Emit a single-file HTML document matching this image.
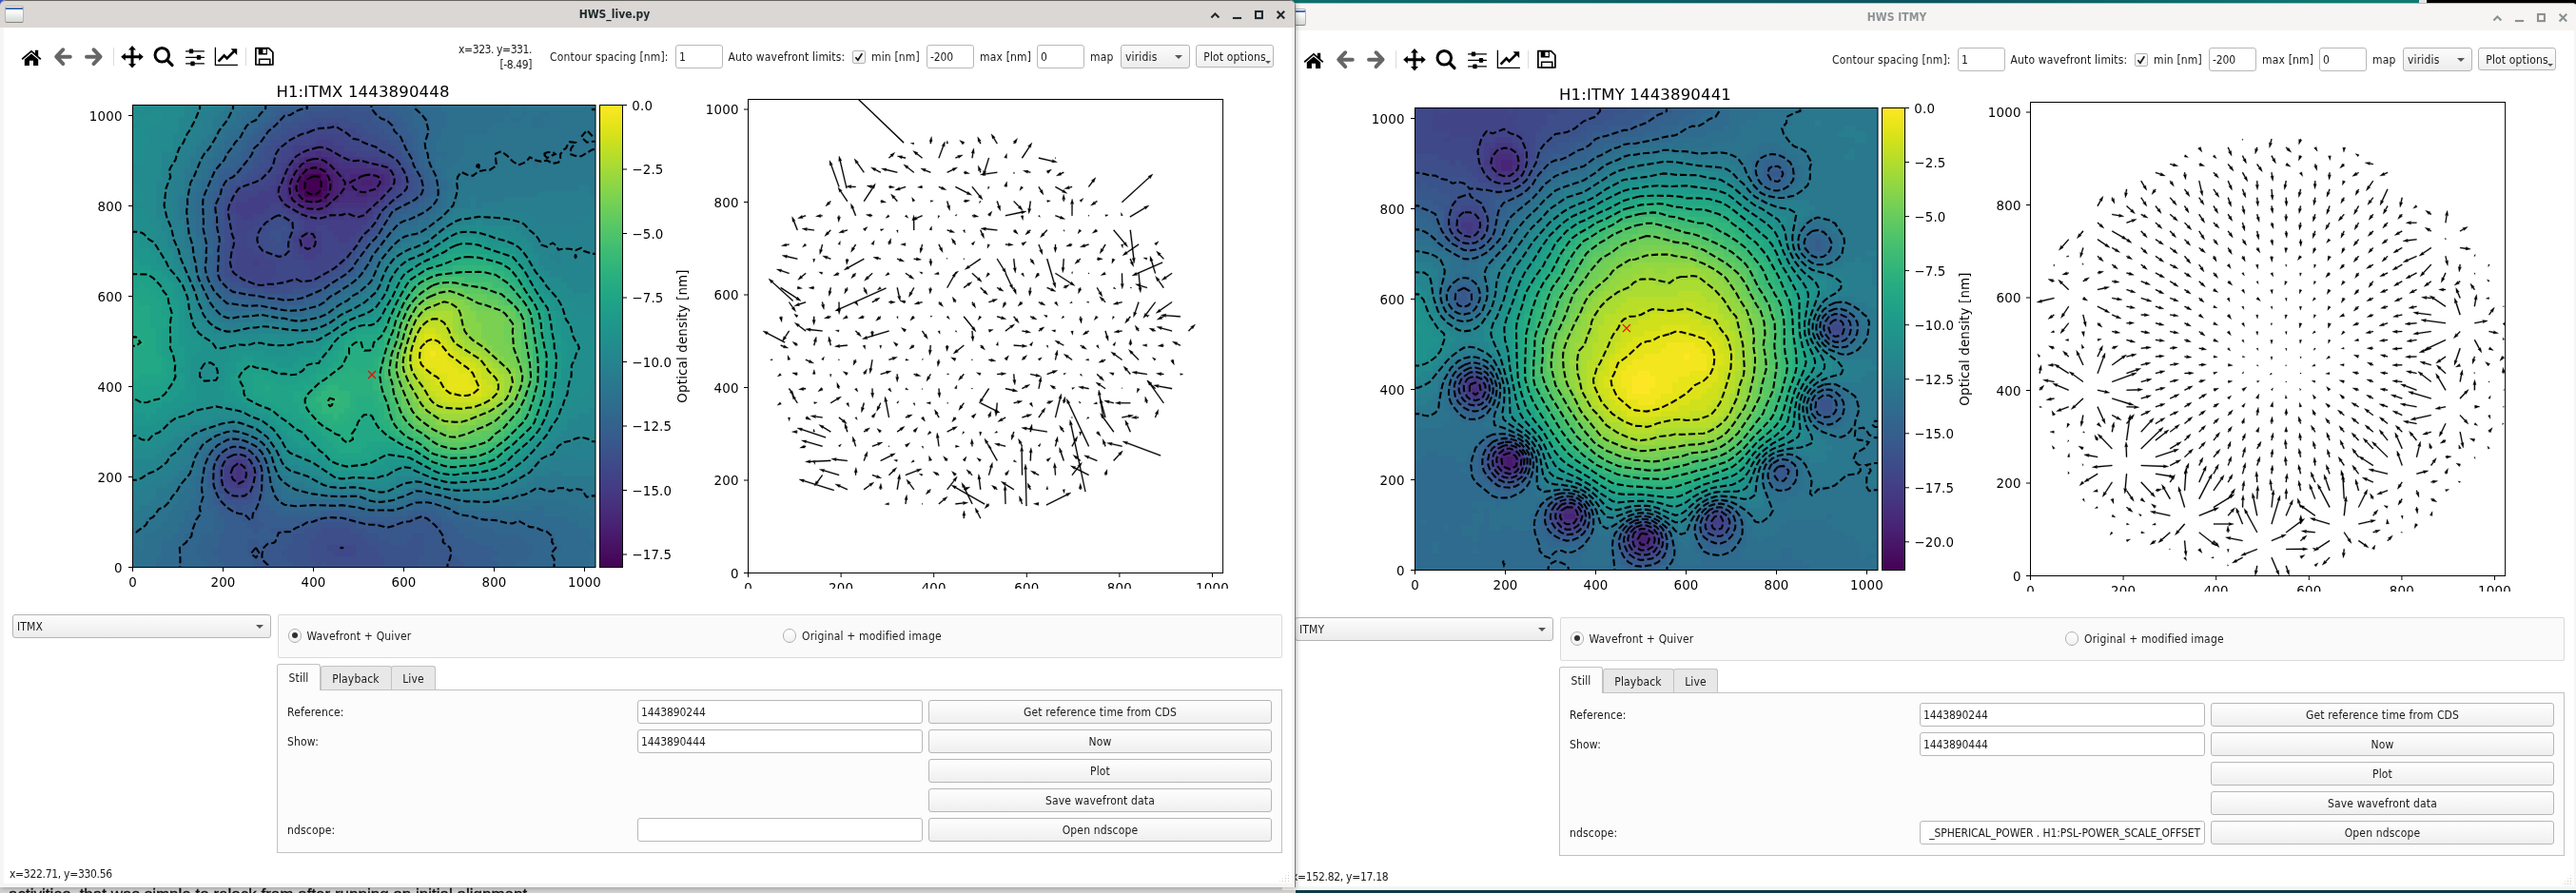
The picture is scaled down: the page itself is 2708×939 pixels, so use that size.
<!DOCTYPE html><html><head><meta charset="utf-8"><title>HWS</title><style>
html,body{margin:0;padding:0}
body{width:2708px;height:939px;overflow:hidden;position:relative;background:#0b3b47;font-family:'DejaVu Sans Condensed','DejaVu Sans','Liberation Sans',sans-serif;font-size:12px;color:#1a1a1a;letter-spacing:.17px}
div{box-sizing:border-box}
.topstrip{position:absolute;left:1356px;top:0;width:1187px;height:4px;background:linear-gradient(90deg,#0c6f6d,#0a5560 55%,#0e7a72 95%)}
.topw{position:absolute;left:2543px;top:0;width:8px;height:3px;background:#e4e4e4}
.topk{position:absolute;left:2551px;top:0;width:157px;height:4px;background:#000}
.botl{will-change:transform;position:absolute;left:0;top:930px;width:1362px;height:9px;background:#d2d2d2;overflow:hidden;font-family:'Liberation Sans',sans-serif;font-size:17px;letter-spacing:0;color:#111;white-space:nowrap}
.botl span{position:absolute;left:9px;top:0.5px;-webkit-text-stroke:.35px #111}
.botr{position:absolute;left:1362px;top:934px;width:1346px;height:5px;background:#0a3c49}
.win{position:absolute;width:1362px;height:933px;overflow:hidden}
#wx{left:0;top:0;z-index:3}
#wy{left:1348px;top:3px;z-index:2}
.win{background:#f6f5f4;border-radius:6px 6px 0 0}
.win.act{box-shadow:1px 1px 5px rgba(0,0,0,.28)}
.tbar{position:absolute;left:0;top:0;width:1362px;height:29px;background:#dbd7d4;border-top:1px solid #65625f;border-radius:6px 6px 0 0}
.inact .tbar{background:#f6f5f4;border-top-color:#bdbbb9}
.act{border-right:1px solid #7c7a78}
.ttl{position:absolute;left:346px;width:600px;top:6px;text-align:center;font-weight:bold;font-size:12px;letter-spacing:0;color:#1e282c;line-height:16px}
.inact .ttl{color:#8e9295}
.wicon{position:absolute;left:5px;top:4.5px;width:20px;height:18px;border:1px solid #b4b5b3;border-bottom-color:#858684;border-radius:2.5px;background:linear-gradient(#ffffff 25%,#d3d9d4);overflow:hidden}
.wicon i{position:absolute;left:0;top:1px;width:18px;height:2.2px;background:#4870ad}
.wb{position:absolute;left:1268px;top:6px}
.body{position:absolute;left:4px;top:29px;width:1354px;height:900px;background:#fff}
.body>*{position:absolute}
.body{will-change:transform}.tbar{will-change:transform}
.tb{left:-4px;top:13px}
.coords{left:355px;top:15px;width:200px;text-align:right;line-height:16px;white-space:nowrap;letter-spacing:-.42px}
.lbl{top:23px;line-height:16px;white-space:nowrap;margin-left:-4px}
.lbl2{line-height:16px;white-space:nowrap;margin-left:-4px;margin-top:-29px}
.inp{height:25px;margin:-29px 0 0 -4px;border:1px solid #b8b8b8;border-radius:3px;background:#fff;padding:1px 0 0 3px;line-height:23px;white-space:nowrap;overflow:hidden;letter-spacing:-.1px}
.inp.r{display:flex;justify-content:flex-end;padding:1px 4px 0 0}
.combo{height:25px;margin:-29px 0 0 -4px;border:1px solid #b4b4b4;border-radius:3px;background:linear-gradient(#fcfcfc,#ececec);padding-left:4px;line-height:25px}
.combo b,.popt b{position:absolute;width:0;height:0;border:4px solid transparent;border-top:4.5px solid #555;border-bottom:0}
.combo b{right:7px;top:10px}
.popt{line-height:24px}.popt b{right:2px;top:16px;border-width:3px;border-top-width:3.5px}
.btn{margin:-29px 0 0 -4px;border:1px solid #b6b6b6;border-radius:3px;background:linear-gradient(#fefefe,#efefef);text-align:center;line-height:25px;white-space:nowrap}
.chk{left:892px;top:23.5px;width:14px;height:14px;border:1px solid #b4b4b4;border-radius:2px;background:linear-gradient(#fdfdfd,#f0f0f0)}
.chk svg{position:absolute;left:0;top:0}
.fig{left:9px;top:56px;overflow:hidden}
.gbox{left:288px;top:617px;width:1056px;height:46px;border:1px solid #dadada;border-radius:2px;background:#fafafa}
.radio{top:632px;width:14.5px;height:14.5px;margin-left:-4px;border:1px solid #b0b0b0;border-radius:50%;background:linear-gradient(#fff,#f1f1f1)}
.radio.on:after{content:"";position:absolute;left:3.2px;top:3.2px;width:6px;height:6px;border-radius:50%;background:#303030}
.pane{left:287px;top:695.5px;width:1057px;height:172px;border:1px solid #c2c2c2;background:#fcfcfc}
.tab{top:670.5px;height:25.5px;border:1px solid #c2c2c2;border-bottom:0;border-radius:3px 3px 0 0;background:#e8e8e8;text-align:center;line-height:26px;margin-left:-4px}
.tab.sel{top:668.5px;height:28px;background:#fcfcfc;line-height:29px;z-index:2}
.status{left:6px;top:882px;line-height:16px;white-space:nowrap;letter-spacing:-.3px}
.grip{left:1340px;top:887px;width:12px;height:12px;background:radial-gradient(circle,#c8c8c8 0.7px,transparent 0.9px) 0 0/3px 3px;clip-path:polygon(100% 0,100% 100%,0 100%)}
</style></head><body><svg width="0" height="0" style="position:absolute"><defs><linearGradient id="vir" x1="0" y1="0" x2="0" y2="1"><stop offset="0.0000" stop-color="#fde725"/><stop offset="0.0312" stop-color="#ece51b"/><stop offset="0.0625" stop-color="#d8e219"/><stop offset="0.0938" stop-color="#c2df23"/><stop offset="0.1250" stop-color="#addc30"/><stop offset="0.1562" stop-color="#98d83e"/><stop offset="0.1875" stop-color="#84d44b"/><stop offset="0.2188" stop-color="#70cf57"/><stop offset="0.2500" stop-color="#5ec962"/><stop offset="0.2812" stop-color="#4ec36b"/><stop offset="0.3125" stop-color="#3fbc73"/><stop offset="0.3438" stop-color="#32b67a"/><stop offset="0.3750" stop-color="#28ae80"/><stop offset="0.4062" stop-color="#22a785"/><stop offset="0.4375" stop-color="#1fa088"/><stop offset="0.4688" stop-color="#1f988b"/><stop offset="0.5000" stop-color="#21918c"/><stop offset="0.5312" stop-color="#23898e"/><stop offset="0.5625" stop-color="#26828e"/><stop offset="0.5938" stop-color="#297a8e"/><stop offset="0.6250" stop-color="#2c728e"/><stop offset="0.6562" stop-color="#2f6b8e"/><stop offset="0.6875" stop-color="#33638d"/><stop offset="0.7188" stop-color="#375b8d"/><stop offset="0.7500" stop-color="#3b528b"/><stop offset="0.7812" stop-color="#3e4989"/><stop offset="0.8125" stop-color="#424086"/><stop offset="0.8438" stop-color="#453781"/><stop offset="0.8750" stop-color="#472d7b"/><stop offset="0.9062" stop-color="#482374"/><stop offset="0.9375" stop-color="#48186a"/><stop offset="0.9688" stop-color="#470d60"/><stop offset="1.0000" stop-color="#440154"/></linearGradient></defs></svg><div style="position:absolute;left:0;top:0;width:8px;height:8px;background:#3b55c4"></div><div class="topstrip"></div><div class="topw"></div><div class="topk"></div><div class="botl"><span>activities, that was simple to relock from after running an initial alignment.</span></div><div class="botr"></div><div class="win inact" id="wy"><div class="tbar"><div class="wicon"><i></i></div><div class="ttl">HWS ITMY</div><svg class="wb" width="90" height="16" viewBox="1268 7 90 16" fill="none" stroke="#8b9092" stroke-width="2.1">
<path d="M1273.4 18.4l4-4 4 4"/><path d="M1295.9 19h9.2"/><rect x="1320" y="12" width="6.9" height="7.1"/><path d="M1342.6 11.8l7.6 7.6M1350.2 11.8l-7.6 7.6"/></svg></div><div class="body">
<svg class="tb" width="300" height="34" viewBox="0 42 300 34">
 <g fill="#000">
  <path d="M22.6 61.6L33 52.8l3.9 3.3V52.8h3.3v6.1l3.2 2.7-1.1 1.3L33 55.1 23.7 62.9z"/>
  <path d="M25.8 62.6L33 56.5l7.2 6.1V69h-5.2v-5.2h-4.1V69h-5.1z"/>
 </g>
 <g fill="none" stroke="#666" stroke-width="3.9" stroke-linecap="round" stroke-linejoin="round">
  <path d="M66.3 52.2L59.2 59.7l7.1 7.5M60 59.7H73.8"/>
  <path d="M98.5 52.2l7.1 7.5-7.1 7.5M104.8 59.7H91"/>
 </g>
 <path d="M119.5 50v19M258.5 50v19" stroke="#dcdcdc" stroke-width="1"/>
 <g fill="#000">
  <path d="M139 47.9l4 4.6h-2.5v5.7h5.7v-2.5l4.6 4-4.6 4v-2.5h-5.7v5.7h2.5l-4 4.6-4-4.6h2.5v-5.7h-5.7v2.5l-4.6-4 4.6-4v2.5h5.7v-5.7h-2.5z"/>
 </g>
 <circle cx="170.3" cy="57.8" r="7.3" fill="none" stroke="#000" stroke-width="3"/>
 <path d="M175.6 63.1l5.4 5.4" stroke="#000" stroke-width="3.2" stroke-linecap="round"/>
 <g stroke="#000" stroke-width="1.3" stroke-linecap="round"><path d="M195.6 53.9h18.8M195.6 60.4h18.8M195.6 66.9h18.8"/></g>
 <g fill="#000"><rect x="198.8" y="51.6" width="4.4" height="4.6" rx="0.8"/><rect x="206.8" y="58.1" width="4.4" height="4.6" rx="0.8"/><rect x="200.3" y="64.6" width="4.4" height="4.6" rx="0.8"/></g>
 <path d="M226.4 49.8V68.4H249.9" fill="none" stroke="#000" stroke-width="1.3"/>
 <path d="M229.6 64.6l6-6.2 3 3 7.4-7.4" fill="none" stroke="#000" stroke-width="2.6"/>
 <path d="M242.6 51.3h6.6v6.6z" fill="#000"/>
 <path d="M268.9 50.6h13.6l4.4 4.4v13H268.9z" fill="none" stroke="#000" stroke-width="1.7" stroke-linejoin="round"/>
 <path d="M271.7 50.6h9.2v7h-9.2z M276.4 52h3.3v4.1h-3.3z" fill="#000" fill-rule="evenodd"/>
 <path d="M272.6 62.2h11.2v5.8h-11.2z" fill="none" stroke="#000" stroke-width="1.5"/>
</svg><div class="coords"></div><div class="lbl" style="left:578px">Contour spacing [nm]:</div><div class="inp" style="left:710px;top:47px;width:50px">1</div><div class="lbl" style="left:765.5px">Auto wavefront limits:</div><div class="chk"><svg width="12" height="12" viewBox="0 0 12 12"><path d="M2.4 6.2l2.5 3 4.4-7" fill="none" stroke="#1a1a1a" stroke-width="1.7"/></svg></div><div class="lbl" style="left:916px">min [nm]</div><div class="inp" style="left:974px;top:47px;width:50px">-200</div><div class="lbl" style="left:1030px">max [nm]</div><div class="inp" style="left:1090px;top:47px;width:50px">0</div><div class="lbl" style="left:1146px">map</div><div class="combo" style="left:1178px;top:47px;width:73px">viridis<b></b></div><div class="btn popt" style="left:1257px;top:47px;width:82px;height:24px">Plot options<b></b></div><svg class="fig" width="1336" height="534" viewBox="13 85 1336 534" font-family="'DejaVu Sans','Liberation Sans',sans-serif" fill="#000"><g shape-rendering="crispEdges"><path fill="#481b6d" d="M236 477h6v6h-6zM236 483h6v6h-6z"/><path fill="#482173" d="M230 477h6v6h-6zM242 477h6v6h-6zM230 483h6v6h-6zM242 483h6v6h-6zM374 561h12v6h-12z"/><path fill="#482677" d="M230 165h12v6h-12zM230 171h12v6h-12zM230 471h12v6h-12zM296 537h12v6h-12zM374 555h12v6h-12zM374 567h12v6h-12z"/><path fill="#472d7b" d="M224 159h18v6h-18zM224 165h6v6h-6zM242 165h6v6h-6zM224 171h6v6h-6zM200 405h6v6h-6zM242 471h6v6h-6zM224 477h6v6h-6zM236 489h6v6h-6zM296 531h12v6h-12zM368 561h6v6h-6zM386 561h6v6h-6z"/><path fill="#46337f" d="M224 153h18v6h-18zM218 159h6v6h-6zM242 159h6v6h-6zM218 165h6v6h-6zM242 171h6v6h-6zM224 177h18v6h-18zM194 399h12v6h-12zM194 405h6v6h-6zM248 477h6v6h-6zM224 483h6v6h-6zM230 489h6v6h-6zM242 489h6v6h-6zM290 537h6v6h-6zM308 537h6v6h-6zM296 543h12v6h-12zM368 555h6v6h-6zM386 555h6v6h-6zM368 567h6v6h-6zM386 567h6v6h-6z"/><path fill="#453882" d="M224 147h18v6h-18zM218 153h6v6h-6zM242 153h6v6h-6zM248 159h6v6h-6zM212 165h6v6h-6zM248 165h6v6h-6zM218 171h6v6h-6zM248 171h6v6h-6zM242 177h6v6h-6zM188 231h12v6h-12zM194 237h6v6h-6zM200 393h6v6h-6zM206 399h6v6h-6zM206 405h6v6h-6zM200 411h6v6h-6zM230 465h12v6h-12zM224 471h6v6h-6zM248 483h6v6h-6zM290 531h6v6h-6zM308 531h6v6h-6zM290 543h6v6h-6zM374 549h12v6h-12zM374 573h12v6h-12z"/><path fill="#433e85" d="M224 141h18v6h-18zM212 147h12v6h-12zM242 147h6v6h-6zM212 153h6v6h-6zM248 153h6v6h-6zM212 159h6v6h-6zM212 171h6v6h-6zM218 177h6v6h-6zM248 177h6v6h-6zM224 183h18v6h-18zM188 225h18v6h-18zM200 231h6v6h-6zM188 237h6v6h-6zM200 237h6v6h-6zM194 393h6v6h-6zM194 411h6v6h-6zM206 411h6v6h-6zM242 465h6v6h-6zM248 471h6v6h-6zM224 489h6v6h-6zM248 489h6v6h-6zM236 495h6v6h-6zM296 525h12v6h-12zM308 543h6v6h-6zM452 543h12v6h-12zM296 549h12v6h-12zM362 561h6v6h-6zM392 561h6v6h-6zM368 573h6v6h-6zM386 573h6v6h-6z"/><path fill="#414487" d="M158 111h6v6h-6zM176 111h60v6h-60zM242 111h6v6h-6zM158 117h90v6h-90zM158 123h84v6h-84zM158 129h90v6h-90zM176 135h78v6h-78zM170 141h6v6h-6zM200 141h24v6h-24zM242 141h12v6h-12zM200 147h12v6h-12zM248 147h12v6h-12zM200 153h12v6h-12zM254 153h6v6h-6zM206 159h6v6h-6zM254 159h6v6h-6zM206 165h6v6h-6zM254 165h6v6h-6zM206 171h6v6h-6zM212 177h6v6h-6zM218 183h6v6h-6zM242 183h6v6h-6zM188 219h18v6h-18zM182 225h6v6h-6zM206 225h6v6h-6zM182 231h6v6h-6zM206 231h6v6h-6zM182 237h6v6h-6zM188 243h12v6h-12zM206 393h6v6h-6zM188 399h6v6h-6zM188 405h6v6h-6zM224 465h6v6h-6zM218 477h6v6h-6zM218 483h6v6h-6zM230 495h6v6h-6zM242 495h6v6h-6zM290 525h6v6h-6zM284 537h6v6h-6zM452 537h12v6h-12zM368 549h6v6h-6zM386 549h6v6h-6zM452 549h12v6h-12zM362 555h6v6h-6zM362 567h6v6h-6zM392 567h6v6h-6z"/><path fill="#3f4889" d="M140 111h18v6h-18zM164 111h12v6h-12zM236 111h6v6h-6zM248 111h42v6h-42zM140 117h18v6h-18zM248 117h30v6h-30zM140 123h18v6h-18zM242 123h36v6h-36zM140 129h18v6h-18zM248 129h24v6h-24zM140 135h36v6h-36zM254 135h12v6h-12zM140 141h30v6h-30zM176 141h24v6h-24zM254 141h12v6h-12zM140 147h60v6h-60zM260 147h6v6h-6zM140 153h60v6h-60zM260 153h6v6h-6zM164 159h42v6h-42zM260 159h6v6h-6zM176 165h6v6h-6zM188 165h18v6h-18zM194 171h12v6h-12zM254 171h6v6h-6zM200 177h12v6h-12zM206 183h12v6h-12zM248 183h6v6h-6zM218 189h24v6h-24zM188 213h18v6h-18zM182 219h6v6h-6zM206 219h6v6h-6zM176 231h6v6h-6zM206 237h6v6h-6zM200 243h6v6h-6zM578 339h12v6h-12zM200 387h6v6h-6zM188 393h6v6h-6zM212 399h6v6h-6zM212 405h6v6h-6zM188 411h6v6h-6zM200 417h6v6h-6zM218 471h6v6h-6zM224 495h6v6h-6zM308 525h6v6h-6zM284 531h6v6h-6zM314 537h6v6h-6zM284 543h6v6h-6zM446 543h6v6h-6zM464 543h6v6h-6zM290 549h6v6h-6zM308 549h6v6h-6zM446 549h6v6h-6zM392 555h6v6h-6zM362 573h6v6h-6zM392 573h6v6h-6zM374 579h12v6h-12z"/><path fill="#3d4e8a" d="M290 111h42v6h-42zM278 117h48v6h-48zM278 123h36v6h-36zM272 129h30v6h-30zM266 135h18v6h-18zM266 141h12v6h-12zM266 147h6v6h-6zM140 159h24v6h-24zM140 165h36v6h-36zM182 165h6v6h-6zM260 165h6v6h-6zM140 171h54v6h-54zM164 177h36v6h-36zM254 177h6v6h-6zM194 183h12v6h-12zM200 189h18v6h-18zM242 189h6v6h-6zM224 195h6v6h-6zM182 207h24v6h-24zM176 213h12v6h-12zM206 213h6v6h-6zM176 219h6v6h-6zM176 225h6v6h-6zM212 225h6v6h-6zM212 231h6v6h-6zM176 237h6v6h-6zM182 243h6v6h-6zM206 243h6v6h-6zM188 249h12v6h-12zM578 333h12v6h-12zM572 339h6v6h-6zM578 345h12v6h-12zM194 387h6v6h-6zM212 411h6v6h-6zM194 417h6v6h-6zM206 417h6v6h-6zM236 459h6v6h-6zM248 465h6v6h-6zM254 477h6v6h-6zM254 483h6v6h-6zM218 489h6v6h-6zM248 495h6v6h-6zM314 531h6v6h-6zM446 537h6v6h-6zM464 537h6v6h-6zM314 543h6v6h-6zM464 549h6v6h-6zM296 555h12v6h-12zM446 555h18v6h-18zM368 579h6v6h-6zM386 579h6v6h-6z"/><path fill="#3a538b" d="M332 111h30v6h-30zM326 117h24v6h-24zM314 123h24v6h-24zM302 129h18v6h-18zM284 135h30v6h-30zM278 141h24v6h-24zM272 147h18v6h-18zM266 153h12v6h-12zM266 159h6v6h-6zM266 165h6v6h-6zM260 171h6v6h-6zM140 177h24v6h-24zM260 177h6v6h-6zM140 183h54v6h-54zM254 183h6v6h-6zM140 189h6v6h-6zM152 189h48v6h-48zM248 189h6v6h-6zM164 195h60v6h-60zM230 195h12v6h-12zM176 201h42v6h-42zM176 207h6v6h-6zM206 207h12v6h-12zM170 213h6v6h-6zM212 213h6v6h-6zM170 219h6v6h-6zM212 219h6v6h-6zM170 225h6v6h-6zM170 231h6v6h-6zM212 237h6v6h-6zM176 243h6v6h-6zM182 249h6v6h-6zM200 249h6v6h-6zM572 333h6v6h-6zM590 339h6v6h-6zM572 345h6v6h-6zM206 387h6v6h-6zM212 393h6v6h-6zM182 399h6v6h-6zM182 405h6v6h-6zM188 417h6v6h-6zM566 417h12v6h-12zM566 423h12v6h-12zM230 459h6v6h-6zM218 465h6v6h-6zM212 477h6v6h-6zM212 483h6v6h-6zM230 501h18v6h-18zM296 519h12v6h-12zM284 525h6v6h-6zM452 531h12v6h-12zM278 537h6v6h-6zM278 543h6v6h-6zM374 543h12v6h-12zM284 549h6v6h-6zM314 549h6v6h-6zM362 549h6v6h-6zM392 549h6v6h-6zM440 549h6v6h-6zM290 555h6v6h-6zM464 555h6v6h-6zM356 561h6v6h-6zM398 561h6v6h-6zM356 567h6v6h-6zM398 567h6v6h-6zM362 579h6v6h-6zM392 579h6v6h-6z"/><path fill="#38588c" d="M362 111h24v6h-24zM350 117h30v6h-30zM338 123h30v6h-30zM320 129h24v6h-24zM314 135h12v6h-12zM302 141h18v6h-18zM290 147h18v6h-18zM278 153h24v6h-24zM272 159h12v6h-12zM272 165h6v6h-6zM266 171h6v6h-6zM512 177h12v6h-12zM260 183h6v6h-6zM146 189h6v6h-6zM254 189h6v6h-6zM140 195h24v6h-24zM242 195h12v6h-12zM140 201h36v6h-36zM218 201h24v6h-24zM158 207h18v6h-18zM218 207h6v6h-6zM164 213h6v6h-6zM218 213h6v6h-6zM218 219h6v6h-6zM218 225h6v6h-6zM218 231h6v6h-6zM170 237h6v6h-6zM212 243h6v6h-6zM206 249h6v6h-6zM194 255h6v6h-6zM188 303h6v6h-6zM182 309h12v6h-12zM578 327h12v6h-12zM590 333h6v6h-6zM590 345h6v6h-6zM578 351h12v6h-12zM188 387h6v6h-6zM182 393h6v6h-6zM182 411h6v6h-6zM212 417h6v6h-6zM560 417h6v6h-6zM194 423h12v6h-12zM560 423h6v6h-6zM566 429h12v6h-12zM224 459h6v6h-6zM242 459h6v6h-6zM212 471h6v6h-6zM254 471h6v6h-6zM212 489h6v6h-6zM254 489h6v6h-6zM518 489h12v6h-12zM218 495h6v6h-6zM518 495h12v6h-12zM224 501h6v6h-6zM290 519h6v6h-6zM314 525h6v6h-6zM278 531h6v6h-6zM368 543h6v6h-6zM386 543h6v6h-6zM440 543h6v6h-6zM470 543h6v6h-6zM470 549h6v6h-6zM308 555h6v6h-6zM356 555h6v6h-6zM398 555h6v6h-6zM440 555h6v6h-6zM452 561h12v6h-12zM356 573h6v6h-6zM398 573h6v6h-6zM368 585h24v6h-24z"/><path fill="#365d8d" d="M386 111h24v6h-24zM380 117h18v6h-18zM368 123h18v6h-18zM344 129h30v6h-30zM326 135h30v6h-30zM320 141h12v6h-12zM308 147h18v6h-18zM302 153h12v6h-12zM284 159h18v6h-18zM278 165h6v6h-6zM272 171h6v6h-6zM512 171h12v6h-12zM266 177h6v6h-6zM506 177h6v6h-6zM524 177h6v6h-6zM512 183h12v6h-12zM260 189h6v6h-6zM254 195h6v6h-6zM242 201h6v6h-6zM140 207h18v6h-18zM224 207h12v6h-12zM140 213h24v6h-24zM224 213h6v6h-6zM158 219h12v6h-12zM224 219h6v6h-6zM164 225h6v6h-6zM164 231h6v6h-6zM164 237h6v6h-6zM218 237h6v6h-6zM170 243h6v6h-6zM218 243h6v6h-6zM176 249h6v6h-6zM212 249h6v6h-6zM560 249h6v6h-6zM188 255h6v6h-6zM200 255h12v6h-12zM560 255h6v6h-6zM188 297h6v6h-6zM182 303h6v6h-6zM194 303h6v6h-6zM194 309h6v6h-6zM182 315h18v6h-18zM572 327h6v6h-6zM590 327h6v6h-6zM566 339h6v6h-6zM572 351h6v6h-6zM590 351h6v6h-6zM194 381h12v6h-12zM212 387h6v6h-6zM218 399h6v6h-6zM218 405h6v6h-6zM566 411h12v6h-12zM182 417h6v6h-6zM578 417h6v6h-6zM188 423h6v6h-6zM206 423h6v6h-6zM578 423h6v6h-6zM560 429h6v6h-6zM218 459h6v6h-6zM212 465h6v6h-6zM524 483h6v6h-6zM530 489h6v6h-6zM212 495h6v6h-6zM254 495h6v6h-6zM218 501h6v6h-6zM248 501h6v6h-6zM236 507h6v6h-6zM284 519h6v6h-6zM308 519h6v6h-6zM278 525h6v6h-6zM446 531h6v6h-6zM464 531h6v6h-6zM320 537h6v6h-6zM440 537h6v6h-6zM470 537h6v6h-6zM278 549h6v6h-6zM284 555h6v6h-6zM314 555h6v6h-6zM470 555h6v6h-6zM290 561h18v6h-18zM446 561h6v6h-6zM464 561h6v6h-6zM356 579h6v6h-6zM398 579h6v6h-6zM362 585h6v6h-6zM392 585h6v6h-6z"/><path fill="#33628d" d="M410 111h24v6h-24zM398 117h24v6h-24zM386 123h30v6h-30zM374 129h24v6h-24zM356 135h24v6h-24zM332 141h24v6h-24zM326 147h12v6h-12zM314 153h12v6h-12zM302 159h18v6h-18zM284 165h18v6h-18zM506 165h18v6h-18zM278 171h12v6h-12zM506 171h6v6h-6zM524 171h6v6h-6zM272 177h6v6h-6zM266 183h6v6h-6zM506 183h6v6h-6zM524 183h6v6h-6zM512 189h12v6h-12zM248 201h6v6h-6zM236 207h12v6h-12zM230 213h6v6h-6zM140 219h18v6h-18zM230 219h6v6h-6zM152 225h12v6h-12zM224 225h6v6h-6zM158 231h6v6h-6zM224 231h6v6h-6zM224 237h6v6h-6zM164 243h6v6h-6zM554 243h12v6h-12zM170 249h6v6h-6zM554 249h6v6h-6zM566 249h6v6h-6zM182 255h6v6h-6zM554 255h6v6h-6zM566 255h6v6h-6zM194 261h6v6h-6zM182 297h6v6h-6zM194 297h6v6h-6zM176 303h6v6h-6zM200 303h6v6h-6zM176 309h6v6h-6zM200 309h6v6h-6zM188 321h6v6h-6zM566 333h6v6h-6zM596 333h6v6h-6zM596 339h6v6h-6zM566 345h6v6h-6zM596 345h6v6h-6zM206 381h6v6h-6zM182 387h6v6h-6zM218 393h6v6h-6zM176 399h6v6h-6zM176 405h6v6h-6zM176 411h6v6h-6zM218 411h6v6h-6zM560 411h6v6h-6zM578 411h6v6h-6zM212 423h6v6h-6zM194 429h12v6h-12zM578 429h6v6h-6zM566 435h12v6h-12zM248 459h6v6h-6zM254 465h6v6h-6zM206 471h6v6h-6zM206 477h6v6h-6zM206 483h6v6h-6zM518 483h6v6h-6zM530 483h6v6h-6zM206 489h6v6h-6zM512 489h6v6h-6zM512 495h6v6h-6zM530 495h6v6h-6zM518 501h18v6h-18zM224 507h12v6h-12zM242 507h6v6h-6zM272 531h6v6h-6zM320 531h6v6h-6zM272 537h6v6h-6zM272 543h6v6h-6zM320 543h6v6h-6zM362 543h6v6h-6zM476 543h6v6h-6zM272 549h6v6h-6zM320 549h6v6h-6zM356 549h6v6h-6zM398 549h6v6h-6zM434 549h6v6h-6zM476 549h6v6h-6zM278 555h6v6h-6zM284 561h6v6h-6zM308 561h6v6h-6zM350 561h6v6h-6zM440 561h6v6h-6zM470 561h6v6h-6zM350 567h6v6h-6zM404 567h6v6h-6zM446 567h24v6h-24zM350 573h6v6h-6zM404 573h6v6h-6zM356 585h6v6h-6zM398 585h6v6h-6zM362 591h30v6h-30z"/><path fill="#31668e" d="M434 111h18v6h-18zM422 117h18v6h-18zM416 123h18v6h-18zM398 129h18v6h-18zM380 135h30v6h-30zM356 141h24v6h-24zM338 147h18v6h-18zM326 153h12v6h-12zM320 159h6v6h-6zM512 159h12v6h-12zM302 165h18v6h-18zM500 165h6v6h-6zM524 165h6v6h-6zM290 171h12v6h-12zM500 171h6v6h-6zM530 171h6v6h-6zM278 177h6v6h-6zM500 177h6v6h-6zM530 177h6v6h-6zM272 183h6v6h-6zM500 183h6v6h-6zM530 183h6v6h-6zM266 189h6v6h-6zM506 189h6v6h-6zM524 189h6v6h-6zM260 195h6v6h-6zM254 201h6v6h-6zM248 207h6v6h-6zM236 213h12v6h-12zM236 219h6v6h-6zM140 225h12v6h-12zM230 225h6v6h-6zM140 231h18v6h-18zM230 231h6v6h-6zM152 237h12v6h-12zM158 243h6v6h-6zM224 243h6v6h-6zM566 243h6v6h-6zM164 249h6v6h-6zM218 249h6v6h-6zM548 249h6v6h-6zM572 249h6v6h-6zM176 255h6v6h-6zM212 255h6v6h-6zM548 255h6v6h-6zM572 255h6v6h-6zM182 261h12v6h-12zM200 261h12v6h-12zM554 261h18v6h-18zM182 291h18v6h-18zM176 297h6v6h-6zM200 297h6v6h-6zM176 315h6v6h-6zM200 315h6v6h-6zM182 321h6v6h-6zM194 321h6v6h-6zM578 321h12v6h-12zM596 327h6v6h-6zM596 351h6v6h-6zM578 357h18v6h-18zM188 381h6v6h-6zM176 393h6v6h-6zM566 405h12v6h-12zM176 417h6v6h-6zM218 417h6v6h-6zM554 417h6v6h-6zM584 417h6v6h-6zM182 423h6v6h-6zM554 423h6v6h-6zM584 423h6v6h-6zM188 429h6v6h-6zM206 429h6v6h-6zM584 429h6v6h-6zM560 435h6v6h-6zM578 435h6v6h-6zM218 453h24v6h-24zM212 459h6v6h-6zM206 465h6v6h-6zM200 477h6v6h-6zM260 477h6v6h-6zM200 483h6v6h-6zM260 483h6v6h-6zM512 483h6v6h-6zM200 489h6v6h-6zM536 489h6v6h-6zM206 495h6v6h-6zM536 495h6v6h-6zM206 501h12v6h-12zM254 501h6v6h-6zM512 501h6v6h-6zM218 507h6v6h-6zM248 507h6v6h-6zM518 507h12v6h-12zM224 513h18v6h-18zM296 513h6v6h-6zM278 519h6v6h-6zM272 525h6v6h-6zM452 525h12v6h-12zM470 531h6v6h-6zM266 537h6v6h-6zM476 537h6v6h-6zM266 543h6v6h-6zM392 543h6v6h-6zM434 543h6v6h-6zM266 549h6v6h-6zM266 555h12v6h-12zM320 555h6v6h-6zM350 555h6v6h-6zM404 555h6v6h-6zM434 555h6v6h-6zM476 555h6v6h-6zM272 561h12v6h-12zM314 561h6v6h-6zM404 561h6v6h-6zM476 561h6v6h-6zM278 567h36v6h-36zM440 567h6v6h-6zM470 567h6v6h-6zM446 573h24v6h-24zM350 579h6v6h-6zM404 579h6v6h-6zM350 585h6v6h-6zM356 591h6v6h-6zM392 591h6v6h-6z"/><path fill="#2f6b8e" d="M452 111h18v6h-18zM440 117h30v6h-30zM434 123h36v6h-36zM416 129h48v6h-48zM410 135h36v6h-36zM380 141h30v6h-30zM356 147h18v6h-18zM338 153h12v6h-12zM512 153h6v6h-6zM326 159h12v6h-12zM500 159h12v6h-12zM524 159h6v6h-6zM320 165h6v6h-6zM494 165h6v6h-6zM530 165h6v6h-6zM302 171h18v6h-18zM494 171h6v6h-6zM536 171h6v6h-6zM284 177h18v6h-18zM494 177h6v6h-6zM536 177h6v6h-6zM278 183h12v6h-12zM536 183h6v6h-6zM272 189h6v6h-6zM500 189h6v6h-6zM530 189h6v6h-6zM266 195h6v6h-6zM512 195h18v6h-18zM260 201h6v6h-6zM254 207h6v6h-6zM248 213h6v6h-6zM242 219h6v6h-6zM236 225h6v6h-6zM140 237h12v6h-12zM230 237h6v6h-6zM554 237h18v6h-18zM140 243h18v6h-18zM230 243h6v6h-6zM548 243h6v6h-6zM572 243h6v6h-6zM158 249h6v6h-6zM224 249h6v6h-6zM164 255h12v6h-12zM218 255h6v6h-6zM176 261h6v6h-6zM212 261h6v6h-6zM572 261h6v6h-6zM188 267h18v6h-18zM560 267h6v6h-6zM188 273h6v6h-6zM182 285h18v6h-18zM176 291h6v6h-6zM200 291h6v6h-6zM170 297h6v6h-6zM170 303h6v6h-6zM206 303h6v6h-6zM170 309h6v6h-6zM206 309h6v6h-6zM176 321h6v6h-6zM200 321h6v6h-6zM572 321h6v6h-6zM590 321h6v6h-6zM566 327h6v6h-6zM602 333h6v6h-6zM602 339h6v6h-6zM602 345h6v6h-6zM566 351h6v6h-6zM572 357h6v6h-6zM194 375h12v6h-12zM182 381h6v6h-6zM212 381h6v6h-6zM176 387h6v6h-6zM218 387h6v6h-6zM578 405h6v6h-6zM584 411h6v6h-6zM176 423h6v6h-6zM218 423h6v6h-6zM182 429h6v6h-6zM212 429h6v6h-6zM554 429h6v6h-6zM188 435h24v6h-24zM584 435h6v6h-6zM566 441h18v6h-18zM212 453h6v6h-6zM242 453h6v6h-6zM206 459h6v6h-6zM200 465h6v6h-6zM152 471h12v6h-12zM194 471h12v6h-12zM146 477h36v6h-36zM194 477h6v6h-6zM518 477h18v6h-18zM140 483h60v6h-60zM536 483h6v6h-6zM140 489h48v6h-48zM194 489h6v6h-6zM260 489h6v6h-6zM140 495h66v6h-66zM260 495h6v6h-6zM140 501h66v6h-66zM536 501h6v6h-6zM140 507h78v6h-78zM254 507h6v6h-6zM512 507h6v6h-6zM530 507h6v6h-6zM140 513h84v6h-84zM242 513h12v6h-12zM290 513h6v6h-6zM302 513h6v6h-6zM140 519h108v6h-108zM314 519h6v6h-6zM140 525h60v6h-60zM224 525h6v6h-6zM266 525h6v6h-6zM320 525h6v6h-6zM446 525h6v6h-6zM464 525h6v6h-6zM140 531h66v6h-66zM212 531h6v6h-6zM266 531h6v6h-6zM440 531h6v6h-6zM140 537h60v6h-60zM212 537h6v6h-6zM260 537h6v6h-6zM368 537h18v6h-18zM434 537h6v6h-6zM140 543h6v6h-6zM152 543h48v6h-48zM212 543h6v6h-6zM260 543h6v6h-6zM482 543h6v6h-6zM140 549h30v6h-30zM176 549h12v6h-12zM206 549h12v6h-12zM230 549h12v6h-12zM260 549h6v6h-6zM482 549h6v6h-6zM140 555h48v6h-48zM206 555h60v6h-60zM482 555h6v6h-6zM140 561h60v6h-60zM206 561h66v6h-66zM320 561h6v6h-6zM344 561h6v6h-6zM434 561h6v6h-6zM482 561h6v6h-6zM140 567h18v6h-18zM164 567h114v6h-114zM314 567h6v6h-6zM344 567h6v6h-6zM410 567h6v6h-6zM434 567h6v6h-6zM476 567h12v6h-12zM140 573h18v6h-18zM164 573h36v6h-36zM206 573h114v6h-114zM344 573h6v6h-6zM410 573h6v6h-6zM434 573h12v6h-12zM470 573h12v6h-12zM524 573h12v6h-12zM140 579h174v6h-174zM344 579h6v6h-6zM410 579h6v6h-6zM440 579h42v6h-42zM524 579h12v6h-12zM140 585h174v6h-174zM344 585h6v6h-6zM404 585h12v6h-12zM440 585h108v6h-108zM140 591h216v6h-216zM398 591h156v6h-156z"/><path fill="#2d708e" d="M470 111h30v6h-30zM470 117h30v6h-30zM470 123h18v6h-18zM464 129h18v6h-18zM446 135h36v6h-36zM410 141h66v6h-66zM374 147h30v6h-30zM410 147h12v6h-12zM428 147h24v6h-24zM500 147h24v6h-24zM350 153h12v6h-12zM494 153h18v6h-18zM518 153h12v6h-12zM338 159h12v6h-12zM488 159h12v6h-12zM530 159h12v6h-12zM326 165h12v6h-12zM488 165h6v6h-6zM536 165h6v6h-6zM320 171h6v6h-6zM542 171h6v6h-6zM302 177h18v6h-18zM542 177h6v6h-6zM290 183h12v6h-12zM494 183h6v6h-6zM542 183h6v6h-6zM278 189h12v6h-12zM536 189h6v6h-6zM272 195h6v6h-6zM506 195h6v6h-6zM530 195h6v6h-6zM266 201h6v6h-6zM260 207h6v6h-6zM254 213h6v6h-6zM248 219h6v6h-6zM242 225h6v6h-6zM236 231h6v6h-6zM554 231h18v6h-18zM236 237h6v6h-6zM548 237h6v6h-6zM572 237h6v6h-6zM578 243h6v6h-6zM140 249h18v6h-18zM230 249h6v6h-6zM542 249h6v6h-6zM578 249h6v6h-6zM158 255h6v6h-6zM224 255h6v6h-6zM578 255h6v6h-6zM170 261h6v6h-6zM218 261h6v6h-6zM548 261h6v6h-6zM578 261h6v6h-6zM176 267h12v6h-12zM206 267h6v6h-6zM554 267h6v6h-6zM566 267h12v6h-12zM176 273h12v6h-12zM194 273h12v6h-12zM176 279h30v6h-30zM176 285h6v6h-6zM200 285h6v6h-6zM170 291h6v6h-6zM206 291h6v6h-6zM206 297h6v6h-6zM170 315h6v6h-6zM206 315h6v6h-6zM578 315h12v6h-12zM596 321h6v6h-6zM182 327h18v6h-18zM602 327h6v6h-6zM560 339h6v6h-6zM608 339h6v6h-6zM602 351h6v6h-6zM596 357h6v6h-6zM584 363h12v6h-12zM188 375h6v6h-6zM206 375h6v6h-6zM170 399h6v6h-6zM224 399h6v6h-6zM170 405h6v6h-6zM224 405h6v6h-6zM560 405h6v6h-6zM584 405h6v6h-6zM170 411h6v6h-6zM224 411h6v6h-6zM554 411h6v6h-6zM590 411h6v6h-6zM170 417h6v6h-6zM590 417h6v6h-6zM170 423h6v6h-6zM590 423h6v6h-6zM176 429h6v6h-6zM590 429h6v6h-6zM176 435h12v6h-12zM212 435h6v6h-6zM554 435h6v6h-6zM590 435h6v6h-6zM170 441h42v6h-42zM560 441h6v6h-6zM584 441h6v6h-6zM140 447h96v6h-96zM140 453h72v6h-72zM140 459h66v6h-66zM140 465h60v6h-60zM140 471h12v6h-12zM164 471h30v6h-30zM260 471h6v6h-6zM140 477h6v6h-6zM182 477h12v6h-12zM536 477h6v6h-6zM542 483h6v6h-6zM188 489h6v6h-6zM506 489h6v6h-6zM542 489h6v6h-6zM506 495h6v6h-6zM542 495h6v6h-6zM260 501h6v6h-6zM506 501h6v6h-6zM542 501h6v6h-6zM260 507h6v6h-6zM536 507h12v6h-12zM254 513h12v6h-12zM284 513h6v6h-6zM308 513h6v6h-6zM512 513h30v6h-30zM248 519h30v6h-30zM518 519h12v6h-12zM200 525h24v6h-24zM230 525h36v6h-36zM470 525h6v6h-6zM206 531h6v6h-6zM218 531h48v6h-48zM476 531h6v6h-6zM200 537h12v6h-12zM218 537h42v6h-42zM326 537h6v6h-6zM386 537h6v6h-6zM482 537h6v6h-6zM572 537h6v6h-6zM146 543h6v6h-6zM200 543h12v6h-12zM218 543h42v6h-42zM326 543h6v6h-6zM356 543h6v6h-6zM398 543h6v6h-6zM530 543h42v6h-42zM170 549h6v6h-6zM188 549h18v6h-18zM218 549h12v6h-12zM242 549h18v6h-18zM326 549h6v6h-6zM350 549h6v6h-6zM404 549h6v6h-6zM428 549h6v6h-6zM488 549h6v6h-6zM524 549h54v6h-54zM188 555h18v6h-18zM326 555h6v6h-6zM344 555h6v6h-6zM428 555h6v6h-6zM488 555h6v6h-6zM518 555h72v6h-72zM200 561h6v6h-6zM326 561h18v6h-18zM410 561h6v6h-6zM428 561h6v6h-6zM488 561h12v6h-12zM506 561h96v6h-96zM158 567h6v6h-6zM320 567h24v6h-24zM416 567h6v6h-6zM428 567h6v6h-6zM488 567h120v6h-120zM620 567h6v6h-6zM158 573h6v6h-6zM200 573h6v6h-6zM320 573h24v6h-24zM416 573h18v6h-18zM482 573h42v6h-42zM536 573h72v6h-72zM314 579h30v6h-30zM416 579h24v6h-24zM482 579h42v6h-42zM536 579h72v6h-72zM614 579h12v6h-12zM314 585h30v6h-30zM416 585h24v6h-24zM548 585h72v6h-72zM554 591h72v6h-72z"/><path fill="#2c738e" d="M500 111h48v6h-48zM500 117h36v6h-36zM488 123h48v6h-48zM482 129h48v6h-48zM482 135h48v6h-48zM476 141h54v6h-54zM404 147h6v6h-6zM422 147h6v6h-6zM452 147h48v6h-48zM524 147h12v6h-12zM362 153h36v6h-36zM410 153h84v6h-84zM530 153h24v6h-24zM350 159h12v6h-12zM476 159h12v6h-12zM542 159h12v6h-12zM338 165h6v6h-6zM482 165h6v6h-6zM542 165h18v6h-18zM326 171h12v6h-12zM488 171h6v6h-6zM548 171h6v6h-6zM320 177h6v6h-6zM488 177h6v6h-6zM548 177h6v6h-6zM302 183h18v6h-18zM548 183h6v6h-6zM290 189h12v6h-12zM494 189h6v6h-6zM542 189h12v6h-12zM278 195h6v6h-6zM500 195h6v6h-6zM536 195h12v6h-12zM272 201h6v6h-6zM512 201h24v6h-24zM266 207h6v6h-6zM260 213h6v6h-6zM254 219h6v6h-6zM248 225h6v6h-6zM554 225h24v6h-24zM242 231h6v6h-6zM548 231h6v6h-6zM572 231h12v6h-12zM242 237h6v6h-6zM542 237h6v6h-6zM578 237h12v6h-12zM236 243h6v6h-6zM542 243h6v6h-6zM584 243h6v6h-6zM584 249h6v6h-6zM140 255h18v6h-18zM230 255h6v6h-6zM542 255h6v6h-6zM584 255h6v6h-6zM152 261h18v6h-18zM224 261h6v6h-6zM584 261h6v6h-6zM164 267h12v6h-12zM212 267h12v6h-12zM578 267h6v6h-6zM170 273h6v6h-6zM206 273h12v6h-12zM170 279h6v6h-6zM206 279h6v6h-6zM170 285h6v6h-6zM206 285h6v6h-6zM164 297h6v6h-6zM212 297h6v6h-6zM164 303h6v6h-6zM212 303h6v6h-6zM164 309h6v6h-6zM572 315h6v6h-6zM590 315h12v6h-12zM170 321h6v6h-6zM206 321h6v6h-6zM566 321h6v6h-6zM602 321h6v6h-6zM176 327h6v6h-6zM200 327h6v6h-6zM608 327h6v6h-6zM560 333h6v6h-6zM608 333h12v6h-12zM560 345h6v6h-6zM608 345h6v6h-6zM608 351h6v6h-6zM602 357h6v6h-6zM578 363h6v6h-6zM596 363h6v6h-6zM182 375h6v6h-6zM212 375h6v6h-6zM176 381h6v6h-6zM218 381h6v6h-6zM170 393h6v6h-6zM224 393h6v6h-6zM566 399h18v6h-18zM164 405h6v6h-6zM590 405h6v6h-6zM164 411h6v6h-6zM596 411h6v6h-6zM164 417h6v6h-6zM224 417h6v6h-6zM596 417h12v6h-12zM164 423h6v6h-6zM596 423h12v6h-12zM140 429h6v6h-6zM158 429h18v6h-18zM218 429h6v6h-6zM596 429h12v6h-12zM140 435h36v6h-36zM218 435h6v6h-6zM596 435h6v6h-6zM620 435h6v6h-6zM140 441h30v6h-30zM212 441h12v6h-12zM590 441h12v6h-12zM620 441h6v6h-6zM236 447h6v6h-6zM566 447h30v6h-30zM602 447h12v6h-12zM248 453h6v6h-6zM578 453h18v6h-18zM602 453h24v6h-24zM254 459h6v6h-6zM614 459h12v6h-12zM608 465h18v6h-18zM602 471h24v6h-24zM512 477h6v6h-6zM542 477h6v6h-6zM596 477h30v6h-30zM506 483h6v6h-6zM602 483h18v6h-18zM548 489h6v6h-6zM608 489h12v6h-12zM548 495h6v6h-6zM590 495h24v6h-24zM548 501h12v6h-12zM584 501h30v6h-30zM266 507h6v6h-6zM506 507h6v6h-6zM548 507h6v6h-6zM560 507h54v6h-54zM620 507h6v6h-6zM266 513h18v6h-18zM506 513h6v6h-6zM542 513h12v6h-12zM560 513h66v6h-66zM512 519h6v6h-6zM530 519h96v6h-96zM512 525h114v6h-114zM326 531h6v6h-6zM482 531h6v6h-6zM512 531h114v6h-114zM362 537h6v6h-6zM488 537h6v6h-6zM512 537h60v6h-60zM578 537h48v6h-48zM428 543h6v6h-6zM488 543h42v6h-42zM572 543h54v6h-54zM332 549h6v6h-6zM344 549h6v6h-6zM494 549h30v6h-30zM578 549h48v6h-48zM332 555h12v6h-12zM410 555h6v6h-6zM422 555h6v6h-6zM494 555h24v6h-24zM590 555h36v6h-36zM416 561h12v6h-12zM500 561h6v6h-6zM602 561h24v6h-24zM422 567h6v6h-6zM608 567h12v6h-12zM608 573h18v6h-18zM608 579h6v6h-6zM620 585h6v6h-6z"/><path fill="#2a788e" d="M548 111h78v6h-78zM536 117h90v6h-90zM536 123h24v6h-24zM566 123h60v6h-60zM530 129h60v6h-60zM602 129h24v6h-24zM530 135h54v6h-54zM614 135h12v6h-12zM530 141h72v6h-72zM614 141h12v6h-12zM536 147h90v6h-90zM398 153h12v6h-12zM554 153h42v6h-42zM602 153h24v6h-24zM362 159h30v6h-30zM422 159h54v6h-54zM554 159h36v6h-36zM602 159h24v6h-24zM344 165h18v6h-18zM470 165h12v6h-12zM560 165h66v6h-66zM338 171h6v6h-6zM476 171h12v6h-12zM554 171h72v6h-72zM326 177h12v6h-12zM482 177h6v6h-6zM554 177h72v6h-72zM320 183h6v6h-6zM488 183h6v6h-6zM554 183h72v6h-72zM302 189h12v6h-12zM554 189h72v6h-72zM284 195h12v6h-12zM494 195h6v6h-6zM548 195h78v6h-78zM278 201h12v6h-12zM506 201h6v6h-6zM536 201h90v6h-90zM272 207h6v6h-6zM554 207h72v6h-72zM266 213h6v6h-6zM560 213h66v6h-66zM260 219h6v6h-6zM554 219h72v6h-72zM254 225h6v6h-6zM548 225h6v6h-6zM578 225h48v6h-48zM248 231h12v6h-12zM542 231h6v6h-6zM584 231h42v6h-42zM248 237h6v6h-6zM590 237h36v6h-36zM242 243h6v6h-6zM590 243h36v6h-36zM236 249h6v6h-6zM590 249h36v6h-36zM590 255h36v6h-36zM140 261h12v6h-12zM230 261h6v6h-6zM542 261h6v6h-6zM590 261h24v6h-24zM140 267h24v6h-24zM224 267h6v6h-6zM548 267h6v6h-6zM584 267h18v6h-18zM608 267h18v6h-18zM158 273h12v6h-12zM218 273h6v6h-6zM554 273h36v6h-36zM620 273h6v6h-6zM164 279h6v6h-6zM212 279h6v6h-6zM620 279h6v6h-6zM164 285h6v6h-6zM212 285h6v6h-6zM620 285h6v6h-6zM164 291h6v6h-6zM212 291h6v6h-6zM620 291h6v6h-6zM212 309h6v6h-6zM584 309h18v6h-18zM164 315h6v6h-6zM212 315h6v6h-6zM602 315h12v6h-12zM608 321h18v6h-18zM170 327h6v6h-6zM206 327h6v6h-6zM560 327h6v6h-6zM614 327h12v6h-12zM182 333h18v6h-18zM620 333h6v6h-6zM614 339h12v6h-12zM614 345h12v6h-12zM560 351h6v6h-6zM614 351h12v6h-12zM566 357h6v6h-6zM608 357h18v6h-18zM572 363h6v6h-6zM602 363h24v6h-24zM188 369h24v6h-24zM584 369h42v6h-42zM176 375h6v6h-6zM620 375h6v6h-6zM170 387h6v6h-6zM614 387h12v6h-12zM164 393h6v6h-6zM608 393h18v6h-18zM164 399h6v6h-6zM584 399h42v6h-42zM554 405h6v6h-6zM596 405h30v6h-30zM158 411h6v6h-6zM602 411h24v6h-24zM152 417h12v6h-12zM548 417h6v6h-6zM608 417h18v6h-18zM140 423h24v6h-24zM224 423h6v6h-6zM548 423h6v6h-6zM608 423h18v6h-18zM146 429h12v6h-12zM548 429h6v6h-6zM608 429h18v6h-18zM224 435h6v6h-6zM602 435h18v6h-18zM224 441h6v6h-6zM554 441h6v6h-6zM602 441h18v6h-18zM560 447h6v6h-6zM596 447h6v6h-6zM614 447h12v6h-12zM566 453h12v6h-12zM596 453h6v6h-6zM572 459h42v6h-42zM260 465h6v6h-6zM578 465h30v6h-30zM524 471h18v6h-18zM572 471h30v6h-30zM548 477h6v6h-6zM572 477h24v6h-24zM266 483h6v6h-6zM548 483h54v6h-54zM620 483h6v6h-6zM266 489h6v6h-6zM554 489h54v6h-54zM620 489h6v6h-6zM266 495h6v6h-6zM554 495h36v6h-36zM614 495h12v6h-12zM266 501h6v6h-6zM500 501h6v6h-6zM560 501h24v6h-24zM614 501h12v6h-12zM272 507h6v6h-6zM290 507h6v6h-6zM554 507h6v6h-6zM614 507h6v6h-6zM314 513h6v6h-6zM554 513h6v6h-6zM320 519h6v6h-6zM452 519h18v6h-18zM506 519h6v6h-6zM440 525h6v6h-6zM476 525h12v6h-12zM506 525h6v6h-6zM434 531h6v6h-6zM488 531h24v6h-24zM392 537h6v6h-6zM428 537h6v6h-6zM494 537h18v6h-18zM332 543h6v6h-6zM350 543h6v6h-6zM338 549h6v6h-6zM410 549h6v6h-6zM422 549h6v6h-6zM416 555h6v6h-6z"/><path fill="#287d8e" d="M560 123h6v6h-6zM590 129h12v6h-12zM584 135h30v6h-30zM602 141h12v6h-12zM596 153h6v6h-6zM392 159h30v6h-30zM590 159h12v6h-12zM362 165h12v6h-12zM434 165h36v6h-36zM344 171h12v6h-12zM470 171h6v6h-6zM338 177h6v6h-6zM476 177h6v6h-6zM326 183h6v6h-6zM482 183h6v6h-6zM314 189h12v6h-12zM488 189h6v6h-6zM296 195h18v6h-18zM290 201h6v6h-6zM500 201h6v6h-6zM278 207h6v6h-6zM512 207h42v6h-42zM272 213h6v6h-6zM542 213h18v6h-18zM266 219h6v6h-6zM548 219h6v6h-6zM260 225h6v6h-6zM542 225h6v6h-6zM536 237h6v6h-6zM248 243h6v6h-6zM536 243h6v6h-6zM242 249h6v6h-6zM536 249h6v6h-6zM236 255h6v6h-6zM536 255h6v6h-6zM236 261h6v6h-6zM614 261h12v6h-12zM230 267h6v6h-6zM602 267h6v6h-6zM140 273h18v6h-18zM224 273h6v6h-6zM590 273h30v6h-30zM158 279h6v6h-6zM218 279h6v6h-6zM572 279h48v6h-48zM158 285h6v6h-6zM218 285h6v6h-6zM590 285h30v6h-30zM158 291h6v6h-6zM218 291h6v6h-6zM596 291h24v6h-24zM158 297h6v6h-6zM218 297h6v6h-6zM596 297h30v6h-30zM158 303h6v6h-6zM218 303h6v6h-6zM584 303h42v6h-42zM572 309h12v6h-12zM602 309h24v6h-24zM566 315h6v6h-6zM614 315h12v6h-12zM164 321h6v6h-6zM212 321h6v6h-6zM176 333h6v6h-6zM200 333h6v6h-6zM188 339h6v6h-6zM188 363h18v6h-18zM182 369h6v6h-6zM212 369h6v6h-6zM578 369h6v6h-6zM218 375h6v6h-6zM590 375h30v6h-30zM170 381h6v6h-6zM596 381h30v6h-30zM164 387h6v6h-6zM224 387h6v6h-6zM596 387h18v6h-18zM158 393h6v6h-6zM572 393h36v6h-36zM158 399h6v6h-6zM560 399h6v6h-6zM152 405h12v6h-12zM140 411h18v6h-18zM548 411h6v6h-6zM140 417h12v6h-12zM224 429h6v6h-6zM548 435h6v6h-6zM230 441h6v6h-6zM242 447h6v6h-6zM554 447h6v6h-6zM560 453h6v6h-6zM560 459h12v6h-12zM560 465h18v6h-18zM518 471h6v6h-6zM542 471h30v6h-30zM266 477h6v6h-6zM506 477h6v6h-6zM554 477h18v6h-18zM500 489h6v6h-6zM500 495h6v6h-6zM272 501h6v6h-6zM278 507h12v6h-12zM296 507h12v6h-12zM500 507h6v6h-6zM500 513h6v6h-6zM446 519h6v6h-6zM470 519h6v6h-6zM500 519h6v6h-6zM326 525h6v6h-6zM488 525h18v6h-18zM374 531h12v6h-12zM332 537h6v6h-6zM356 537h6v6h-6zM338 543h12v6h-12zM404 543h6v6h-6zM422 543h6v6h-6zM416 549h6v6h-6z"/><path fill="#26818e" d="M374 165h60v6h-60zM356 171h24v6h-24zM446 171h24v6h-24zM344 177h6v6h-6zM470 177h6v6h-6zM332 183h12v6h-12zM476 183h6v6h-6zM326 189h6v6h-6zM482 189h6v6h-6zM314 195h6v6h-6zM488 195h6v6h-6zM296 201h12v6h-12zM494 201h6v6h-6zM284 207h12v6h-12zM506 207h6v6h-6zM278 213h6v6h-6zM518 213h24v6h-24zM272 219h6v6h-6zM536 219h12v6h-12zM266 225h6v6h-6zM536 225h6v6h-6zM260 231h6v6h-6zM536 231h6v6h-6zM254 237h6v6h-6zM254 243h6v6h-6zM248 249h6v6h-6zM242 255h6v6h-6zM536 261h6v6h-6zM236 267h6v6h-6zM542 267h6v6h-6zM230 273h6v6h-6zM548 273h6v6h-6zM140 279h18v6h-18zM224 279h6v6h-6zM554 279h18v6h-18zM152 285h6v6h-6zM224 285h6v6h-6zM572 285h18v6h-18zM152 291h6v6h-6zM224 291h6v6h-6zM578 291h18v6h-18zM578 297h18v6h-18zM578 303h6v6h-6zM158 309h6v6h-6zM218 309h6v6h-6zM566 309h6v6h-6zM158 315h6v6h-6zM218 315h6v6h-6zM560 321h6v6h-6zM164 327h6v6h-6zM212 327h6v6h-6zM170 333h6v6h-6zM206 333h6v6h-6zM176 339h12v6h-12zM194 339h12v6h-12zM554 339h6v6h-6zM188 345h12v6h-12zM188 357h18v6h-18zM182 363h6v6h-6zM206 363h6v6h-6zM566 363h6v6h-6zM176 369h6v6h-6zM218 369h6v6h-6zM170 375h6v6h-6zM584 375h6v6h-6zM164 381h6v6h-6zM224 381h6v6h-6zM584 381h12v6h-12zM158 387h6v6h-6zM578 387h18v6h-18zM152 393h6v6h-6zM566 393h6v6h-6zM140 399h18v6h-18zM230 399h6v6h-6zM140 405h12v6h-12zM230 405h6v6h-6zM230 411h6v6h-6zM230 417h6v6h-6zM230 423h6v6h-6zM230 435h6v6h-6zM236 441h6v6h-6zM548 441h6v6h-6zM254 453h6v6h-6zM554 453h6v6h-6zM260 459h6v6h-6zM548 459h12v6h-12zM530 465h30v6h-30zM266 471h6v6h-6zM512 471h6v6h-6zM500 483h6v6h-6zM272 495h6v6h-6zM278 501h6v6h-6zM308 507h6v6h-6zM494 507h6v6h-6zM494 513h6v6h-6zM476 519h24v6h-24zM434 525h6v6h-6zM332 531h6v6h-6zM362 531h12v6h-12zM386 531h6v6h-6zM428 531h6v6h-6zM338 537h18v6h-18zM398 537h6v6h-6zM410 543h12v6h-12z"/><path fill="#25858e" d="M380 171h66v6h-66zM350 177h18v6h-18zM458 177h12v6h-12zM344 183h6v6h-6zM470 183h6v6h-6zM332 189h6v6h-6zM476 189h6v6h-6zM320 195h12v6h-12zM482 195h6v6h-6zM308 201h12v6h-12zM488 201h6v6h-6zM296 207h6v6h-6zM500 207h6v6h-6zM284 213h12v6h-12zM512 213h6v6h-6zM278 219h6v6h-6zM518 219h18v6h-18zM272 225h6v6h-6zM530 225h6v6h-6zM266 231h6v6h-6zM530 231h6v6h-6zM260 237h6v6h-6zM530 237h6v6h-6zM530 243h6v6h-6zM254 249h6v6h-6zM248 255h6v6h-6zM242 261h6v6h-6zM236 273h6v6h-6zM542 273h6v6h-6zM230 279h6v6h-6zM140 285h12v6h-12zM230 285h6v6h-6zM560 285h12v6h-12zM140 291h12v6h-12zM572 291h6v6h-6zM146 297h12v6h-12zM224 297h6v6h-6zM572 297h6v6h-6zM152 303h6v6h-6zM224 303h6v6h-6zM566 303h12v6h-12zM152 309h6v6h-6zM224 309h6v6h-6zM560 315h6v6h-6zM158 321h6v6h-6zM218 321h6v6h-6zM164 333h6v6h-6zM212 333h6v6h-6zM554 333h6v6h-6zM170 339h6v6h-6zM206 339h6v6h-6zM176 345h12v6h-12zM200 345h12v6h-12zM554 345h6v6h-6zM182 351h30v6h-30zM176 357h12v6h-12zM206 357h12v6h-12zM560 357h6v6h-6zM176 363h6v6h-6zM212 363h6v6h-6zM170 369h6v6h-6zM572 369h6v6h-6zM164 375h6v6h-6zM224 375h6v6h-6zM578 375h6v6h-6zM158 381h6v6h-6zM578 381h6v6h-6zM146 387h12v6h-12zM572 387h6v6h-6zM140 393h12v6h-12zM230 393h6v6h-6zM560 393h6v6h-6zM554 399h6v6h-6zM548 405h6v6h-6zM230 429h6v6h-6zM242 441h6v6h-6zM248 447h6v6h-6zM548 447h6v6h-6zM548 453h6v6h-6zM542 459h6v6h-6zM266 465h6v6h-6zM524 465h6v6h-6zM272 489h6v6h-6zM494 495h6v6h-6zM284 501h12v6h-12zM494 501h6v6h-6zM320 513h6v6h-6zM488 513h6v6h-6zM326 519h6v6h-6zM440 519h6v6h-6zM332 525h6v6h-6zM356 531h6v6h-6zM392 531h6v6h-6zM404 537h6v6h-6zM422 537h6v6h-6z"/><path fill="#238a8d" d="M368 177h30v6h-30zM410 177h48v6h-48zM350 183h6v6h-6zM464 183h6v6h-6zM338 189h6v6h-6zM470 189h6v6h-6zM332 195h6v6h-6zM476 195h6v6h-6zM320 201h6v6h-6zM302 207h12v6h-12zM494 207h6v6h-6zM296 213h6v6h-6zM506 213h6v6h-6zM284 219h6v6h-6zM512 219h6v6h-6zM278 225h6v6h-6zM524 225h6v6h-6zM272 231h6v6h-6zM524 231h6v6h-6zM266 237h6v6h-6zM260 243h6v6h-6zM530 249h6v6h-6zM254 255h6v6h-6zM530 255h6v6h-6zM248 261h6v6h-6zM242 267h6v6h-6zM536 267h6v6h-6zM242 273h6v6h-6zM236 279h6v6h-6zM548 279h6v6h-6zM236 285h6v6h-6zM554 285h6v6h-6zM230 291h6v6h-6zM560 291h12v6h-12zM140 297h6v6h-6zM230 297h6v6h-6zM566 297h6v6h-6zM146 303h6v6h-6zM230 303h6v6h-6zM560 309h6v6h-6zM152 315h6v6h-6zM224 315h6v6h-6zM152 321h6v6h-6zM224 321h6v6h-6zM158 327h6v6h-6zM218 327h6v6h-6zM554 327h6v6h-6zM158 333h6v6h-6zM218 333h6v6h-6zM164 339h6v6h-6zM212 339h6v6h-6zM170 345h6v6h-6zM212 345h6v6h-6zM170 351h12v6h-12zM212 351h6v6h-6zM554 351h6v6h-6zM170 357h6v6h-6zM218 357h6v6h-6zM170 363h6v6h-6zM218 363h6v6h-6zM560 363h6v6h-6zM164 369h6v6h-6zM224 369h6v6h-6zM566 369h6v6h-6zM158 375h6v6h-6zM572 375h6v6h-6zM140 381h18v6h-18zM572 381h6v6h-6zM140 387h6v6h-6zM230 387h6v6h-6zM566 387h6v6h-6zM542 417h6v6h-6zM236 423h6v6h-6zM542 423h6v6h-6zM236 429h6v6h-6zM542 429h6v6h-6zM236 435h6v6h-6zM542 435h6v6h-6zM542 441h6v6h-6zM542 447h6v6h-6zM260 453h6v6h-6zM542 453h6v6h-6zM536 459h6v6h-6zM518 465h6v6h-6zM506 471h6v6h-6zM272 477h6v6h-6zM500 477h6v6h-6zM272 483h6v6h-6zM494 489h6v6h-6zM278 495h6v6h-6zM296 501h6v6h-6zM314 507h6v6h-6zM488 507h6v6h-6zM452 513h36v6h-36zM428 525h6v6h-6zM338 531h18v6h-18zM422 531h6v6h-6zM410 537h12v6h-12z"/><path fill="#218e8d" d="M398 177h12v6h-12zM356 183h36v6h-36zM440 183h24v6h-24zM344 189h12v6h-12zM464 189h6v6h-6zM338 195h6v6h-6zM326 201h6v6h-6zM482 201h6v6h-6zM314 207h12v6h-12zM488 207h6v6h-6zM302 213h6v6h-6zM494 213h12v6h-12zM290 219h6v6h-6zM506 219h6v6h-6zM284 225h6v6h-6zM518 225h6v6h-6zM278 231h6v6h-6zM518 231h6v6h-6zM272 237h6v6h-6zM524 237h6v6h-6zM266 243h6v6h-6zM524 243h6v6h-6zM260 249h6v6h-6zM260 255h6v6h-6zM254 261h6v6h-6zM530 261h6v6h-6zM248 267h6v6h-6zM248 273h6v6h-6zM536 273h6v6h-6zM242 279h6v6h-6zM542 279h6v6h-6zM548 285h6v6h-6zM236 291h6v6h-6zM554 291h6v6h-6zM236 297h6v6h-6zM560 297h6v6h-6zM140 303h6v6h-6zM560 303h6v6h-6zM140 309h12v6h-12zM230 309h6v6h-6zM146 315h6v6h-6zM230 315h6v6h-6zM554 315h6v6h-6zM146 321h6v6h-6zM554 321h6v6h-6zM152 327h6v6h-6zM224 327h6v6h-6zM152 333h6v6h-6zM224 333h6v6h-6zM158 339h6v6h-6zM218 339h6v6h-6zM158 345h12v6h-12zM218 345h6v6h-6zM164 351h6v6h-6zM218 351h6v6h-6zM158 357h12v6h-12zM224 357h6v6h-6zM554 357h6v6h-6zM152 363h18v6h-18zM224 363h6v6h-6zM152 369h12v6h-12zM140 375h18v6h-18zM230 375h6v6h-6zM566 375h6v6h-6zM230 381h6v6h-6zM566 381h6v6h-6zM560 387h6v6h-6zM554 393h6v6h-6zM236 399h6v6h-6zM548 399h6v6h-6zM236 405h6v6h-6zM236 411h6v6h-6zM542 411h6v6h-6zM236 417h6v6h-6zM242 435h6v6h-6zM248 441h6v6h-6zM254 447h6v6h-6zM536 453h6v6h-6zM266 459h6v6h-6zM530 459h6v6h-6zM512 465h6v6h-6zM272 471h6v6h-6zM278 489h6v6h-6zM284 495h6v6h-6zM302 501h12v6h-12zM488 501h6v6h-6zM482 507h6v6h-6zM326 513h6v6h-6zM446 513h6v6h-6zM332 519h6v6h-6zM434 519h6v6h-6zM338 525h6v6h-6zM368 525h18v6h-18zM398 531h6v6h-6z"/><path fill="#20928c" d="M392 183h48v6h-48zM356 189h18v6h-18zM446 189h18v6h-18zM344 195h6v6h-6zM470 195h6v6h-6zM332 201h6v6h-6zM476 201h6v6h-6zM326 207h6v6h-6zM482 207h6v6h-6zM308 213h12v6h-12zM488 213h6v6h-6zM296 219h6v6h-6zM500 219h6v6h-6zM290 225h6v6h-6zM506 225h12v6h-12zM284 231h6v6h-6zM278 237h6v6h-6zM518 237h6v6h-6zM272 243h6v6h-6zM266 249h6v6h-6zM524 249h6v6h-6zM260 261h6v6h-6zM254 267h6v6h-6zM530 267h6v6h-6zM248 279h6v6h-6zM242 285h6v6h-6zM542 285h6v6h-6zM242 291h6v6h-6zM548 291h6v6h-6zM554 297h6v6h-6zM236 303h6v6h-6zM554 303h6v6h-6zM236 309h6v6h-6zM554 309h6v6h-6zM140 315h6v6h-6zM140 321h6v6h-6zM230 321h6v6h-6zM140 327h12v6h-12zM230 327h6v6h-6zM140 333h12v6h-12zM548 333h6v6h-6zM146 339h12v6h-12zM224 339h6v6h-6zM548 339h6v6h-6zM140 345h18v6h-18zM224 345h6v6h-6zM548 345h6v6h-6zM140 351h24v6h-24zM224 351h6v6h-6zM140 357h18v6h-18zM140 363h12v6h-12zM230 363h6v6h-6zM140 369h12v6h-12zM230 369h6v6h-6zM560 369h6v6h-6zM560 375h6v6h-6zM560 381h6v6h-6zM236 393h6v6h-6zM242 423h6v6h-6zM242 429h6v6h-6zM248 435h6v6h-6zM536 447h6v6h-6zM530 453h6v6h-6zM524 459h6v6h-6zM272 465h6v6h-6zM278 483h6v6h-6zM494 483h6v6h-6zM284 489h6v6h-6zM290 495h12v6h-12zM488 495h6v6h-6zM482 501h6v6h-6zM320 507h6v6h-6zM464 507h18v6h-18zM440 513h6v6h-6zM344 525h24v6h-24zM386 525h12v6h-12zM422 525h6v6h-6zM404 531h18v6h-18z"/><path fill="#1f968b" d="M374 189h72v6h-72zM350 195h12v6h-12zM458 195h12v6h-12zM338 201h12v6h-12zM470 201h6v6h-6zM332 207h6v6h-6zM476 207h6v6h-6zM320 213h6v6h-6zM482 213h6v6h-6zM302 219h12v6h-12zM494 219h6v6h-6zM296 225h6v6h-6zM500 225h6v6h-6zM290 231h6v6h-6zM512 231h6v6h-6zM284 237h6v6h-6zM278 243h6v6h-6zM518 243h6v6h-6zM272 249h6v6h-6zM266 255h6v6h-6zM524 255h6v6h-6zM266 261h6v6h-6zM524 261h6v6h-6zM260 267h6v6h-6zM254 273h6v6h-6zM530 273h6v6h-6zM254 279h6v6h-6zM536 279h6v6h-6zM248 285h6v6h-6zM248 291h6v6h-6zM242 297h6v6h-6zM548 297h6v6h-6zM242 303h6v6h-6zM236 315h6v6h-6zM548 315h6v6h-6zM236 321h6v6h-6zM548 321h6v6h-6zM548 327h6v6h-6zM230 333h6v6h-6zM140 339h6v6h-6zM230 339h6v6h-6zM230 345h6v6h-6zM230 351h6v6h-6zM548 351h6v6h-6zM230 357h6v6h-6zM554 363h6v6h-6zM236 369h6v6h-6zM236 375h6v6h-6zM236 381h6v6h-6zM236 387h6v6h-6zM554 387h6v6h-6zM548 393h6v6h-6zM542 405h6v6h-6zM242 411h6v6h-6zM242 417h6v6h-6zM536 423h6v6h-6zM248 429h6v6h-6zM536 429h6v6h-6zM536 435h6v6h-6zM254 441h6v6h-6zM536 441h6v6h-6zM260 447h6v6h-6zM266 453h6v6h-6zM518 459h6v6h-6zM506 465h6v6h-6zM500 471h6v6h-6zM278 477h6v6h-6zM494 477h6v6h-6zM284 483h6v6h-6zM290 489h6v6h-6zM488 489h6v6h-6zM302 495h6v6h-6zM314 501h6v6h-6zM476 501h6v6h-6zM452 507h12v6h-12zM332 513h6v6h-6zM434 513h6v6h-6zM338 519h6v6h-6zM428 519h6v6h-6zM398 525h6v6h-6zM416 525h6v6h-6z"/><path fill="#1e9b8a" d="M362 195h24v6h-24zM392 195h66v6h-66zM350 201h6v6h-6zM464 201h6v6h-6zM338 207h6v6h-6zM470 207h6v6h-6zM326 213h6v6h-6zM314 219h6v6h-6zM488 219h6v6h-6zM302 225h6v6h-6zM494 225h6v6h-6zM296 231h6v6h-6zM500 231h12v6h-12zM512 237h6v6h-6zM278 249h6v6h-6zM518 249h6v6h-6zM272 255h6v6h-6zM266 267h6v6h-6zM524 267h6v6h-6zM260 273h6v6h-6zM260 279h6v6h-6zM254 285h6v6h-6zM536 285h6v6h-6zM542 291h6v6h-6zM248 297h6v6h-6zM542 297h6v6h-6zM548 303h6v6h-6zM242 309h6v6h-6zM548 309h6v6h-6zM242 315h6v6h-6zM236 327h6v6h-6zM236 333h6v6h-6zM236 339h6v6h-6zM236 345h6v6h-6zM236 351h6v6h-6zM236 357h6v6h-6zM548 357h6v6h-6zM236 363h6v6h-6zM554 369h6v6h-6zM554 375h6v6h-6zM554 381h6v6h-6zM548 387h6v6h-6zM242 399h6v6h-6zM542 399h6v6h-6zM242 405h6v6h-6zM536 417h6v6h-6zM248 423h6v6h-6zM254 435h6v6h-6zM260 441h6v6h-6zM266 447h6v6h-6zM530 447h6v6h-6zM524 453h6v6h-6zM272 459h6v6h-6zM512 459h6v6h-6zM278 471h6v6h-6zM284 477h6v6h-6zM290 483h6v6h-6zM488 483h6v6h-6zM296 489h6v6h-6zM308 495h6v6h-6zM482 495h6v6h-6zM320 501h6v6h-6zM464 501h12v6h-12zM326 507h6v6h-6zM446 507h6v6h-6zM338 513h6v6h-6zM344 519h48v6h-48zM422 519h6v6h-6zM404 525h12v6h-12z"/><path fill="#1fa088" d="M386 195h6v6h-6zM356 201h12v6h-12zM422 201h6v6h-6zM434 201h30v6h-30zM344 207h6v6h-6zM464 207h6v6h-6zM332 213h12v6h-12zM476 213h6v6h-6zM320 219h6v6h-6zM482 219h6v6h-6zM308 225h12v6h-12zM488 225h6v6h-6zM302 231h6v6h-6zM494 231h6v6h-6zM290 237h6v6h-6zM500 237h12v6h-12zM284 243h6v6h-6zM512 243h6v6h-6zM512 249h6v6h-6zM278 255h6v6h-6zM518 255h6v6h-6zM272 261h6v6h-6zM272 267h6v6h-6zM266 273h6v6h-6zM524 273h6v6h-6zM530 279h6v6h-6zM260 285h6v6h-6zM254 291h6v6h-6zM536 291h6v6h-6zM254 297h6v6h-6zM248 303h6v6h-6zM542 303h6v6h-6zM248 309h6v6h-6zM542 309h6v6h-6zM248 315h6v6h-6zM542 315h6v6h-6zM242 321h6v6h-6zM542 321h6v6h-6zM242 327h6v6h-6zM542 327h6v6h-6zM242 333h6v6h-6zM542 333h6v6h-6zM542 339h6v6h-6zM242 345h6v6h-6zM542 345h6v6h-6zM242 357h6v6h-6zM242 363h6v6h-6zM548 363h6v6h-6zM242 369h6v6h-6zM548 369h6v6h-6zM242 375h6v6h-6zM242 381h6v6h-6zM548 381h6v6h-6zM242 387h6v6h-6zM242 393h6v6h-6zM542 393h6v6h-6zM248 411h6v6h-6zM536 411h6v6h-6zM248 417h6v6h-6zM254 429h6v6h-6zM530 435h6v6h-6zM530 441h6v6h-6zM524 447h6v6h-6zM272 453h6v6h-6zM518 453h6v6h-6zM278 465h6v6h-6zM500 465h6v6h-6zM284 471h6v6h-6zM494 471h6v6h-6zM302 489h6v6h-6zM482 489h6v6h-6zM314 495h6v6h-6zM476 495h6v6h-6zM326 501h6v6h-6zM458 501h6v6h-6zM332 507h6v6h-6zM434 507h12v6h-12zM344 513h6v6h-6zM428 513h6v6h-6zM392 519h30v6h-30z"/><path fill="#20a386" d="M368 201h54v6h-54zM428 201h6v6h-6zM350 207h12v6h-12zM452 207h12v6h-12zM344 213h6v6h-6zM470 213h6v6h-6zM326 219h12v6h-12zM476 219h6v6h-6zM320 225h6v6h-6zM482 225h6v6h-6zM308 231h6v6h-6zM488 231h6v6h-6zM296 237h6v6h-6zM494 237h6v6h-6zM290 243h6v6h-6zM500 243h12v6h-12zM284 249h6v6h-6zM284 255h6v6h-6zM512 255h6v6h-6zM278 261h6v6h-6zM518 261h6v6h-6zM518 267h6v6h-6zM272 273h6v6h-6zM266 279h6v6h-6zM524 279h6v6h-6zM266 285h6v6h-6zM530 285h6v6h-6zM260 291h6v6h-6zM530 291h6v6h-6zM536 297h6v6h-6zM254 303h6v6h-6zM536 303h6v6h-6zM254 309h6v6h-6zM248 321h6v6h-6zM248 327h6v6h-6zM242 339h6v6h-6zM242 351h6v6h-6zM542 351h6v6h-6zM542 357h6v6h-6zM548 375h6v6h-6zM542 387h6v6h-6zM248 399h6v6h-6zM248 405h6v6h-6zM536 405h6v6h-6zM254 423h6v6h-6zM530 423h6v6h-6zM260 429h6v6h-6zM530 429h6v6h-6zM260 435h6v6h-6zM266 441h6v6h-6zM272 447h6v6h-6zM512 453h6v6h-6zM278 459h6v6h-6zM506 459h6v6h-6zM290 477h6v6h-6zM488 477h6v6h-6zM296 483h12v6h-12zM482 483h6v6h-6zM308 489h6v6h-6zM476 489h6v6h-6zM320 495h6v6h-6zM464 495h12v6h-12zM446 501h12v6h-12zM338 507h6v6h-6zM428 507h6v6h-6zM350 513h42v6h-42zM416 513h12v6h-12z"/><path fill="#22a884" d="M362 207h12v6h-12zM410 207h42v6h-42zM350 213h6v6h-6zM452 213h18v6h-18zM338 219h6v6h-6zM470 219h6v6h-6zM326 225h6v6h-6zM476 225h6v6h-6zM314 231h6v6h-6zM482 231h6v6h-6zM302 237h6v6h-6zM488 237h6v6h-6zM296 243h6v6h-6zM494 243h6v6h-6zM290 249h6v6h-6zM506 249h6v6h-6zM506 255h6v6h-6zM284 261h6v6h-6zM512 261h6v6h-6zM278 267h6v6h-6zM278 273h6v6h-6zM518 273h6v6h-6zM272 279h6v6h-6zM524 285h6v6h-6zM266 291h6v6h-6zM260 297h6v6h-6zM530 297h6v6h-6zM260 303h6v6h-6zM536 309h6v6h-6zM254 315h6v6h-6zM536 315h6v6h-6zM254 321h6v6h-6zM536 321h6v6h-6zM248 333h6v6h-6zM248 339h6v6h-6zM248 345h6v6h-6zM248 351h6v6h-6zM248 357h6v6h-6zM248 363h6v6h-6zM542 363h6v6h-6zM248 369h6v6h-6zM542 369h6v6h-6zM248 375h6v6h-6zM542 375h6v6h-6zM248 381h6v6h-6zM542 381h6v6h-6zM248 387h6v6h-6zM248 393h6v6h-6zM536 393h6v6h-6zM536 399h6v6h-6zM254 411h6v6h-6zM254 417h6v6h-6zM530 417h6v6h-6zM260 423h6v6h-6zM266 435h6v6h-6zM524 435h6v6h-6zM272 441h6v6h-6zM524 441h6v6h-6zM518 447h6v6h-6zM278 453h6v6h-6zM500 459h6v6h-6zM284 465h6v6h-6zM494 465h6v6h-6zM290 471h6v6h-6zM488 471h6v6h-6zM296 477h6v6h-6zM308 483h6v6h-6zM314 489h6v6h-6zM470 489h6v6h-6zM326 495h6v6h-6zM452 495h12v6h-12zM332 501h6v6h-6zM434 501h12v6h-12zM344 507h12v6h-12zM422 507h6v6h-6zM392 513h24v6h-24z"/><path fill="#26ad81" d="M374 207h36v6h-36zM356 213h12v6h-12zM422 213h30v6h-30zM344 219h6v6h-6zM458 219h12v6h-12zM332 225h6v6h-6zM470 225h6v6h-6zM320 231h6v6h-6zM476 231h6v6h-6zM308 237h6v6h-6zM482 237h6v6h-6zM302 243h6v6h-6zM488 243h6v6h-6zM296 249h6v6h-6zM494 249h12v6h-12zM290 255h6v6h-6zM500 255h6v6h-6zM290 261h6v6h-6zM506 261h6v6h-6zM284 267h6v6h-6zM512 267h6v6h-6zM284 273h6v6h-6zM512 273h6v6h-6zM278 279h6v6h-6zM518 279h6v6h-6zM272 285h6v6h-6zM272 291h6v6h-6zM524 291h6v6h-6zM266 297h6v6h-6zM524 297h6v6h-6zM266 303h6v6h-6zM530 303h6v6h-6zM260 309h6v6h-6zM530 309h6v6h-6zM260 315h6v6h-6zM254 327h6v6h-6zM536 327h6v6h-6zM254 333h6v6h-6zM536 333h6v6h-6zM254 339h6v6h-6zM536 339h6v6h-6zM536 345h6v6h-6zM536 351h6v6h-6zM536 357h6v6h-6zM536 387h6v6h-6zM254 399h6v6h-6zM254 405h6v6h-6zM530 405h6v6h-6zM530 411h6v6h-6zM260 417h6v6h-6zM266 429h6v6h-6zM524 429h6v6h-6zM272 435h6v6h-6zM518 441h6v6h-6zM278 447h6v6h-6zM512 447h6v6h-6zM284 453h6v6h-6zM506 453h6v6h-6zM284 459h6v6h-6zM290 465h6v6h-6zM296 471h6v6h-6zM302 477h6v6h-6zM482 477h6v6h-6zM314 483h6v6h-6zM476 483h6v6h-6zM320 489h6v6h-6zM464 489h6v6h-6zM332 495h6v6h-6zM446 495h6v6h-6zM338 501h6v6h-6zM428 501h6v6h-6zM356 507h66v6h-66z"/><path fill="#2ab07f" d="M368 213h12v6h-12zM398 213h24v6h-24zM350 219h6v6h-6zM428 219h30v6h-30zM338 225h6v6h-6zM458 225h12v6h-12zM326 231h6v6h-6zM470 231h6v6h-6zM314 237h12v6h-12zM476 237h6v6h-6zM308 243h6v6h-6zM482 243h6v6h-6zM302 249h6v6h-6zM488 249h6v6h-6zM296 255h6v6h-6zM494 255h6v6h-6zM500 261h6v6h-6zM290 267h6v6h-6zM506 267h6v6h-6zM284 279h6v6h-6zM512 279h6v6h-6zM278 285h6v6h-6zM518 285h6v6h-6zM518 291h6v6h-6zM272 297h6v6h-6zM524 303h6v6h-6zM266 309h6v6h-6zM266 315h6v6h-6zM530 315h6v6h-6zM260 321h6v6h-6zM530 321h6v6h-6zM260 327h6v6h-6zM530 327h6v6h-6zM260 333h6v6h-6zM530 333h6v6h-6zM260 339h6v6h-6zM530 339h6v6h-6zM254 345h6v6h-6zM254 351h6v6h-6zM254 357h6v6h-6zM254 363h6v6h-6zM536 363h6v6h-6zM254 369h6v6h-6zM536 369h6v6h-6zM254 375h6v6h-6zM536 375h6v6h-6zM254 381h6v6h-6zM536 381h6v6h-6zM254 387h6v6h-6zM254 393h6v6h-6zM530 399h6v6h-6zM260 405h6v6h-6zM260 411h6v6h-6zM266 417h6v6h-6zM524 417h6v6h-6zM266 423h6v6h-6zM524 423h6v6h-6zM272 429h6v6h-6zM518 435h6v6h-6zM278 441h6v6h-6zM512 441h6v6h-6zM506 447h6v6h-6zM500 453h6v6h-6zM290 459h6v6h-6zM494 459h6v6h-6zM296 465h6v6h-6zM488 465h6v6h-6zM302 471h6v6h-6zM482 471h6v6h-6zM308 477h6v6h-6zM476 477h6v6h-6zM470 483h6v6h-6zM326 489h6v6h-6zM452 489h12v6h-12zM338 495h6v6h-6zM434 495h12v6h-12zM344 501h24v6h-24zM410 501h18v6h-18z"/><path fill="#31b57b" d="M380 213h18v6h-18zM356 219h12v6h-12zM404 219h24v6h-24zM344 225h6v6h-6zM434 225h24v6h-24zM332 231h12v6h-12zM452 231h18v6h-18zM326 237h6v6h-6zM464 237h12v6h-12zM314 243h6v6h-6zM476 243h6v6h-6zM308 249h6v6h-6zM482 249h6v6h-6zM302 255h6v6h-6zM488 255h6v6h-6zM296 261h6v6h-6zM494 261h6v6h-6zM296 267h6v6h-6zM500 267h6v6h-6zM290 273h6v6h-6zM506 273h6v6h-6zM290 279h6v6h-6zM506 279h6v6h-6zM284 285h6v6h-6zM512 285h6v6h-6zM278 291h6v6h-6zM512 291h6v6h-6zM278 297h6v6h-6zM518 297h6v6h-6zM272 303h6v6h-6zM518 303h6v6h-6zM272 309h6v6h-6zM524 309h6v6h-6zM524 315h6v6h-6zM266 321h6v6h-6zM266 327h6v6h-6zM260 345h6v6h-6zM530 345h6v6h-6zM260 351h6v6h-6zM530 351h6v6h-6zM260 357h6v6h-6zM530 357h6v6h-6zM260 363h6v6h-6zM530 363h6v6h-6zM260 369h6v6h-6zM530 369h6v6h-6zM530 375h6v6h-6zM530 381h6v6h-6zM530 387h6v6h-6zM530 393h6v6h-6zM260 399h6v6h-6zM524 405h6v6h-6zM266 411h6v6h-6zM524 411h6v6h-6zM272 423h6v6h-6zM518 423h6v6h-6zM518 429h6v6h-6zM278 435h6v6h-6zM512 435h6v6h-6zM284 441h6v6h-6zM284 447h6v6h-6zM290 453h6v6h-6zM296 459h6v6h-6zM302 465h6v6h-6zM308 471h6v6h-6zM314 477h6v6h-6zM320 483h6v6h-6zM464 483h6v6h-6zM332 489h6v6h-6zM440 489h12v6h-12zM344 495h12v6h-12zM422 495h12v6h-12zM368 501h42v6h-42z"/><path fill="#38b977" d="M368 219h36v6h-36zM350 225h12v6h-12zM416 225h18v6h-18zM344 231h6v6h-6zM434 231h18v6h-18zM332 237h6v6h-6zM452 237h12v6h-12zM320 243h6v6h-6zM464 243h12v6h-12zM314 249h6v6h-6zM476 249h6v6h-6zM308 255h6v6h-6zM482 255h6v6h-6zM302 261h6v6h-6zM488 261h6v6h-6zM302 267h6v6h-6zM494 267h6v6h-6zM296 273h6v6h-6zM500 273h6v6h-6zM500 279h6v6h-6zM290 285h6v6h-6zM506 285h6v6h-6zM284 291h6v6h-6zM506 291h6v6h-6zM512 297h6v6h-6zM278 303h6v6h-6zM512 303h6v6h-6zM278 309h6v6h-6zM518 309h6v6h-6zM272 315h6v6h-6zM272 321h6v6h-6zM524 321h6v6h-6zM272 327h6v6h-6zM524 327h6v6h-6zM266 333h6v6h-6zM524 333h6v6h-6zM266 339h6v6h-6zM524 339h6v6h-6zM524 345h6v6h-6zM524 351h6v6h-6zM524 357h6v6h-6zM524 363h6v6h-6zM524 369h6v6h-6zM260 375h6v6h-6zM260 381h6v6h-6zM260 387h6v6h-6zM260 393h6v6h-6zM524 393h6v6h-6zM524 399h6v6h-6zM266 405h6v6h-6zM518 411h6v6h-6zM272 417h6v6h-6zM518 417h6v6h-6zM278 423h6v6h-6zM278 429h6v6h-6zM512 429h6v6h-6zM284 435h6v6h-6zM506 441h6v6h-6zM290 447h6v6h-6zM500 447h6v6h-6zM296 453h6v6h-6zM494 453h6v6h-6zM302 459h6v6h-6zM488 459h6v6h-6zM482 465h6v6h-6zM314 471h6v6h-6zM476 471h6v6h-6zM320 477h6v6h-6zM470 477h6v6h-6zM326 483h6v6h-6zM452 483h12v6h-12zM338 489h12v6h-12zM428 489h12v6h-12zM356 495h24v6h-24zM404 495h18v6h-18z"/><path fill="#3fbc73" d="M362 225h18v6h-18zM392 225h24v6h-24zM350 231h6v6h-6zM416 231h18v6h-18zM338 237h6v6h-6zM440 237h12v6h-12zM326 243h12v6h-12zM452 243h12v6h-12zM320 249h6v6h-6zM464 249h12v6h-12zM314 255h6v6h-6zM476 255h6v6h-6zM308 261h6v6h-6zM482 261h6v6h-6zM488 267h6v6h-6zM302 273h6v6h-6zM494 273h6v6h-6zM296 279h6v6h-6zM296 285h6v6h-6zM500 285h6v6h-6zM290 291h6v6h-6zM500 291h6v6h-6zM284 297h12v6h-12zM506 297h6v6h-6zM284 303h6v6h-6zM512 309h6v6h-6zM278 315h6v6h-6zM518 315h6v6h-6zM278 321h6v6h-6zM518 321h6v6h-6zM518 327h6v6h-6zM272 333h6v6h-6zM272 339h6v6h-6zM266 345h6v6h-6zM266 351h6v6h-6zM266 357h6v6h-6zM266 363h6v6h-6zM266 369h6v6h-6zM266 375h6v6h-6zM524 375h6v6h-6zM524 381h6v6h-6zM524 387h6v6h-6zM266 393h6v6h-6zM266 399h6v6h-6zM518 405h6v6h-6zM272 411h6v6h-6zM278 417h6v6h-6zM512 417h6v6h-6zM512 423h6v6h-6zM284 429h6v6h-6zM290 435h6v6h-6zM506 435h6v6h-6zM290 441h6v6h-6zM500 441h6v6h-6zM296 447h6v6h-6zM494 447h6v6h-6zM488 453h6v6h-6zM308 465h6v6h-6zM320 471h6v6h-6zM470 471h6v6h-6zM326 477h6v6h-6zM458 477h12v6h-12zM332 483h12v6h-12zM434 483h18v6h-18zM350 489h6v6h-6zM410 489h18v6h-18zM380 495h24v6h-24z"/><path fill="#48c16e" d="M380 225h12v6h-12zM356 231h18v6h-18zM398 231h18v6h-18zM344 237h12v6h-12zM422 237h18v6h-18zM338 243h6v6h-6zM440 243h12v6h-12zM326 249h6v6h-6zM452 249h12v6h-12zM320 255h6v6h-6zM464 255h12v6h-12zM314 261h6v6h-6zM476 261h6v6h-6zM308 267h6v6h-6zM482 267h6v6h-6zM308 273h6v6h-6zM488 273h6v6h-6zM302 279h6v6h-6zM494 279h6v6h-6zM302 285h6v6h-6zM494 285h6v6h-6zM296 291h6v6h-6zM500 297h6v6h-6zM290 303h6v6h-6zM506 303h6v6h-6zM284 309h6v6h-6zM506 309h6v6h-6zM284 315h6v6h-6zM512 315h6v6h-6zM512 321h6v6h-6zM278 327h6v6h-6zM278 333h6v6h-6zM518 333h6v6h-6zM518 339h6v6h-6zM272 345h6v6h-6zM518 345h6v6h-6zM518 351h6v6h-6zM518 357h6v6h-6zM518 363h6v6h-6zM518 369h6v6h-6zM518 375h6v6h-6zM266 381h6v6h-6zM518 381h6v6h-6zM266 387h6v6h-6zM518 387h6v6h-6zM518 393h6v6h-6zM272 399h6v6h-6zM518 399h6v6h-6zM272 405h6v6h-6zM278 411h6v6h-6zM512 411h6v6h-6zM284 423h6v6h-6zM506 423h6v6h-6zM290 429h6v6h-6zM506 429h6v6h-6zM500 435h6v6h-6zM296 441h6v6h-6zM494 441h6v6h-6zM302 447h6v6h-6zM302 453h6v6h-6zM308 459h6v6h-6zM482 459h6v6h-6zM314 465h6v6h-6zM476 465h6v6h-6zM464 471h6v6h-6zM332 477h6v6h-6zM446 477h12v6h-12zM344 483h6v6h-6zM422 483h12v6h-12zM356 489h54v6h-54z"/><path fill="#52c569" d="M374 231h24v6h-24zM356 237h18v6h-18zM404 237h18v6h-18zM344 243h12v6h-12zM422 243h18v6h-18zM332 249h12v6h-12zM440 249h12v6h-12zM326 255h12v6h-12zM452 255h12v6h-12zM320 261h6v6h-6zM464 261h12v6h-12zM314 267h6v6h-6zM476 267h6v6h-6zM314 273h6v6h-6zM482 273h6v6h-6zM308 279h6v6h-6zM488 279h6v6h-6zM488 285h6v6h-6zM302 291h6v6h-6zM494 291h6v6h-6zM296 297h6v6h-6zM494 297h6v6h-6zM500 303h6v6h-6zM290 309h6v6h-6zM500 309h6v6h-6zM290 315h6v6h-6zM506 315h6v6h-6zM284 321h6v6h-6zM284 327h6v6h-6zM512 327h6v6h-6zM512 333h6v6h-6zM278 339h6v6h-6zM512 339h6v6h-6zM512 345h6v6h-6zM272 351h6v6h-6zM512 351h6v6h-6zM272 357h6v6h-6zM512 357h6v6h-6zM272 363h6v6h-6zM512 363h6v6h-6zM272 369h6v6h-6zM512 369h6v6h-6zM272 375h6v6h-6zM512 375h6v6h-6zM272 381h6v6h-6zM272 387h6v6h-6zM512 387h6v6h-6zM272 393h6v6h-6zM512 393h6v6h-6zM512 399h6v6h-6zM278 405h6v6h-6zM512 405h6v6h-6zM284 417h6v6h-6zM506 417h6v6h-6zM290 423h6v6h-6zM500 423h6v6h-6zM500 429h6v6h-6zM296 435h6v6h-6zM494 435h6v6h-6zM302 441h6v6h-6zM488 447h6v6h-6zM308 453h6v6h-6zM482 453h6v6h-6zM314 459h6v6h-6zM476 459h6v6h-6zM320 465h6v6h-6zM470 465h6v6h-6zM326 471h12v6h-12zM458 471h6v6h-6zM338 477h6v6h-6zM428 477h18v6h-18zM350 483h18v6h-18zM404 483h18v6h-18z"/><path fill="#5ac864" d="M374 237h30v6h-30zM356 243h12v6h-12zM404 243h18v6h-18zM344 249h12v6h-12zM428 249h12v6h-12zM338 255h6v6h-6zM446 255h6v6h-6zM326 261h12v6h-12zM458 261h6v6h-6zM320 267h6v6h-6zM464 267h12v6h-12zM320 273h6v6h-6zM476 273h6v6h-6zM314 279h6v6h-6zM482 279h6v6h-6zM308 285h6v6h-6zM308 291h6v6h-6zM488 291h6v6h-6zM302 297h6v6h-6zM296 303h6v6h-6zM494 303h6v6h-6zM296 309h6v6h-6zM500 315h6v6h-6zM290 321h6v6h-6zM506 321h6v6h-6zM290 327h6v6h-6zM506 327h6v6h-6zM284 333h6v6h-6zM506 333h6v6h-6zM284 339h6v6h-6zM278 345h6v6h-6zM278 351h6v6h-6zM278 357h6v6h-6zM506 357h6v6h-6zM278 363h6v6h-6zM512 381h6v6h-6zM278 387h6v6h-6zM278 393h6v6h-6zM506 393h6v6h-6zM278 399h6v6h-6zM506 399h6v6h-6zM284 405h6v6h-6zM506 405h6v6h-6zM284 411h6v6h-6zM506 411h6v6h-6zM290 417h6v6h-6zM500 417h6v6h-6zM296 429h6v6h-6zM494 429h6v6h-6zM302 435h6v6h-6zM488 441h6v6h-6zM308 447h6v6h-6zM482 447h6v6h-6zM314 453h6v6h-6zM476 453h6v6h-6zM320 459h6v6h-6zM470 459h6v6h-6zM326 465h6v6h-6zM464 465h6v6h-6zM338 471h6v6h-6zM446 471h12v6h-12zM344 477h12v6h-12zM416 477h12v6h-12zM368 483h36v6h-36z"/><path fill="#65cb5e" d="M368 243h36v6h-36zM356 249h12v6h-12zM410 249h18v6h-18zM344 255h12v6h-12zM434 255h12v6h-12zM338 261h12v6h-12zM446 261h12v6h-12zM326 267h12v6h-12zM458 267h6v6h-6zM326 273h6v6h-6zM464 273h12v6h-12zM320 279h6v6h-6zM476 279h6v6h-6zM314 285h6v6h-6zM482 285h6v6h-6zM314 291h6v6h-6zM482 291h6v6h-6zM308 297h6v6h-6zM488 297h6v6h-6zM302 303h6v6h-6zM488 303h6v6h-6zM302 309h6v6h-6zM494 309h6v6h-6zM296 315h6v6h-6zM494 315h6v6h-6zM296 321h6v6h-6zM500 321h6v6h-6zM296 327h6v6h-6zM290 333h6v6h-6zM290 339h6v6h-6zM506 339h6v6h-6zM284 345h6v6h-6zM506 345h6v6h-6zM284 351h6v6h-6zM506 351h6v6h-6zM506 363h6v6h-6zM278 369h6v6h-6zM506 369h6v6h-6zM278 375h6v6h-6zM506 375h6v6h-6zM278 381h6v6h-6zM506 381h6v6h-6zM506 387h6v6h-6zM284 393h6v6h-6zM284 399h6v6h-6zM500 399h6v6h-6zM500 405h6v6h-6zM290 411h6v6h-6zM500 411h6v6h-6zM296 417h6v6h-6zM296 423h6v6h-6zM494 423h6v6h-6zM302 429h6v6h-6zM488 435h6v6h-6zM308 441h6v6h-6zM482 441h6v6h-6zM314 447h6v6h-6zM320 453h6v6h-6zM326 459h6v6h-6zM464 459h6v6h-6zM332 465h6v6h-6zM452 465h12v6h-12zM344 471h6v6h-6zM422 471h24v6h-24zM356 477h18v6h-18zM398 477h18v6h-18z"/><path fill="#70cf57" d="M368 249h42v6h-42zM356 255h18v6h-18zM410 255h24v6h-24zM350 261h12v6h-12zM434 261h12v6h-12zM338 267h12v6h-12zM446 267h12v6h-12zM332 273h12v6h-12zM458 273h6v6h-6zM326 279h12v6h-12zM464 279h12v6h-12zM320 285h12v6h-12zM476 285h6v6h-6zM320 291h6v6h-6zM476 291h6v6h-6zM314 297h6v6h-6zM482 297h6v6h-6zM308 303h6v6h-6zM482 303h6v6h-6zM308 309h6v6h-6zM488 309h6v6h-6zM302 315h6v6h-6zM302 321h6v6h-6zM494 321h6v6h-6zM500 327h6v6h-6zM296 333h6v6h-6zM500 333h6v6h-6zM500 339h6v6h-6zM290 345h6v6h-6zM500 345h6v6h-6zM500 351h6v6h-6zM284 357h6v6h-6zM500 357h6v6h-6zM284 363h6v6h-6zM500 363h6v6h-6zM284 369h6v6h-6zM500 369h6v6h-6zM284 375h6v6h-6zM500 375h6v6h-6zM284 381h6v6h-6zM500 381h6v6h-6zM284 387h6v6h-6zM500 387h6v6h-6zM500 393h6v6h-6zM290 399h6v6h-6zM290 405h6v6h-6zM494 405h6v6h-6zM296 411h6v6h-6zM494 411h6v6h-6zM494 417h6v6h-6zM302 423h6v6h-6zM488 423h6v6h-6zM488 429h6v6h-6zM308 435h6v6h-6zM482 435h6v6h-6zM314 441h6v6h-6zM320 447h6v6h-6zM476 447h6v6h-6zM326 453h6v6h-6zM470 453h6v6h-6zM332 459h6v6h-6zM458 459h6v6h-6zM338 465h12v6h-12zM440 465h12v6h-12zM350 471h18v6h-18zM398 471h24v6h-24zM374 477h24v6h-24z"/><path fill="#7ad151" d="M374 255h36v6h-36zM362 261h18v6h-18zM410 261h24v6h-24zM350 267h12v6h-12zM434 267h12v6h-12zM344 273h12v6h-12zM446 273h12v6h-12zM338 279h6v6h-6zM458 279h6v6h-6zM332 285h12v6h-12zM464 285h12v6h-12zM326 291h6v6h-6zM470 291h6v6h-6zM320 297h6v6h-6zM476 297h6v6h-6zM314 303h6v6h-6zM476 303h6v6h-6zM314 309h6v6h-6zM482 309h6v6h-6zM308 315h6v6h-6zM488 315h6v6h-6zM308 321h6v6h-6zM488 321h6v6h-6zM302 327h6v6h-6zM494 327h6v6h-6zM302 333h6v6h-6zM494 333h6v6h-6zM296 339h6v6h-6zM494 339h6v6h-6zM296 345h6v6h-6zM494 345h6v6h-6zM290 351h6v6h-6zM494 351h6v6h-6zM290 357h6v6h-6zM494 357h6v6h-6zM290 363h6v6h-6zM290 369h6v6h-6zM290 375h6v6h-6zM290 381h6v6h-6zM494 381h6v6h-6zM290 387h6v6h-6zM494 387h6v6h-6zM290 393h6v6h-6zM494 393h6v6h-6zM296 399h6v6h-6zM494 399h6v6h-6zM296 405h6v6h-6zM302 411h6v6h-6zM302 417h6v6h-6zM488 417h6v6h-6zM308 423h6v6h-6zM308 429h6v6h-6zM482 429h6v6h-6zM314 435h6v6h-6zM476 435h6v6h-6zM320 441h6v6h-6zM476 441h6v6h-6zM326 447h6v6h-6zM470 447h6v6h-6zM464 453h6v6h-6zM338 459h6v6h-6zM452 459h6v6h-6zM350 465h6v6h-6zM416 465h24v6h-24zM368 471h30v6h-30z"/><path fill="#86d549" d="M380 261h30v6h-30zM362 267h72v6h-72zM356 273h12v6h-12zM434 273h12v6h-12zM344 279h12v6h-12zM452 279h6v6h-6zM344 285h6v6h-6zM458 285h6v6h-6zM332 291h12v6h-12zM464 291h6v6h-6zM326 297h12v6h-12zM470 297h6v6h-6zM320 303h12v6h-12zM470 303h6v6h-6zM320 309h6v6h-6zM476 309h6v6h-6zM314 315h6v6h-6zM482 315h6v6h-6zM314 321h6v6h-6zM482 321h6v6h-6zM308 327h6v6h-6zM488 327h6v6h-6zM308 333h6v6h-6zM488 333h6v6h-6zM302 339h6v6h-6zM488 339h6v6h-6zM302 345h6v6h-6zM296 351h6v6h-6zM296 357h6v6h-6zM296 363h6v6h-6zM494 363h6v6h-6zM296 369h6v6h-6zM494 369h6v6h-6zM296 375h6v6h-6zM494 375h6v6h-6zM296 381h6v6h-6zM296 387h6v6h-6zM296 393h6v6h-6zM488 399h6v6h-6zM302 405h6v6h-6zM488 405h6v6h-6zM488 411h6v6h-6zM308 417h6v6h-6zM482 417h6v6h-6zM482 423h6v6h-6zM314 429h6v6h-6zM476 429h6v6h-6zM320 435h6v6h-6zM326 441h6v6h-6zM470 441h6v6h-6zM464 447h6v6h-6zM332 453h12v6h-12zM458 453h6v6h-6zM344 459h12v6h-12zM422 459h30v6h-30zM356 465h60v6h-60z"/><path fill="#93d741" d="M368 273h66v6h-66zM356 279h24v6h-24zM392 279h12v6h-12zM440 279h12v6h-12zM350 285h18v6h-18zM446 285h12v6h-12zM344 291h12v6h-12zM452 291h12v6h-12zM338 297h12v6h-12zM458 297h12v6h-12zM332 303h6v6h-6zM464 303h6v6h-6zM326 309h6v6h-6zM470 309h6v6h-6zM320 315h12v6h-12zM470 315h12v6h-12zM320 321h6v6h-6zM476 321h6v6h-6zM314 327h6v6h-6zM482 327h6v6h-6zM314 333h6v6h-6zM482 333h6v6h-6zM308 339h12v6h-12zM482 339h6v6h-6zM308 345h6v6h-6zM488 345h6v6h-6zM302 351h12v6h-12zM488 351h6v6h-6zM302 357h6v6h-6zM488 357h6v6h-6zM302 363h6v6h-6zM488 363h6v6h-6zM302 369h6v6h-6zM488 369h6v6h-6zM488 375h6v6h-6zM302 381h6v6h-6zM488 381h6v6h-6zM302 387h6v6h-6zM488 387h6v6h-6zM302 393h6v6h-6zM488 393h6v6h-6zM302 399h6v6h-6zM482 399h6v6h-6zM482 405h6v6h-6zM308 411h6v6h-6zM482 411h6v6h-6zM314 417h6v6h-6zM314 423h6v6h-6zM476 423h6v6h-6zM320 429h6v6h-6zM326 435h6v6h-6zM470 435h6v6h-6zM332 441h6v6h-6zM464 441h6v6h-6zM332 447h12v6h-12zM458 447h6v6h-6zM344 453h6v6h-6zM446 453h12v6h-12zM356 459h12v6h-12zM392 459h30v6h-30z"/><path fill="#9dd93b" d="M380 279h12v6h-12zM404 279h36v6h-36zM368 285h78v6h-78zM356 291h18v6h-18zM392 291h18v6h-18zM440 291h12v6h-12zM350 297h18v6h-18zM452 297h6v6h-6zM338 303h18v6h-18zM458 303h6v6h-6zM332 309h12v6h-12zM464 309h6v6h-6zM332 315h6v6h-6zM464 315h6v6h-6zM326 321h6v6h-6zM470 321h6v6h-6zM320 327h12v6h-12zM476 327h6v6h-6zM320 333h6v6h-6zM476 333h6v6h-6zM320 339h6v6h-6zM476 339h6v6h-6zM314 345h12v6h-12zM482 345h6v6h-6zM314 351h6v6h-6zM482 351h6v6h-6zM308 357h12v6h-12zM482 357h6v6h-6zM308 363h6v6h-6zM482 363h6v6h-6zM308 369h6v6h-6zM482 369h6v6h-6zM302 375h12v6h-12zM482 375h6v6h-6zM308 381h6v6h-6zM482 381h6v6h-6zM308 387h6v6h-6zM482 387h6v6h-6zM308 393h6v6h-6zM482 393h6v6h-6zM308 399h6v6h-6zM308 405h6v6h-6zM476 405h6v6h-6zM314 411h6v6h-6zM476 411h6v6h-6zM476 417h6v6h-6zM320 423h6v6h-6zM470 423h6v6h-6zM326 429h6v6h-6zM470 429h6v6h-6zM332 435h6v6h-6zM464 435h6v6h-6zM338 441h6v6h-6zM458 441h6v6h-6zM344 447h6v6h-6zM446 447h12v6h-12zM350 453h12v6h-12zM392 453h54v6h-54zM368 459h24v6h-24z"/><path fill="#aadc32" d="M374 291h18v6h-18zM410 291h30v6h-30zM368 297h84v6h-84zM356 303h60v6h-60zM440 303h18v6h-18zM344 309h18v6h-18zM446 309h18v6h-18zM338 315h18v6h-18zM458 315h6v6h-6zM332 321h18v6h-18zM458 321h12v6h-12zM332 327h6v6h-6zM464 327h12v6h-12zM326 333h12v6h-12zM470 333h6v6h-6zM326 339h6v6h-6zM470 339h6v6h-6zM326 345h6v6h-6zM476 345h6v6h-6zM320 351h12v6h-12zM476 351h6v6h-6zM320 357h6v6h-6zM476 357h6v6h-6zM314 363h12v6h-12zM476 363h6v6h-6zM314 369h12v6h-12zM476 369h6v6h-6zM314 375h6v6h-6zM314 381h6v6h-6zM314 387h6v6h-6zM476 387h6v6h-6zM314 393h6v6h-6zM476 393h6v6h-6zM314 399h6v6h-6zM476 399h6v6h-6zM314 405h6v6h-6zM320 411h6v6h-6zM470 411h6v6h-6zM320 417h6v6h-6zM470 417h6v6h-6zM326 423h6v6h-6zM332 429h6v6h-6zM464 429h6v6h-6zM338 435h6v6h-6zM458 435h6v6h-6zM344 441h12v6h-12zM452 441h6v6h-6zM350 447h12v6h-12zM392 447h54v6h-54zM362 453h30v6h-30z"/><path fill="#b8de29" d="M416 303h24v6h-24zM362 309h84v6h-84zM356 315h66v6h-66zM434 315h24v6h-24zM350 321h24v6h-24zM446 321h12v6h-12zM338 327h18v6h-18zM458 327h6v6h-6zM338 333h12v6h-12zM458 333h12v6h-12zM332 339h12v6h-12zM464 339h6v6h-6zM332 345h12v6h-12zM470 345h6v6h-6zM332 351h12v6h-12zM470 351h6v6h-6zM326 357h12v6h-12zM470 357h6v6h-6zM326 363h12v6h-12zM326 369h6v6h-6zM320 375h12v6h-12zM476 375h6v6h-6zM320 381h6v6h-6zM476 381h6v6h-6zM320 387h6v6h-6zM470 387h6v6h-6zM320 393h6v6h-6zM470 393h6v6h-6zM320 399h6v6h-6zM470 399h6v6h-6zM320 405h6v6h-6zM470 405h6v6h-6zM326 411h6v6h-6zM464 411h6v6h-6zM326 417h6v6h-6zM464 417h6v6h-6zM332 423h6v6h-6zM458 423h12v6h-12zM338 429h6v6h-6zM458 429h6v6h-6zM344 435h12v6h-12zM446 435h12v6h-12zM356 441h6v6h-6zM398 441h54v6h-54zM362 447h30v6h-30z"/><path fill="#c2df23" d="M422 315h12v6h-12zM374 321h72v6h-72zM356 327h30v6h-30zM428 327h30v6h-30zM350 333h24v6h-24zM440 333h18v6h-18zM344 339h24v6h-24zM452 339h12v6h-12zM344 345h12v6h-12zM458 345h12v6h-12zM344 351h12v6h-12zM464 351h6v6h-6zM338 357h12v6h-12zM464 357h6v6h-6zM338 363h12v6h-12zM470 363h6v6h-6zM332 369h12v6h-12zM470 369h6v6h-6zM332 375h6v6h-6zM470 375h6v6h-6zM326 381h12v6h-12zM470 381h6v6h-6zM326 387h6v6h-6zM464 387h6v6h-6zM326 393h6v6h-6zM464 393h6v6h-6zM326 399h6v6h-6zM464 399h6v6h-6zM326 405h6v6h-6zM458 405h12v6h-12zM332 411h6v6h-6zM458 411h6v6h-6zM332 417h12v6h-12zM452 417h12v6h-12zM338 423h6v6h-6zM446 423h12v6h-12zM344 429h12v6h-12zM428 429h30v6h-30zM356 435h6v6h-6zM392 435h54v6h-54zM362 441h36v6h-36z"/><path fill="#d0e11c" d="M386 327h42v6h-42zM374 333h66v6h-66zM368 339h30v6h-30zM428 339h24v6h-24zM356 345h24v6h-24zM446 345h12v6h-12zM356 351h12v6h-12zM452 351h12v6h-12zM350 357h12v6h-12zM458 357h6v6h-6zM350 363h6v6h-6zM458 363h12v6h-12zM344 369h6v6h-6zM464 369h6v6h-6zM338 375h6v6h-6zM464 375h6v6h-6zM338 381h6v6h-6zM458 381h12v6h-12zM332 387h12v6h-12zM458 387h6v6h-6zM332 393h6v6h-6zM458 393h6v6h-6zM332 399h6v6h-6zM452 399h12v6h-12zM332 405h12v6h-12zM446 405h12v6h-12zM338 411h6v6h-6zM440 411h18v6h-18zM344 417h6v6h-6zM428 417h24v6h-24zM344 423h12v6h-12zM416 423h30v6h-30zM356 429h6v6h-6zM398 429h30v6h-30zM362 435h30v6h-30z"/><path fill="#dde318" d="M398 339h30v6h-30zM380 345h30v6h-30zM422 345h24v6h-24zM368 351h24v6h-24zM446 351h6v6h-6zM362 357h12v6h-12zM452 357h6v6h-6zM356 363h12v6h-12zM452 363h6v6h-6zM350 369h12v6h-12zM452 369h12v6h-12zM344 375h12v6h-12zM452 375h12v6h-12zM344 381h6v6h-6zM452 381h6v6h-6zM344 387h6v6h-6zM452 387h6v6h-6zM338 393h6v6h-6zM446 393h12v6h-12zM338 399h12v6h-12zM434 399h18v6h-18zM344 405h6v6h-6zM428 405h18v6h-18zM344 411h6v6h-6zM416 411h24v6h-24zM350 417h12v6h-12zM410 417h18v6h-18zM356 423h12v6h-12zM398 423h18v6h-18zM362 429h36v6h-36z"/><path fill="#e7e419" d="M410 345h12v6h-12zM392 351h54v6h-54zM374 357h30v6h-30zM434 357h18v6h-18zM368 363h30v6h-30zM440 363h12v6h-12zM362 369h18v6h-18zM446 369h6v6h-6zM356 375h12v6h-12zM446 375h6v6h-6zM350 381h12v6h-12zM446 381h6v6h-6zM350 387h6v6h-6zM428 387h24v6h-24zM344 393h12v6h-12zM416 393h30v6h-30zM350 399h6v6h-6zM410 399h24v6h-24zM350 405h12v6h-12zM410 405h18v6h-18zM350 411h12v6h-12zM398 411h18v6h-18zM362 417h12v6h-12zM392 417h18v6h-18zM368 423h30v6h-30z"/><path fill="#f4e61e" d="M404 357h30v6h-30zM398 363h42v6h-42zM380 369h42v6h-42zM428 369h18v6h-18zM368 375h78v6h-78zM362 381h84v6h-84zM356 387h18v6h-18zM386 387h42v6h-42zM356 393h12v6h-12zM392 393h24v6h-24zM356 399h12v6h-12zM392 399h18v6h-18zM362 405h6v6h-6zM386 405h24v6h-24zM362 411h36v6h-36zM374 417h18v6h-18z"/><path fill="#fde725" d="M422 369h6v6h-6zM374 387h12v6h-12zM368 393h24v6h-24zM368 399h24v6h-24zM368 405h18v6h-18z"/></g><clipPath id="cy"><rect x="140" y="111" width="486" height="486"/></clipPath><path clip-path="url(#cy)" fill="none" stroke="#000" stroke-width="2.1" stroke-dasharray="7.2 3.1" d="M239 473.3l-6 2l-2.7 4.7l0.9 6l1.8 2l6 2.3l6-2.6l1.2-1.7l0.7-6l-1.9-3.7l-6-3M377 557.9l-3.3 6.1l3.3 5.4l6 0.7l2.9-6.1l-2.9-5.4l-6-0.7M227 154.7l-1.8 1.3l-4.6 6l-1.2 6l1.8 6l5.8 6.1l6 2.1l6-0.2l6-4.2l2.8-3.8l0.9-6l-1-6l-2.7-5l-6-4.2l-6-0.3l-6 2.2M197 401.7l-0.1 6.3l6.1 4.1l5.6-4.1l-1.1-6l-4.5-2.8l-6 2.5M233 469.6l-6 5l-1.8 5.4l0.7 6l1.1 2.2l3.3 3.8l2.7 1.8l6 1.5l6-1.8l1.8-1.5l4-6l0.5-6l-2.8-6l-3.5-3.2l-6-2.3l-6 1.1M299 530.1l-5.6 3.9l-1.4 6l1 2.7l2.3 3.3l3.7 2.3l6-0.3l2.5-2l3.6-6l-1.9-6l-4.2-3.4l-6-0.5M371 556.4l-1.5 1.6l-1.7 6l1.7 6l1.5 2.1l6 3.4l6 0.1l6-3.4l1.6-2.2l1.1-6l-1.8-6l-0.9-1l-6-3.7l-6-0.2l-6 3.3M215 134.7l-2.6 3.3l-3.4 5.8l-3.6 12.2l1.6 12l5.9 12l5.7 6l2.4 1.5l6 2l6 0.8l6-0.5l6-2.6l6-4.8l1.8-2.4l2.8-6l1.5-6l-0.3-12l-5.8-13.5l-6-4.2l-3.1-0.3l-2.9-1.1l-6-4.1l-12 4.6l-6-2.7M191 220.2l-2.7 1.8l-3.3 3.6l-1 2.4l-0.5 6l1.4 6l6.1 4.8l6 1.2l6-1.8l3.6-4.2l1.6-6l-0.8-6l-4.4-5.4l-6-2.4l-6 0M197 394l-2.8 2l-3.5 6l0.4 6l3.1 6l2.8 2.5l6 1.7l6-2l2.2-2.2l2.7-6l-0.6-6l-4.3-6.8l-6-2.5l-6 1.3M233 465.5l-6 3l-4.6 5.5l-1.5 6l0.6 6l2.6 6l2.9 3.2l6 3.6l6 1l6-1.7l6-4.6l3.1-7.5l0.4-6l-1.9-6l-1.6-2.2l-6-5l-6-1.8l-6 0.5M293 527.8l-4.9 6.2l-1.1 6l1.7 6l4.3 5l1.8 1l4.2 1.9l6-0.4l6-4l2.5-3.5l1.9-6l-1.4-6l-3-4.2l-2.2-1.8l-3.8-1.9l-6-0.4l-6 2.1M455 539.9l-4.5 6.1l2.1 6l2.4 1.6l6-0.6l1-1l1.8-6l-2.8-5.9l-6-0.2M371 551.6l-6.2 6.4l-1.5 6l1.7 7.1l3.3 4.9l2.7 2.4l6 2.1l6-0.1l6-1.9l2.7-2.5l3.8-6l0.5-6l-1.8-6l-5-6l-6.2-2.5l-6-0.1l-6 2.2M137 178.8l6 0l6 0.9l6 1.8l6 0.1l6 3.4l6 1.1l6 3.8l6-1.7l6 1.6l3 2.2l3 3.6l6-0.5l6 1.3l6 0.3l12 2.4l12-1.7l6-2.3l6-3.4l5.9-5.7l9.9-18l3.3-12l4.9-6.9l12-11.1l12-1.9l8.5-4.1l9.5-7.7l11.4-4.3l5.6-6l0-6M191 202.7l-6 2.3l-6 7.5l-3 9.5l-1 6l0.2 6l1.7 6l4.3 6l3.8 3.5l6 3.1l6 0.6l6-0.9l6-3.7l2.7-2.6l3.3-6l1-6l0.1-6l-1.1-5l-6-12.4l-10.6-6.6l-1.4-2.9l-6 1.6M581 333.2l-4 2.8l-2 3.6l-0.6 2.4l2.1 6l4.5 3l6-1.2l2.1-1.8l1.9-6l-2.1-6l-1.9-1.6l-6-1.2M197 388.8l-6 3.9l-3 3.3l-2.4 6l0.2 6l2.1 6l3.1 4.1l6 4.5l6 0.9l6-1.5l6-5.3l1.5-2.7l1.5-6l-0.4-6l-2.6-6.3l-6-6l-6-1.8l-6 0.9M233 461.9l-6 2l-6 4.6l-3.5 5.5l-1.2 6l0.2 6l2 6l4.9 6l3.6 3.2l6 2.6l6 0.5l6-1.4l6-3.7l1.1-1.2l3.7-6l1.7-6l0.1-6l-1.7-6l-4.9-6.6l-6-4.1l-6-1.6l-6 0.2M287 527.6l-4.1 6.4l-1.1 6l0.9 6l4.3 6.2l6 4.7l6 2.3l6-0.6l6-2.8l4.1-3.8l3.1-6l1.1-6l-1.3-6l-3.9-6l-3.1-2.7l-6-2.8l-6-0.4l-6 1.5l-6 4M449 538.4l-1.6 1.6l-2.6 6l0 6l3.4 6l6.8 2.9l6-0.1l5.1-2.8l3.6-6l0.7-6l-1.9-6l-7.5-5.4l-6 0.1l-6 3.7M365 551.8l-4.4 6.2l-1.6 6l0.5 6l2.6 6l2.9 4l6 4.4l6 1.5l6-0.5l6-1.2l6-4.4l2.7-3.8l2.1-6l0.2-6l-1.6-6l-4.1-6l-5.3-3.8l-6-2.1l-6-0.1l-6 1.8l-6 4M515 172.2l-3.2 1.8l-1.7 6l3.5 6l1.4 1l6 1l2.8-2l2.6-6l-2.1-6l-3.3-2.2l-6 0.4M137 213.4l6 0l4.2 2.6l7.8 2.9l6 3.3l4.2 11.8l2.7 6l4 6l5.3 6l1.8 1.4l12 6.5l6 0.6l6-0.9l6-2l6-4.7l5.8-6.9l2.4-6l3.8-20.3l1.6-3.7l4.4-6l6-2.4l12-6.1l6-4.4l6-6.1l6-9.9l12-12.8l6-2.7l6-0.9l6-2.5l12-7.1l6-1.7l6-3.9l6-6.1l6-2.4l6-1.2l18-5.9l6-0.3l6-3.2l12-4.4l12-8.3l6-2l3-1.7l0-6M191 299.8l-6 2.9l-2.8 3.3l-0.5 6l3.3 6l6 1.8l4.6-1.8l1.4-1.3l2.1-4.7l-0.3-6l-1.8-3l-6-3.2M575 329.7l-4.7 6.3l-1.2 6l1.5 6l4.4 5.7l6 3l6-0.1l5.5-2.6l4.2-6l1.3-6l-1.2-6l-3.8-5.4l-6-2.9l-6-0.7l-6 2.7M197 383.9l-6 3l-6 5.6l-2.3 3.5l-1.8 6l-0.1 6l1 6l3.3 6l5.9 5.6l6 3.4l6 0.5l6-1.4l6-4.3l2.8-3.8l3.2-7.8l0.7-4.2l-0.3-6l-2.1-6l-4.3-6.7l-6-4.2l-6-1.6l-6 0.4M569 412.5l-6 4.2l-2 3.3l-0.6 6l2.6 6.3l6 3.3l6-0.4l4.8-3.2l1.2-1.6l2.1-4.4l-0.8-6l-1.3-2.3l-3.8-3.7l-2.2-1.1l-6-0.4M221 461.8l-6.4 6.2l-3 6l-1.2 6l0 6l1.4 6l3.9 6l5.3 5.3l6 4.6l6 1.3l6 0.4l6-1.2l6-3.2l6.1-7.2l2.4-6l1.2-6l-0.1-6l-1.6-6l-2-3.5l-6-7l-6-3.6l-6-1.7l-6-0.3l-6 1.1l-6 2.8M521 487.7l-3.7 4.3l0.5 6l3.2 4.1l6 0.6l4.1-4.7l1.3-6l-5.4-5.1l-6 0.8M293 519.6l-6 2.5l-6.6 5.9l-3.3 6l-1.1 6l0.2 6l2 6l2.8 4.1l6 4.8l6 3l6 1.7l6-0.7l6-2.5l5.5-4.4l4.4-6l1.6-6l0.6-6l-1.4-6l-4.7-7.6l-6-5l-6-2.1l-6-0.5l-6 0.8M449 533.2l-6.7 6.8l-2.4 6l-0.6 6l1.1 6l2.6 3.5l6 4.4l6 2.2l6 0.3l6-2.3l6-6.1l3.2-8l0.2-6l-1.8-6l-5.5-6l-8.1-3.7l-6 0.4l-6 2.5M371 544.2l-6 3.3l-5 4.5l-4 6l-1.8 6l0 6l1.4 6l3.4 6.5l4.7 5.5l7.3 4l6 0.6l12-1.5l6.3-3.1l5.7-6l2.8-6l0.8-6l-0.2-6l-1.5-6l-3.9-6l-4-3.6l-6-3.8l-6-1.6l-6-0.1l-6 1.3M509 160.1l-6 3.2l-3.8 4.7l-1.8 6l0.8 6l2.3 6l2.5 3.7l6 4.9l6 2.5l6 0.4l6-1.7l6-3.6l4.2-6.2l0.4-6l-0.7-6l-2.8-6l-7.1-5.5l-6-2.8l-6-0.7l-6 1.1M137 238.4l6 0l6 1.9l6 3.4l6 5.4l2.4 2.9l9.6 7.4l12 7l6 2.7l6 0.5l6-1.3l6-2.4l6-3.5l4.9-4.4l5.9-6l4.8-6l4.6-12l3.8-7.7l4.4-4.3l19.6-16.3l7.2-7.7l4.8-6.4l12-9.5l18-6.9l12-3.4l12-9.1l6-2.5l12-6.6l6-1.7l6-2.9l6-1l6 0l24-5l6-1.8l12-2l2.9-1.2l9.3-6l5.8-2.4l6 0.3l6-3.3l6-4.4l6.3-2.2l4-6l0-6M557 240l-6 4.9l-0.7 1.1l-1.8 6l1.1 6l4.8 6l2.6 2.1l6 2l6-1.3l3.9-2.8l2.1-2.9l1.7-3.1l0.6-6l-2.9-6l-5.4-5l-6-2l-6 1M185 290.5l-6 4.6l-3.7 4.9l-2.6 6l0.3 6l2.6 6l3.4 4.7l1.5 1.3l4.5 2.5l6 1.1l6-1.3l3.6-2.3l2.4-2.6l2.2-3.4l2.4-6l0.3-6l-1.6-6l-3.3-5.4l-6-4.6l-6-1l-6 1.5M581 321.7l-6 2.5l-6.3 5.8l-2.9 6l-0.7 6l1 6l3.8 6l5.1 5l6 2.7l6 0.8l6-0.9l2.5-1.6l5.9-6l2.7-6l1-6l-0.6-6l-3.5-6l-2-2l-6-4.2l-6-1.9l-6-0.2M191 380.8l-6 4.1l-4.6 5.1l-3.1 6l-1.6 6l-0.7 6l0 6l2 6l3.9 6l5 6l5.1 4.1l6 1.6l6 0.2l6-2l6-4l6-8l1.9-3.9l1.7-6l0.8-6l-0.3-6l-1.8-6l-2.3-5l-6-7.4l-6-3.6l-6-1.5l-6 0.2l-6 2.1M569 406.8l-6 3.1l-4 4.1l-3 6l-0.5 6l1.5 6.3l6 7.8l6 2.8l6 0.7l6-1.9l6-5.3l2.5-4.4l1.3-6l-0.9-6l-3.1-6l-5.8-5.5l-6-1.9l-6 0.2M221 453.9l-6 2.8l-6.3 5.3l-5.5 6l-3.9 12l-1 6l1.3 12l3.5 6l17.9 14.5l6 2.1l12-0.3l12-5.8l6-6l2.8-4.5l3.2-10.3l1.1-7.7l-0.4-6l-1.6-6l-3.2-6l-5.1-6l-2.8-2.4l-6-3.1l-6-2.1l-6-1.2l-6 0l-6 0.7M515 484.7l-1.3 1.3l-2.9 6l-0.3 6l1.4 6l3.1 5.4l6 3.3l6 0.2l6-2l6-6.9l2.1-6l0.1-6l-2.3-6l-5.9-4.9l-6-1.1l-6 1.1l-6 3.6M293 515.8l-6 1.5l-8.8 4.7l-6.4 6l-5.7 12l-1.1 6l-0.2 6l1 6l4.5 12l0.1 6l4.6 5.4l6 2.4l1-1.8l5-4.7l3.1-1.3l3.8 0l5.1 2.4l6-0.8l6-2.9l6-4.6l6-8.3l2.2-3.8l2-6l0-12l-1.5-6l-3.4-6l-4.9-6l-6.4-4l-6-1.9l-6-0.7l-6 0.4M455 526.9l-6 2.1l-6 4.5l-5.4 6.5l-2.8 6l-1.2 6l0.1 6l3.3 9l6 9.8l6 3l12 1.3l6-2l6-3.2l5.2-5.9l3.5-6l1.9-6l0.2-6l-0.5-6l-2-6l-4.7-6l-3.6-2.8l-6-3.3l-6-1.4l-6 0.4M233 586.7l-1 1.3l1 3.2l1.4-3.2l-1.4-1.3M300.7 600l0-6l-1.7-2.6l-6-2.8l-6-1.6l-6 3.3l-1.4 3.7l0 6M404.4 600l0-6l5.1-6l2.5-6l0.4-6l-2.3-12l-1.8-6l-4.2-6l-9.1-7.7l-6-3l-6-1.3l-6-0.3l-6 1.1l-6 2.5l-4 2.7l-6.4 6l-4.8 6l-2.2 6l-0.5 6l0.2 6l2 18l0 6M557 227.8l-6 4.4l-6 8.2l-2.1 5.6l-0.8 6l1 6l3 6l4.9 5.3l6 4.3l6 1.7l6-0.1l6-1l7.8-4.2l5.7-6l0.9-6l1.6-6l-0.7-6l-9.3-14.1l-6-3.4l-12-3l-6 2.3M137 261.2l6 0l12 2.4l6 2.8l5.2 3.6l3 6l1.6 6l-0.8 6l-3.2 12l-0.7 6l0.7 6l1.7 6l2.9 6l1.6 2.1l6 5l6 3l6 0.9l6-0.9l6-3l6-5.3l1.3-1.8l4.5-12l1-6l-0.4-6l-2.5-12l0.3-6l2.6-6l22.3-24l6.9-11.5l10.2-12.5l12.7-12l7.1-8l12-10.5l6-2.8l24-8.1l12-7.8l6-4.9l6-3.9l6-2.9l6-2.1l6-3.3l6-1.7l6-0.2l6-1.4l12-0.9l6-1l6-1.7l6-0.1l6 1.2l12 0.4l12 2.2l24-1.1l6 0.8l6 2l6 3.1l3.2 4.7l2.8 2.7l3.4 9.3l7.3 12l7.3 7.8l6 3l12 2.2l6 0l12-2.5l6.4-4.5l6.8-6l2.4-6l0.4-6l-0.5-6l1.8-6l-6.6-12l-4.7-2.9l-6-1.8l-2.1-1.3l-3.9-4.1l-5.9-7.9l-1.9-6l4.8-6l0.2-6l8.8-4.6l5.4-1.4l0-6M581 315.3l-6 2.8l-6 4.6l-4.9 7.3l-2.3 6l-0.5 6l0.7 6l2.9 6l4.1 5.2l6 5.3l12 4.7l6 1l6-2.1l6-3.3l4.5-4.8l4.5-6l1.5-6l1.5-12l-2.4-6l-3.6-2.6l-3.1-3.4l-8.9-5.9l-6-2.8l-6-0.7l-6 0.7M569 401.5l-6 2.8l-6 5.6l-2.8 4.1l-2.3 6l-0.6 6l0.8 6l2.3 6l2.6 4.6l1.3 1.4l4.7 4.2l6 3.4l12 4.2l6 1l6-2.3l4.3-4.5l1.7-3l2.8-3l1-6l2.2-5.9l1.5-6.1l-1.5-3.2l-0.4-2.8l-2.3-6l-8.1-6l-10.7-6l-2.5-0.9l-6-0.4l-6 0.8M629 439.8l-6 0l-2.2 4.2l2.2 2l6 0M629 457.1l-6 0l-6-2.9l-2.6-4.2l-3.4-3.3l-6 0.8l-2.7 2.5l-0.5 6l3.2 3.4l6 0.8l5.5 1.8l-4 6l-9.9 6l-2.2 6l4.6 5.3l2.5 0.7l0.3 6l-2.8 2.9l-12 1.8l-12 10.6l-6 2.4l-12 2l-3.7 4.3l-2.3 1.8l-2.1-1.8l1.6-12l-1-6l-5.4-12l-5.2-6l-5.9-3.9l-6-1.5l-6 0.4l-6 1.3l-6 2.8l-6.9 6.9l-2.3 6l-0.6 6l-0.1 6l1.3 6l9.3 24l-3.5 6l-9.2 6.9l-6-1.5l-3.2-5.4l-6.3-6l-9-6l-5.5-2.8l-6-1.6l-6-0.8l-6 0.5l-6 1.8l-5 2.9l-6.7 6l-4.7 6l-3.6 6l-4 10.9l-6 2l-6-3.9l-2.3-3l-7-6l-8.7-5.6l-6-2.7l-6-1.2l-6-0.2l-6 0.9l-6 2l-6 3.2l-6 4.5l-6 3.6l-6 2.3l-6-3.8l-4.9-15l-3.3-6l-4.6-6l-5.2-4.3l-6-3.4l-6-1.8l-12-0.9l-18 2.5l-6-3.5l-1.4-6.6l0.2-18l-0.5-6l-1.6-6l-3.1-6l-5.6-7.4l-6-4.9l-6-3.3l-12-5.3l-9.9-3.1l-0.9-6l1.2-6l4.5-12l1.4-12l-0.3-6l-4-12l-4-6.8l-6-6.1l-6-3l-6-1.6l-6-0.1l-6 1.3l-6 3l-7.7 7.3l-6.9 12l-2.1 6l-1.3 6l-2.2 12l-0.5 6l-3.3 5l-6 3.5l-6-0.7l-6-1.7l-6 0M629 512.3l-6 0l-6 0.8l-2.3-3.1l-0.5-6l0.2-6l4.2-6l-1.6-3.4l-3.2-2.6l9.2-2l6 0M137 283.2l12 0.4l6 4.2l1.5 6.2l1.7 12l1.4 6l4 12l3.8 6l5.5 6l12.1 8l6 1.4l6-0.8l6-2l6-4.4l9.4-14.2l2.6-6l1.7-6l1.4-6l1.2-12l3.5-12l30.4-42l3.8-4.2l8.2-7.8l9.8-11.1l18-12.3l18-5.6l30-19.3l6-2.9l12-3.6l12-2.3l24-3.9l12 0.3l24 3.8l24 2.1l6 1.6l6 3.8l6.6 7.4l5.4 4.5l6 7.5l6 6l12 6.5l12 4.5l12 2l6 3.5l1.4 1.5l-3.4 18l-0.7 6l0.1 6l1.3 6l2.3 6l5 7.2l6 5.7l6 3.8l18 5l5 2.3l7.6 6l-0.3 6l-6.5 6l-5.8 3l-6 5l-6 8.8l-3.3 7.2l-1.8 6l-0.4 6l0.6 6l2.2 6l4 6l4.7 5.8l15.8 12.2l2.2 3l3.1 3l-2.4 6l-0.7 0.4l-12 3.1l-12 5.3l-6 4.9l-3.4 4.3l-3.7 6l-1.9 6l-0.7 6l0.4 6l3.3 13.2l5.6 10.8l0.9 6l-0.5 0.7l-6 2.9l-6 1.9l-12 1.4l-12 2.8l-6 2.6l-6 4.3l-5.8 7.4l-2.2 6l-2.5 12l-1 12l-0.5 1.3l-6 4.4l-6 0l-12-2.1l-12-1l-6 0.6l-6 1.9l-6 3l-5.6 3.9l-5.9 6l-6.5 7.9l-6 4.4l-6-0.1l-18-10.1l-6-2.2l-6-1l-6-0.2l-12 2.1l-18 6.7l-6-0.8l-6-7.4l-2.9-5.3l-4.8-6l-4.3-4.1l-6-4.5l-6-3l-6-1.8l-12-1.9l-6-0.3l-6-1.2l-2-1.2l-4.6-6l-3-18l-1.8-6l-2.6-6l-4.1-6l-5.9-6.4l-6-4.5l-11.1-7.1l-7.3-6l-1.4-6l1.9-12l0.5-12l-0.6-6l-3.4-12l-2.6-6l-6-10.3l-6-5.2l-12-6l-6-0.8l-6 0.9l-6 3.7l-6 4.5l-6 5.8l-18 22l-6 3.6l-6 2.5l-6 0M397.6 180l3.4-0.6l6 0.3l6 1.1l24 0.5l12 3l6 0.6l6 1.2l12 7.3l18 15.3l6 4.3l6.2 3l18 12l4.4 6l2.9 6l1.7 12l1.7 6l5.6 12l7.5 10.1l6 5.8l3.2 2.1l6.5 6l3.3 6l-0.1 6l-8.8 24l-1.4 6l-0.4 6l0.5 6l2 6l3.1 6l8.1 12l3.1 6l-0.1 6l-3.8 6l-9.2 7.3l-4.3 4.7l-3.9 6l-3 6l-1.7 6l-0.8 6l0.2 12l1.1 12l-2.1 6l-3.5 2.8l-6 3.2l-18 7.4l-7 4.6l-5.7 6l-3.6 6l-7.7 19.3l-3.3 4.7l-2.7 1.9l-6 1.7l-18 0.4l-6 0.6l-6 1.9l-6 2.7l-6 3.5l-6.5 5.3l-5.5 5.4l-6 4.3l-6 1.1l-18-7.5l-6-1.7l-6-0.8l-12 0.2l-6 0.9l-12 3.2l-6 0.1l-6-3l-7.4-8.2l-6.5-6l-4.1-3.4l-6-3.9l-6-3.1l-24-6.7l-1.7-0.9l-4.3-4.1l-3.3-7.9l-3.5-12l-2.5-6l-3.6-6l-5.1-6.4l-19.9-17.6l-3.6-6l-0.9-24l-1-6l-8.5-30l-8.2-18l-1.6-6l0.8-6l1.9-6l3.7-6l7.2-18l4.8-18l7.3-16.3l6-7.7l12-18.1l18-20.8l12-9.7l6-4.2l6-3l18-7.3l6-3.1l12-8.3l18-9.5l24-3.1l14.6-2.9M137 306.4l6 0l5.4 5.6l4.4 12l2.8 6l7.8 12l6.7 6l0.2 6l-4 12l-5.3 6.6l-6 4.6l-6 2.9l-6 1.4l-6 0M357.8 198l7.2-2.1l12-1.4l6-1.4l12-0.9l12 0.8l18-0.7l30 4.2l12 4.2l4.7 3.3l14.3 12l23 16l8.3 8l3.7 6.6l6 15.5l6.8 13.9l13.4 18l3.6 6l2 6l0.2 6l-4 24l0.2 12l3.9 12l5.7 12l1.4 6l-1.4 6l-3 6l-4.8 5.7l-4 6.3l-5.6 12l-2.3 12l-1.6 18l-2.7 6l-5.8 6l-14 7.7l-12 9.2l-5.8 7.1l-3.6 6l-2.6 5.5l-6 8.6l-5.8 3.9l-6.2 2.7l-18 2.8l-6 1.6l-12 5.6l-6 3.5l-6 4.7l-6 3l-6 2l-6-0.9l-12-3.5l-12-1.8l-18 0.4l-12 1.3l-6-1.5l-12-7.8l-12-9.5l-12-6.8l-17.5-7.8l-6.5-5.1l-6-10.2l-7.1-14.7l-4-6l-16.2-18l-3.5-6l-3.9-12l-7-36l-2.1-18l-3.2-12l-0.7-12l1.3-6l1.8-6l6.9-18l1.5-6l2.7-6l2-6l6.4-12l7.1-9.8l8.7-14.2l9.3-13.3l12-11.5l6.5-5.2l5.5-3.5l19-8.5l5-2.6l6-4.1l22.8-11.3M373.2 204l3.8-0.7l12-0.6l18 0.2l12 1l6 1.6l12-0.2l12 1l12 3.4l6 3.1l4.9 3.2l22.3 18l8.8 8.3l6 4.7l6 7.6l5.1 9.4l2 6l2.9 6l7.4 12l9.4 18l1.8 6l-0.2 24l0.6 12l2.5 12l3.3 12l0.8 6l-1.5 6l-2.4 6l-8.1 18l-3.4 12l-3.4 18l-2.2 6l-5.3 6l-6.9 6l-8.4 5.7l-7.7 6.3l-5.8 6l-10.5 14.8l-6 5.4l-6 3.4l-30 8.9l-19 9.5l-5 2.2l-6 1.8l-6 0.2l-30-3.3l-18 0l-6-0.8l-6-1.5l-12-7.2l-12-8.1l-24-14.4l-5.7-4.9l-6.3-7.7l-13.3-22.3l-9.7-12l-7-10.7l-6-17.7l-3.2-13.6l-1.3-24l-0.6-30l0.7-6l1.6-6l4.1-12l3.2-12l1.5-3l8.8-15l8.8-12l2.8-6l4.1-6l5.5-10.8l11.8-13.2l12.2-8.6l6-2.4l18-9.3l6-2.3l18-9.4l14.2-4M363.2 216l13.8-3.6l18-1.3l6 0.4l12 3.1l6 0.4l12 2.3l12-0.1l15.6 4.8l8.4 4.3l6 5.7l11.1 8l5.7 6l8.1 6l11.1 13.1l12.8 22.9l7.8 18l3.1 6l1.8 6l1.8 12l0.7 18l2.8 18l0.9 12l-0.3 6l-1.3 6l-6.4 18l-6.6 24l-2.5 6l-4.2 6l-4.4 4.6l-15.9 13.4l-14.1 15.6l-6 6l-6 4.4l-12 4.8l-48 16.3l-12 1.4l-12-0.4l-6-0.9l-18-0.9l-12-1.9l-6-1.5l-12-6.6l-27.7-18.3l-8.3-7.6l-8.4-10.4l-8.1-12l-14.9-24l-4.6-8.2l-4.1-9.8l-3.5-12l-0.3-12l1.2-36l5.9-24l6.1-18l6.4-12l8.8-12l9.1-18l8.4-12l4-4.8l6-4.5l12-6.7l6-4.2l12-5.1l18-9.4l4.2-1.3M375.7 222l13.3-1.6l6 0.3l12 3.8l6 0.8l18 4.8l6 1.4l6 0.2l6 2.1l6 3.1l6 3.7l6 2.9l12 7.8l8.6 6.7l14.6 18l3.8 6l4.9 12l3.7 6l2.9 6l4 6l2.7 6l1 6l1.8 6.3l0.8 11.7l-0.1 18l1.4 12l1.6 6l0.1 6l-0.9 6l-4.6 18l-8.3 24l-3.8 6l-11.1 12l-5.1 4.7l-12 13.9l-12 10.2l-6 3.7l-24 8l-6 1l-6 2l-30 7.4l-24-0.8l-24-4l-22.4-10.1l-13.6-9.8l-14.6-14.2l-9.2-12l-18.1-30l-6.1-10.9l-3.6-7.1l-1.3-6l0.1-18l1-12l0.2-12l1-6l6.8-18l5.4-18l4.8-12l9.6-13.4l2.7-4.6l2.4-6l7.6-12l4.4-6l6.9-7.7l6-3.2l12-8l12-5.4l8.6-5.7l3.4-1.6l16.7-4.4M371.9 234l11.1-2.1l6-0.1l9.7 2.2l26.3 7.9l6 0.9l6 2l18 7.5l12 6.3l6 3.8l12 10.2l3 3.4l3.9 6l9 18l4.1 6l6.7 12l3.4 12l2.6 6l0 6l0.7 6l-1.1 12l1.1 12l1.3 6l-0.2 6l-3.7 24l-8.3 18l-2.2 6l-20.3 26.1l-6 6.1l-6 4.8l-6 4.3l-6 2.7l-18 5.2l-6 0.4l-6 1.4l-6 2.6l-6 1.5l-18 3.6l-6 0.7l-6 0.5l-6-0.5l-24-3.1l-6-1.4l-12-5.1l-12-7.5l-19.4-18.3l-8.5-12l-18.7-30l-5.8-12l-3.9-12l-0.1-6l1.2-12l-0.1-12l1.1-6l4.4-12l5.4-12l6.1-18l7.1-12l7.8-12l2.9-6l10.9-18l3.6-3.6l11.4-8.4l6.6-3.6l6-4.2l12-5.6l12.9-4.6M380.2 246l2.8-0.9l9.1 0.9l20.9 5.6l12 1.5l6 2.9l12 3.8l24 14.3l12 10.2l6 8l4.5 7.7l2.6 6l6.6 12l4.1 6l2 6l1.7 6l1 12l-1.8 12l2.2 12l1.1 12l-4.8 18l-2.1 12l-9.1 18l-14 20.5l-10.2 9.5l-7.8 5l-6 2.2l-12 3.1l-12 1l-12 3.7l-12 1.9l-12 3l-6 0.5l-18-1.6l-12-2.5l-18-7.3l-13.5-9l-10.1-12l-6.4-8.9l-9.9-15.1l-13.9-24l-4.3-18l-0.3-6l2-18l3.2-12l3.8-6l5.4-12l9-24l13.7-18l3.3-5.1l12-13.9l12-7.1l6-4.9l6-3.7l21.2-7.3M368.1 270l2.9-0.2l12-4.3l12-0.9l12 0l6 1.6l12 1.8l6 1.5l12 4.7l12 6.5l10 7.3l2 2.3l10.7 15.7l3.1 6l7.8 12l6.1 18l1.3 12l-1 6l2 12l0 6l-1.1 12l-5.3 24l-4.9 12l-12.1 18l-6.6 7.9l-6 4.8l-6 3.1l-6 2.1l-12 2.3l-12 0.7l-12 2.2l-30 3.9l-6 0.3l-18-3.9l-18-7.6l-6-4.2l-19.4-23.6l-3.6-6l-2.6-6l-9.5-18l-2-6l-2.3-12l-0.6-12l0.5-6l4-12l8.4-18l6.3-12l2.8-7.2l2.6-4.8l4.2-6l5.6-6l13.8-12l4.2-6l5.6-4.3l12-7.4l3.1-0.3M418.9 288l6.1-0.1l6-0.9l6.3 1l17.7 14.1l8.9 9.9l7.7 12l5.6 6l7.1 30l1.5 24l-0.8 7.3l-4.1 10.7l-2.3 12l-8.3 18l-4.2 6l-6.4 6l-4.7 3.4l-6 3.1l-6 2.3l-24 1.1l-6-0.4l-6 1.4l-12 1.3l-6 2.1l-6 1l-6 0.8l-6-0.8l-9.6-3.3l-8.4-3.7l-12-7.8l-10.3-12.5l-5.9-6l-10-18l-2.4-12l-1.9-6l-0.7-12l1.2-9.3l0.8-2.7l5.7-6l4.1-12l2.6-6l0.8-6l2.5-6l7.5-11.1l6-6.2l12-8.7l12-5.2l4.5-4.8l7.5-3.4l12-0.1l18 4.1l6-4.7l5.9-1.9M384.3 324l4.7-1.9l12 0.9l6 1l18-2.4l6 2l6 2.3l7.5 4.1l10.5 3.6l6 9.8l6 7.3l1.7 3.3l3.1 12l0.3 6l-0.6 12l-2.8 12l-3.7 12l-4.5 12l-5.5 8.2l-3.3 3.8l-2.7 1.9l-12 4.2l-12 0.9l-6-1l-6 0.2l-6 1l-12 2.7l-6 2.6l-6 1.4l-6-0.9l-6-0.1l-12-4.9l-12-7.8l-11.1-12.2l-8.4-18l-0.5-6l3.7-12l3.7-6l8.5-18l2.3-6l3.2-6l4.8-6l2.6-6l3.2-3.3l6-2.8l6-0.4l6-1.5l7.3-4M407.6 348l5.4-2.3l6 0.4l12 2.9l12 4.1l1.5 0.9l5.5 6l3.3 6l1 6l-0.3 6l-1.1 6l-2.8 6l-1.1 1.7l-6 5.7l-9.4 4.6l-8.6 8.8l-15 9.2l-12.1 6l-2.9 1.1l-12 2.5l-12-1.2l-5.2-2.4l-14-12l-5.5-12l-0.8-6l3.4-6l4.1-11.3l9.2-6.7l14.8-13.6l6-2.4l6-0.7l6-3.7l12.6-3.6"/><path d="M357.9 338.1l8 8M357.9 346.1l8-8" stroke="#f00" stroke-width="1.3" fill="none"/><rect x="139.5" y="110.5" width="486.5" height="486.0" fill="none" stroke="#000" stroke-width="1"/><text x="139.5" y="616.8" font-size="13.4" text-anchor="middle">0</text><text x="128.6" y="601.5" font-size="13.4" text-anchor="end">0</text><text x="234.5" y="616.8" font-size="13.4" text-anchor="middle">200</text><text x="128.6" y="506.5" font-size="13.4" text-anchor="end">200</text><text x="329.5" y="616.8" font-size="13.4" text-anchor="middle">400</text><text x="128.6" y="411.5" font-size="13.4" text-anchor="end">400</text><text x="424.5" y="616.8" font-size="13.4" text-anchor="middle">600</text><text x="128.6" y="316.5" font-size="13.4" text-anchor="end">600</text><text x="519.5" y="616.8" font-size="13.4" text-anchor="middle">800</text><text x="128.6" y="221.5" font-size="13.4" text-anchor="end">800</text><text x="614.5" y="616.8" font-size="13.4" text-anchor="middle">1000</text><text x="128.6" y="126.5" font-size="13.4" text-anchor="end">1000</text><rect x="630.5" y="110.5" width="24.0" height="486.0" fill="url(#vir)" stroke="#000" stroke-width="1"/><text x="664.3" y="115.5" font-size="13.4" text-anchor="start">0.0</text><text x="664.3" y="172.5" font-size="13.4" text-anchor="start">−2.5</text><text x="664.3" y="229.6" font-size="13.4" text-anchor="start">−5.0</text><text x="664.3" y="286.6" font-size="13.4" text-anchor="start">−7.5</text><text x="664.3" y="343.7" font-size="13.4" text-anchor="start">−10.0</text><text x="664.3" y="400.7" font-size="13.4" text-anchor="start">−12.5</text><text x="664.3" y="457.8" font-size="13.4" text-anchor="start">−15.0</text><text x="664.3" y="514.8" font-size="13.4" text-anchor="start">−17.5</text><text x="664.3" y="571.8" font-size="13.4" text-anchor="start">−20.0</text><path d="M139.5 596.5v4.5M139.5 596.5h-4.5M234.5 596.5v4.5M139.5 501.5h-4.5M329.5 596.5v4.5M139.5 406.5h-4.5M424.5 596.5v4.5M139.5 311.5h-4.5M519.5 596.5v4.5M139.5 216.5h-4.5M614.5 596.5v4.5M139.5 121.5h-4.5M654.5 110.5h4.5M654.5 167.5h4.5M654.5 224.6h4.5M654.5 281.6h4.5M654.5 338.7h4.5M654.5 395.7h4.5M654.5 452.8h4.5M654.5 509.8h4.5M654.5 566.8h4.5" stroke="#000" stroke-width="1" fill="none"/><text transform="translate(721.5 353.5) rotate(-90)" font-size="13.4" text-anchor="middle">Optical density [nm]</text><text x="381.5" y="102" font-size="16.5" text-anchor="middle">H1:ITMY 1443890441</text><clipPath id="Qcy"><rect x="786.5" y="104.5" width="499.1" height="498"/></clipPath><g clip-path="url(#Qcy)"><path fill="#000" stroke="#000" stroke-width="0.3" d="M796.4 371.8l-0.2-0.3l0.8-0.2l-3.2-2.4l1.4 3.8l0.4-0.8l0.2 0.3zM796.7 389.7l0.7-4l1 0.7l-0.6-5.7l-2.6 5.1l1.1-0.3l-0.7 4zM796.5 407.6l1.3-1.4l0.5 1.1l2.5-5.2l-5 3l1.2 0.3l-1.3 1.4zM796.1 425.1l0.2 0l-0.3 0.5l2.7-0.4l-2.5-1.2l0.2 0.6l-0.2-0.1zM811.2 275.2l-0.1 0.2l-0.3-0.3l0.3 2.1l0.9-1.9l-0.5 0.1l0.1-0.2zM811.6 292.3l-1.7-0.6l0.9-0.9l-5.8-0.2l4.7 3.4l-0.2-1.3l1.7 0.6zM811.2 309.9l-13.4 3.2l0.3-1.2l-5 3l5.7 0.3l-0.8-1l13.5-3.3zM811 327.6l-2.3 1.6l-0.2-1.2l-3.5 4.6l5.4-1.9l-1.1-0.6l2.4-1.7zM811.3 345.2l-0.4 0.1l0.2-0.8l-3.2 1.9l3.7 0.3l-0.5-0.7l0.4 0zM811.6 362.7l-1.3-0.6l0.9-0.8l-5.7-0.6l4.4 3.7l-0.1-1.2l1.4 0.5zM811.4 380.3l-1.7 0l0.5-1.1l-5.5 1.7l5.6 1.6l-0.6-1.1l1.7-0.1zM811.5 397.9l-6.9-1.2l0.7-1l-5.7 0.7l5.1 2.5l-0.3-1.1l6.9 1.1zM811.3 415.5l-3.5 0.6l0.3-1.2l-5.1 2.7l5.7 0.6l-0.7-1l3.5-0.7zM811.9 433.4l-0.3-0.5l1.2 0l-3.8-4.2l0.9 5.6l0.8-1l0.2 0.5zM811.4 450.8l-0.5 0l0.5-0.9l-4.4 1.2l4.4 1.4l-0.5-0.9l0.5 0zM811.7 468.6l-0.2-0.3l0.8-0.1l-3.1-2.7l1.2 3.9l0.4-0.7l0.2 0.3zM826.2 248.4l-6.9 7.8l-0.5-1.2l-2.4 5.3l4.9-3.1l-1.2-0.3l6.9-7.7zM826.5 266.2l-0.2 0l0.1-0.5l-2.3 1.4l2.7 0l-0.4-0.4l0.3-0.1zM826.5 283.5l-2 0.5l0.2-1.2l-4.9 3l5.8 0.2l-0.9-0.9l2.1-0.6zM827 301.2l-7.3-7l1.1-0.5l-5.1-2.6l2.8 5l0.4-1.1l7.3 7zM826.2 318.9l-5.4 8.3l-0.6-1.1l-1.7 5.5l4.4-3.7l-1.2-0.1l5.4-8.3zM826.2 336.5l-5.6 7.1l-0.6-1.2l-2.1 5.4l4.7-3.3l-1.2-0.3l5.6-7.1zM826.6 354l-0.4 0.1l0.3-0.8l-3.4 1.4l3.6 0.8l-0.4-0.7l0.3 0zM827 371.6l-2.6-2.6l1.1-0.4l-5-2.7l2.7 5.1l0.4-1.2l2.6 2.6zM826.9 389.1l-11-7.1l1.1-0.6l-5.5-1.6l3.7 4.4l0.1-1.2l11 7.1zM826.8 406.7l-12.3-5.2l0.9-0.8l-5.7-0.6l4.4 3.6l-0.1-1.2l12.4 5.2zM826.4 424.3l-8.4 3.1l0.1-1.2l-4.5 3.4l5.7-0.3l-0.9-0.9l8.4-3.1zM826.2 442.2l-0.2 0.4l-0.7-0.8l-0.5 4.9l3.1-3.7l-1 0l0.1-0.4zM826.4 459.9l-0.1 0.2l-0.2-0.4l-0.5 2l1.5-1.4l-0.4 0l0.1-0.2zM827 477.7l0.1-0.4l0.7 0.5l-0.6-4.2l-1.8 3.8l0.9-0.3l-0.1 0.4zM826.9 495.1l-0.1-0.2l0.6 0.1l-1.3-2.3l-0.2 2.7l0.4-0.4l0.1 0.3zM841.4 239.6l-3.3 4l-0.5-1.1l-2.2 5.3l4.8-3.2l-1.2-0.3l3.3-3.9zM841.3 257.4l-1.6 5.8l-0.9-0.9l0 5.8l3.1-4.8l-1.2 0.2l1.7-5.7zM842 275.1l-0.1-0.2l0.5 0l-1.5-1.4l0.4 2l0.3-0.4l0.1 0.2zM842.1 293.3l2.5-1.5l0.1 1.2l3.8-4.3l-5.5 1.5l1 0.6l-2.4 1.5zM841.6 310.9l0.5 0.3l-1 0.7l5.6 1.3l-3.9-4.2l-0.1 1.3l-0.6-0.4zM841.3 328.1l1.9 7.9l-1.2-0.2l2.9 4.9l0.3-5.7l-0.9 0.8l-1.9-7.9zM841.3 345.7l0.1 0.5l-1.2-0.4l2.4 5.2l0.9-5.6l-1 0.7l-0.1-0.6zM842.3 363l-0.2-0.4l1 0.1l-2.8-3.6l0.3 4.6l0.7-0.8l0.1 0.5zM842.4 380.6l-5.1-11l1.2 0l-3.8-4.3l0.8 5.7l0.8-1l5.1 11zM842.2 398l-10.8-7.8l1.1-0.6l-5.4-1.9l3.5 4.6l0.2-1.2l10.7 7.7zM841.5 415.6l-9 8.3l-0.3-1.2l-3 4.9l5.2-2.5l-1.1-0.4l8.9-8.3zM841.3 433.5l-1.3 6.9l-1-0.7l0.7 5.7l2.6-5.1l-1.2 0.3l1.3-6.9zM841.8 451.4l0.1 0.1l-0.3 0.3l2.1 0.3l-1.6-1.5l0 0.5l-0.2-0.1zM842.1 468.3l-0.7-0.4l1.1-0.7l-5.6-1.2l3.9 4.1l0.1-1.2l0.7 0.4zM842 486.3l0-0.2l0.4 0.1l-1.2-1.7l0.1 2.1l0.3-0.3l0.1 0.2zM841.5 503.6l-0.4 0.4l-0.4-1.1l-2.6 4.9l4.9-2.7l-1.1-0.3l0.3-0.4zM841.6 521.8l0.1 0.2l-0.7 0.1l2.4 2.4l-0.7-3.4l-0.4 0.6l-0.2-0.3zM857.6 213.9l3.4-6.2l0.7 1.1l1.2-5.6l-4.1 4l1.2 0l-3.4 6.1zM856.7 231.6l3.1 2.7l-1.1 0.4l5.2 2.4l-3.1-4.9l-0.3 1.2l-3-2.6zM856.8 249.3l8.9 5.9l-1.1 0.6l5.5 1.7l-3.7-4.4l-0.1 1.2l-8.9-6zM856.7 266.8l2.5 2.3l-1.1 0.4l5.2 2.5l-3-4.9l-0.3 1.2l-2.5-2.3zM857.2 284.5l1.7-0.4l-0.3 1.2l4.9-2.9l-5.7-0.3l0.8 1l-1.6 0.4zM857.2 302.1l7.7-1.7l-0.3 1.2l5-2.9l-5.8-0.3l0.8 0.9l-7.6 1.8zM856.8 319.7l8.6 4.4l-1 0.7l5.6 1.1l-4.1-4l0 1.2l-8.6-4.4zM856.7 337.2l1.2 1.1l-1.1 0.4l5.1 2.5l-2.9-4.9l-0.4 1.2l-1.1-1.1zM857.2 354.8l0.4-0.1l-0.3 0.9l3.9-2l-4.3-0.4l0.5 0.7l-0.4 0.1zM857.6 372.2l3.3-7.2l0.8 0.9l0.8-5.7l-3.8 4.4l1.2-0.1l-3.3 7.3zM857.6 389.8l6.3-17l0.8 0.9l0.4-5.7l-3.5 4.6l1.3-0.2l-6.3 17zM857 407.7l8 1.8l-0.8 1l5.7-0.4l-5-2.8l0.3 1.1l-8-1.7zM856.6 425l6 13.5l-1.2-0.1l3.8 4.3l-0.8-5.7l-0.8 1l-6-13.4zM856.7 442.8l0.4 0.4l-1.1 0.4l5.1 2.5l-2.9-4.9l-0.3 1.2l-0.4-0.4zM857.6 459.7l-0.8-1.3l1.2-0.1l-4.1-4l1.3 5.6l0.6-1l0.8 1.4zM857.2 477.1l-9.5-1.8l0.7-1l-5.7 0.7l5.1 2.6l-0.3-1.2l9.5 1.7zM856.8 494.7l-10.3 6.3l-0.1-1.2l-3.8 4.3l5.6-1.5l-1.1-0.6l10.3-6.3zM857 512.3l-0.5 0.2l0.2-1.1l-4.3 2.7l5.1 0.1l-0.7-0.8l0.4-0.1zM857 530.1l-0.3 0.1l0.1-0.7l-2.6 2l3.2-0.2l-0.5-0.5l0.3-0.1zM871.8 205l0.8 1.9l-1.2-0.1l3.6 4.4l-0.6-5.7l-0.8 0.9l-0.8-1.8zM872.2 222.9l7.7 1.4l-0.8 1l5.7-0.7l-5.1-2.6l0.4 1.2l-7.7-1.3zM872.1 240.5l11.3 6.5l-1 0.7l5.5 1.3l-3.9-4.2l-0.1 1.3l-11.3-6.6zM872.1 258.1l4 2.3l-1 0.7l5.6 1.3l-4-4.2l0 1.2l-4.1-2.3zM872 275.6l2.3 1.8l-1.1 0.6l5.3 2.1l-3.3-4.7l-0.2 1.2l-2.3-1.8zM872.3 293.3l2.8 0.4l-0.7 1l5.7-1l-5.3-2.3l0.4 1.2l-2.8-0.3zM872.2 310.9l5.8 1l-0.7 1l5.7-0.7l-5.2-2.5l0.4 1.2l-5.8-1zM872.1 328.5l5.2 2.2l-1 0.8l5.7 0.6l-4.4-3.6l0.1 1.2l-5.1-2.2zM872.3 346.1l3.5 0.6l-0.7 1l5.7-0.7l-5.2-2.5l0.4 1.1l-3.6-0.5zM872.5 363.7l1.7-0.6l-0.1 1.2l4.5-3.6l-5.7 0.5l0.9 0.8l-1.7 0.7zM872.7 381.2l11.2-8l0.2 1.2l3.5-4.5l-5.4 1.8l1 0.6l-11.2 8.1zM872.5 398.9l21.3-7.6l-0.2 1.2l4.7-3.4l-5.8 0.3l0.9 0.9l-21.2 7.6zM872.2 416.5l18.2 5.7l-0.8 0.9l5.7 0l-4.8-3.2l0.2 1.2l-18.2-5.6zM872.1 434.1l5.4 2.8l-1 0.7l5.7 1.1l-4.2-4l0 1.2l-5.4-2.8zM872.9 451.3l1-5.6l1 0.7l-0.6-5.7l-2.6 5.1l1.1-0.3l-1 5.6zM872.7 468.4l-11.6-11.9l1.1-0.4l-5-2.8l2.7 5.1l0.4-1.1l11.6 11.9zM872.3 485.9l-16.2 1.4l0.5-1.1l-5.4 2.1l5.6 1.1l-0.6-1l16.2-1.5zM871.9 503.7l-7.5 11.5l-0.6-1.1l-1.6 5.5l4.4-3.7l-1.3-0.1l7.5-11.5zM871.8 521.8l0.2 0.5l-1.2-0.2l3.2 4.6l-0.1-5.6l-0.9 0.8l-0.1-0.5zM872.2 539.6l0.3 0.1l-0.7 0.6l4.2 0.6l-3.2-2.8l0.1 0.9l-0.4-0.2zM872.1 556.6l-0.3 0.3l-0.3-0.8l-1.4 3.6l3.1-2.2l-0.8-0.2l0.2-0.3zM887 195.9l-0.6 4.2l-1-0.7l0.8 5.7l2.4-5.2l-1.1 0.4l0.6-4.2zM887.2 214l5.3 4.8l-1.2 0.5l5.2 2.4l-2.9-4.9l-0.4 1.2l-5.2-4.8zM887.8 231.7l5.9-2.1l-0.1 1.2l4.6-3.3l-5.7 0.2l0.9 0.9l-6 2.1zM887.3 249.3l1.3 0.9l-1 0.6l5.4 1.7l-3.6-4.5l-0.2 1.3l-1.3-1zM887.3 266.9l1.8 0.9l-1 0.7l5.6 1.2l-4.1-4.1l0 1.3l-1.8-1zM887.4 284.5l3.1 0.9l-0.8 0.9l5.7-0.1l-4.8-3.1l0.2 1.2l-3.1-0.8zM887.4 302.1l4.9 1.7l-0.8 0.8l5.7 0.2l-4.7-3.3l0.2 1.2l-4.9-1.6zM887.5 319.7l4.2 0.9l-0.8 1l5.7-0.5l-5-2.8l0.3 1.2l-4.2-0.8zM887.6 337.3l3.1 0l-0.6 1.1l5.5-1.8l-5.5-1.5l0.5 1.1l-3 0.1zM887.4 354.9l4.5 1.3l-0.8 0.9l5.7-0.1l-4.8-3.1l0.2 1.2l-4.5-1.2zM887.7 372.5l5.7-1.4l-0.3 1.2l5-2.9l-5.7-0.3l0.8 1l-5.8 1.4zM887.8 390.1l10.3-3.6l-0.2 1.3l4.7-3.4l-5.7 0.2l0.8 0.9l-10.3 3.6zM887.6 407.7l12.2-0.3l-0.5 1.1l5.4-1.9l-5.5-1.4l0.6 1.1l-12.2 0.4zM887.6 425.3l8.3 0.3l-0.6 1.1l5.6-1.5l-5.5-1.8l0.6 1.1l-8.4-0.2zM888 442.8l4.9-6l0.5 1.1l2.3-5.3l-4.8 3.2l1.2 0.3l-4.9 5.9zM888.1 460.1l3.1-22.3l1 0.7l-0.8-5.7l-2.4 5.2l1.1-0.4l-3.1 22.3zM888.1 477.6l-0.4-11.1l1.2 0.5l-1.9-5.4l-1.4 5.5l1-0.5l0.4 11zM887 495.2l-1.4 15.9l-1-0.7l1.1 5.6l2.1-5.3l-1.1 0.5l1.4-16zM887.1 513.1l5 7.4l-1.2 0.1l4.4 3.7l-1.7-5.5l-0.6 1l-5-7.3zM887.2 530.8l2.7 2.1l-1.1 0.5l5.4 2l-3.4-4.6l-0.2 1.2l-2.7-2zM887.5 548.3l0.3 0l-0.3 0.6l2.9-0.5l-2.7-1.3l0.2 0.7l-0.3-0.1zM887.7 566l0.4-0.2l-0.1 1l3.6-2.8l-4.5 0.4l0.7 0.6l-0.4 0.2zM902.3 187.5l3.6 5.9l-1.3 0l4.3 3.9l-1.4-5.5l-0.7 1l-3.5-5.9zM902.4 205.1l3.4 5.2l-1.3 0.1l4.4 3.7l-1.6-5.5l-0.6 1.1l-3.4-5.2zM902.6 222.9l2.9 1.5l-1 0.7l5.7 1.1l-4.2-4l0 1.2l-2.9-1.5zM902.4 240.4l3.1 3.3l-1.1 0.4l4.9 2.9l-2.5-5.2l-0.5 1.2l-3.1-3.4zM902.4 258l3.3 3.1l-1.2 0.4l5.1 2.6l-2.8-5l-0.4 1.2l-3.2-3.1zM902.5 275.6l2.7 2.2l-1.1 0.5l5.3 2.2l-3.2-4.7l-0.3 1.2l-2.7-2.2zM902.6 293.3l5.1 2l-0.9 0.8l5.8 0.4l-4.6-3.5l0.1 1.2l-5.1-1.9zM902.7 310.9l6.6 2.2l-0.8 0.9l5.7 0.1l-4.7-3.2l0.2 1.2l-6.7-2.2zM902.8 328.5l3.8 0.2l-0.6 1.1l5.6-1.4l-5.4-1.9l0.5 1.1l-3.9-0.1zM902.7 346.1l4.4 0.8l-0.7 1l5.7-0.7l-5.2-2.6l0.4 1.2l-4.4-0.7zM902.9 363.7l5.8-0.5l-0.5 1.1l5.3-2.1l-5.6-1.1l0.6 1l-5.7 0.6zM902.9 381.3l5.3-1.2l-0.3 1.2l5-2.9l-5.8-0.3l0.8 0.9l-5.2 1.3zM903 398.9l6.5-1.6l-0.3 1.2l4.9-3l-5.7-0.2l0.8 0.9l-6.5 1.7zM903 416.5l5.9-1.7l-0.2 1.2l4.8-3.2l-5.7 0l0.8 0.9l-5.9 1.8zM903.1 434.1l5.5-2.6l0 1.2l4.2-3.9l-5.7 0.9l1 0.8l-5.5 2.6zM903.2 451.6l10.1-11l0.5 1.1l2.5-5.2l-5 3l1.2 0.3l-10.1 11zM903.2 469.2l19.9-19.1l0.3 1.2l2.8-5l-5.1 2.6l1.2 0.4l-19.9 19.1zM902.8 486.9l24 1l-0.6 1.1l5.6-1.5l-5.5-1.8l0.6 1.1l-24.1-0.9zM902.4 504.4l11.4 12.1l-1.1 0.4l4.9 2.8l-2.5-5.1l-0.5 1.2l-11.4-12.2zM902.5 522l0.4 0.3l-1.1 0.6l5.2 2l-3.2-4.6l-0.2 1.2l-0.4-0.3zM903 538.9l-0.2-0.2l0.6-0.3l-3.1-1.2l1.9 2.8l0.2-0.7l0.2 0.2zM902.8 557.2l0.4 0l-0.5 0.7l3.9-0.7l-3.6-1.5l0.2 0.8l-0.3-0.1zM917.9 178.9l5.5 1.9l-0.9 0.9l5.8 0.2l-4.7-3.4l0.2 1.3l-5.6-1.9zM917.6 195.7l-1.2 1.6l-0.5-1.1l-1.9 5.4l4.5-3.4l-1.2-0.2l1.2-1.7zM917.6 213.9l3.1 4l-1.2 0.2l4.6 3.4l-2-5.4l-0.6 1.1l-3-3.9zM917.7 231.6l3.3 3l-1.2 0.4l5.2 2.5l-3-4.9l-0.3 1.2l-3.3-3zM917.8 249.3l4.3 2.8l-1 0.6l5.5 1.6l-3.7-4.3l-0.2 1.2l-4.3-2.9zM917.8 266.9l4.7 3.2l-1.1 0.6l5.4 1.8l-3.5-4.5l-0.2 1.2l-4.7-3.3zM917.8 284.5l5.1 2.8l-1 0.7l5.7 1.1l-4.1-4l0 1.2l-5.2-2.8zM917.8 302.1l4.5 2.2l-1 0.7l5.7 0.9l-4.3-3.9l0.1 1.3l-4.5-2.2zM917.9 319.7l4 1.2l-0.8 0.9l5.7 0l-4.8-3.1l0.2 1.2l-4-1.2zM917.9 337.3l4.3 1.1l-0.8 0.9l5.7-0.3l-5-2.9l0.3 1.2l-4.2-1zM918 354.9l4.6 0.6l-0.6 1.1l5.6-1l-5.2-2.3l0.4 1.2l-4.7-0.6zM918.1 372.5l4.3-0.3l-0.4 1.1l5.3-2.1l-5.6-1.2l0.6 1.1l-4.3 0.4zM918.2 390.1l5.1-1.3l-0.2 1.2l4.9-3l-5.8-0.2l0.8 0.9l-5.1 1.4zM918.2 407.7l5.5-1.4l-0.3 1.2l4.9-3l-5.7-0.2l0.8 0.9l-5.5 1.5zM918.2 425.3l5.5-1.7l-0.2 1.2l4.7-3.3l-5.7 0.1l0.8 0.9l-5.4 1.8zM918.3 442.9l5.9-3.6l0.1 1.3l3.8-4.3l-5.5 1.4l1 0.7l-5.8 3.5zM918.4 460.4l10.3-8.1l0.2 1.2l3.3-4.7l-5.3 2.1l1.1 0.5l-10.3 8.2zM918.2 478.1l19.7-6.7l-0.1 1.3l4.7-3.4l-5.8 0.2l0.9 0.9l-19.7 6.7zM918 495.7l15 2.5l-0.7 1l5.7-0.7l-5.2-2.5l0.4 1.1l-15-2.4zM918.2 513.3l1.7-0.3l-0.3 1.2l5-2.8l-5.7-0.5l0.8 1l-1.7 0.4zM918.4 530l-0.7-0.6l1.1-0.5l-5.3-2.1l3.3 4.7l0.2-1.2l0.7 0.5zM918 547.6l-0.4 0.1l0.1-0.8l-3.2 2.1l3.9 0.1l-0.6-0.6l0.4-0.1zM917.8 565.1l-1.9 1.3l-0.2-1.2l-3.5 4.5l5.4-1.8l-1.1-0.6l1.9-1.2zM933.2 170.1l3.7 0.9l-0.8 0.9l5.7-0.3l-5-2.9l0.3 1.2l-3.7-0.8zM932.9 187.5l1.2 1.8l-1.2 0.2l4.5 3.6l-1.8-5.5l-0.6 1.1l-1.2-1.8zM932.9 205.2l3.8 4.3l-1.2 0.3l4.8 3.1l-2.3-5.2l-0.5 1.1l-3.8-4.4zM932.9 222.8l4.5 3.8l-1.2 0.5l5.3 2.3l-3.1-4.8l-0.3 1.2l-4.4-3.8zM932.9 240.4l3 3.2l-1.2 0.3l5 3l-2.6-5.2l-0.4 1.1l-3-3.2zM933 258l4.1 3.2l-1.1 0.5l5.3 2l-3.3-4.6l-0.3 1.2l-4.1-3.1zM933.1 275.7l4 2l-1 0.8l5.7 1l-4.2-4l0 1.3l-4-2.1zM933 293.3l4.6 2.9l-1 0.6l5.5 1.6l-3.8-4.4l-0.1 1.3l-4.6-3zM933.1 310.9l4.4 1.7l-0.9 0.8l5.7 0.5l-4.5-3.5l0.1 1.2l-4.4-1.7zM933.2 328.5l4 0.6l-0.7 1l5.7-0.8l-5.2-2.4l0.4 1.2l-4-0.6zM933.2 346.1l4.3 0.9l-0.7 0.9l5.7-0.6l-5.1-2.6l0.3 1.2l-4.3-0.8zM933.4 363.7l3-0.3l-0.4 1.2l5.3-2.3l-5.7-1l0.7 1l-3.1 0.4zM933.4 381.3l4.6-0.7l-0.4 1.1l5.1-2.5l-5.7-0.7l0.8 1l-4.6 0.8zM933.4 398.9l4.3-1l-0.3 1.2l5-2.9l-5.8-0.3l0.8 0.9l-4.2 1.1zM933.5 416.5l5.3-2.5l0 1.3l4.3-3.9l-5.7 0.9l0.9 0.7l-5.2 2.5zM933.5 434.1l4.5-2.1l0 1.3l4.2-3.9l-5.6 0.9l0.9 0.7l-4.4 2.1zM933.6 451.6l6.3-4.8l0.2 1.2l3.3-4.7l-5.3 2.1l1.1 0.5l-6.2 4.9zM933.6 469.3l7.7-4.7l0.1 1.2l3.9-4.3l-5.6 1.5l1.1 0.6l-7.8 4.7zM933.6 486.9l7-3.7l0.1 1.3l4.1-4l-5.7 1l1 0.8l-7 3.6zM933.8 504.3l2.5-3.9l0.6 1.1l1.6-5.5l-4.4 3.7l1.3 0.1l-2.6 3.9zM933.8 521.3l-6.4-11l1.2 0l-4.1-4l1.3 5.6l0.7-1l6.3 11zM933.4 538.7l-16-3.5l0.7-0.9l-5.7 0.4l5.1 2.8l-0.4-1.2l16.1 3.4zM932.9 556.4l-8.8 7.7l-0.3-1.2l-3 4.9l5.2-2.4l-1.2-0.5l8.9-7.7zM933.3 574.3l-0.1 0l0.1-0.2l-1.2 0.3l1.2 0.3l-0.1-0.2l0.1 0zM948.4 161.2l0.4 0.2l-0.7 0.6l4.4 0.4l-3.5-2.8l0.1 1l-0.4-0.2zM948 178.5l0.4 2.6l-1.2-0.4l2.5 5.2l0.8-5.7l-1 0.7l-0.4-2.6zM948.1 196.3l2.6 3.7l-1.2 0.2l4.5 3.5l-1.8-5.5l-0.6 1.1l-2.6-3.6zM948.1 213.9l2 3.2l-1.2 0.1l4.3 3.8l-1.6-5.6l-0.6 1.1l-2-3.2zM948.2 231.6l3.8 3.9l-1.2 0.4l5.1 2.8l-2.7-5.1l-0.4 1.2l-3.9-4zM948.2 249.2l2.8 2.9l-1.2 0.4l5 2.8l-2.6-5.1l-0.4 1.1l-2.9-2.9zM948.1 266.8l3.4 4l-1.2 0.3l4.8 3.2l-2.3-5.3l-0.5 1.1l-3.3-4.1zM948.3 284.5l2.8 1.8l-1 0.6l5.5 1.6l-3.8-4.4l-0.1 1.3l-2.9-1.9zM948.2 302.1l2.7 1.7l-1.1 0.6l5.5 1.7l-3.7-4.4l-0.1 1.2l-2.6-1.8zM948.3 319.7l3.1 1.5l-0.9 0.8l5.6 0.9l-4.2-3.9l0 1.2l-3.1-1.5zM948.3 337.3l2.5 1.1l-1 0.8l5.7 0.8l-4.3-3.8l0.1 1.2l-2.5-1.1zM948.4 354.9l2.1 0.6l-0.8 0.9l5.7 0l-4.8-3.1l0.2 1.2l-2.1-0.6zM948.5 372.5l2.5 0.3l-0.7 1l5.7-1.1l-5.4-2.2l0.5 1.2l-2.5-0.2zM948.6 390.1l4.7-0.2l-0.5 1.2l5.4-1.9l-5.6-1.4l0.6 1l-4.7 0.3zM948.8 407.7l4.3-2.2l0 1.3l4.1-4l-5.6 1l1 0.8l-4.3 2.1zM948.8 425.3l3.4-2.1l0.1 1.3l3.8-4.3l-5.5 1.4l1 0.7l-3.3 2zM948.9 442.8l4.6-3.9l0.3 1.2l3.1-4.8l-5.2 2.3l1.1 0.5l-4.6 3.9zM948.9 460.4l3.2-3.2l0.4 1.1l2.7-5l-5.1 2.7l1.2 0.4l-3.1 3.2zM948.9 478l5.5-5.2l0.4 1.2l2.8-5l-5.1 2.6l1.2 0.4l-5.5 5.2zM949.1 495.4l2.7-6.9l0.8 0.9l0.5-5.7l-3.5 4.5l1.2-0.1l-2.8 6.9zM949.1 512.8l1.3-18.9l1.1 0.6l-1.3-5.6l-2 5.4l1.1-0.5l-1.3 19zM949.1 530.2l-5.2-17.1l1.2 0.2l-3.1-4.8l0 5.8l0.9-0.9l5.1 17.2zM948.1 547.6l-6.9 8l-0.4-1.2l-2.4 5.3l4.9-3.1l-1.2-0.3l6.9-7.9zM948 565.7l1.1 11.3l-1.1-0.4l2.1 5.3l1.1-5.7l-1 0.7l-1.1-11.4zM948.2 583.4l0.2 0.4l-0.9 0.1l3.2 2.7l-1.1-4.1l-0.5 0.8l-0.2-0.3zM963.3 152.3l0.5 0.7l-1.3 0.1l4.3 3.9l-1.4-5.6l-0.7 1.1l-0.4-0.8zM963.6 170.1l1.1 0.4l-0.8 0.9l5.7 0.1l-4.7-3.3l0.2 1.2l-1.1-0.3zM963.3 187.3l2.5 11.1l-1.2-0.3l2.8 5l0.4-5.7l-0.9 0.8l-2.6-11.1zM963.3 205.1l2.6 3.7l-1.3 0.2l4.5 3.6l-1.7-5.4l-0.6 1l-2.6-3.7zM963.3 222.7l3.3 4.9l-1.2 0.2l4.4 3.6l-1.7-5.5l-0.6 1.1l-3.3-4.9zM963.3 240.3l3.3 5.1l-1.2 0.1l4.3 3.7l-1.6-5.5l-0.6 1.1l-3.2-5.1zM963.5 258l2.7 2.2l-1.1 0.5l5.4 2.1l-3.3-4.7l-0.3 1.2l-2.8-2.1zM963.3 275.5l2.5 3.6l-1.3 0.2l4.5 3.6l-1.7-5.5l-0.6 1.1l-2.5-3.6zM963.4 293.2l2.9 2.7l-1.1 0.4l5.2 2.5l-3-4.9l-0.3 1.2l-2.9-2.7zM963.4 310.8l1.6 1.4l-1.1 0.5l5.2 2.3l-3-4.8l-0.4 1.2l-1.5-1.4zM963.5 328.4l0.8 0.7l-1.1 0.5l5.4 1.9l-3.4-4.5l-0.2 1.2l-0.9-0.6zM963.5 346l2.3 1.8l-1 0.5l5.4 1.9l-3.5-4.6l-0.2 1.3l-2.4-1.7zM963.7 363.7l3.1 0.6l-0.8 1l5.7-0.7l-5.1-2.6l0.4 1.2l-3.1-0.5zM963.8 381.3l2.8-0.2l-0.5 1.2l5.4-2.1l-5.6-1.2l0.6 1l-2.8 0.3zM963.9 398.9l2-0.5l-0.3 1.2l4.9-3l-5.8-0.2l0.9 0.9l-2 0.6zM964.1 416.5l3.8-2.4l0.1 1.2l3.8-4.4l-5.6 1.6l1.1 0.6l-3.8 2.4zM964.1 434l3-2.1l0.2 1.2l3.4-4.6l-5.4 1.9l1.1 0.6l-2.9 2.2zM964.2 451.6l3.5-3.5l0.4 1.2l2.7-5l-5.1 2.7l1.2 0.4l-3.5 3.4zM964.2 469.2l3.4-3.8l0.5 1.2l2.5-5.2l-4.9 2.9l1.1 0.4l-3.4 3.7zM964.3 486.6l2-4.1l0.7 0.9l0.9-5.6l-3.8 4.2l1.2 0l-2 4.2zM964.3 504.2l5.6-12.7l0.8 1l0.7-5.7l-3.8 4.3l1.3 0l-5.6 12.7zM964.3 521.9l11.5-22.2l0.7 1l1.1-5.6l-4 4.1l1.2 0l-11.5 22.1zM964 539.7l16.2-6.5l-0.1 1.2l4.5-3.6l-5.7 0.5l0.9 0.8l-16.2 6.6zM963.5 557.2l14.1 11.1l-1.1 0.5l5.3 2.1l-3.3-4.7l-0.2 1.3l-14.2-11.1zM963.4 574.7l0.3 0.4l-1.2 0.3l4.5 3.2l-2-5.2l-0.5 1.1l-0.3-0.4zM978.7 161.1l0.4 0.3l-0.9 0.4l4 1.9l-2.3-3.9l-0.3 1l-0.3-0.3zM978.6 178.8l2.2 2.3l-1.2 0.3l4.9 2.9l-2.5-5.1l-0.4 1.1l-2.2-2.3zM978.6 196.3l3 4.5l-1.2 0.2l4.5 3.6l-1.7-5.4l-0.7 1l-3-4.5zM978.6 213.9l2.2 3.7l-1.2 0.1l4.2 3.8l-1.4-5.6l-0.7 1.1l-2.2-3.7zM978.6 231.6l2.5 2.4l-1.1 0.4l5.1 2.7l-2.8-5l-0.4 1.1l-2.5-2.4zM978.6 249.1l1.7 2.1l-1.2 0.3l4.7 3.2l-2.2-5.3l-0.5 1.1l-1.6-2zM978.5 266.7l0.8 1.4l-1.2 0.1l4.1 4l-1.2-5.6l-0.7 1l-0.8-1.5zM978.6 284.4l1.5 1.6l-1.2 0.3l4.8 3.1l-2.3-5.2l-0.5 1.1l-1.5-1.7zM978.8 302.1l0.4 0.3l-1 0.6l5.6 1.4l-3.9-4.2l-0.1 1.2l-0.5-0.3zM978.9 319.6l0.4 0.2l-0.8 0.6l4.4 0.5l-3.4-2.9l0.1 1l-0.4-0.2zM978.8 337.3l0.5 0.2l-0.9 0.7l5.3 0.9l-4-3.7l0 1.2l-0.4-0.3zM978.8 354.9l0.6 0.2l-0.9 0.9l5.7 0.4l-4.5-3.5l0.1 1.2l-0.6-0.2zM979 372.4l0.4 0.1l-0.5 0.8l4.4-0.9l-4.1-1.7l0.3 0.9l-0.4 0zM979.2 390l0.4-0.1l-0.1 0.9l3.7-2.7l-4.6 0.3l0.7 0.6l-0.4 0.2zM979.2 407.7l0.9-0.3l-0.1 1.2l4.6-3.3l-5.7 0.2l0.9 0.9l-0.9 0.3zM979.3 425.3l1.7-1.1l0.1 1.2l3.7-4.4l-5.5 1.6l1.1 0.7l-1.7 1zM979.4 442.8l2.2-2.2l0.4 1.2l2.7-5.1l-5.1 2.7l1.2 0.4l-2.2 2.2zM979.5 460.3l3.6-4.5l0.5 1.1l2.1-5.4l-4.7 3.3l1.2 0.3l-3.6 4.6zM979.5 478l3.8-4.6l0.5 1.1l2.3-5.3l-4.8 3.2l1.2 0.3l-3.9 4.5zM979.5 495.5l3.1-5.8l0.7 1l1.1-5.7l-4 4.1l1.2 0l-3.1 5.8zM979.5 513.1l8.3-12.2l0.6 1l1.7-5.5l-4.5 3.7l1.3 0.1l-8.3 12.3zM979.3 530.9l17.8-11l0.1 1.2l3.8-4.3l-5.6 1.5l1.1 0.7l-17.8 10.9zM979 548.5l16.4 0.1l-0.6 1.1l5.5-1.7l-5.5-1.6l0.6 1.1l-16.4 0zM978.6 566l2.9 3.3l-1.2 0.3l4.8 3.1l-2.3-5.2l-0.5 1.1l-2.8-3.4zM979 582.9l-0.3 0.1l0.2-0.6l-2.4 1.1l2.6 0.5l-0.3-0.5l0.3 0zM993.8 152.2l1.9 4.5l-1.3 0l3.7 4.4l-0.6-5.7l-0.8 0.9l-1.9-4.5zM993.8 169.9l2.8 3.5l-1.2 0.3l4.8 3.2l-2.2-5.3l-0.5 1.1l-2.8-3.4zM993.8 187.4l2.2 5.5l-1.2-0.1l3.7 4.4l-0.6-5.7l-0.8 0.9l-2.3-5.4zM993.8 205l1.6 4.9l-1.2-0.2l3.4 4.7l-0.3-5.7l-0.8 0.8l-1.7-4.9zM993.8 222.7l1.9 3l-1.2 0.2l4.3 3.7l-1.5-5.5l-0.6 1l-2-3zM993.8 240.3l2.2 3l-1.2 0.2l4.6 3.5l-1.9-5.5l-0.6 1.1l-2.2-2.9zM993.8 257.9l1.6 2.7l-1.2 0.1l4.2 3.9l-1.4-5.6l-0.7 1.1l-1.6-2.8zM993.8 275.5l0.3 0.4l-1.1 0.2l4.2 3.4l-1.6-5.2l-0.6 1l-0.3-0.4zM993.9 293.2l0.9 0.9l-1.1 0.4l5.1 2.6l-2.9-5l-0.3 1.2l-0.9-0.9zM993.9 310.6l0.1 0.4l-1 0l3.1 3.5l-0.6-4.7l-0.6 0.8l-0.2-0.4zM993.8 328.3l0.5 0.7l-1.2 0.2l4.6 3.5l-1.9-5.4l-0.6 1.1l-0.5-0.7zM993.9 345.9l0.3 0.4l-1.2 0.2l4.4 3.2l-1.9-5l-0.5 1l-0.3-0.4zM994 363.4l0.2 0.3l-0.8 0.2l3.3 2.1l-1.6-3.5l-0.3 0.7l-0.2-0.2zM994.2 381.3l0.5 0l-0.5 1l5-1.1l-4.8-1.9l0.4 1l-0.5 0zM994.3 398.9l0.5-0.1l-0.3 1l4.3-2l-4.7-0.8l0.6 0.9l-0.5 0zM994.6 416.3l0.3-0.3l0.3 1l2.5-4.1l-4.3 2.1l0.9 0.4l-0.3 0.3zM994.7 434l1.8-2l0.4 1.1l2.5-5.2l-4.9 3l1.2 0.3l-1.8 2zM994.7 451.5l1.4-1.9l0.5 1.1l1.9-5.4l-4.5 3.5l1.2 0.2l-1.4 1.9zM994.8 469l1.1-3.2l0.9 0.9l0.3-5.7l-3.4 4.6l1.2-0.2l-1.1 3.2zM994.8 486.6l1.9-5l0.8 0.9l0.4-5.8l-3.5 4.6l1.3-0.1l-1.9 5zM994.8 504.3l2.4-4.3l0.7 1l1.2-5.6l-4.1 4l1.2 0l-2.4 4.3zM994.7 521.9l4.7-6.7l0.6 1l1.7-5.4l-4.5 3.6l1.3 0.1l-4.7 6.8zM994.7 539.6l4-4.8l0.5 1.1l2.3-5.2l-4.8 3.1l1.2 0.3l-4 4.7zM994.8 556.8l-0.1-1.9l1.2 0.5l-1.9-5.5l-1.4 5.6l1-0.6l0.1 1.9zM993.9 574.4l0 0.3l-0.6-0.3l1 3.4l1-3.4l-0.7 0.3l0-0.3zM994.4 591.9l0-0.1l0.3 0l-1-1.2l0.1 1.6l0.3-0.3l0 0.2zM1009.4 143.2l0 0.1l-0.3-0.1l0.3 1.5l0.6-1.5l-0.3 0.2l0-0.2zM1009 161l1.9 3.9l-1.2 0l3.9 4.2l-0.9-5.6l-0.8 1l-1.9-3.9zM1009 178.7l3 5.3l-1.2 0l4.1 4l-1.2-5.6l-0.7 1l-3-5.3zM1009 196.2l1.7 4.5l-1.3-0.2l3.5 4.6l-0.4-5.7l-0.8 0.9l-1.7-4.5zM1009 213.7l0.9 4.2l-1.2-0.3l2.9 5l0.4-5.7l-1 0.8l-0.9-4.2zM1009 231.3l1 4l-1.2-0.2l3 4.9l0.2-5.8l-0.9 0.9l-1.1-4zM1009.1 249.1l1.4 2.2l-1.2 0.2l4.4 3.7l-1.7-5.5l-0.6 1l-1.4-2.2zM1009 266.6l0.6 1.3l-1.2 0l3.9 4.2l-0.9-5.7l-0.8 1l-0.6-1.2zM1009.2 284.2l0.2 0.3l-0.8 0.1l2.9 2.5l-1.1-3.7l-0.4 0.7l-0.2-0.3zM1009.1 301.8l0.2 0.4l-1 0.1l3.5 3.3l-1.1-4.7l-0.6 0.9l-0.2-0.4zM1009.2 319.3l0.1 0.4l-0.7-0.1l2.3 2.8l-0.4-3.6l-0.5 0.6l-0.2-0.3zM1009.1 337l0.3 0.4l-1 0.1l3.3 3.1l-1-4.5l-0.6 0.9l-0.2-0.4zM1009.2 354.6l0.2 0.2l-0.8 0.1l2.4 2.4l-0.6-3.4l-0.4 0.6l-0.2-0.3zM1009.5 372.3l0.2 0l-0.3 0.5l2.8-0.4l-2.6-1.2l0.2 0.6l-0.2-0.1zM1009.7 389.7l0.1-0.1l0.2 0.4l0.9-2.2l-1.9 1.4l0.5 0.1l-0.2 0.2zM1009.8 407.6l0.5-0.3l0.2 1.2l3.3-4.5l-5.2 1.9l1 0.6l-0.4 0.3zM1009.9 425.1l0.3-0.4l0.5 0.9l1.6-4.6l-3.9 3l1 0.1l-0.3 0.4zM1010 442.6l0.4-1.3l0.9 0.9l0.1-5.8l-3.2 4.8l1.2-0.2l-0.4 1.2zM1010 460.2l1.2-2.9l0.8 0.9l0.6-5.7l-3.6 4.5l1.2-0.1l-1.2 2.9zM1010 477.7l1.6-5.8l0.9 0.8l-0.1-5.8l-3 4.9l1.2-0.2l-1.6 5.9zM1010 495.3l1.9-6.9l0.9 0.8l-0.1-5.8l-3.1 4.9l1.3-0.2l-1.9 7zM1010.1 512.9l0.8-5.5l1 0.7l-0.7-5.7l-2.5 5.2l1.2-0.4l-0.9 5.5zM1010.1 530.4l0.3-8.1l1.1 0.6l-1.4-5.5l-1.9 5.4l1.1-0.5l-0.3 8.1zM1010 547.8l-5.1-12.5l1.3 0l-3.6-4.4l0.5 5.7l0.8-0.9l5.1 12.5zM1009.6 565.1l-13.2-2.7l0.8-1l-5.7 0.5l5 2.7l-0.3-1.2l13.2 2.7zM1009.3 582.7l-6.8 3.6l0-1.2l-4.1 4l5.6-1.1l-1-0.7l6.8-3.6zM1024.2 151.8l-0.6 2.2l-0.9-0.9l0 5.8l3.1-4.8l-1.2 0.2l0.7-2.1zM1024.3 169.9l2.8 4.1l-1.2 0.1l4.5 3.6l-1.8-5.4l-0.6 1l-2.8-4zM1024.2 187.2l0.2 4.6l-1.2-0.6l1.9 5.5l1.4-5.6l-1 0.6l-0.2-4.5zM1024.2 204.9l0.5 4.3l-1.2-0.5l2.2 5.3l1.1-5.6l-1.1 0.7l-0.4-4.4zM1024.2 222.6l1 3.4l-1.2-0.2l3.1 4.8l0.1-5.7l-0.9 0.8l-1-3.5zM1024.2 240.1l0.8 4.2l-1.2-0.4l2.7 5.1l0.6-5.7l-1 0.8l-0.8-4.2zM1024.3 257.9l0.6 1.1l-1.2 0l4.1 4l-1.3-5.6l-0.6 1l-0.7-1.1zM1024.3 275.3l0.1 0.4l-1-0.3l2.1 4.4l0.6-4.8l-0.8 0.6l-0.1-0.5zM1024.5 292.9l0.1 0.3l-0.7 0l2.2 2.5l-0.5-3.3l-0.4 0.6l-0.1-0.3zM1024.4 310.8l0.4 0.3l-1 0.4l4.6 2.1l-2.7-4.3l-0.2 1.1l-0.4-0.4zM1024.4 328l0 0.4l-0.8-0.3l1.5 3.9l0.8-4.1l-0.7 0.5l0-0.4zM1024.4 345.6l0 0.4l-0.8-0.3l1.5 3.7l0.8-3.9l-0.7 0.4l-0.1-0.3zM1024.5 363.3l0.1 0.3l-0.6 0l2 2l-0.5-2.8l-0.4 0.5l-0.1-0.2zM1024.6 380.9l0.2 0.2l-0.5 0.1l1.9 1l-1-1.8l-0.1 0.4l-0.2-0.1zM1024.8 398.7l0.3-0.1l-0.1 0.6l2.3-1.7l-2.8 0.1l0.4 0.5l-0.2 0zM1025.3 416.2l0.2-0.5l0.7 0.9l0.6-5.5l-3.5 4.3l1.2-0.1l-0.2 0.5zM1025.3 433.7l0.5-3.5l1 0.7l-0.7-5.7l-2.5 5.2l1.2-0.3l-0.6 3.4zM1025.3 451.4l0.2-0.5l0.8 0.9l0.7-5.7l-3.7 4.4l1.2-0.1l-0.2 0.6zM1025.2 469.1l2-3.4l0.7 1l1.2-5.6l-4.1 3.9l1.2 0.1l-1.9 3.4zM1025.3 486.6l1.5-4.7l0.9 0.9l0.1-5.7l-3.3 4.7l1.3-0.2l-1.6 4.6zM1025.3 504l-0.4-6.5l1.1 0.5l-2-5.4l-1.3 5.6l1.1-0.6l0.4 6.4zM1025.3 521.6l0.5-9.1l1.1 0.6l-1.4-5.6l-1.9 5.4l1.1-0.5l-0.5 9.2zM1025.3 539.1l-3.9-19l1.2 0.3l-2.8-5.1l-0.5 5.8l1-0.8l3.9 19zM1025.2 556.5l-11.2-20.8l1.2 0l-4.1-4.1l1.2 5.6l0.7-1l11.3 20.9zM1024.6 573.9l-12.6 5.1l0.1-1.3l-4.5 3.6l5.7-0.5l-0.9-0.8l12.6-5.1zM1024.2 591.9l-1 5.4l-1-0.8l0.6 5.7l2.7-5.1l-1.2 0.4l1-5.4zM1039.5 143.1l-1.2 4.5l-0.9-0.8l0.3 5.7l2.9-4.9l-1.2 0.2l1.1-4.5zM1039.5 161.1l2.1 3.8l-1.2 0l4.1 4l-1.2-5.6l-0.7 1l-2.1-3.8zM1039.5 178.5l0.6 4.1l-1.2-0.4l2.4 5.2l0.9-5.7l-1.1 0.7l-0.6-4.1zM1039.5 196l0.5 6.6l-1.1-0.5l2.1 5.4l1.2-5.6l-1.1 0.6l-0.6-6.5zM1039.5 213.7l0.4 2.9l-1.2-0.4l2.5 5.2l0.8-5.7l-1 0.7l-0.5-2.9zM1039.5 231.4l0.5 1.6l-1.2-0.2l3.2 4.7l-0.1-5.7l-0.9 0.8l-0.5-1.6zM1039.5 248.9l0.3 1.5l-1.2-0.3l2.6 5.1l0.6-5.7l-1 0.7l-0.3-1.5zM1039.5 266.4l0 1.2l-1.1-0.5l1.9 5.5l1.4-5.6l-1.1 0.6l-0.1-1.2zM1039.6 284.2l0.2 0.4l-1-0.1l2.9 3.4l-0.5-4.4l-0.6 0.7l-0.2-0.4zM1039.5 301.7l0.1 0.4l-1-0.3l2 4.3l0.8-4.7l-0.9 0.6l0-0.5zM1039.7 319.2l0 0.3l-0.6-0.2l1.3 2.9l0.5-3.1l-0.6 0.4l0-0.3zM1039.8 336.8l-0.1 0.2l-0.4-0.3l0.4 2.5l1-2.3l-0.5 0.2l0-0.3zM1039.6 354.4l0 0.4l-0.9-0.4l1.3 4.3l1.3-4.3l-0.9 0.4l0-0.4zM1039.7 372l0 0.3l-0.7-0.3l1 3.5l1-3.5l-0.7 0.3l0-0.3zM1039.8 389.4l-0.2 0.2l-0.1-0.6l-1.4 2.2l2.4-1l-0.5-0.2l0.2-0.2zM1040.2 407.4l0.2-0.3l0.3 0.6l0.9-2.9l-2.3 1.9l0.6 0.1l-0.1 0.2zM1040.5 424.9l0.2-0.5l0.9 0.8l-0.3-5.7l-2.9 4.9l1.2-0.3l-0.1 0.6zM1040.5 442.4l0.2-2.4l1.1 0.6l-1.2-5.6l-2.1 5.4l1.1-0.5l-0.1 2.5zM1040.5 460.1l0.7-3.3l1 0.8l-0.5-5.7l-2.7 5l1.2-0.3l-0.7 3.3zM1040.5 477.7l0.5-3.6l1 0.7l-0.9-5.7l-2.3 5.3l1.1-0.4l-0.4 3.5zM1040.5 495.3l0.5-4.3l1.1 0.7l-1.1-5.7l-2.2 5.3l1.1-0.4l-0.4 4.2zM1040.5 512.7l-0.8-7.1l1.1 0.4l-2.3-5.3l-0.9 5.7l1-0.7l0.9 7.2zM1040.5 530.5l1.6-13.7l1 0.7l-1-5.6l-2.3 5.2l1.2-0.4l-1.5 13.6zM1040.5 548.2l7.6-25.5l0.9 0.9l0-5.8l-3.1 4.8l1.2-0.2l-7.6 25.4zM1040.2 566.1l11-4.7l-0.1 1.2l4.4-3.7l-5.7 0.7l1 0.8l-11 4.7zM1039.5 583.4l6.1 14.3l-1.2 0l3.6 4.4l-0.6-5.7l-0.8 0.9l-6.1-14.3zM1054.9 152.4l1.9 1.9l-1.1 0.4l5.1 2.6l-2.9-5l-0.3 1.2l-2-1.9zM1055 170.1l0.5 0.3l-1 0.7l5.6 1.2l-4-4.1l-0.1 1.2l-0.5-0.3zM1054.7 187.1l-0.8 4.4l-1-0.8l0.6 5.8l2.6-5.1l-1.2 0.3l0.9-4.4zM1054.7 204.8l0.2 4.3l-1.1-0.5l1.9 5.4l1.4-5.6l-1.1 0.6l-0.2-4.2zM1054.7 222.4l0 2.5l-1.1-0.5l1.5 5.5l1.8-5.5l-1.1 0.6l0-2.6zM1054.7 240.1l0.2 2.2l-1.1-0.5l2.1 5.4l1.1-5.7l-1 0.7l-0.2-2.3zM1054.7 257.6l0 0.5l-1.1-0.6l1.3 5.4l1.9-5.2l-1.1 0.5l0.1-0.6zM1055 275.2l0 0.2l-0.5-0.2l0.8 2.4l0.7-2.4l-0.5 0.2l0-0.2zM1054.8 292.7l-0.1 0.4l-0.7-0.7l-0.2 4.5l2.7-3.7l-1 0.2l0.2-0.5zM1054.9 310.4l0 0.4l-0.6-0.3l1.2 3.2l0.7-3.4l-0.6 0.4l0-0.3zM1054.8 328l0 0.4l-0.9-0.5l0.8 4.4l1.8-4.2l-0.9 0.4l0.1-0.5zM1054.9 345.6l0 0.3l-0.6-0.2l1.2 3.1l0.7-3.3l-0.6 0.4l0-0.3zM1055 363.2l0 0.3l-0.5-0.2l1 2.5l0.5-2.7l-0.5 0.3l0-0.2zM1055.1 380.8l0 0.1l-0.3-0.2l0.1 1.5l0.8-1.3l-0.3 0.1l0-0.2zM1055.8 398.4l-0.3 0.5l-0.5 0l-0.3-0.5l0.3-0.5l0.5 0zM1055.6 416l0-0.4l0.7 0.3l-1.4-3.5l-0.7 3.7l0.6-0.4l0.1 0.3zM1055.8 433.6l0.1-2l1.1 0.6l-1.5-5.6l-1.8 5.4l1.1-0.5l-0.1 2.1zM1055.8 451.2l0-0.6l1.1 0.6l-1.6-5.5l-1.7 5.5l1.1-0.6l0 0.6zM1055.8 468.7l-0.5-5l1.2 0.5l-2.2-5.3l-1.1 5.6l1-0.7l0.5 5.1zM1055.8 486.3l-0.5-4.7l1.2 0.4l-2.2-5.3l-1.1 5.7l1-0.7l0.5 4.8zM1055.8 504.1l0.5-4.4l1.1 0.7l-1-5.7l-2.3 5.3l1.1-0.4l-0.5 4.3zM1055.8 521.6l0.1-6.1l1.1 0.5l-1.5-5.5l-1.8 5.5l1.1-0.6l-0.1 6.2zM1055.7 539.4l5.3-12.3l0.8 1l0.6-5.7l-3.7 4.4l1.3-0.1l-5.3 12.3zM1055.6 557.2l15.5-11.5l0.2 1.2l3.5-4.6l-5.4 1.9l1.1 0.6l-15.6 11.6zM1055.2 574.9l18.1 0l-0.5 1.1l5.4-1.7l-5.5-1.6l0.6 1.1l-18.1 0.1zM1054.7 592.2l1.8 5.3l-1.2-0.2l3.2 4.7l-0.1-5.8l-0.9 0.9l-1.7-5.3zM1070 143l-0.4 1.1l-0.9-0.8l-0.1 5.7l3.3-4.7l-1.2 0.2l0.3-1.1zM1070 160.6l-0.2 0.5l-0.9-0.9l-0.5 5.7l3.6-4.4l-1.2 0.1l0.2-0.6zM1070.1 178.6l0.2 0.4l-1.1 0.1l3.5 3.4l-1-4.8l-0.6 0.9l-0.2-0.4zM1069.9 195.9l-0.8 3.7l-1-0.7l0.4 5.7l2.9-5l-1.2 0.3l0.8-3.8zM1069.9 213.5l-0.6 3.2l-1-0.8l0.6 5.7l2.7-5l-1.2 0.3l0.6-3.2zM1069.9 231.1l-0.4 2.9l-1-0.8l0.7 5.7l2.5-5.1l-1.1 0.3l0.4-2.8zM1069.9 248.8l0.1 2.5l-1.1-0.5l1.9 5.5l1.4-5.6l-1.1 0.6l-0.1-2.5zM1070.1 266.1l-0.4 0.4l-0.5-1l-1.8 5.2l4.4-3.4l-1.2-0.2l0.3-0.4zM1070.1 284l0 0.3l-0.6-0.4l0.5 3.5l1.5-3.3l-0.7 0.3l0-0.4zM1070.1 301.5l-0.2 0.4l-0.7-0.7l0.1 4.7l2.5-3.9l-1 0.1l0.1-0.4zM1070.1 319.2l0 0.4l-0.8-0.5l0.9 4.1l1.5-3.9l-0.8 0.3l0-0.4zM1070 336.7l-0.1 0.5l-1-0.7l0.5 5.5l2.6-4.9l-1.1 0.3l0.1-0.5zM1070.1 354.4l-0.1 0.3l-0.7-0.4l0.7 4l1.7-3.8l-0.9 0.3l0.1-0.4zM1070.3 372l0 0.3l-0.5-0.2l1.1 2l0.2-2.2l-0.4 0.3l0-0.2zM1071 389.6l-0.2 0.5l-0.6 0l-0.3-0.5l0.3-0.5l0.6 0zM1070.7 407.1l-0.1-0.2l0.5 0l-1.6-1.6l0.4 2.2l0.3-0.4l0.1 0.2zM1070.9 424.7l-0.1-0.5l1 0.2l-2.5-4.1l-0.2 4.9l0.8-0.7l0.1 0.4zM1071 442.2l-0.9-2.8l1.3 0.2l-3.2-4.8l0 5.7l0.9-0.8l0.9 2.9zM1071 459.9l-0.4-3l1.2 0.4l-2.5-5.2l-0.8 5.7l1-0.8l0.4 3.1zM1071 477.5l-0.8-4.3l1.1 0.3l-2.7-5.1l-0.5 5.8l1-0.8l0.8 4.3zM1071 495.1l-1.2-5.1l1.2 0.3l-2.9-4.9l-0.3 5.7l0.9-0.8l1.2 5zM1071 512.7l-1.1-5.8l1.2 0.3l-2.7-5l-0.6 5.7l1-0.8l1.1 5.8zM1071 530.2l-1.7-5l1.2 0.2l-3.3-4.7l0.2 5.7l0.9-0.9l1.7 5.1zM1071 548l0.2-4.6l1.1 0.6l-1.5-5.5l-1.8 5.4l1.1-0.5l-0.2 4.6zM1070.8 566l2.9-2.5l0.3 1.2l3.1-4.8l-5.2 2.3l1.1 0.5l-2.9 2.5zM1070.8 583.7l0.4-0.3l0.1 1.2l3.8-4.2l-5.5 1.4l1.1 0.7l-0.5 0.2zM1085.3 152.2l0.3 0.5l-1.1 0l3.7 3.5l-1.2-4.9l-0.6 0.9l-0.3-0.4zM1085.2 169.8l0.6 2l-1.2-0.2l3.1 4.8l0-5.8l-0.8 0.9l-0.6-2.1zM1085.2 187.2l-0.1 3.6l-1.1-0.6l1.5 5.6l1.8-5.5l-1.1 0.6l0.1-3.7zM1085.2 204.7l-0.6 3.4l-1-0.8l0.8 5.7l2.5-5.1l-1.2 0.3l0.6-3.3zM1085.2 222.2l-0.9 3.1l-0.9-0.8l0.1 5.7l3.1-4.8l-1.2 0.2l0.9-3zM1085.2 239.8l-1 3.1l-0.9-0.9l-0.1 5.8l3.3-4.8l-1.2 0.2l0.9-3zM1085.2 257.4l-0.5 1.3l-0.8-0.9l-0.4 5.7l3.5-4.5l-1.2 0.1l0.4-1.3zM1085.4 275.1l-0.1 0.4l-0.7-0.6l0.2 4l2-3.4l-0.8 0.2l0.1-0.4zM1085.4 292.7l-0.2 0.3l-0.5-0.6l-0.4 3.9l2.5-3.1l-0.9 0.1l0.2-0.4zM1085.4 310.1l-0.2 0.3l-0.4-0.8l-1.8 3.8l3.6-2.2l-0.8-0.2l0.2-0.3zM1085.4 327.9l-0.2 0.3l-0.6-0.6l-0.3 4l2.5-3.2l-0.9 0.1l0.2-0.4zM1085.5 345.3l-0.3 0.2l-0.1-0.7l-2.2 2.9l3.5-1.3l-0.7-0.3l0.2-0.2zM1085.5 363l-0.2 0.3l-0.2-0.6l-1 2.7l2.3-1.7l-0.6-0.1l0.1-0.2zM1085.6 380.5l-0.3 0.1l0-0.8l-2.8 2.5l3.7-0.5l-0.6-0.5l0.3-0.2zM1085.8 398l-0.3-0.1l0.6-0.6l-3.9 0l3.2 2.2l-0.1-0.9l0.3 0.2zM1086.1 415.7l-0.2-0.4l1.1-0.1l-3.8-3.4l1.3 5l0.5-1l0.3 0.5zM1086.2 433.4l-0.7-1.6l1.2 0l-3.9-4.3l0.9 5.7l0.8-1l0.7 1.6zM1086.2 450.9l-1.8-2.9l1.2-0.1l-4.3-3.8l1.5 5.5l0.7-1l1.8 2.9zM1086.3 468.7l-0.9-3.3l1.2 0.2l-3.1-4.9l-0.1 5.8l0.9-0.9l0.9 3.3zM1086.3 486.3l-0.4-3.6l1.2 0.4l-2.2-5.3l-1.1 5.6l1-0.6l0.4 3.7zM1086.2 503.8l-2.7-6.3l1.3 0.1l-3.7-4.5l0.6 5.8l0.8-1l2.7 6.3zM1086.2 521.4l-4.2-11l1.2 0.1l-3.5-4.6l0.4 5.8l0.9-0.9l4.2 11zM1086 538.7l-12.3-8.6l1-0.6l-5.4-1.8l3.6 4.5l0.1-1.2l12.4 8.7zM1085.8 556.3l-9.6-1l0.7-1l-5.7 1l5.3 2.2l-0.4-1.1l9.6 0.9zM1085.8 574.1l-0.2-0.1l0.5-0.4l-3.1-0.3l2.4 1.9l-0.1-0.6l0.3 0.1zM1086.1 592.3l0.3-0.3l0.3 0.9l2.2-4.2l-4.2 2.4l1 0.2l-0.3 0.4zM1100.5 160.8l0 0.5l-1-0.4l1.9 4.7l1-4.9l-0.9 0.5l-0.1-0.4zM1100.4 178.4l-0.2 2.8l-1-0.6l1.3 5.6l2-5.4l-1.2 0.5l0.2-2.9zM1100.5 195.8l-1.4 3.7l-0.8-0.9l-0.4 5.7l3.5-4.6l-1.3 0.1l1.4-3.6zM1100.4 213.4l-1.5 4.4l-0.8-0.9l-0.3 5.7l3.4-4.6l-1.2 0.1l1.5-4.3zM1100.5 230.9l-1.9 3.3l-0.7-1.1l-1.4 5.6l4.2-3.9l-1.2-0.1l1.9-3.2zM1100.6 248.5l-0.3 0.3l-0.4-1l-2.3 4.6l4.4-2.6l-1-0.3l0.3-0.4zM1100.5 266.2l-0.2 0.5l-0.9-0.9l-0.5 5.7l3.6-4.5l-1.2 0.1l0.2-0.5zM1100.6 283.6l-0.9 1l-0.5-1.1l-2.4 5.2l4.9-3l-1.2-0.3l0.9-1zM1100.5 301.3l-0.4 0.7l-0.7-1l-1.2 5.6l4.1-4l-1.2 0l0.3-0.7zM1100.6 319l-0.3 0.4l-0.6-0.9l-0.9 4.9l3.4-3.5l-1-0.1l0.2-0.4zM1100.4 336.7l-0.1 0.6l-1-0.8l0.2 5.7l3-4.8l-1.2 0.2l0.2-0.7zM1100.6 354.3l-0.2 0.3l-0.6-0.6l-0.3 4.2l2.6-3.4l-0.9 0.1l0.2-0.4zM1100.7 371.7l-0.3 0.2l-0.2-0.9l-2.7 3.6l4.2-1.6l-0.8-0.4l0.3-0.3zM1100.9 389.2l-0.4 0l0.3-0.8l-4 1.7l4.3 0.7l-0.5-0.7l0.4-0.1zM1101.3 406.9l-0.3-0.4l1.1-0.3l-4.5-2.7l2.2 4.7l0.5-1l0.3 0.3zM1101.3 424.4l-0.6-0.6l1.1-0.5l-5.2-2.4l3 4.9l0.3-1.2l0.7 0.6zM1101.4 442.1l-1.5-2l1.3-0.2l-4.7-3.5l2 5.4l0.6-1.1l1.4 2zM1101.5 459.8l-1.4-3.7l1.2 0.1l-3.5-4.6l0.4 5.7l0.8-0.9l1.5 3.8zM1101.5 477.4l-1.1-3.5l1.2 0.2l-3.1-4.8l0 5.7l0.9-0.8l1 3.6zM1101.5 495l-2-5.1l1.3 0.1l-3.5-4.6l0.4 5.7l0.8-0.9l2 5.2zM1101.5 512.6l-4.3-12.4l1.2 0.2l-3.3-4.7l0.2 5.8l0.9-0.9l4.2 12.4zM1101.5 530.1l-10.5-20.2l1.2 0l-4-4.1l1.1 5.6l0.7-1l10.5 20.3zM1101.1 547.5l-15.8-4.8l0.8-0.9l-5.7 0l4.8 3.2l-0.2-1.2l15.8 4.7zM1100.7 565.1l-12.6 8.2l-0.1-1.3l-3.7 4.4l5.5-1.6l-1.1-0.6l12.6-8.1zM1100.6 582.8l-4.4 4.6l-0.4-1.2l-2.6 5.1l5-2.8l-1.2-0.4l4.4-4.5zM1115.7 152l0 0.5l-1-0.6l1.2 5.3l1.9-5.1l-1.1 0.4l0-0.5zM1115.8 169.2l-0.9 0.9l-0.4-1.2l-2.8 5l5.1-2.6l-1.1-0.4l0.9-0.9zM1115.7 187l-0.1 0.5l-0.8-0.9l-0.4 5.2l3.2-4l-1.1 0l0.2-0.4zM1115.7 204.5l-1 1.9l-0.7-1l-1.3 5.6l4.1-4l-1.2-0.1l1.1-1.8zM1115.8 222l-2.9 3.4l-0.5-1.1l-2.3 5.3l4.8-3.2l-1.2-0.3l2.9-3.3zM1115.7 239.8l-1.3 2.9l-0.8-1l-0.8 5.7l3.8-4.3l-1.2 0l1.3-2.9zM1115.7 257.4l-0.6 1.4l-0.8-0.9l-0.7 5.7l3.7-4.4l-1.2 0.1l0.6-1.5zM1115.8 274.8l-1.2 1.3l-0.4-1.1l-2.5 5.1l4.9-2.9l-1.1-0.4l1.1-1.2zM1115.8 292.5l-0.3 0.4l-0.6-1l-1.7 5.2l4.3-3.4l-1.2-0.2l0.3-0.4zM1115.7 310.1l-0.4 0.8l-0.7-1l-1.3 5.6l4.2-4l-1.3 0l0.5-0.8zM1116 327.5l-0.5 0.2l0-1.2l-4.2 3.8l5.6-0.8l-1-0.8l0.5-0.2zM1115.9 345.3l-0.3 0.4l-0.4-1l-1.9 4.4l4-2.6l-1-0.3l0.3-0.3zM1116.2 362.9l-0.3 0l0.2-0.6l-2.9 1.2l3.1 0.6l-0.4-0.6l0.3 0zM1116.2 380.4l-0.4-0.1l0.5-0.8l-4.5 1.1l4.3 1.5l-0.4-0.9l0.5 0zM1116.4 397.9l-0.5-0.2l0.8-0.8l-5.6-0.1l4.6 3.1l-0.2-1.1l0.6 0.1zM1116.6 415.6l-1.1-1.1l1.2-0.3l-5.1-2.7l2.8 5l0.4-1.2l1 1.1zM1116.6 433.2l-3-2.4l1.1-0.5l-5.3-2.2l3.2 4.7l0.3-1.2l3 2.4zM1116.6 450.9l-2.2-2.8l1.2-0.2l-4.7-3.3l2.2 5.4l0.5-1.2l2.2 2.7zM1116.7 468.6l-2.2-4.9l1.2 0l-3.8-4.3l0.8 5.7l0.8-0.9l2.2 4.8zM1116.7 486.1l-3.4-5l1.2-0.2l-4.4-3.6l1.7 5.5l0.6-1.1l3.4 5zM1116.7 503.9l-1.9-8l1.2 0.3l-3-5l-0.2 5.8l0.9-0.8l2 7.9zM1116.8 521.6l-1.2-20.8l1.2 0.5l-2-5.4l-1.3 5.5l1-0.6l1.2 20.8zM1116.8 539.3l1.7-15.5l1 0.6l-1-5.6l-2.3 5.3l1.2-0.5l-1.7 15.5zM1115.8 557.1l5 7.5l-1.2 0.2l4.4 3.6l-1.7-5.5l-0.6 1.1l-5-7.5zM1115.7 574.3l-0.5 4.4l-1-0.6l1.1 5.6l2.2-5.3l-1.2 0.4l0.5-4.3zM1131.7 160.5l-0.4-0.3l0.8-0.4l-4.1-1.3l2.8 3.3l0.1-0.9l0.3 0.2zM1131.2 177.9l-2.4 1.5l-0.1-1.3l-3.9 4.3l5.6-1.4l-1-0.7l2.3-1.4zM1131 195.8l-1.1 2.1l-0.8-1l-1 5.7l4-4.2l-1.2 0l1-2.2zM1131 213.3l-2.6 4.8l-0.7-1l-1.3 5.6l4.2-4.1l-1.3 0l2.6-4.7zM1131 230.9l-1.9 3.3l-0.7-1l-1.4 5.5l4.2-3.9l-1.2 0l1.9-3.3zM1131 248.5l-2.4 3l-0.5-1.2l-2.2 5.4l4.8-3.3l-1.2-0.2l2.4-3.1zM1131 266l-2.1 2.6l-0.5-1.1l-2.3 5.2l4.8-3.1l-1.2-0.3l2.2-2.5zM1131 283.7l-1 1.5l-0.6-1.1l-1.8 5.5l4.5-3.6l-1.2-0.2l1-1.5zM1131 301.2l-1.4 1.6l-0.4-1.1l-2.4 5.2l4.9-3l-1.2-0.3l1.4-1.6zM1131.1 318.8l-1.7 1.6l-0.3-1.2l-2.9 5l5.1-2.6l-1.1-0.4l1.6-1.6zM1131.2 336.3l-1.5 0.6l0.1-1.2l-4.5 3.6l5.7-0.5l-0.9-0.9l1.6-0.6zM1131.4 354l-0.5 0l0.3-0.9l-4.1 2.1l4.6 0.5l-0.6-0.8l0.4-0.1zM1131.6 371.5l-0.5-0.2l0.9-0.9l-5.7-0.2l4.6 3.4l-0.1-1.3l0.5 0.2zM1131.6 389.1l-1.7-0.4l0.7-1l-5.7 0.5l5 2.8l-0.3-1.2l1.7 0.3zM1131.6 406.7l-1.7-0.6l0.9-0.9l-5.7-0.3l4.6 3.4l-0.1-1.2l1.7 0.6zM1131.7 424.3l-3.3-2l1-0.6l-5.6-1.4l3.9 4.2l0.1-1.2l3.4 2zM1131.8 442l-3.8-3.2l1.1-0.5l-5.2-2.2l3.1 4.8l0.3-1.2l3.8 3.1zM1131.9 459.6l-4.1-4.4l1.2-0.4l-5-2.9l2.5 5.2l0.5-1.2l4 4.5zM1131.9 477.3l-3.9-5.3l1.2-0.2l-4.6-3.4l1.9 5.4l0.6-1.1l3.9 5.2zM1131.9 494.9l-3.8-5.1l1.2-0.3l-4.6-3.4l2 5.4l0.5-1.1l3.8 5.1zM1132 512.7l-2-7.2l1.2 0.2l-3.1-4.9l-0.1 5.8l0.9-0.8l2 7.1zM1131.9 530.6l7.2-14.4l0.8 1l0.9-5.7l-3.9 4.2l1.2 0l-7.1 14.5zM1131.6 548.5l13.2-2.9l-0.3 1.1l5-2.8l-5.7-0.4l0.8 1l-13.3 3zM1131.1 566.1l6.6 4.4l-1.1 0.6l5.5 1.8l-3.6-4.5l-0.2 1.2l-6.5-4.5zM1146.8 169.1l-3.7-0.7l0.7-1l-5.7 0.6l5.1 2.6l-0.3-1.1l3.7 0.6zM1146.2 186.9l-4.4 6.4l-0.6-1.1l-1.8 5.5l4.5-3.6l-1.2-0.2l4.4-6.4zM1146.3 204.5l-2.8 3.7l-0.6-1.1l-2 5.4l4.7-3.4l-1.2-0.3l2.7-3.7zM1146.3 222.1l-1.6 2l-0.6-1.1l-2 5.4l4.7-3.4l-1.3-0.2l1.6-2.1zM1146.3 239.6l-2 2l-0.4-1.2l-2.7 5l5-2.6l-1.1-0.4l2-2zM1146.3 257.2l-1.9 2.1l-0.4-1.2l-2.5 5.2l4.9-3l-1.2-0.3l1.9-2zM1146.4 274.7l-2.9 1.7l-0.1-1.2l-3.9 4.2l5.6-1.3l-1-0.7l2.9-1.7zM1146.3 292.5l-2 2.6l-0.5-1.1l-1.9 5.4l4.5-3.4l-1.2-0.3l1.9-2.6zM1146.5 309.9l-2.5 1.2l0-1.3l-4.2 3.9l5.7-0.9l-1-0.7l2.4-1.2zM1146.5 327.5l-1.9 0.7l0.2-1.3l-4.6 3.5l5.7-0.4l-0.9-0.8l1.9-0.7zM1146.6 345.1l-3.1 0.6l0.3-1.2l-5 2.7l5.7 0.5l-0.8-1l3.1-0.6zM1146.7 362.7l-1.6-0.1l0.6-1.1l-5.5 1.7l5.4 1.6l-0.5-1.1l1.6 0zM1146.9 380.3l-1.8-0.8l1-0.8l-5.7-0.7l4.3 3.8l0-1.3l1.8 0.8zM1146.9 397.9l-2.2-0.8l0.9-0.9l-5.7-0.3l4.6 3.4l-0.2-1.2l2.2 0.8zM1146.9 415.5l-2.7-1.4l1-0.8l-5.7-1l4.2 4l0-1.3l2.7 1.5zM1147 433.2l-5.3-4l1.1-0.6l-5.3-2l3.4 4.7l0.2-1.2l5.3 3.9zM1147.1 450.8l-4.9-4.2l1.1-0.4l-5.2-2.4l3.1 4.9l0.3-1.2l4.8 4.1zM1147.1 468.4l-7.1-7.5l1.2-0.4l-5-2.8l2.6 5.1l0.4-1.2l7.1 7.6zM1147 485.9l-11-7l1-0.7l-5.5-1.5l3.8 4.3l0.1-1.2l11 7.1zM1146.9 503.5l-6.9-3l0.9-0.8l-5.7-0.7l4.4 3.7l-0.1-1.2l7 3zM1147.2 521.3l-0.9-1.5l1.2-0.1l-4.1-3.9l1.3 5.6l0.6-1.1l0.9 1.6zM1147.1 539.6l2.1-2.5l0.4 1.2l2.3-5.3l-4.8 3.1l1.2 0.3l-2 2.4zM1146.9 557.3l3-1l-0.2 1.3l4.7-3.3l-5.7 0.1l0.8 0.9l-3 1zM1147.1 574.6l0.2-0.4l0.7 0.9l0.9-5l-3.5 3.6l1.1 0.1l-0.2 0.4zM1161.7 177.9l-3.7 1.6l0.1-1.2l-4.4 3.7l5.7-0.7l-0.9-0.8l3.7-1.6zM1161.4 195.8l-5.8 12.5l-0.7-1l-0.9 5.7l3.9-4.3l-1.3 0l5.8-12.5zM1161.5 213.3l-2.3 4.3l-0.8-1l-1.1 5.6l4.1-4l-1.3-0.1l2.3-4.2zM1161.5 230.8l-1.9 2.1l-0.4-1.1l-2.5 5.2l4.9-3l-1.2-0.3l1.9-2.1zM1161.6 248.4l-2.1 1.5l-0.2-1.2l-3.4 4.7l5.4-2l-1.1-0.6l2.1-1.6zM1161.6 266l-2.5 2.5l-0.4-1.2l-2.8 5l5.1-2.7l-1.2-0.4l2.5-2.4zM1161.7 283.5l-3.8 1.7l0.1-1.3l-4.4 3.8l5.7-0.7l-0.9-0.8l3.8-1.7zM1161.7 301.1l-3.1 1.3l0.1-1.3l-4.5 3.6l5.7-0.5l-0.9-0.8l3.1-1.3zM1161.8 318.7l-2.6 0.7l0.2-1.2l-4.8 3.1l5.7 0.1l-0.8-0.9l2.6-0.8zM1161.8 336.3l-4.4 1.4l0.2-1.2l-4.7 3.3l5.7-0.2l-0.8-0.8l4.3-1.5zM1161.9 353.9l-3.8 0.4l0.4-1.1l-5.2 2.3l5.6 0.9l-0.7-1l3.8-0.5zM1162.1 371.5l-2.9-0.8l0.8-0.9l-5.7 0.1l4.8 3l-0.2-1.2l2.9 0.8zM1162 389.1l-2.9-0.4l0.6-1l-5.6 1l5.2 2.2l-0.4-1.1l3 0.3zM1162 406.7l-3.1-0.6l0.7-1l-5.7 0.8l5.2 2.5l-0.4-1.2l3.1 0.5zM1162.1 424.3l-4.2-1.5l0.9-0.8l-5.7-0.2l4.6 3.3l-0.1-1.2l4.2 1.4zM1162.3 442l-4.9-3.9l1.1-0.5l-5.3-2.1l3.3 4.7l0.2-1.2l4.9 3.8zM1162.4 459.7l-5.8-7.4l1.2-0.3l-4.7-3.3l2.1 5.4l0.5-1.1l5.8 7.3zM1162.3 477.2l-13-12.8l1.2-0.4l-5.1-2.7l2.8 5l0.4-1.1l13 12.8zM1162.1 494.7l-15.4-3.7l0.8-1l-5.7 0.4l5 2.9l-0.3-1.2l15.3 3.6zM1161.7 512.3l-6.7 2.4l0.2-1.2l-4.6 3.4l5.7-0.3l-0.9-0.9l6.7-2.4zM1162.1 530l-0.4-0.2l0.8-0.6l-4.6-0.8l3.4 3.2l0-1l0.4 0.2zM1162.5 548l-0.1-0.6l1.1 0.5l-2-5.1l-1.1 5.3l1-0.6l0 0.5zM1162.3 566l2-2.1l0.4 1.2l2.6-5.2l-5 2.9l1.2 0.4l-2 2zM1176.6 204.7l-1.1 5.4l-1-0.7l0.5 5.7l2.8-5.1l-1.2 0.3l1.1-5.4zM1176.8 222l-1.3 1.4l-0.4-1.1l-2.5 5.2l4.9-3l-1.2-0.3l1.3-1.4zM1176.9 239.5l-3.7 2.1l0-1.2l-4 4.1l5.6-1.3l-1-0.7l3.6-2zM1176.9 257.1l-5.1 2.9l-0.1-1.2l-4 4.1l5.7-1.3l-1.1-0.7l5.1-2.8zM1176.9 274.7l-6 3.5l-0.1-1.2l-3.9 4.1l5.6-1.3l-1-0.7l6-3.4zM1176.9 292.3l-4.4 2.5l-0.1-1.2l-4 4.2l5.6-1.3l-1-0.7l4.4-2.5zM1176.9 309.9l-3.5 1.6l0-1.2l-4.3 3.8l5.7-0.8l-1-0.8l3.6-1.6zM1177.1 327.5l-4.8 1.1l0.3-1.2l-5 2.8l5.7 0.4l-0.7-1l4.7-1.1zM1177.2 345.1l-5.5 0.1l0.6-1.1l-5.5 1.7l5.5 1.6l-0.5-1.1l5.4-0.2zM1177.1 362.7l-5.5 0.4l0.4-1.1l-5.3 2.1l5.6 1.2l-0.6-1.1l5.5-0.5zM1177.2 380.3l-5.5 0l0.5-1.1l-5.5 1.8l5.6 1.5l-0.6-1.1l5.5-0.1zM1177.2 397.9l-5.4-0.5l0.6-1.1l-5.6 1.1l5.3 2.2l-0.4-1.2l5.4 0.5zM1177.4 415.5l-7.2-2.4l0.9-0.9l-5.8-0.2l4.7 3.3l-0.2-1.2l7.2 2.4zM1177.4 433.1l-5.5-2.6l0.9-0.8l-5.7-0.8l4.3 3.8l0-1.2l5.5 2.6zM1177.6 450.8l-3.5-3.5l1.2-0.4l-5.1-2.7l2.7 5.1l0.4-1.2l3.5 3.5zM1177.7 468.6l-5.5-12.6l1.2 0.1l-3.7-4.4l0.7 5.7l0.8-0.9l5.5 12.5zM1177.7 486.2l-3.8-10.7l1.2 0.1l-3.3-4.6l0.2 5.7l0.9-0.8l3.8 10.7zM1176.7 503.7l-2.2 3.3l-0.6-1.1l-1.6 5.5l4.4-3.6l-1.2-0.2l2.1-3.3zM1176.7 521.3l-1.6 2.5l-0.6-1l-1.6 5.5l4.4-3.8l-1.3-0.1l1.6-2.5zM1176.8 539.2l0.1 0.4l-0.8-0.3l1.5 3.4l0.6-3.6l-0.6 0.4l-0.1-0.3zM1177.2 556.6l-0.2 0.1l0.2-0.4l-1.5 0.5l1.5 0.5l-0.2-0.3l0.2 0zM1192.2 213.2l-0.4 0.3l-0.2-1l-2.8 3.8l4.4-1.6l-0.9-0.5l0.4-0.2zM1192.4 230.7l-6.3 0l0.6-1.1l-5.5 1.7l5.5 1.6l-0.6-1.1l6.3-0.1zM1192.4 248.3l-9.7 1l0.5-1.1l-5.3 2.2l5.6 1.1l-0.6-1.1l9.6-1.1zM1192.2 265.9l-9.8 4.4l0.1-1.2l-4.3 3.7l5.7-0.7l-1-0.8l9.7-4.4zM1192.2 283.5l-7.2 3.7l0-1.2l-4.1 4l5.6-1.1l-1-0.7l7.2-3.7zM1192.2 301.1l-3.3 1.6l0-1.2l-4.2 3.9l5.7-1l-1-0.7l3.3-1.6zM1192.3 318.7l-3.6 0.7l0.3-1.2l-5 2.8l5.7 0.5l-0.8-1l3.6-0.8zM1192.4 336.3l-7.5 0.5l0.5-1.1l-5.4 2.1l5.6 1.2l-0.6-1.1l7.5-0.6zM1192.3 353.9l-5.6 0.8l0.4-1.2l-5.2 2.5l5.7 0.8l-0.7-1l5.6-0.9zM1192.4 371.5l-7 0.1l0.6-1.1l-5.5 1.8l5.5 1.5l-0.5-1.1l6.9-0.2zM1192.5 389.1l-6.1-1.4l0.8-0.9l-5.8 0.4l5.1 2.8l-0.3-1.2l6.1 1.3zM1192.6 406.7l-12.3-4.6l0.9-0.9l-5.7-0.3l4.5 3.4l-0.1-1.2l12.3 4.6zM1192.5 424.3l-12.4-2.3l0.8-1l-5.8 0.6l5.2 2.6l-0.4-1.2l12.4 2.3zM1192.5 441.9l-9.2-1.7l0.7-1l-5.7 0.6l5.1 2.6l-0.3-1.2l9.2 1.7zM1192.8 459.6l-4.8-5.8l1.2-0.2l-4.7-3.2l2.2 5.3l0.5-1.2l4.8 5.9zM1193 477.7l2.8-11.7l1 0.8l-0.3-5.8l-2.9 5l1.2-0.3l-2.9 11.8zM1192.6 495.7l7.7-2l-0.3 1.2l4.9-3l-5.7-0.2l0.8 0.9l-7.7 2.1zM1191.9 513l0.9 2.5l-1.2-0.2l3.4 4.7l-0.3-5.8l-0.9 0.9l-0.9-2.5zM1191.9 530.5l0.2 2l-1.1-0.4l2.3 5.2l0.9-5.6l-1 0.6l-0.2-2zM1192 547.8l-0.3 0.4l-0.7-0.9l-0.9 5.4l3.7-4l-1.1 0l0.2-0.5zM1208 221.9l-2-1.3l1.1-0.6l-5.4-1.8l3.5 4.5l0.2-1.2l1.9 1.4zM1207.9 239.5l-2.1-1.3l1-0.6l-5.6-1.4l3.9 4.2l0.1-1.2l2.2 1.3zM1207.4 257.1l-8.6 5.8l-0.1-1.2l-3.7 4.5l5.5-1.8l-1.1-0.6l8.6-5.7zM1207.3 274.8l-8.3 9l-0.4-1.2l-2.5 5.2l4.9-2.9l-1.2-0.4l8.3-8.9zM1207.3 292.4l-3.5 2.6l-0.2-1.2l-3.4 4.6l5.4-2l-1.1-0.5l3.5-2.7zM1207.7 309.9l-5.2-0.5l0.7-1l-5.7 1.2l5.4 2.1l-0.5-1.2l5.2 0.4zM1207.7 327.5l-13.9-1.8l0.7-1l-5.7 0.9l5.3 2.4l-0.4-1.2l13.9 1.7zM1207.6 345.1l-14 1.9l0.4-1.2l-5.2 2.4l5.6 0.9l-0.6-1l13.9-2zM1207.5 362.7l-8 2.9l0.2-1.3l-4.6 3.5l5.7-0.4l-0.9-0.8l8-2.9zM1207.8 380.3l-7-2.1l0.8-0.9l-5.7 0l4.8 3.1l-0.2-1.2l7 2.1zM1208 398l-10-7.8l1.1-0.5l-5.3-2.1l3.3 4.7l0.2-1.2l10 7.7zM1207.8 415.5l-19.4-5.8l0.8-0.9l-5.7 0l4.8 3.2l-0.2-1.2l19.4 5.7zM1207.5 433.1l-16.8 3.6l0.3-1.1l-5 2.7l5.7 0.5l-0.7-1l16.8-3.7zM1207.5 450.7l-4.3 1.3l0.2-1.2l-4.8 3.2l5.8-0.1l-0.9-0.9l4.3-1.3zM1208.2 468.6l-0.4-1.2l1.2 0.1l-3.2-4.7l0 5.7l0.9-0.8l0.4 1.3zM1208.1 486.7l2.8-3.9l0.5 1.1l1.9-5.5l-4.6 3.6l1.3 0.2l-2.8 3.9zM1207.8 504.5l2.2-0.4l-0.4 1.2l5.1-2.6l-5.7-0.6l0.8 1l-2.2 0.4zM1207.4 522.1l1.7 0.9l-1 0.7l5.7 1.1l-4.1-4l-0.1 1.2l-1.7-0.9zM1208.1 539.3l0.1-0.4l0.8 0.7l0-4.9l-2.7 4.1l1.1-0.2l-0.2 0.5zM1223.4 231.3l1.2-8l1.1 0.7l-0.9-5.7l-2.4 5.2l1.2-0.4l-1.2 8zM1223.1 248.8l0-0.2l0.4 0.1l-0.8-1.7l-0.3 1.9l0.3-0.3l0 0.2zM1222.4 266.5l1.2 5.3l-1.2-0.3l2.8 5l0.4-5.7l-1 0.7l-1.2-5.2zM1222.4 283.8l-2.6 5.8l-0.8-1l-0.7 5.7l3.7-4.3l-1.2 0l2.6-5.8zM1222.9 301.1l-2.4-0.1l0.6-1.1l-5.5 1.6l5.4 1.7l-0.5-1.1l2.4 0zM1223.2 318.7l-12.6-8.5l1.1-0.6l-5.5-1.7l3.7 4.5l0.1-1.2l12.6 8.5zM1223 336.3l-21.1-2.9l0.7-1l-5.7 0.9l5.2 2.4l-0.3-1.2l21 2.8zM1222.7 353.9l-18.4 8.7l0.1-1.2l-4.3 3.8l5.7-0.8l-1-0.8l18.3-8.7zM1222.6 371.5l-6.1 4.3l-0.2-1.3l-3.6 4.5l5.4-1.7l-1-0.6l6.1-4.2zM1223.3 389.2l-6-5.5l1.1-0.5l-5.1-2.5l2.9 5l0.3-1.2l6 5.5zM1223.4 406.9l-7.8-13.3l1.2-0.1l-4.2-3.9l1.4 5.6l0.7-1l7.7 13.3zM1222.8 424.3l-6.1 1.1l0.3-1.2l-5.1 2.7l5.7 0.6l-0.7-1l6.1-1.2zM1222.4 442.2l-4.5 9.3l-0.8-0.9l-0.9 5.6l3.9-4.2l-1.2 0l4.5-9.4zM1222.6 459.5l-1.4 0.8l0-1.2l-4 4.1l5.6-1.2l-1-0.7l1.4-0.8zM1223 478.1l1.2-0.1l-0.4 1.2l5.3-2.2l-5.7-1.1l0.7 1l-1.3 0.2zM1223.4 495.4l0.6-1.2l0.7 1l0.8-5.7l-3.8 4.3l1.3 0l-0.6 1.2zM1223 513.2l0.4-0.1l-0.1 0.8l3.3-2.3l-4.1 0.1l0.7 0.6l-0.4 0.1zM1238.4 240.5l3.8-2.2l0.1 1.2l4-4.1l-5.6 1.3l1 0.7l-3.8 2.1zM1238.1 258.1l6.3 0.8l-0.6 1l5.6-1l-5.3-2.3l0.5 1.2l-6.4-0.7zM1237.6 275.1l-0.4 3l-1-0.7l1 5.7l2.3-5.3l-1.2 0.5l0.4-3zM1237.8 292.3l-2 1.4l-0.1-1.2l-3.6 4.5l5.5-1.8l-1.1-0.6l2-1.3zM1238.7 310.2l-2.6-6.2l1.2 0.1l-3.6-4.5l0.5 5.7l0.9-0.9l2.5 6.2zM1238.7 327.8l-4.3-13l1.2 0.2l-3.3-4.7l0.1 5.7l0.9-0.8l4.3 13zM1237.8 345.2l-3.5 3.6l-0.4-1.2l-2.6 5.1l5-2.8l-1.2-0.4l3.4-3.5zM1237.6 363l-4.6 13.4l-0.8-0.8l-0.2 5.7l3.3-4.7l-1.2 0.2l4.6-13.4zM1237.9 380.3l-0.4 0.2l0-1.1l-4.1 3.5l5.4-0.7l-0.9-0.7l0.5-0.2zM1238.7 398.5l1.5-7.7l1 0.7l-0.6-5.7l-2.7 5.1l1.2-0.3l-1.5 7.7zM1238.5 416.4l5.7-6l0.4 1.1l2.6-5.1l-5 2.9l1.2 0.3l-5.7 6zM1237.7 434l5.5 5.7l-1.2 0.4l4.9 2.9l-2.5-5.2l-0.4 1.2l-5.5-5.8zM1237.6 451.3l2.4 11.9l-1.2-0.3l2.7 5.1l0.5-5.7l-1 0.7l-2.3-11.9zM1238.6 468.7l-0.2-0.4l1 0.1l-2.6-3.6l0.1 4.4l0.7-0.7l0.1 0.4zM1238.4 486l-0.4-0.3l0.9-0.6l-4.9-1.1l3.4 3.7l0.1-1.1l0.4 0.2zM1238.3 503.8l-0.3-0.1l0.5-0.4l-2.6-0.4l1.9 1.8l0-0.6l0.2 0.1zM1253.6 266.5l0.1-0.2l0.3 0.3l0.2-2.3l-1.5 1.9l0.6-0.1l-0.1 0.2zM1253.2 284l0.1 0.2l-0.4-0.1l0.9 1.6l0.1-1.8l-0.3 0.2l0-0.1zM1253.8 301.3l-1.7-2.5l1.2-0.2l-4.5-3.5l1.8 5.5l0.6-1.1l1.7 2.4zM1253.9 319.3l1.3-7.7l1 0.7l-0.7-5.7l-2.6 5.2l1.2-0.4l-1.3 7.7zM1253.5 337.3l9.1-1.7l-0.4 1.2l5.1-2.6l-5.7-0.6l0.8 1l-9.1 1.7zM1252.9 354.7l5.1 9.2l-1.2 0.1l4.1 4l-1.2-5.6l-0.7 1l-5.1-9.3zM1252.9 371.8l-0.9 3.1l-0.9-0.8l0 5.7l3.2-4.8l-1.3 0.2l0.9-3zM1253.5 389.5l0-0.1l0.3 0l-0.9-1.2l0.1 1.6l0.2-0.3l0 0.2zM1253.9 407.2l0.1-6l1.1 0.6l-1.6-5.5l-1.7 5.5l1.1-0.6l-0.1 6zM1253.4 425.3l0.6 0l-0.5 1.1l5.5-1.8l-5.6-1.5l0.6 1.1l-0.6 0.1zM1253.2 442.7l0.3 0.2l-0.7 0.5l3.9 1.1l-2.7-3.1l-0.1 0.9l-0.3-0.2zM1253.6 459.5l-0.5-0.2l0.9-0.8l-5.7-0.5l4.5 3.5l-0.1-1.2l0.5 0.2zM1253.2 477.7l0.1 0.2l-0.5-0.1l1.2 1.7l-0.1-2.1l-0.3 0.3l0-0.2zM1268.4 275.1l-0.1 0.2l-0.4-0.4l-0.2 2.7l1.6-2.1l-0.5 0l0.1-0.2zM1268.8 292.6l-0.2-0.2l0.6-0.3l-2.8-1.2l1.7 2.6l0.1-0.7l0.2 0.2zM1268.6 310.1l-0.4 0l0.2-0.7l-3.1 1.7l3.5 0.3l-0.4-0.6l0.3-0.1zM1269.1 328.3l2.8-3.9l0.6 1.1l1.8-5.4l-4.5 3.5l1.2 0.2l-2.8 3.9zM1268.5 346.1l5.1 1l-0.8 1l5.7-0.7l-5.1-2.6l0.4 1.2l-5.1-0.9zM1268.4 363.7l0.5 0.2l-0.9 0.7l5.3 0.8l-4-3.6l0 1.2l-0.4-0.3zM1269 380.4l-0.4-0.3l1.1-0.5l-5.1-2.2l3 4.6l0.3-1.1l0.4 0.3zM1269.2 398.4l-0.3 0.5l-0.5 0l-0.3-0.5l0.3-0.5l0.5 0zM1268.9 416.2l0.2-0.3l0.4 0.6l0.9-3.5l-2.7 2.5l0.8 0l-0.2 0.3zM1268.3 433.7l0.1 0.4l-0.9-0.1l2.4 3.4l-0.1-4.2l-0.7 0.7l-0.1-0.4zM1269.1 451.5l0.5-0.7l0.5 1.1l2.1-5.3l-4.7 3.3l1.2 0.3l-0.5 0.7zM1268.9 468.6l-0.2-0.2l0.7-0.1l-2.5-2.2l0.9 3.2l0.4-0.6l0.2 0.3zM1284.4 319.2l-0.3 0.5l-0.5 0l-0.3-0.5l0.3-0.5l0.5 0zM1283.6 337l0.2 0.3l-0.9 0.2l3.2 2.4l-1.3-3.8l-0.4 0.8l-0.2-0.3zM1284.1 354.3l0-0.2l0.6 0.1l-1.4-2.5l-0.2 2.9l0.4-0.4l0.1 0.3zM1283.5 371.6l-0.8 0.9l-0.4-1.2l-2.4 5.2l4.9-3l-1.2-0.3l0.7-0.8zM1284.4 389.6l-0.1-1.4l1.1 0.4l-2.1-5.3l-1.1 5.6l1-0.6l0.1 1.3zM1283.9 407.3l0.2-0.1l0 0.3l0.9-1l-1.3 0.4l0.2 0.1l-0.1 0.1zM1284.4 424.8l-0.3 0.5l-0.5 0l-0.3-0.5l0.3-0.5l0.5 0zM1283.8 442.2l-0.2 0.1l0-0.4l-1.5 1.3l2-0.3l-0.3-0.3l0.1 0zM1299.5 363.2l0-0.3l0.7 0.4l-0.8-3.8l-1.4 3.6l0.8-0.3l-0.1 0.4zM1299.6 380.6l-0.8-2.6l1.2 0.2l-3.2-4.8l0.1 5.8l0.9-0.9l0.8 2.7zM1299.7 398.4l-0.1-0.6l1.2 0.5l-2-5.4l-1.3 5.6l1-0.6l0.1 0.5zM1298.8 415.5l-2.9 1.8l-0.1-1.2l-3.8 4.3l5.5-1.5l-1-0.6l2.9-1.8z"/></g><rect x="786.5" y="104.5" width="499.0999999999999" height="498.0" fill="none" stroke="#000" stroke-width="1"/><text x="786.5" y="622.8" font-size="13.4" text-anchor="middle">0</text><text x="776.6" y="607.5" font-size="13.4" text-anchor="end">0</text><text x="884.1" y="622.8" font-size="13.4" text-anchor="middle">200</text><text x="776.6" y="510" font-size="13.4" text-anchor="end">200</text><text x="981.7" y="622.8" font-size="13.4" text-anchor="middle">400</text><text x="776.6" y="412.5" font-size="13.4" text-anchor="end">400</text><text x="1079.3" y="622.8" font-size="13.4" text-anchor="middle">600</text><text x="776.6" y="315" font-size="13.4" text-anchor="end">600</text><text x="1176.9" y="622.8" font-size="13.4" text-anchor="middle">800</text><text x="776.6" y="217.5" font-size="13.4" text-anchor="end">800</text><text x="1274.5" y="622.8" font-size="13.4" text-anchor="middle">1000</text><text x="776.6" y="120" font-size="13.4" text-anchor="end">1000</text><path d="M786.5 602.5v4.5M786.5 602.5h-4.5M884.1 602.5v4.5M786.5 505h-4.5M981.7 602.5v4.5M786.5 407.5h-4.5M1079.3 602.5v4.5M786.5 310h-4.5M1176.9 602.5v4.5M786.5 212.5h-4.5M1274.5 602.5v4.5M786.5 115h-4.5" stroke="#000" stroke-width="1" fill="none"/></svg><div class="combo" style="left:13px;top:646px;width:272px">ITMY<b></b></div><div class="gbox"></div><div class="radio on" style="left:302.5px"></div><div class="lbl2" style="left:322.5px;top:661px">Wavefront + Quiver</div><div class="radio" style="left:822.5px"></div><div class="lbl2" style="left:843px;top:661px">Original + modified image</div><div class="pane"></div><div class="tab sel" style="left:291px;width:46px">Still</div><div class="tab" style="left:336.5px;width:75px">Playback</div><div class="tab" style="left:411px;width:47px">Live</div><div class="lbl2" style="left:302px;top:741px">Reference:</div><div class="inp" style="left:670px;top:736px;width:300px">1443890244</div><div class="btn" style="left:976px;top:736px;width:361px;height:25px">Get reference time from CDS</div><div class="lbl2" style="left:302px;top:772px">Show:</div><div class="inp" style="left:670px;top:767px;width:300px">1443890444</div><div class="btn" style="left:976px;top:767px;width:361px;height:25px">Now</div><div class="btn" style="left:976px;top:798px;width:361px;height:25px">Plot</div><div class="btn" style="left:976px;top:829px;width:361px;height:25px">Save wavefront data</div><div class="lbl2" style="left:302px;top:865px">ndscope:</div><div class="inp r" style="left:670px;top:860px;width:300px">_SPHERICAL_POWER . H1:PSL-POWER_SCALE_OFFSET</div><div class="btn" style="left:976px;top:860px;width:361px;height:25px">Open ndscope</div><div class="status">x=152.82, y=17.18</div><div class="grip"></div></div></div><div class="win act" id="wx"><div class="tbar"><div class="wicon"><i></i></div><div class="ttl">HWS_live.py</div><svg class="wb" width="90" height="16" viewBox="1268 7 90 16" fill="none" stroke="#1e282c" stroke-width="2.1">
<path d="M1273.4 18.4l4-4 4 4"/><path d="M1295.9 19h9.2"/><rect x="1320" y="12" width="6.9" height="7.1"/><path d="M1342.6 11.8l7.6 7.6M1350.2 11.8l-7.6 7.6"/></svg></div><div class="body">
<svg class="tb" width="300" height="34" viewBox="0 42 300 34">
 <g fill="#000">
  <path d="M22.6 61.6L33 52.8l3.9 3.3V52.8h3.3v6.1l3.2 2.7-1.1 1.3L33 55.1 23.7 62.9z"/>
  <path d="M25.8 62.6L33 56.5l7.2 6.1V69h-5.2v-5.2h-4.1V69h-5.1z"/>
 </g>
 <g fill="none" stroke="#666" stroke-width="3.9" stroke-linecap="round" stroke-linejoin="round">
  <path d="M66.3 52.2L59.2 59.7l7.1 7.5M60 59.7H73.8"/>
  <path d="M98.5 52.2l7.1 7.5-7.1 7.5M104.8 59.7H91"/>
 </g>
 <path d="M119.5 50v19M258.5 50v19" stroke="#dcdcdc" stroke-width="1"/>
 <g fill="#000">
  <path d="M139 47.9l4 4.6h-2.5v5.7h5.7v-2.5l4.6 4-4.6 4v-2.5h-5.7v5.7h2.5l-4 4.6-4-4.6h2.5v-5.7h-5.7v2.5l-4.6-4 4.6-4v2.5h5.7v-5.7h-2.5z"/>
 </g>
 <circle cx="170.3" cy="57.8" r="7.3" fill="none" stroke="#000" stroke-width="3"/>
 <path d="M175.6 63.1l5.4 5.4" stroke="#000" stroke-width="3.2" stroke-linecap="round"/>
 <g stroke="#000" stroke-width="1.3" stroke-linecap="round"><path d="M195.6 53.9h18.8M195.6 60.4h18.8M195.6 66.9h18.8"/></g>
 <g fill="#000"><rect x="198.8" y="51.6" width="4.4" height="4.6" rx="0.8"/><rect x="206.8" y="58.1" width="4.4" height="4.6" rx="0.8"/><rect x="200.3" y="64.6" width="4.4" height="4.6" rx="0.8"/></g>
 <path d="M226.4 49.8V68.4H249.9" fill="none" stroke="#000" stroke-width="1.3"/>
 <path d="M229.6 64.6l6-6.2 3 3 7.4-7.4" fill="none" stroke="#000" stroke-width="2.6"/>
 <path d="M242.6 51.3h6.6v6.6z" fill="#000"/>
 <path d="M268.9 50.6h13.6l4.4 4.4v13H268.9z" fill="none" stroke="#000" stroke-width="1.7" stroke-linejoin="round"/>
 <path d="M271.7 50.6h9.2v7h-9.2z M276.4 52h3.3v4.1h-3.3z" fill="#000" fill-rule="evenodd"/>
 <path d="M272.6 62.2h11.2v5.8h-11.2z" fill="none" stroke="#000" stroke-width="1.5"/>
</svg><div class="coords">x=323. y=331.<br>[-8.49]</div><div class="lbl" style="left:578px">Contour spacing [nm]:</div><div class="inp" style="left:710px;top:47px;width:50px">1</div><div class="lbl" style="left:765.5px">Auto wavefront limits:</div><div class="chk"><svg width="12" height="12" viewBox="0 0 12 12"><path d="M2.4 6.2l2.5 3 4.4-7" fill="none" stroke="#1a1a1a" stroke-width="1.7"/></svg></div><div class="lbl" style="left:916px">min [nm]</div><div class="inp" style="left:974px;top:47px;width:50px">-200</div><div class="lbl" style="left:1030px">max [nm]</div><div class="inp" style="left:1090px;top:47px;width:50px">0</div><div class="lbl" style="left:1146px">map</div><div class="combo" style="left:1178px;top:47px;width:73px">viridis<b></b></div><div class="btn popt" style="left:1257px;top:47px;width:82px;height:24px">Plot options<b></b></div><svg class="fig" width="1336" height="534" viewBox="13 85 1336 534" font-family="'DejaVu Sans','Liberation Sans',sans-serif" fill="#000"><g shape-rendering="crispEdges"><path fill="#440154" d="M326 183h12v6h-12zM320 189h18v6h-18zM320 195h18v6h-18zM320 201h18v6h-18z"/><path fill="#46075a" d="M320 183h6v6h-6zM314 189h6v6h-6zM338 189h6v6h-6zM314 195h6v6h-6zM338 195h6v6h-6z"/><path fill="#470e61" d="M320 177h18v6h-18zM314 183h6v6h-6zM338 183h6v6h-6zM314 201h6v6h-6zM338 201h6v6h-6zM320 207h18v6h-18z"/><path fill="#481467" d="M338 177h6v6h-6zM344 189h6v6h-6zM308 195h6v6h-6zM344 195h6v6h-6zM338 207h6v6h-6z"/><path fill="#481b6d" d="M320 171h18v6h-18zM314 177h6v6h-6zM344 183h6v6h-6zM308 189h6v6h-6zM308 201h6v6h-6zM344 201h6v6h-6zM314 207h6v6h-6z"/><path fill="#482173" d="M338 171h6v6h-6zM344 177h6v6h-6zM308 183h6v6h-6zM350 183h6v6h-6zM350 189h6v6h-6zM380 189h12v6h-12zM350 195h6v6h-6zM350 201h6v6h-6zM308 207h6v6h-6zM344 207h6v6h-6zM320 213h24v6h-24z"/><path fill="#482677" d="M320 165h24v6h-24zM314 171h6v6h-6zM344 171h6v6h-6zM308 177h6v6h-6zM350 177h6v6h-6zM356 183h6v6h-6zM368 183h36v6h-36zM302 189h6v6h-6zM356 189h24v6h-24zM392 189h12v6h-12zM302 195h6v6h-6zM356 195h42v6h-42zM302 201h6v6h-6zM356 201h6v6h-6zM374 201h12v6h-12zM350 207h6v6h-6zM314 213h6v6h-6z"/><path fill="#472d7b" d="M332 159h6v6h-6zM314 165h6v6h-6zM344 165h6v6h-6zM308 171h6v6h-6zM350 171h6v6h-6zM356 177h42v6h-42zM302 183h6v6h-6zM362 183h6v6h-6zM404 183h6v6h-6zM404 189h6v6h-6zM398 195h6v6h-6zM362 201h12v6h-12zM386 201h12v6h-12zM302 207h6v6h-6zM356 207h30v6h-30zM308 213h6v6h-6zM344 213h6v6h-6zM320 219h24v6h-24z"/><path fill="#46337f" d="M320 159h12v6h-12zM338 159h12v6h-12zM350 165h6v6h-6zM356 171h30v6h-30zM302 177h6v6h-6zM398 177h12v6h-12zM296 189h6v6h-6zM296 195h6v6h-6zM404 195h6v6h-6zM296 201h6v6h-6zM398 201h6v6h-6zM296 207h6v6h-6zM386 207h12v6h-12zM302 213h6v6h-6zM350 213h36v6h-36zM314 219h6v6h-6zM344 219h6v6h-6zM320 249h12v6h-12zM320 255h6v6h-6zM248 489h6v6h-6zM248 495h6v6h-6zM248 501h6v6h-6z"/><path fill="#453882" d="M326 153h18v6h-18zM314 159h6v6h-6zM350 159h6v6h-6zM308 165h6v6h-6zM356 165h24v6h-24zM302 171h6v6h-6zM386 171h18v6h-18zM296 183h6v6h-6zM410 183h6v6h-6zM410 189h6v6h-6zM290 195h6v6h-6zM290 201h6v6h-6zM398 207h6v6h-6zM296 213h6v6h-6zM386 213h12v6h-12zM308 219h6v6h-6zM350 219h42v6h-42zM320 225h42v6h-42zM368 225h18v6h-18zM320 243h12v6h-12zM314 249h6v6h-6zM314 255h6v6h-6zM326 255h6v6h-6zM248 483h6v6h-6zM242 489h6v6h-6zM254 489h6v6h-6zM242 495h6v6h-6zM254 495h6v6h-6zM242 501h6v6h-6zM254 501h6v6h-6zM248 507h6v6h-6z"/><path fill="#433e85" d="M332 147h18v6h-18zM308 153h18v6h-18zM344 153h18v6h-18zM308 159h6v6h-6zM356 159h18v6h-18zM302 165h6v6h-6zM380 165h18v6h-18zM296 171h6v6h-6zM404 171h6v6h-6zM296 177h6v6h-6zM410 177h6v6h-6zM290 183h6v6h-6zM416 183h6v6h-6zM290 189h6v6h-6zM416 189h6v6h-6zM284 195h6v6h-6zM410 195h6v6h-6zM272 201h18v6h-18zM404 201h6v6h-6zM260 207h36v6h-36zM248 213h36v6h-36zM248 219h30v6h-30zM302 219h6v6h-6zM254 225h12v6h-12zM314 225h6v6h-6zM362 225h6v6h-6zM386 225h6v6h-6zM320 231h66v6h-66zM320 237h12v6h-12zM344 237h36v6h-36zM314 243h6v6h-6zM332 243h6v6h-6zM350 243h24v6h-24zM308 249h6v6h-6zM332 249h6v6h-6zM356 249h12v6h-12zM332 255h6v6h-6zM314 261h24v6h-24zM320 267h12v6h-12zM266 273h6v6h-6zM242 483h6v6h-6zM254 483h6v6h-6zM236 489h6v6h-6zM236 495h6v6h-6zM260 495h6v6h-6zM236 501h6v6h-6zM242 507h6v6h-6zM254 507h6v6h-6z"/><path fill="#414487" d="M326 141h36v6h-36zM308 147h24v6h-24zM350 147h18v6h-18zM302 153h6v6h-6zM362 153h18v6h-18zM296 159h12v6h-12zM374 159h24v6h-24zM296 165h6v6h-6zM398 165h12v6h-12zM290 171h6v6h-6zM410 171h6v6h-6zM290 177h6v6h-6zM416 177h6v6h-6zM284 183h6v6h-6zM278 189h12v6h-12zM422 189h6v6h-6zM266 195h18v6h-18zM416 195h6v6h-6zM248 201h24v6h-24zM410 201h6v6h-6zM248 207h12v6h-12zM404 207h6v6h-6zM242 213h6v6h-6zM284 213h12v6h-12zM398 213h6v6h-6zM242 219h6v6h-6zM278 219h24v6h-24zM392 219h6v6h-6zM248 225h6v6h-6zM266 225h18v6h-18zM302 225h12v6h-12zM248 231h24v6h-24zM314 231h6v6h-6zM386 231h6v6h-6zM248 237h18v6h-18zM314 237h6v6h-6zM332 237h12v6h-12zM380 237h6v6h-6zM248 243h12v6h-12zM308 243h6v6h-6zM338 243h12v6h-12zM374 243h6v6h-6zM254 249h6v6h-6zM338 249h18v6h-18zM368 249h6v6h-6zM248 255h12v6h-12zM308 255h6v6h-6zM338 255h36v6h-36zM248 261h18v6h-18zM308 261h6v6h-6zM338 261h30v6h-30zM248 267h30v6h-30zM308 267h12v6h-12zM332 267h24v6h-24zM248 273h18v6h-18zM272 273h18v6h-18zM320 273h30v6h-30zM248 279h42v6h-42zM326 279h18v6h-18zM254 285h36v6h-36zM326 285h6v6h-6zM266 291h18v6h-18zM248 477h6v6h-6zM236 483h6v6h-6zM260 489h6v6h-6zM260 501h6v6h-6zM236 507h6v6h-6zM260 507h6v6h-6zM242 513h18v6h-18z"/><path fill="#3f4889" d="M332 129h6v6h-6zM344 129h12v6h-12zM320 135h54v6h-54zM308 141h18v6h-18zM362 141h18v6h-18zM302 147h6v6h-6zM368 147h18v6h-18zM290 153h12v6h-12zM380 153h18v6h-18zM290 159h6v6h-6zM398 159h12v6h-12zM284 165h12v6h-12zM410 165h6v6h-6zM284 171h6v6h-6zM416 171h6v6h-6zM278 177h12v6h-12zM422 177h6v6h-6zM272 183h12v6h-12zM422 183h6v6h-6zM260 189h18v6h-18zM248 195h18v6h-18zM422 195h6v6h-6zM416 201h6v6h-6zM242 207h6v6h-6zM410 207h6v6h-6zM404 213h6v6h-6zM236 219h6v6h-6zM398 219h6v6h-6zM236 225h12v6h-12zM284 225h6v6h-6zM296 225h6v6h-6zM392 225h6v6h-6zM242 231h6v6h-6zM272 231h12v6h-12zM302 231h12v6h-12zM392 231h6v6h-6zM242 237h6v6h-6zM266 237h12v6h-12zM308 237h6v6h-6zM386 237h6v6h-6zM242 243h6v6h-6zM260 243h12v6h-12zM380 243h6v6h-6zM242 249h12v6h-12zM260 249h12v6h-12zM302 249h6v6h-6zM374 249h6v6h-6zM242 255h6v6h-6zM260 255h12v6h-12zM302 255h6v6h-6zM242 261h6v6h-6zM266 261h12v6h-12zM302 261h6v6h-6zM368 261h6v6h-6zM242 267h6v6h-6zM278 267h30v6h-30zM356 267h12v6h-12zM242 273h6v6h-6zM290 273h30v6h-30zM350 273h12v6h-12zM242 279h6v6h-6zM290 279h36v6h-36zM344 279h12v6h-12zM242 285h12v6h-12zM290 285h36v6h-36zM332 285h12v6h-12zM254 291h12v6h-12zM284 291h48v6h-48zM266 297h24v6h-24zM242 477h6v6h-6zM254 477h6v6h-6zM260 483h6v6h-6zM230 489h6v6h-6zM230 495h6v6h-6zM266 495h6v6h-6zM230 501h6v6h-6zM230 507h6v6h-6zM236 513h6v6h-6zM260 513h6v6h-6zM242 519h18v6h-18zM344 573h30v6h-30zM350 579h24v6h-24z"/><path fill="#3d4e8a" d="M326 123h42v6h-42zM314 129h18v6h-18zM338 129h6v6h-6zM356 129h24v6h-24zM302 135h18v6h-18zM374 135h12v6h-12zM296 141h12v6h-12zM380 141h18v6h-18zM284 147h18v6h-18zM386 147h24v6h-24zM278 153h12v6h-12zM398 153h18v6h-18zM278 159h12v6h-12zM410 159h12v6h-12zM278 165h6v6h-6zM416 165h6v6h-6zM272 171h12v6h-12zM422 171h6v6h-6zM266 177h12v6h-12zM260 183h12v6h-12zM428 183h6v6h-6zM254 189h6v6h-6zM428 189h6v6h-6zM242 195h6v6h-6zM428 195h6v6h-6zM242 201h6v6h-6zM422 201h6v6h-6zM236 207h6v6h-6zM416 207h6v6h-6zM236 213h6v6h-6zM410 213h6v6h-6zM290 225h6v6h-6zM398 225h6v6h-6zM236 231h6v6h-6zM284 231h18v6h-18zM236 237h6v6h-6zM278 237h18v6h-18zM302 237h6v6h-6zM392 237h6v6h-6zM236 243h6v6h-6zM272 243h12v6h-12zM296 243h12v6h-12zM386 243h6v6h-6zM236 249h6v6h-6zM272 249h18v6h-18zM296 249h6v6h-6zM380 249h6v6h-6zM236 255h6v6h-6zM272 255h30v6h-30zM374 255h6v6h-6zM236 261h6v6h-6zM278 261h24v6h-24zM236 267h6v6h-6zM368 267h6v6h-6zM236 273h6v6h-6zM362 273h6v6h-6zM236 279h6v6h-6zM356 279h6v6h-6zM236 285h6v6h-6zM344 285h6v6h-6zM242 291h12v6h-12zM332 291h12v6h-12zM254 297h12v6h-12zM290 297h42v6h-42zM278 303h30v6h-30zM236 477h6v6h-6zM260 477h6v6h-6zM230 483h6v6h-6zM266 489h6v6h-6zM266 501h6v6h-6zM266 507h6v6h-6zM230 513h6v6h-6zM236 519h6v6h-6zM260 519h6v6h-6zM338 555h30v6h-30zM332 561h48v6h-48zM326 567h60v6h-60zM326 573h18v6h-18zM374 573h24v6h-24zM326 579h24v6h-24zM374 579h24v6h-24zM326 585h78v6h-78zM332 591h6v6h-6zM344 591h60v6h-60z"/><path fill="#3a538b" d="M350 111h18v6h-18zM320 117h72v6h-72zM308 123h18v6h-18zM368 123h24v6h-24zM296 129h18v6h-18zM380 129h18v6h-18zM290 135h12v6h-12zM386 135h18v6h-18zM284 141h12v6h-12zM398 141h12v6h-12zM278 147h6v6h-6zM410 147h12v6h-12zM272 153h6v6h-6zM416 153h6v6h-6zM272 159h6v6h-6zM266 165h12v6h-12zM422 165h6v6h-6zM266 171h6v6h-6zM428 171h6v6h-6zM260 177h6v6h-6zM428 177h6v6h-6zM254 183h6v6h-6zM434 183h6v6h-6zM242 189h12v6h-12zM434 189h6v6h-6zM236 195h6v6h-6zM434 195h6v6h-6zM236 201h6v6h-6zM428 201h12v6h-12zM422 207h6v6h-6zM230 213h6v6h-6zM230 219h6v6h-6zM404 219h6v6h-6zM230 225h6v6h-6zM230 231h6v6h-6zM398 231h6v6h-6zM230 237h6v6h-6zM296 237h6v6h-6zM230 243h6v6h-6zM284 243h12v6h-12zM392 243h6v6h-6zM290 249h6v6h-6zM230 255h6v6h-6zM380 255h6v6h-6zM230 261h6v6h-6zM374 261h6v6h-6zM230 267h6v6h-6zM230 273h6v6h-6zM230 279h6v6h-6zM362 279h6v6h-6zM230 285h6v6h-6zM350 285h12v6h-12zM236 291h6v6h-6zM344 291h6v6h-6zM242 297h12v6h-12zM332 297h12v6h-12zM260 303h18v6h-18zM308 303h18v6h-18zM296 309h6v6h-6zM242 471h18v6h-18zM230 477h6v6h-6zM266 483h6v6h-6zM224 489h6v6h-6zM224 495h6v6h-6zM224 501h6v6h-6zM266 513h6v6h-6zM266 519h6v6h-6zM236 525h30v6h-30zM248 531h6v6h-6zM332 549h42v6h-42zM320 555h18v6h-18zM368 555h18v6h-18zM308 561h24v6h-24zM380 561h18v6h-18zM434 561h12v6h-12zM308 567h18v6h-18zM386 567h24v6h-24zM428 567h18v6h-18zM302 573h24v6h-24zM398 573h48v6h-48zM296 579h30v6h-30zM398 579h48v6h-48zM302 585h24v6h-24zM404 585h36v6h-36zM308 591h24v6h-24zM338 591h6v6h-6zM404 591h36v6h-36z"/><path fill="#38588c" d="M314 111h36v6h-36zM368 111h24v6h-24zM296 117h24v6h-24zM392 117h6v6h-6zM290 123h18v6h-18zM392 123h18v6h-18zM284 129h12v6h-12zM398 129h18v6h-18zM278 135h12v6h-12zM404 135h12v6h-12zM278 141h6v6h-6zM410 141h12v6h-12zM272 147h6v6h-6zM422 147h6v6h-6zM266 153h6v6h-6zM422 153h6v6h-6zM266 159h6v6h-6zM422 159h12v6h-12zM260 165h6v6h-6zM428 165h6v6h-6zM254 171h12v6h-12zM248 177h12v6h-12zM434 177h6v6h-6zM242 183h12v6h-12zM440 183h6v6h-6zM236 189h6v6h-6zM440 189h6v6h-6zM230 195h6v6h-6zM440 195h6v6h-6zM230 201h6v6h-6zM440 201h6v6h-6zM230 207h6v6h-6zM428 207h12v6h-12zM224 213h6v6h-6zM416 213h12v6h-12zM224 219h6v6h-6zM410 219h6v6h-6zM404 225h6v6h-6zM224 231h6v6h-6zM398 237h6v6h-6zM230 249h6v6h-6zM386 249h6v6h-6zM380 261h6v6h-6zM374 267h6v6h-6zM368 273h6v6h-6zM368 279h6v6h-6zM362 285h6v6h-6zM230 291h6v6h-6zM350 291h6v6h-6zM236 297h6v6h-6zM242 303h18v6h-18zM326 303h12v6h-12zM272 309h24v6h-24zM302 309h24v6h-24zM236 471h6v6h-6zM260 471h6v6h-6zM266 477h6v6h-6zM224 483h6v6h-6zM272 489h6v6h-6zM272 495h6v6h-6zM272 501h6v6h-6zM224 507h6v6h-6zM272 507h6v6h-6zM224 513h6v6h-6zM272 513h6v6h-6zM230 519h6v6h-6zM230 525h6v6h-6zM266 525h6v6h-6zM236 531h12v6h-12zM254 531h18v6h-18zM248 537h24v6h-24zM254 543h18v6h-18zM332 543h42v6h-42zM428 543h24v6h-24zM260 549h18v6h-18zM314 549h18v6h-18zM374 549h30v6h-30zM410 549h54v6h-54zM266 555h6v6h-6zM284 555h36v6h-36zM386 555h78v6h-78zM290 561h18v6h-18zM398 561h36v6h-36zM446 561h24v6h-24zM260 567h12v6h-12zM278 567h30v6h-30zM410 567h18v6h-18zM446 567h24v6h-24zM260 573h42v6h-42zM446 573h30v6h-30zM260 579h36v6h-36zM446 579h30v6h-30zM266 585h36v6h-36zM440 585h42v6h-42zM266 591h42v6h-42zM440 591h48v6h-48z"/><path fill="#365d8d" d="M290 111h24v6h-24zM392 111h18v6h-18zM290 117h6v6h-6zM398 117h18v6h-18zM284 123h6v6h-6zM410 123h12v6h-12zM278 129h6v6h-6zM416 129h12v6h-12zM272 135h6v6h-6zM416 135h12v6h-12zM266 141h12v6h-12zM422 141h12v6h-12zM260 147h12v6h-12zM428 147h6v6h-6zM260 153h6v6h-6zM428 153h6v6h-6zM254 159h12v6h-12zM434 159h6v6h-6zM254 165h6v6h-6zM434 165h6v6h-6zM248 171h6v6h-6zM434 171h6v6h-6zM236 177h12v6h-12zM440 177h6v6h-6zM230 183h12v6h-12zM230 189h6v6h-6zM446 189h6v6h-6zM446 195h6v6h-6zM224 201h6v6h-6zM446 201h6v6h-6zM224 207h6v6h-6zM440 207h6v6h-6zM428 213h12v6h-12zM416 219h12v6h-12zM224 225h6v6h-6zM410 225h6v6h-6zM404 231h6v6h-6zM224 237h6v6h-6zM224 243h6v6h-6zM398 243h6v6h-6zM224 249h6v6h-6zM392 249h6v6h-6zM224 255h6v6h-6zM386 255h6v6h-6zM224 261h6v6h-6zM224 267h6v6h-6zM380 267h6v6h-6zM224 273h6v6h-6zM374 273h6v6h-6zM224 279h6v6h-6zM224 285h6v6h-6zM368 285h6v6h-6zM224 291h6v6h-6zM356 291h6v6h-6zM230 297h6v6h-6zM344 297h12v6h-12zM236 303h6v6h-6zM338 303h6v6h-6zM248 309h24v6h-24zM326 309h12v6h-12zM284 315h36v6h-36zM242 465h12v6h-12zM230 471h6v6h-6zM224 477h6v6h-6zM272 483h6v6h-6zM218 495h6v6h-6zM218 501h6v6h-6zM218 507h6v6h-6zM224 519h6v6h-6zM272 519h6v6h-6zM224 525h6v6h-6zM272 525h6v6h-6zM230 531h6v6h-6zM272 531h12v6h-12zM230 537h18v6h-18zM272 537h18v6h-18zM338 537h30v6h-30zM428 537h30v6h-30zM236 543h18v6h-18zM272 543h60v6h-60zM374 543h54v6h-54zM452 543h12v6h-12zM236 549h24v6h-24zM278 549h36v6h-36zM404 549h6v6h-6zM464 549h12v6h-12zM236 555h30v6h-30zM272 555h12v6h-12zM464 555h18v6h-18zM230 561h60v6h-60zM470 561h18v6h-18zM230 567h30v6h-30zM272 567h6v6h-6zM470 567h30v6h-30zM230 573h30v6h-30zM476 573h42v6h-42zM224 579h36v6h-36zM476 579h48v6h-48zM230 585h36v6h-36zM482 585h36v6h-36zM236 591h30v6h-30zM488 591h36v6h-36z"/><path fill="#33628d" d="M284 111h6v6h-6zM410 111h18v6h-18zM284 117h6v6h-6zM416 117h18v6h-18zM278 123h6v6h-6zM422 123h12v6h-12zM272 129h6v6h-6zM428 129h6v6h-6zM266 135h6v6h-6zM428 135h12v6h-12zM260 141h6v6h-6zM434 141h6v6h-6zM254 147h6v6h-6zM434 147h6v6h-6zM254 153h6v6h-6zM434 153h6v6h-6zM248 159h6v6h-6zM440 159h6v6h-6zM242 165h12v6h-12zM440 165h6v6h-6zM236 171h12v6h-12zM440 171h6v6h-6zM230 177h6v6h-6zM446 177h6v6h-6zM446 183h6v6h-6zM224 189h6v6h-6zM452 189h6v6h-6zM224 195h6v6h-6zM452 195h6v6h-6zM218 201h6v6h-6zM452 201h6v6h-6zM218 207h6v6h-6zM446 207h6v6h-6zM218 213h6v6h-6zM440 213h6v6h-6zM218 219h6v6h-6zM428 219h12v6h-12zM218 225h6v6h-6zM416 225h6v6h-6zM218 231h6v6h-6zM410 231h6v6h-6zM218 237h6v6h-6zM404 237h6v6h-6zM218 243h6v6h-6zM218 249h6v6h-6zM398 249h6v6h-6zM218 255h6v6h-6zM392 255h6v6h-6zM386 261h6v6h-6zM218 267h6v6h-6zM218 273h6v6h-6zM380 273h6v6h-6zM218 279h6v6h-6zM374 279h6v6h-6zM218 285h6v6h-6zM362 291h6v6h-6zM224 297h6v6h-6zM356 297h6v6h-6zM230 303h6v6h-6zM344 303h6v6h-6zM236 309h12v6h-12zM338 309h6v6h-6zM260 315h24v6h-24zM320 315h12v6h-12zM296 321h6v6h-6zM236 465h6v6h-6zM254 465h6v6h-6zM224 471h6v6h-6zM266 471h6v6h-6zM272 477h6v6h-6zM218 483h6v6h-6zM218 489h6v6h-6zM278 501h6v6h-6zM278 507h6v6h-6zM218 513h6v6h-6zM278 513h6v6h-6zM218 519h6v6h-6zM278 519h6v6h-6zM218 525h6v6h-6zM278 525h12v6h-12zM218 531h12v6h-12zM284 531h12v6h-12zM356 531h6v6h-6zM434 531h24v6h-24zM224 537h6v6h-6zM290 537h48v6h-48zM368 537h60v6h-60zM458 537h12v6h-12zM224 543h12v6h-12zM464 543h18v6h-18zM224 549h12v6h-12zM476 549h24v6h-24zM224 555h12v6h-12zM482 555h36v6h-36zM212 561h18v6h-18zM488 561h60v6h-60zM212 567h18v6h-18zM500 567h54v6h-54zM206 573h24v6h-24zM518 573h42v6h-42zM206 579h18v6h-18zM524 579h36v6h-36zM212 585h18v6h-18zM518 585h36v6h-36zM218 591h18v6h-18zM524 591h18v6h-18z"/><path fill="#31668e" d="M278 111h6v6h-6zM428 111h12v6h-12zM272 117h12v6h-12zM434 117h12v6h-12zM266 123h12v6h-12zM434 123h18v6h-18zM260 129h12v6h-12zM434 129h18v6h-18zM254 135h12v6h-12zM440 135h12v6h-12zM254 141h6v6h-6zM440 141h12v6h-12zM248 147h6v6h-6zM440 147h6v6h-6zM242 153h12v6h-12zM440 153h6v6h-6zM236 159h12v6h-12zM446 159h6v6h-6zM236 165h6v6h-6zM446 165h6v6h-6zM230 171h6v6h-6zM446 171h6v6h-6zM224 177h6v6h-6zM452 177h6v6h-6zM224 183h6v6h-6zM452 183h6v6h-6zM218 189h6v6h-6zM218 195h6v6h-6zM458 195h6v6h-6zM212 201h6v6h-6zM458 201h6v6h-6zM212 207h6v6h-6zM452 207h6v6h-6zM212 213h6v6h-6zM446 213h12v6h-12zM212 219h6v6h-6zM440 219h12v6h-12zM212 225h6v6h-6zM422 225h18v6h-18zM212 231h6v6h-6zM416 231h6v6h-6zM212 237h6v6h-6zM410 237h6v6h-6zM212 243h6v6h-6zM404 243h6v6h-6zM398 255h6v6h-6zM218 261h6v6h-6zM392 261h6v6h-6zM386 267h6v6h-6zM386 273h6v6h-6zM380 279h6v6h-6zM374 285h6v6h-6zM218 291h6v6h-6zM368 291h6v6h-6zM362 297h6v6h-6zM224 303h6v6h-6zM350 303h6v6h-6zM230 309h6v6h-6zM344 309h6v6h-6zM236 315h24v6h-24zM332 315h12v6h-12zM284 321h12v6h-12zM302 321h24v6h-24zM236 459h18v6h-18zM230 465h6v6h-6zM260 465h6v6h-6zM218 477h6v6h-6zM212 489h6v6h-6zM278 489h6v6h-6zM212 495h6v6h-6zM278 495h6v6h-6zM212 501h6v6h-6zM212 507h6v6h-6zM212 513h6v6h-6zM284 513h6v6h-6zM212 519h6v6h-6zM284 519h6v6h-6zM212 525h6v6h-6zM290 525h6v6h-6zM434 525h18v6h-18zM206 531h12v6h-12zM296 531h60v6h-60zM362 531h18v6h-18zM422 531h12v6h-12zM458 531h12v6h-12zM206 537h18v6h-18zM470 537h12v6h-12zM206 543h18v6h-18zM482 543h42v6h-42zM542 543h6v6h-6zM200 549h24v6h-24zM500 549h54v6h-54zM200 555h24v6h-24zM518 555h60v6h-60zM194 561h18v6h-18zM548 561h36v6h-36zM194 567h18v6h-18zM554 567h30v6h-30zM188 573h18v6h-18zM560 573h30v6h-30zM188 579h18v6h-18zM560 579h24v6h-24zM188 585h24v6h-24zM554 585h30v6h-30zM188 591h30v6h-30zM542 591h42v6h-42z"/><path fill="#2f6b8e" d="M266 111h12v6h-12zM440 111h24v6h-24zM260 117h12v6h-12zM446 117h24v6h-24zM254 123h12v6h-12zM452 123h18v6h-18zM254 129h6v6h-6zM452 129h18v6h-18zM248 135h6v6h-6zM452 135h12v6h-12zM242 141h12v6h-12zM452 141h12v6h-12zM236 147h12v6h-12zM446 147h12v6h-12zM236 153h6v6h-6zM446 153h12v6h-12zM230 159h6v6h-6zM452 159h18v6h-18zM224 165h12v6h-12zM452 165h6v6h-6zM224 171h6v6h-6zM452 171h6v6h-6zM218 177h6v6h-6zM458 177h6v6h-6zM218 183h6v6h-6zM458 183h6v6h-6zM212 189h6v6h-6zM458 189h12v6h-12zM212 195h6v6h-6zM464 195h6v6h-6zM206 201h6v6h-6zM206 207h6v6h-6zM458 207h6v6h-6zM206 213h6v6h-6zM458 213h6v6h-6zM206 219h6v6h-6zM452 219h6v6h-6zM206 225h6v6h-6zM440 225h12v6h-12zM206 231h6v6h-6zM422 231h18v6h-18zM206 237h6v6h-6zM416 237h6v6h-6zM206 243h6v6h-6zM410 243h6v6h-6zM212 249h6v6h-6zM404 249h6v6h-6zM212 255h6v6h-6zM212 261h6v6h-6zM212 267h6v6h-6zM392 267h6v6h-6zM212 273h6v6h-6zM212 279h6v6h-6zM386 279h6v6h-6zM212 285h6v6h-6zM380 285h6v6h-6zM212 291h6v6h-6zM374 291h6v6h-6zM218 297h6v6h-6zM368 297h6v6h-6zM218 303h6v6h-6zM356 303h6v6h-6zM224 309h6v6h-6zM350 309h6v6h-6zM230 315h6v6h-6zM236 321h48v6h-48zM326 321h12v6h-12zM302 327h18v6h-18zM230 459h6v6h-6zM254 459h6v6h-6zM224 465h6v6h-6zM266 465h6v6h-6zM218 471h6v6h-6zM272 471h6v6h-6zM212 477h6v6h-6zM212 483h6v6h-6zM278 483h6v6h-6zM206 501h6v6h-6zM284 501h6v6h-6zM206 507h6v6h-6zM284 507h6v6h-6zM206 513h6v6h-6zM290 513h6v6h-6zM206 519h6v6h-6zM290 519h6v6h-6zM200 525h12v6h-12zM296 525h78v6h-78zM428 525h6v6h-6zM452 525h12v6h-12zM200 531h6v6h-6zM380 531h42v6h-42zM470 531h12v6h-12zM560 531h12v6h-12zM194 537h12v6h-12zM482 537h90v6h-90zM194 543h12v6h-12zM524 543h18v6h-18zM548 543h48v6h-48zM188 549h12v6h-12zM554 549h54v6h-54zM188 555h12v6h-12zM578 555h42v6h-42zM182 561h12v6h-12zM584 561h36v6h-36zM170 567h24v6h-24zM584 567h42v6h-42zM170 573h18v6h-18zM590 573h36v6h-36zM170 579h18v6h-18zM584 579h36v6h-36zM164 585h24v6h-24zM584 585h36v6h-36zM164 591h24v6h-24zM584 591h36v6h-36z"/><path fill="#2d708e" d="M254 111h12v6h-12zM464 111h72v6h-72zM548 111h6v6h-6zM248 117h12v6h-12zM470 117h66v6h-66zM548 117h6v6h-6zM566 117h12v6h-12zM248 123h6v6h-6zM470 123h60v6h-60zM536 123h12v6h-12zM560 123h12v6h-12zM242 129h12v6h-12zM470 129h48v6h-48zM560 129h12v6h-12zM236 135h12v6h-12zM464 135h48v6h-48zM236 141h6v6h-6zM464 141h24v6h-24zM230 147h6v6h-6zM458 147h30v6h-30zM224 153h12v6h-12zM458 153h30v6h-30zM224 159h6v6h-6zM470 159h18v6h-18zM218 165h6v6h-6zM458 165h24v6h-24zM218 171h6v6h-6zM458 171h18v6h-18zM212 177h6v6h-6zM464 177h6v6h-6zM212 183h6v6h-6zM464 183h6v6h-6zM206 189h6v6h-6zM470 189h6v6h-6zM206 195h6v6h-6zM470 195h6v6h-6zM200 201h6v6h-6zM464 201h6v6h-6zM200 207h6v6h-6zM464 207h6v6h-6zM200 213h6v6h-6zM464 213h6v6h-6zM200 219h6v6h-6zM458 219h6v6h-6zM200 225h6v6h-6zM452 225h6v6h-6zM200 231h6v6h-6zM440 231h12v6h-12zM200 237h6v6h-6zM422 237h18v6h-18zM416 243h6v6h-6zM206 249h6v6h-6zM410 249h6v6h-6zM206 255h6v6h-6zM404 255h6v6h-6zM206 261h6v6h-6zM398 261h6v6h-6zM206 267h6v6h-6zM206 273h6v6h-6zM392 273h6v6h-6zM206 279h6v6h-6zM386 285h6v6h-6zM380 291h6v6h-6zM212 297h6v6h-6zM374 297h6v6h-6zM362 303h12v6h-12zM218 309h6v6h-6zM356 309h6v6h-6zM224 315h6v6h-6zM344 315h12v6h-12zM230 321h6v6h-6zM338 321h6v6h-6zM242 327h12v6h-12zM284 327h18v6h-18zM320 327h18v6h-18zM242 453h6v6h-6zM224 459h6v6h-6zM260 459h6v6h-6zM218 465h6v6h-6zM272 465h6v6h-6zM212 471h6v6h-6zM278 477h6v6h-6zM206 483h6v6h-6zM206 489h6v6h-6zM206 495h6v6h-6zM284 495h6v6h-6zM200 501h6v6h-6zM200 507h6v6h-6zM290 507h6v6h-6zM194 513h12v6h-12zM296 513h6v6h-6zM188 519h18v6h-18zM296 519h30v6h-30zM434 519h18v6h-18zM188 525h12v6h-12zM374 525h12v6h-12zM416 525h12v6h-12zM464 525h18v6h-18zM542 525h54v6h-54zM182 531h18v6h-18zM482 531h78v6h-78zM572 531h36v6h-36zM176 537h18v6h-18zM572 537h48v6h-48zM176 543h18v6h-18zM596 543h30v6h-30zM170 549h18v6h-18zM608 549h18v6h-18zM164 555h24v6h-24zM620 555h6v6h-6zM152 561h30v6h-30zM620 561h6v6h-6zM152 567h18v6h-18zM140 573h6v6h-6zM152 573h18v6h-18zM140 579h30v6h-30zM620 579h6v6h-6zM140 585h24v6h-24zM620 585h6v6h-6zM140 591h24v6h-24zM620 591h6v6h-6z"/><path fill="#2c738e" d="M242 111h12v6h-12zM536 111h12v6h-12zM554 111h72v6h-72zM242 117h6v6h-6zM536 117h12v6h-12zM554 117h12v6h-12zM578 117h48v6h-48zM236 123h12v6h-12zM530 123h6v6h-6zM548 123h12v6h-12zM572 123h54v6h-54zM236 129h6v6h-6zM518 129h42v6h-42zM572 129h54v6h-54zM230 135h6v6h-6zM512 135h114v6h-114zM224 141h12v6h-12zM488 141h126v6h-126zM620 141h6v6h-6zM224 147h6v6h-6zM488 147h138v6h-138zM218 153h6v6h-6zM488 153h138v6h-138zM212 159h12v6h-12zM488 159h36v6h-36zM530 159h60v6h-60zM596 159h24v6h-24zM212 165h6v6h-6zM482 165h42v6h-42zM536 165h18v6h-18zM560 165h30v6h-30zM206 171h12v6h-12zM476 171h48v6h-48zM542 171h6v6h-6zM560 171h6v6h-6zM206 177h6v6h-6zM470 177h48v6h-48zM200 183h12v6h-12zM470 183h12v6h-12zM488 183h12v6h-12zM200 189h6v6h-6zM476 189h6v6h-6zM200 195h6v6h-6zM476 195h6v6h-6zM470 201h12v6h-12zM194 207h6v6h-6zM470 207h12v6h-12zM194 213h6v6h-6zM470 213h6v6h-6zM194 219h6v6h-6zM464 219h6v6h-6zM194 225h6v6h-6zM458 225h6v6h-6zM194 231h6v6h-6zM452 231h6v6h-6zM440 237h12v6h-12zM200 243h6v6h-6zM422 243h18v6h-18zM200 249h6v6h-6zM416 249h6v6h-6zM200 255h6v6h-6zM410 255h6v6h-6zM200 261h6v6h-6zM404 261h6v6h-6zM398 267h6v6h-6zM392 279h6v6h-6zM206 285h6v6h-6zM206 291h6v6h-6zM386 291h6v6h-6zM380 297h6v6h-6zM212 303h6v6h-6zM374 303h6v6h-6zM362 309h6v6h-6zM218 315h6v6h-6zM356 315h6v6h-6zM224 321h6v6h-6zM344 321h6v6h-6zM230 327h12v6h-12zM254 327h30v6h-30zM338 327h6v6h-6zM302 333h24v6h-24zM230 453h12v6h-12zM248 453h6v6h-6zM218 459h6v6h-6zM266 459h6v6h-6zM212 465h6v6h-6zM206 471h6v6h-6zM278 471h6v6h-6zM206 477h6v6h-6zM284 483h6v6h-6zM200 489h6v6h-6zM284 489h6v6h-6zM200 495h6v6h-6zM194 501h6v6h-6zM290 501h6v6h-6zM188 507h12v6h-12zM296 507h6v6h-6zM188 513h6v6h-6zM302 513h18v6h-18zM434 513h6v6h-6zM560 513h54v6h-54zM182 519h6v6h-6zM326 519h54v6h-54zM422 519h12v6h-12zM452 519h18v6h-18zM542 519h84v6h-84zM176 525h12v6h-12zM386 525h30v6h-30zM482 525h60v6h-60zM596 525h30v6h-30zM170 531h12v6h-12zM608 531h18v6h-18zM164 537h12v6h-12zM620 537h6v6h-6zM152 543h24v6h-24zM152 549h18v6h-18zM140 555h24v6h-24zM140 561h12v6h-12zM140 567h12v6h-12zM146 573h6v6h-6z"/><path fill="#2a788e" d="M236 111h6v6h-6zM230 117h12v6h-12zM224 123h12v6h-12zM224 129h12v6h-12zM224 135h6v6h-6zM218 141h6v6h-6zM614 141h6v6h-6zM212 147h12v6h-12zM206 153h12v6h-12zM206 159h6v6h-6zM524 159h6v6h-6zM590 159h6v6h-6zM620 159h6v6h-6zM200 165h12v6h-12zM524 165h12v6h-12zM554 165h6v6h-6zM590 165h36v6h-36zM200 171h6v6h-6zM524 171h18v6h-18zM548 171h12v6h-12zM566 171h60v6h-60zM194 177h12v6h-12zM518 177h108v6h-108zM194 183h6v6h-6zM482 183h6v6h-6zM500 183h126v6h-126zM194 189h6v6h-6zM482 189h144v6h-144zM194 195h6v6h-6zM482 195h126v6h-126zM620 195h6v6h-6zM194 201h6v6h-6zM482 201h84v6h-84zM620 201h6v6h-6zM188 207h6v6h-6zM482 207h12v6h-12zM500 207h30v6h-30zM188 213h6v6h-6zM476 213h18v6h-18zM500 213h6v6h-6zM188 219h6v6h-6zM470 219h6v6h-6zM188 225h6v6h-6zM464 225h6v6h-6zM458 231h6v6h-6zM194 237h6v6h-6zM452 237h6v6h-6zM194 243h6v6h-6zM440 243h12v6h-12zM194 249h6v6h-6zM422 249h12v6h-12zM194 255h6v6h-6zM416 255h6v6h-6zM410 261h6v6h-6zM200 267h6v6h-6zM404 267h6v6h-6zM200 273h6v6h-6zM398 273h6v6h-6zM200 279h6v6h-6zM392 285h6v6h-6zM392 291h6v6h-6zM206 297h6v6h-6zM386 297h6v6h-6zM380 303h6v6h-6zM212 309h6v6h-6zM368 309h12v6h-12zM362 315h6v6h-6zM218 321h6v6h-6zM350 321h6v6h-6zM224 327h6v6h-6zM344 327h6v6h-6zM230 333h36v6h-36zM278 333h24v6h-24zM326 333h12v6h-12zM242 447h6v6h-6zM224 453h6v6h-6zM254 453h12v6h-12zM212 459h6v6h-6zM272 459h6v6h-6zM206 465h6v6h-6zM278 465h6v6h-6zM200 471h6v6h-6zM200 477h6v6h-6zM284 477h6v6h-6zM200 483h6v6h-6zM194 489h6v6h-6zM188 495h12v6h-12zM290 495h6v6h-6zM578 495h12v6h-12zM182 501h12v6h-12zM296 501h6v6h-6zM560 501h66v6h-66zM176 507h12v6h-12zM302 507h18v6h-18zM554 507h72v6h-72zM164 513h24v6h-24zM320 513h12v6h-12zM428 513h6v6h-6zM440 513h12v6h-12zM542 513h18v6h-18zM614 513h12v6h-12zM164 519h18v6h-18zM380 519h6v6h-6zM416 519h6v6h-6zM470 519h12v6h-12zM524 519h18v6h-18zM158 525h18v6h-18zM146 531h24v6h-24zM140 537h24v6h-24zM140 543h12v6h-12zM140 549h12v6h-12z"/><path fill="#287d8e" d="M224 111h12v6h-12zM218 117h12v6h-12zM212 123h12v6h-12zM212 129h12v6h-12zM212 135h12v6h-12zM206 141h12v6h-12zM206 147h6v6h-6zM200 153h6v6h-6zM194 159h12v6h-12zM194 165h6v6h-6zM188 171h12v6h-12zM188 177h6v6h-6zM188 183h6v6h-6zM182 189h12v6h-12zM182 195h12v6h-12zM608 195h12v6h-12zM182 201h12v6h-12zM566 201h54v6h-54zM182 207h6v6h-6zM494 207h6v6h-6zM530 207h96v6h-96zM182 213h6v6h-6zM494 213h6v6h-6zM506 213h120v6h-120zM182 219h6v6h-6zM476 219h30v6h-30zM512 219h108v6h-108zM182 225h6v6h-6zM470 225h6v6h-6zM560 225h48v6h-48zM620 225h6v6h-6zM182 231h12v6h-12zM464 231h6v6h-6zM566 231h12v6h-12zM584 231h30v6h-30zM188 237h6v6h-6zM458 237h6v6h-6zM188 243h6v6h-6zM188 249h6v6h-6zM434 249h12v6h-12zM188 255h6v6h-6zM422 255h12v6h-12zM194 261h6v6h-6zM194 267h6v6h-6zM398 279h6v6h-6zM200 285h6v6h-6zM200 291h6v6h-6zM392 297h6v6h-6zM206 303h6v6h-6zM386 303h6v6h-6zM380 309h6v6h-6zM212 315h6v6h-6zM368 315h6v6h-6zM212 321h6v6h-6zM356 321h12v6h-12zM218 327h6v6h-6zM350 327h6v6h-6zM224 333h6v6h-6zM266 333h12v6h-12zM338 333h12v6h-12zM236 339h18v6h-18zM302 339h30v6h-30zM230 447h12v6h-12zM248 447h12v6h-12zM212 453h12v6h-12zM266 453h6v6h-6zM206 459h6v6h-6zM200 465h6v6h-6zM194 471h6v6h-6zM284 471h6v6h-6zM188 477h12v6h-12zM590 477h12v6h-12zM620 477h6v6h-6zM188 483h12v6h-12zM578 483h48v6h-48zM182 489h12v6h-12zM290 489h6v6h-6zM572 489h54v6h-54zM176 495h12v6h-12zM296 495h6v6h-6zM560 495h18v6h-18zM590 495h36v6h-36zM164 501h18v6h-18zM302 501h18v6h-18zM554 501h6v6h-6zM152 507h24v6h-24zM320 507h12v6h-12zM434 507h12v6h-12zM542 507h12v6h-12zM146 513h18v6h-18zM332 513h48v6h-48zM422 513h6v6h-6zM452 513h12v6h-12zM524 513h18v6h-18zM140 519h24v6h-24zM386 519h30v6h-30zM482 519h42v6h-42zM140 525h18v6h-18zM140 531h6v6h-6z"/><path fill="#26818e" d="M212 111h12v6h-12zM206 117h12v6h-12zM206 123h6v6h-6zM200 129h12v6h-12zM200 135h12v6h-12zM194 141h12v6h-12zM194 147h12v6h-12zM188 153h12v6h-12zM188 159h6v6h-6zM182 165h12v6h-12zM182 171h6v6h-6zM176 177h12v6h-12zM176 183h12v6h-12zM176 189h6v6h-6zM176 195h6v6h-6zM176 201h6v6h-6zM170 207h12v6h-12zM170 213h12v6h-12zM176 219h6v6h-6zM506 219h6v6h-6zM620 219h6v6h-6zM176 225h6v6h-6zM476 225h84v6h-84zM608 225h12v6h-12zM176 231h6v6h-6zM470 231h6v6h-6zM548 231h18v6h-18zM578 231h6v6h-6zM614 231h12v6h-12zM182 237h6v6h-6zM464 237h6v6h-6zM554 237h72v6h-72zM182 243h6v6h-6zM452 243h6v6h-6zM560 243h66v6h-66zM182 249h6v6h-6zM446 249h6v6h-6zM566 249h60v6h-60zM434 255h6v6h-6zM566 255h12v6h-12zM584 255h42v6h-42zM188 261h6v6h-6zM416 261h12v6h-12zM584 261h6v6h-6zM602 261h6v6h-6zM614 261h12v6h-12zM188 267h6v6h-6zM410 267h6v6h-6zM578 267h12v6h-12zM602 267h6v6h-6zM194 273h6v6h-6zM404 273h6v6h-6zM584 273h6v6h-6zM194 279h6v6h-6zM194 285h6v6h-6zM398 285h6v6h-6zM398 291h6v6h-6zM200 297h6v6h-6zM392 303h6v6h-6zM206 309h6v6h-6zM386 309h6v6h-6zM206 315h6v6h-6zM374 315h12v6h-12zM368 321h6v6h-6zM212 327h6v6h-6zM356 327h6v6h-6zM218 333h6v6h-6zM224 339h12v6h-12zM254 339h48v6h-48zM332 339h12v6h-12zM236 345h12v6h-12zM314 345h6v6h-6zM242 441h6v6h-6zM218 447h12v6h-12zM260 447h6v6h-6zM206 453h6v6h-6zM272 453h6v6h-6zM194 459h12v6h-12zM278 459h6v6h-6zM602 459h18v6h-18zM188 465h12v6h-12zM590 465h36v6h-36zM188 471h6v6h-6zM584 471h42v6h-42zM176 477h12v6h-12zM290 477h6v6h-6zM572 477h18v6h-18zM602 477h18v6h-18zM176 483h12v6h-12zM290 483h6v6h-6zM566 483h12v6h-12zM170 489h12v6h-12zM296 489h6v6h-6zM560 489h12v6h-12zM152 495h24v6h-24zM302 495h12v6h-12zM554 495h6v6h-6zM146 501h18v6h-18zM320 501h12v6h-12zM542 501h12v6h-12zM140 507h12v6h-12zM332 507h6v6h-6zM422 507h12v6h-12zM446 507h6v6h-6zM530 507h12v6h-12zM140 513h6v6h-6zM380 513h12v6h-12zM410 513h12v6h-12zM464 513h60v6h-60z"/><path fill="#25858e" d="M194 111h18v6h-18zM194 117h12v6h-12zM188 123h18v6h-18zM188 129h12v6h-12zM188 135h12v6h-12zM182 141h12v6h-12zM182 147h12v6h-12zM182 153h6v6h-6zM170 159h18v6h-18zM170 165h12v6h-12zM170 171h12v6h-12zM170 177h6v6h-6zM170 183h6v6h-6zM164 189h12v6h-12zM164 195h12v6h-12zM164 201h12v6h-12zM164 207h6v6h-6zM164 213h6v6h-6zM164 219h12v6h-12zM164 225h12v6h-12zM170 231h6v6h-6zM476 231h24v6h-24zM506 231h42v6h-42zM170 237h12v6h-12zM470 237h6v6h-6zM542 237h12v6h-12zM176 243h6v6h-6zM458 243h6v6h-6zM548 243h12v6h-12zM176 249h6v6h-6zM452 249h6v6h-6zM554 249h12v6h-12zM176 255h12v6h-12zM440 255h12v6h-12zM560 255h6v6h-6zM578 255h6v6h-6zM182 261h6v6h-6zM428 261h6v6h-6zM560 261h24v6h-24zM590 261h12v6h-12zM608 261h6v6h-6zM182 267h6v6h-6zM416 267h6v6h-6zM566 267h12v6h-12zM590 267h12v6h-12zM608 267h18v6h-18zM188 273h6v6h-6zM410 273h6v6h-6zM566 273h18v6h-18zM590 273h36v6h-36zM188 279h6v6h-6zM404 279h6v6h-6zM572 279h54v6h-54zM404 285h6v6h-6zM578 285h48v6h-48zM194 291h6v6h-6zM590 291h36v6h-36zM398 297h6v6h-6zM596 297h30v6h-30zM200 303h6v6h-6zM602 303h18v6h-18zM392 309h6v6h-6zM386 315h6v6h-6zM206 321h6v6h-6zM374 321h6v6h-6zM362 327h6v6h-6zM212 333h6v6h-6zM350 333h6v6h-6zM218 339h6v6h-6zM344 339h6v6h-6zM224 345h12v6h-12zM248 345h66v6h-66zM320 345h18v6h-18zM620 429h6v6h-6zM608 435h18v6h-18zM224 441h18v6h-18zM248 441h12v6h-12zM596 441h30v6h-30zM200 447h18v6h-18zM266 447h6v6h-6zM596 447h30v6h-30zM194 453h12v6h-12zM278 453h6v6h-6zM590 453h36v6h-36zM182 459h12v6h-12zM584 459h18v6h-18zM620 459h6v6h-6zM176 465h12v6h-12zM284 465h6v6h-6zM578 465h12v6h-12zM170 471h18v6h-18zM290 471h6v6h-6zM572 471h12v6h-12zM164 477h12v6h-12zM566 477h6v6h-6zM140 483h36v6h-36zM296 483h6v6h-6zM560 483h6v6h-6zM140 489h30v6h-30zM302 489h12v6h-12zM554 489h6v6h-6zM140 495h12v6h-12zM314 495h12v6h-12zM548 495h6v6h-6zM140 501h6v6h-6zM332 501h6v6h-6zM416 501h30v6h-30zM536 501h6v6h-6zM338 507h18v6h-18zM362 507h18v6h-18zM410 507h12v6h-12zM452 507h12v6h-12zM524 507h6v6h-6zM392 513h18v6h-18z"/><path fill="#238a8d" d="M152 111h42v6h-42zM146 117h12v6h-12zM170 117h24v6h-24zM170 123h18v6h-18zM140 129h6v6h-6zM158 129h30v6h-30zM152 135h36v6h-36zM158 141h24v6h-24zM158 147h24v6h-24zM152 153h30v6h-30zM152 159h18v6h-18zM152 165h18v6h-18zM140 171h30v6h-30zM140 177h30v6h-30zM140 183h30v6h-30zM140 189h24v6h-24zM146 195h18v6h-18zM152 201h12v6h-12zM152 207h12v6h-12zM140 213h24v6h-24zM152 219h12v6h-12zM158 225h6v6h-6zM158 231h12v6h-12zM500 231h6v6h-6zM164 237h6v6h-6zM476 237h12v6h-12zM494 237h6v6h-6zM506 237h36v6h-36zM164 243h12v6h-12zM464 243h6v6h-6zM530 243h18v6h-18zM164 249h12v6h-12zM458 249h6v6h-6zM542 249h12v6h-12zM170 255h6v6h-6zM554 255h6v6h-6zM176 261h6v6h-6zM434 261h12v6h-12zM554 261h6v6h-6zM422 267h6v6h-6zM560 267h6v6h-6zM182 273h6v6h-6zM416 273h6v6h-6zM560 273h6v6h-6zM182 279h6v6h-6zM410 279h6v6h-6zM566 279h6v6h-6zM188 285h6v6h-6zM572 285h6v6h-6zM404 291h6v6h-6zM578 291h12v6h-12zM194 297h6v6h-6zM578 297h18v6h-18zM398 303h6v6h-6zM590 303h12v6h-12zM620 303h6v6h-6zM200 309h6v6h-6zM590 309h36v6h-36zM200 315h6v6h-6zM392 315h6v6h-6zM602 315h24v6h-24zM200 321h6v6h-6zM380 321h6v6h-6zM608 321h18v6h-18zM206 327h6v6h-6zM368 327h6v6h-6zM602 327h6v6h-6zM614 327h6v6h-6zM206 333h6v6h-6zM356 333h6v6h-6zM212 339h6v6h-6zM350 339h6v6h-6zM212 345h12v6h-12zM338 345h6v6h-6zM224 351h48v6h-48zM290 351h42v6h-42zM620 399h6v6h-6zM620 405h6v6h-6zM614 411h12v6h-12zM608 417h18v6h-18zM602 423h24v6h-24zM596 429h24v6h-24zM224 435h30v6h-30zM596 435h12v6h-12zM200 441h24v6h-24zM260 441h12v6h-12zM590 441h6v6h-6zM188 447h12v6h-12zM272 447h6v6h-6zM584 447h12v6h-12zM182 453h12v6h-12zM578 453h12v6h-12zM176 459h6v6h-6zM284 459h6v6h-6zM578 459h6v6h-6zM164 465h12v6h-12zM290 465h6v6h-6zM572 465h6v6h-6zM140 471h30v6h-30zM566 471h6v6h-6zM140 477h24v6h-24zM296 477h6v6h-6zM560 477h6v6h-6zM302 483h12v6h-12zM554 483h6v6h-6zM314 489h18v6h-18zM548 489h6v6h-6zM326 495h12v6h-12zM416 495h18v6h-18zM542 495h6v6h-6zM338 501h12v6h-12zM410 501h6v6h-6zM446 501h6v6h-6zM530 501h6v6h-6zM356 507h6v6h-6zM380 507h30v6h-30zM464 507h12v6h-12zM482 507h42v6h-42z"/><path fill="#218e8d" d="M140 111h12v6h-12zM140 117h6v6h-6zM158 117h12v6h-12zM140 123h30v6h-30zM146 129h12v6h-12zM140 135h12v6h-12zM140 141h18v6h-18zM140 147h18v6h-18zM140 153h12v6h-12zM140 159h12v6h-12zM140 165h12v6h-12zM140 195h6v6h-6zM140 201h12v6h-12zM140 207h12v6h-12zM140 219h12v6h-12zM140 225h18v6h-18zM140 231h18v6h-18zM140 237h24v6h-24zM488 237h6v6h-6zM500 237h6v6h-6zM152 243h12v6h-12zM470 243h6v6h-6zM506 243h24v6h-24zM158 249h6v6h-6zM464 249h6v6h-6zM524 249h18v6h-18zM164 255h6v6h-6zM452 255h6v6h-6zM542 255h12v6h-12zM170 261h6v6h-6zM446 261h6v6h-6zM548 261h6v6h-6zM170 267h12v6h-12zM428 267h12v6h-12zM554 267h6v6h-6zM176 273h6v6h-6zM422 273h6v6h-6zM176 279h6v6h-6zM560 279h6v6h-6zM182 285h6v6h-6zM410 285h6v6h-6zM566 285h6v6h-6zM188 291h6v6h-6zM572 291h6v6h-6zM404 297h6v6h-6zM572 297h6v6h-6zM194 303h6v6h-6zM578 303h12v6h-12zM194 309h6v6h-6zM398 309h6v6h-6zM584 309h6v6h-6zM590 315h12v6h-12zM386 321h6v6h-6zM590 321h18v6h-18zM200 327h6v6h-6zM374 327h12v6h-12zM596 327h6v6h-6zM608 327h6v6h-6zM620 327h6v6h-6zM200 333h6v6h-6zM362 333h6v6h-6zM596 333h30v6h-30zM206 339h6v6h-6zM602 339h24v6h-24zM206 345h6v6h-6zM344 345h6v6h-6zM602 345h24v6h-24zM212 351h12v6h-12zM272 351h18v6h-18zM332 351h6v6h-6zM602 351h24v6h-24zM224 357h90v6h-90zM608 357h18v6h-18zM230 363h6v6h-6zM608 363h18v6h-18zM608 369h18v6h-18zM602 375h24v6h-24zM212 381h12v6h-12zM602 381h24v6h-24zM212 387h18v6h-18zM602 387h24v6h-24zM212 393h18v6h-18zM602 393h24v6h-24zM596 399h24v6h-24zM596 405h24v6h-24zM596 411h18v6h-18zM596 417h12v6h-12zM590 423h12v6h-12zM206 429h42v6h-42zM590 429h6v6h-6zM194 435h30v6h-30zM254 435h12v6h-12zM590 435h6v6h-6zM176 441h24v6h-24zM272 441h6v6h-6zM584 441h6v6h-6zM170 447h18v6h-18zM278 447h6v6h-6zM578 447h6v6h-6zM164 453h18v6h-18zM284 453h6v6h-6zM140 459h6v6h-6zM158 459h18v6h-18zM290 459h6v6h-6zM572 459h6v6h-6zM140 465h24v6h-24zM566 465h6v6h-6zM296 471h6v6h-6zM560 471h6v6h-6zM302 477h12v6h-12zM554 477h6v6h-6zM314 483h12v6h-12zM548 483h6v6h-6zM332 489h6v6h-6zM422 489h12v6h-12zM542 489h6v6h-6zM338 495h6v6h-6zM410 495h6v6h-6zM434 495h12v6h-12zM530 495h12v6h-12zM350 501h60v6h-60zM452 501h6v6h-6zM518 501h12v6h-12zM476 507h6v6h-6z"/><path fill="#20928c" d="M140 243h12v6h-12zM476 243h30v6h-30zM146 249h12v6h-12zM470 249h6v6h-6zM512 249h12v6h-12zM146 255h18v6h-18zM458 255h6v6h-6zM530 255h12v6h-12zM158 261h12v6h-12zM452 261h6v6h-6zM542 261h6v6h-6zM164 267h6v6h-6zM440 267h6v6h-6zM548 267h6v6h-6zM164 273h12v6h-12zM428 273h6v6h-6zM554 273h6v6h-6zM170 279h6v6h-6zM416 279h6v6h-6zM554 279h6v6h-6zM176 285h6v6h-6zM560 285h6v6h-6zM182 291h6v6h-6zM410 291h6v6h-6zM566 291h6v6h-6zM188 297h6v6h-6zM566 297h6v6h-6zM188 303h6v6h-6zM404 303h6v6h-6zM572 303h6v6h-6zM578 309h6v6h-6zM194 315h6v6h-6zM398 315h6v6h-6zM584 315h6v6h-6zM194 321h6v6h-6zM392 321h6v6h-6zM584 321h6v6h-6zM194 327h6v6h-6zM386 327h6v6h-6zM590 327h6v6h-6zM194 333h6v6h-6zM368 333h12v6h-12zM590 333h6v6h-6zM194 339h12v6h-12zM356 339h6v6h-6zM590 339h12v6h-12zM200 345h6v6h-6zM350 345h6v6h-6zM590 345h12v6h-12zM200 351h12v6h-12zM338 351h12v6h-12zM590 351h12v6h-12zM212 357h12v6h-12zM314 357h24v6h-24zM596 357h12v6h-12zM212 363h18v6h-18zM236 363h84v6h-84zM596 363h12v6h-12zM206 369h36v6h-36zM278 369h24v6h-24zM596 369h12v6h-12zM200 375h42v6h-42zM596 375h6v6h-6zM200 381h12v6h-12zM224 381h12v6h-12zM596 381h6v6h-6zM200 387h12v6h-12zM230 387h6v6h-6zM590 387h12v6h-12zM200 393h12v6h-12zM230 393h6v6h-6zM590 393h12v6h-12zM200 399h36v6h-36zM590 399h6v6h-6zM206 405h24v6h-24zM590 405h6v6h-6zM206 411h30v6h-30zM590 411h6v6h-6zM206 417h30v6h-30zM590 417h6v6h-6zM194 423h54v6h-54zM584 423h6v6h-6zM182 429h24v6h-24zM248 429h12v6h-12zM584 429h6v6h-6zM176 435h18v6h-18zM266 435h6v6h-6zM584 435h6v6h-6zM164 441h12v6h-12zM278 441h6v6h-6zM578 441h6v6h-6zM140 447h30v6h-30zM284 447h6v6h-6zM572 447h6v6h-6zM140 453h24v6h-24zM290 453h6v6h-6zM572 453h6v6h-6zM146 459h12v6h-12zM296 459h6v6h-6zM566 459h6v6h-6zM296 465h6v6h-6zM560 465h6v6h-6zM302 471h12v6h-12zM554 471h6v6h-6zM314 477h12v6h-12zM548 477h6v6h-6zM326 483h12v6h-12zM542 483h6v6h-6zM338 489h6v6h-6zM410 489h12v6h-12zM434 489h6v6h-6zM536 489h6v6h-6zM344 495h6v6h-6zM392 495h18v6h-18zM446 495h6v6h-6zM524 495h6v6h-6zM458 501h6v6h-6zM494 501h24v6h-24z"/><path fill="#1f968b" d="M140 249h6v6h-6zM476 249h6v6h-6zM500 249h12v6h-12zM140 255h6v6h-6zM464 255h6v6h-6zM512 255h18v6h-18zM140 261h18v6h-18zM536 261h6v6h-6zM140 267h24v6h-24zM446 267h6v6h-6zM542 267h6v6h-6zM146 273h18v6h-18zM434 273h6v6h-6zM548 273h6v6h-6zM158 279h12v6h-12zM422 279h6v6h-6zM170 285h6v6h-6zM416 285h6v6h-6zM554 285h6v6h-6zM176 291h6v6h-6zM560 291h6v6h-6zM182 297h6v6h-6zM410 297h6v6h-6zM182 303h6v6h-6zM566 303h6v6h-6zM182 309h12v6h-12zM404 309h6v6h-6zM572 309h6v6h-6zM188 315h6v6h-6zM578 315h6v6h-6zM188 321h6v6h-6zM398 321h6v6h-6zM578 321h6v6h-6zM188 327h6v6h-6zM392 327h6v6h-6zM584 327h6v6h-6zM188 333h6v6h-6zM380 333h12v6h-12zM584 333h6v6h-6zM188 339h6v6h-6zM362 339h6v6h-6zM584 339h6v6h-6zM188 345h12v6h-12zM356 345h6v6h-6zM584 345h6v6h-6zM188 351h12v6h-12zM188 357h24v6h-24zM338 357h6v6h-6zM590 357h6v6h-6zM194 363h18v6h-18zM320 363h18v6h-18zM584 363h12v6h-12zM194 369h12v6h-12zM242 369h36v6h-36zM302 369h30v6h-30zM590 369h6v6h-6zM194 375h6v6h-6zM242 375h12v6h-12zM266 375h48v6h-48zM590 375h6v6h-6zM194 381h6v6h-6zM236 381h12v6h-12zM290 381h18v6h-18zM590 381h6v6h-6zM188 387h12v6h-12zM236 387h12v6h-12zM194 393h6v6h-6zM236 393h6v6h-6zM194 399h6v6h-6zM236 399h6v6h-6zM584 399h6v6h-6zM194 405h12v6h-12zM230 405h12v6h-12zM584 405h6v6h-6zM188 411h18v6h-18zM236 411h12v6h-12zM584 411h6v6h-6zM182 417h24v6h-24zM236 417h18v6h-18zM584 417h6v6h-6zM170 423h24v6h-24zM248 423h12v6h-12zM164 429h18v6h-18zM260 429h12v6h-12zM578 429h6v6h-6zM140 435h12v6h-12zM158 435h18v6h-18zM272 435h12v6h-12zM578 435h6v6h-6zM140 441h24v6h-24zM284 441h6v6h-6zM572 441h6v6h-6zM290 447h6v6h-6zM296 453h6v6h-6zM566 453h6v6h-6zM302 459h6v6h-6zM560 459h6v6h-6zM302 465h12v6h-12zM554 465h6v6h-6zM314 471h12v6h-12zM548 471h6v6h-6zM326 477h12v6h-12zM542 477h6v6h-6zM338 483h6v6h-6zM404 483h30v6h-30zM536 483h6v6h-6zM344 489h6v6h-6zM392 489h18v6h-18zM440 489h6v6h-6zM530 489h6v6h-6zM350 495h42v6h-42zM452 495h6v6h-6zM512 495h12v6h-12zM464 501h30v6h-30z"/><path fill="#1e9b8a" d="M482 249h18v6h-18zM470 255h6v6h-6zM506 255h6v6h-6zM458 261h12v6h-12zM518 261h18v6h-18zM452 267h6v6h-6zM140 273h6v6h-6zM440 273h6v6h-6zM542 273h6v6h-6zM140 279h18v6h-18zM428 279h6v6h-6zM548 279h6v6h-6zM158 285h12v6h-12zM422 285h6v6h-6zM164 291h12v6h-12zM416 291h6v6h-6zM554 291h6v6h-6zM170 297h12v6h-12zM560 297h6v6h-6zM170 303h12v6h-12zM410 303h6v6h-6zM176 309h6v6h-6zM566 309h6v6h-6zM176 315h12v6h-12zM404 315h6v6h-6zM572 315h6v6h-6zM182 321h6v6h-6zM182 327h6v6h-6zM398 327h6v6h-6zM578 327h6v6h-6zM182 333h6v6h-6zM392 333h6v6h-6zM578 333h6v6h-6zM182 339h6v6h-6zM368 339h12v6h-12zM578 339h6v6h-6zM182 345h6v6h-6zM362 345h6v6h-6zM578 345h6v6h-6zM182 351h6v6h-6zM350 351h6v6h-6zM584 351h6v6h-6zM182 357h6v6h-6zM344 357h6v6h-6zM584 357h6v6h-6zM182 363h12v6h-12zM338 363h6v6h-6zM182 369h12v6h-12zM332 369h12v6h-12zM584 369h6v6h-6zM182 375h12v6h-12zM254 375h12v6h-12zM314 375h24v6h-24zM584 375h6v6h-6zM182 381h12v6h-12zM248 381h12v6h-12zM266 381h24v6h-24zM308 381h12v6h-12zM584 381h6v6h-6zM182 387h6v6h-6zM248 387h6v6h-6zM284 387h36v6h-36zM584 387h6v6h-6zM182 393h12v6h-12zM242 393h6v6h-6zM584 393h6v6h-6zM182 399h12v6h-12zM242 399h12v6h-12zM176 405h18v6h-18zM242 405h12v6h-12zM176 411h12v6h-12zM248 411h6v6h-6zM578 411h6v6h-6zM170 417h12v6h-12zM254 417h6v6h-6zM578 417h6v6h-6zM140 423h30v6h-30zM260 423h12v6h-12zM578 423h6v6h-6zM140 429h24v6h-24zM272 429h12v6h-12zM152 435h6v6h-6zM284 435h12v6h-12zM572 435h6v6h-6zM290 441h12v6h-12zM296 447h12v6h-12zM566 447h6v6h-6zM302 453h18v6h-18zM308 459h18v6h-18zM314 465h18v6h-18zM326 471h12v6h-12zM338 477h6v6h-6zM404 477h18v6h-18zM536 477h6v6h-6zM344 483h6v6h-6zM392 483h12v6h-12zM434 483h6v6h-6zM530 483h6v6h-6zM350 489h42v6h-42zM446 489h6v6h-6zM524 489h6v6h-6zM458 495h6v6h-6zM488 495h24v6h-24z"/><path fill="#1fa088" d="M476 255h30v6h-30zM470 261h6v6h-6zM506 261h12v6h-12zM458 267h6v6h-6zM530 267h12v6h-12zM446 273h6v6h-6zM434 279h6v6h-6zM140 285h18v6h-18zM548 285h6v6h-6zM140 291h24v6h-24zM140 297h6v6h-6zM152 297h18v6h-18zM416 297h6v6h-6zM554 297h6v6h-6zM158 303h12v6h-12zM560 303h6v6h-6zM164 309h12v6h-12zM410 309h6v6h-6zM170 315h6v6h-6zM566 315h6v6h-6zM170 321h12v6h-12zM404 321h6v6h-6zM572 321h6v6h-6zM170 327h12v6h-12zM572 327h6v6h-6zM176 333h6v6h-6zM398 333h6v6h-6zM572 333h6v6h-6zM176 339h6v6h-6zM380 339h18v6h-18zM170 345h12v6h-12zM368 345h6v6h-6zM170 351h12v6h-12zM356 351h6v6h-6zM578 351h6v6h-6zM170 357h12v6h-12zM350 357h6v6h-6zM578 357h6v6h-6zM170 363h12v6h-12zM344 363h12v6h-12zM578 363h6v6h-6zM170 369h12v6h-12zM344 369h6v6h-6zM176 375h6v6h-6zM338 375h6v6h-6zM176 381h6v6h-6zM260 381h6v6h-6zM320 381h24v6h-24zM176 387h6v6h-6zM254 387h30v6h-30zM320 387h12v6h-12zM578 387h6v6h-6zM176 393h6v6h-6zM248 393h18v6h-18zM278 393h48v6h-48zM578 393h6v6h-6zM170 399h12v6h-12zM254 399h12v6h-12zM290 399h24v6h-24zM578 399h6v6h-6zM146 405h30v6h-30zM254 405h12v6h-12zM578 405h6v6h-6zM140 411h36v6h-36zM254 411h12v6h-12zM140 417h30v6h-30zM260 417h18v6h-18zM272 423h18v6h-18zM572 423h6v6h-6zM284 429h12v6h-12zM572 429h6v6h-6zM296 435h12v6h-12zM302 441h18v6h-18zM566 441h6v6h-6zM308 447h12v6h-12zM320 453h12v6h-12zM560 453h6v6h-6zM326 459h12v6h-12zM554 459h6v6h-6zM332 465h6v6h-6zM548 465h6v6h-6zM338 471h6v6h-6zM398 471h18v6h-18zM542 471h6v6h-6zM344 477h6v6h-6zM392 477h12v6h-12zM422 477h12v6h-12zM350 483h42v6h-42zM440 483h6v6h-6zM524 483h6v6h-6zM452 489h6v6h-6zM512 489h12v6h-12zM464 495h24v6h-24z"/><path fill="#20a386" d="M476 261h30v6h-30zM464 267h6v6h-6zM512 267h18v6h-18zM452 273h6v6h-6zM530 273h12v6h-12zM440 279h6v6h-6zM542 279h6v6h-6zM428 285h6v6h-6zM422 291h6v6h-6zM548 291h6v6h-6zM146 297h6v6h-6zM140 303h18v6h-18zM416 303h6v6h-6zM554 303h6v6h-6zM140 309h24v6h-24zM560 309h6v6h-6zM146 315h24v6h-24zM410 315h6v6h-6zM158 321h12v6h-12zM566 321h6v6h-6zM158 327h12v6h-12zM404 327h6v6h-6zM158 333h18v6h-18zM158 339h18v6h-18zM398 339h6v6h-6zM572 339h6v6h-6zM164 345h6v6h-6zM374 345h24v6h-24zM572 345h6v6h-6zM164 351h6v6h-6zM362 351h12v6h-12zM572 351h6v6h-6zM164 357h6v6h-6zM356 357h6v6h-6zM164 363h6v6h-6zM356 363h6v6h-6zM164 369h6v6h-6zM350 369h6v6h-6zM578 369h6v6h-6zM170 375h6v6h-6zM344 375h12v6h-12zM578 375h6v6h-6zM170 381h6v6h-6zM344 381h6v6h-6zM578 381h6v6h-6zM170 387h6v6h-6zM332 387h12v6h-12zM146 393h30v6h-30zM266 393h12v6h-12zM326 393h6v6h-6zM140 399h30v6h-30zM266 399h24v6h-24zM314 399h18v6h-18zM140 405h6v6h-6zM266 405h12v6h-12zM284 405h36v6h-36zM266 411h42v6h-42zM278 417h30v6h-30zM572 417h6v6h-6zM290 423h24v6h-24zM296 429h18v6h-18zM308 435h12v6h-12zM566 435h6v6h-6zM320 441h6v6h-6zM320 447h12v6h-12zM560 447h6v6h-6zM332 453h6v6h-6zM554 453h6v6h-6zM338 459h6v6h-6zM548 459h6v6h-6zM338 465h12v6h-12zM386 465h30v6h-30zM542 465h6v6h-6zM344 471h12v6h-12zM380 471h18v6h-18zM416 471h12v6h-12zM536 471h6v6h-6zM350 477h42v6h-42zM434 477h6v6h-6zM530 477h6v6h-6zM446 483h6v6h-6zM458 489h6v6h-6zM500 489h12v6h-12z"/><path fill="#22a884" d="M470 267h18v6h-18zM500 267h12v6h-12zM458 273h12v6h-12zM524 273h6v6h-6zM446 279h6v6h-6zM536 279h6v6h-6zM434 285h6v6h-6zM542 285h6v6h-6zM428 291h6v6h-6zM422 297h6v6h-6zM548 297h6v6h-6zM416 309h6v6h-6zM140 315h6v6h-6zM560 315h6v6h-6zM140 321h18v6h-18zM410 321h6v6h-6zM140 327h18v6h-18zM566 327h6v6h-6zM140 333h18v6h-18zM404 333h6v6h-6zM566 333h6v6h-6zM140 339h18v6h-18zM140 345h24v6h-24zM398 345h6v6h-6zM146 351h18v6h-18zM374 351h24v6h-24zM152 357h12v6h-12zM362 357h12v6h-12zM380 357h12v6h-12zM572 357h6v6h-6zM140 363h24v6h-24zM386 363h6v6h-6zM572 363h6v6h-6zM140 369h24v6h-24zM356 369h6v6h-6zM572 369h6v6h-6zM140 375h30v6h-30zM356 375h6v6h-6zM140 381h30v6h-30zM350 381h12v6h-12zM140 387h30v6h-30zM344 387h6v6h-6zM572 387h6v6h-6zM140 393h6v6h-6zM332 393h12v6h-12zM572 393h6v6h-6zM332 399h6v6h-6zM572 399h6v6h-6zM278 405h6v6h-6zM320 405h12v6h-12zM572 405h6v6h-6zM308 411h18v6h-18zM572 411h6v6h-6zM308 417h12v6h-12zM314 423h6v6h-6zM566 423h6v6h-6zM314 429h12v6h-12zM566 429h6v6h-6zM320 435h6v6h-6zM380 435h12v6h-12zM326 441h6v6h-6zM380 441h12v6h-12zM560 441h6v6h-6zM332 447h12v6h-12zM374 447h24v6h-24zM338 453h12v6h-12zM374 453h30v6h-30zM344 459h12v6h-12zM374 459h36v6h-36zM350 465h36v6h-36zM416 465h6v6h-6zM536 465h6v6h-6zM356 471h24v6h-24zM428 471h6v6h-6zM530 471h6v6h-6zM440 477h6v6h-6zM524 477h6v6h-6zM512 483h12v6h-12zM464 489h36v6h-36z"/><path fill="#26ad81" d="M488 267h12v6h-12zM470 273h12v6h-12zM512 273h12v6h-12zM452 279h12v6h-12zM530 279h6v6h-6zM440 285h6v6h-6zM536 285h6v6h-6zM542 291h6v6h-6zM422 303h6v6h-6zM548 303h6v6h-6zM554 309h6v6h-6zM416 315h6v6h-6zM560 321h6v6h-6zM410 327h6v6h-6zM404 339h6v6h-6zM566 339h6v6h-6zM404 345h6v6h-6zM566 345h6v6h-6zM140 351h6v6h-6zM398 351h6v6h-6zM566 351h6v6h-6zM140 357h12v6h-12zM374 357h6v6h-6zM392 357h12v6h-12zM362 363h24v6h-24zM392 363h6v6h-6zM362 369h36v6h-36zM362 375h30v6h-30zM572 375h6v6h-6zM362 381h30v6h-30zM572 381h6v6h-6zM350 387h18v6h-18zM374 387h12v6h-12zM344 393h12v6h-12zM338 399h6v6h-6zM332 405h6v6h-6zM326 411h6v6h-6zM320 417h6v6h-6zM374 417h18v6h-18zM566 417h6v6h-6zM320 423h6v6h-6zM374 423h18v6h-18zM326 429h6v6h-6zM374 429h24v6h-24zM326 435h12v6h-12zM368 435h12v6h-12zM392 435h6v6h-6zM560 435h6v6h-6zM332 441h12v6h-12zM362 441h18v6h-18zM392 441h6v6h-6zM344 447h30v6h-30zM398 447h6v6h-6zM554 447h6v6h-6zM350 453h24v6h-24zM404 453h6v6h-6zM548 453h6v6h-6zM356 459h18v6h-18zM410 459h12v6h-12zM542 459h6v6h-6zM422 465h6v6h-6zM434 471h6v6h-6zM446 477h6v6h-6zM518 477h6v6h-6zM452 483h12v6h-12zM506 483h6v6h-6z"/><path fill="#2ab07f" d="M482 273h30v6h-30zM464 279h12v6h-12zM518 279h12v6h-12zM446 285h6v6h-6zM530 285h6v6h-6zM434 291h6v6h-6zM536 291h6v6h-6zM428 297h6v6h-6zM542 297h6v6h-6zM422 309h6v6h-6zM548 309h6v6h-6zM554 315h6v6h-6zM416 321h6v6h-6zM560 327h6v6h-6zM410 333h6v6h-6zM560 333h6v6h-6zM560 339h6v6h-6zM566 357h6v6h-6zM398 363h6v6h-6zM566 363h6v6h-6zM398 369h6v6h-6zM566 369h6v6h-6zM392 375h6v6h-6zM566 375h6v6h-6zM392 381h6v6h-6zM368 387h6v6h-6zM386 387h12v6h-12zM566 387h6v6h-6zM356 393h36v6h-36zM566 393h6v6h-6zM344 399h48v6h-48zM566 399h6v6h-6zM338 405h6v6h-6zM356 405h36v6h-36zM566 405h6v6h-6zM332 411h6v6h-6zM368 411h30v6h-30zM566 411h6v6h-6zM326 417h6v6h-6zM368 417h6v6h-6zM392 417h6v6h-6zM326 423h12v6h-12zM368 423h6v6h-6zM392 423h12v6h-12zM560 423h6v6h-6zM332 429h6v6h-6zM362 429h12v6h-12zM398 429h6v6h-6zM560 429h6v6h-6zM338 435h12v6h-12zM356 435h12v6h-12zM398 435h6v6h-6zM344 441h18v6h-18zM398 441h12v6h-12zM554 441h6v6h-6zM404 447h6v6h-6zM548 447h6v6h-6zM410 453h6v6h-6zM542 453h6v6h-6zM536 459h6v6h-6zM428 465h6v6h-6zM530 465h6v6h-6zM440 471h6v6h-6zM524 471h6v6h-6zM512 477h6v6h-6zM464 483h42v6h-42z"/><path fill="#31b57b" d="M476 279h42v6h-42zM452 285h12v6h-12zM518 285h12v6h-12zM440 291h6v6h-6zM530 291h6v6h-6zM434 297h6v6h-6zM536 297h6v6h-6zM428 303h6v6h-6zM542 303h6v6h-6zM554 321h6v6h-6zM410 339h6v6h-6zM560 345h6v6h-6zM404 351h6v6h-6zM560 351h6v6h-6zM404 357h6v6h-6zM398 375h6v6h-6zM566 381h6v6h-6zM392 393h6v6h-6zM392 399h6v6h-6zM344 405h12v6h-12zM392 405h6v6h-6zM338 411h30v6h-30zM398 411h6v6h-6zM560 411h6v6h-6zM332 417h12v6h-12zM356 417h12v6h-12zM398 417h6v6h-6zM560 417h6v6h-6zM338 423h6v6h-6zM350 423h18v6h-18zM404 423h6v6h-6zM338 429h24v6h-24zM404 429h6v6h-6zM350 435h6v6h-6zM404 435h6v6h-6zM554 435h6v6h-6zM548 441h6v6h-6zM410 447h6v6h-6zM542 447h6v6h-6zM416 453h6v6h-6zM536 453h6v6h-6zM422 459h12v6h-12zM530 459h6v6h-6zM434 465h6v6h-6zM524 465h6v6h-6zM446 471h6v6h-6zM518 471h6v6h-6zM452 477h12v6h-12zM506 477h6v6h-6z"/><path fill="#38b977" d="M464 285h54v6h-54zM446 291h6v6h-6zM524 291h6v6h-6zM530 297h6v6h-6zM536 303h6v6h-6zM428 309h6v6h-6zM542 309h6v6h-6zM422 315h6v6h-6zM548 315h6v6h-6zM416 327h6v6h-6zM554 327h6v6h-6zM554 333h6v6h-6zM410 345h6v6h-6zM410 351h6v6h-6zM560 357h6v6h-6zM404 363h6v6h-6zM560 363h6v6h-6zM560 369h6v6h-6zM560 375h6v6h-6zM398 381h6v6h-6zM398 387h6v6h-6zM398 393h6v6h-6zM398 399h6v6h-6zM398 405h6v6h-6zM560 405h6v6h-6zM344 417h12v6h-12zM404 417h6v6h-6zM344 423h6v6h-6zM554 423h6v6h-6zM554 429h6v6h-6zM410 435h6v6h-6zM548 435h6v6h-6zM410 441h6v6h-6zM416 447h6v6h-6zM422 453h6v6h-6zM434 459h6v6h-6zM440 465h6v6h-6zM518 465h6v6h-6zM512 471h6v6h-6zM464 477h42v6h-42z"/><path fill="#3fbc73" d="M452 291h12v6h-12zM488 291h36v6h-36zM440 297h6v6h-6zM518 297h12v6h-12zM434 303h6v6h-6zM530 303h6v6h-6zM536 309h6v6h-6zM542 315h6v6h-6zM422 321h6v6h-6zM548 321h6v6h-6zM416 333h6v6h-6zM554 339h6v6h-6zM554 345h6v6h-6zM554 351h6v6h-6zM410 357h6v6h-6zM404 369h6v6h-6zM404 375h6v6h-6zM560 381h6v6h-6zM560 387h6v6h-6zM560 393h6v6h-6zM404 399h6v6h-6zM560 399h6v6h-6zM404 405h6v6h-6zM404 411h6v6h-6zM554 411h6v6h-6zM554 417h6v6h-6zM410 423h6v6h-6zM410 429h6v6h-6zM548 429h6v6h-6zM416 441h6v6h-6zM542 441h6v6h-6zM422 447h6v6h-6zM536 447h6v6h-6zM428 453h6v6h-6zM530 453h6v6h-6zM440 459h6v6h-6zM524 459h6v6h-6zM446 465h6v6h-6zM512 465h6v6h-6zM452 471h12v6h-12zM500 471h12v6h-12z"/><path fill="#48c16e" d="M464 291h24v6h-24zM446 297h6v6h-6zM500 297h18v6h-18zM440 303h6v6h-6zM518 303h12v6h-12zM434 309h6v6h-6zM530 309h6v6h-6zM428 315h6v6h-6zM536 315h6v6h-6zM542 321h6v6h-6zM422 327h6v6h-6zM548 327h6v6h-6zM548 333h6v6h-6zM416 339h6v6h-6zM416 345h6v6h-6zM554 357h6v6h-6zM410 363h6v6h-6zM554 363h6v6h-6zM554 369h6v6h-6zM404 381h6v6h-6zM404 387h6v6h-6zM404 393h6v6h-6zM554 405h6v6h-6zM410 411h6v6h-6zM410 417h6v6h-6zM548 423h6v6h-6zM416 429h6v6h-6zM416 435h6v6h-6zM542 435h6v6h-6zM422 441h6v6h-6zM536 441h6v6h-6zM428 447h6v6h-6zM530 447h6v6h-6zM434 453h12v6h-12zM524 453h6v6h-6zM446 459h6v6h-6zM518 459h6v6h-6zM452 465h6v6h-6zM506 465h6v6h-6zM464 471h36v6h-36z"/><path fill="#52c569" d="M452 297h12v6h-12zM482 297h18v6h-18zM446 303h6v6h-6zM506 303h12v6h-12zM524 309h6v6h-6zM530 315h6v6h-6zM542 327h6v6h-6zM422 333h6v6h-6zM548 339h6v6h-6zM548 345h6v6h-6zM416 351h6v6h-6zM548 351h6v6h-6zM548 357h6v6h-6zM410 369h6v6h-6zM554 375h6v6h-6zM554 381h6v6h-6zM554 387h6v6h-6zM554 393h6v6h-6zM410 399h6v6h-6zM554 399h6v6h-6zM410 405h6v6h-6zM416 417h6v6h-6zM548 417h6v6h-6zM416 423h6v6h-6zM542 429h6v6h-6zM422 435h6v6h-6zM536 435h6v6h-6zM428 441h6v6h-6zM530 441h6v6h-6zM434 447h6v6h-6zM524 447h6v6h-6zM518 453h6v6h-6zM452 459h6v6h-6zM512 459h6v6h-6zM458 465h12v6h-12zM488 465h18v6h-18z"/><path fill="#5ac864" d="M464 297h18v6h-18zM488 303h18v6h-18zM440 309h6v6h-6zM512 309h12v6h-12zM434 315h6v6h-6zM524 315h6v6h-6zM428 321h6v6h-6zM536 321h6v6h-6zM542 333h6v6h-6zM416 357h6v6h-6zM548 363h6v6h-6zM548 369h6v6h-6zM410 375h6v6h-6zM548 375h6v6h-6zM410 381h6v6h-6zM410 387h6v6h-6zM410 393h6v6h-6zM548 405h6v6h-6zM416 411h6v6h-6zM548 411h6v6h-6zM542 423h6v6h-6zM422 429h6v6h-6zM536 429h6v6h-6zM428 435h6v6h-6zM524 441h6v6h-6zM440 447h6v6h-6zM518 447h6v6h-6zM446 453h6v6h-6zM506 453h12v6h-12zM458 459h6v6h-6zM494 459h18v6h-18zM470 465h18v6h-18z"/><path fill="#65cb5e" d="M452 303h12v6h-12zM476 303h12v6h-12zM446 309h6v6h-6zM494 309h18v6h-18zM506 315h18v6h-18zM524 321h12v6h-12zM428 327h6v6h-6zM536 327h6v6h-6zM536 333h6v6h-6zM422 339h6v6h-6zM542 339h6v6h-6zM422 345h6v6h-6zM542 345h6v6h-6zM542 351h6v6h-6zM542 357h6v6h-6zM416 363h6v6h-6zM542 363h6v6h-6zM542 369h6v6h-6zM548 381h6v6h-6zM548 387h6v6h-6zM548 393h6v6h-6zM416 399h6v6h-6zM548 399h6v6h-6zM416 405h6v6h-6zM422 417h6v6h-6zM542 417h6v6h-6zM422 423h6v6h-6zM536 423h6v6h-6zM428 429h6v6h-6zM530 429h6v6h-6zM530 435h6v6h-6zM434 441h6v6h-6zM518 441h6v6h-6zM446 447h6v6h-6zM512 447h6v6h-6zM452 453h12v6h-12zM494 453h12v6h-12zM464 459h30v6h-30z"/><path fill="#70cf57" d="M464 303h12v6h-12zM452 309h6v6h-6zM482 309h12v6h-12zM440 315h6v6h-6zM494 315h12v6h-12zM434 321h6v6h-6zM500 321h24v6h-24zM524 327h12v6h-12zM428 333h6v6h-6zM530 333h6v6h-6zM530 339h12v6h-12zM530 345h12v6h-12zM422 351h6v6h-6zM530 351h12v6h-12zM530 357h12v6h-12zM536 363h6v6h-6zM416 369h6v6h-6zM536 369h6v6h-6zM542 375h6v6h-6zM542 381h6v6h-6zM416 393h6v6h-6zM422 411h6v6h-6zM542 411h6v6h-6zM428 417h6v6h-6zM428 423h6v6h-6zM434 435h6v6h-6zM524 435h6v6h-6zM440 441h12v6h-12zM512 441h6v6h-6zM452 447h6v6h-6zM494 447h18v6h-18zM464 453h6v6h-6zM482 453h12v6h-12z"/><path fill="#7ad151" d="M458 309h24v6h-24zM446 315h6v6h-6zM488 315h6v6h-6zM494 321h6v6h-6zM434 327h6v6h-6zM500 327h24v6h-24zM500 333h30v6h-30zM428 339h6v6h-6zM506 339h24v6h-24zM506 345h24v6h-24zM506 351h24v6h-24zM422 357h6v6h-6zM512 357h18v6h-18zM518 363h18v6h-18zM524 369h12v6h-12zM416 375h6v6h-6zM530 375h12v6h-12zM416 381h6v6h-6zM536 381h6v6h-6zM416 387h6v6h-6zM542 387h6v6h-6zM542 393h6v6h-6zM422 399h6v6h-6zM542 399h6v6h-6zM422 405h6v6h-6zM542 405h6v6h-6zM428 411h6v6h-6zM536 417h6v6h-6zM434 423h6v6h-6zM530 423h6v6h-6zM434 429h6v6h-6zM524 429h6v6h-6zM440 435h12v6h-12zM512 435h12v6h-12zM452 441h6v6h-6zM500 441h12v6h-12zM458 447h12v6h-12zM482 447h12v6h-12zM470 453h12v6h-12z"/><path fill="#86d549" d="M452 315h6v6h-6zM476 315h12v6h-12zM440 321h6v6h-6zM482 321h12v6h-12zM488 327h12v6h-12zM488 333h12v6h-12zM488 339h18v6h-18zM428 345h6v6h-6zM494 345h12v6h-12zM494 351h12v6h-12zM506 357h6v6h-6zM422 363h6v6h-6zM512 363h6v6h-6zM518 369h6v6h-6zM524 375h6v6h-6zM530 381h6v6h-6zM536 387h6v6h-6zM422 393h6v6h-6zM428 405h6v6h-6zM536 405h6v6h-6zM536 411h6v6h-6zM434 417h6v6h-6zM524 423h6v6h-6zM440 429h6v6h-6zM518 429h6v6h-6zM452 435h6v6h-6zM506 435h6v6h-6zM458 441h6v6h-6zM488 441h12v6h-12zM470 447h12v6h-12z"/><path fill="#93d741" d="M458 315h18v6h-18zM446 321h12v6h-12zM476 321h6v6h-6zM440 327h6v6h-6zM482 327h6v6h-6zM434 333h6v6h-6zM482 333h6v6h-6zM482 339h6v6h-6zM482 345h12v6h-12zM428 351h6v6h-6zM488 351h6v6h-6zM494 357h12v6h-12zM506 363h6v6h-6zM422 369h6v6h-6zM512 369h6v6h-6zM422 375h6v6h-6zM518 375h6v6h-6zM422 381h6v6h-6zM524 381h6v6h-6zM422 387h6v6h-6zM530 387h6v6h-6zM536 393h6v6h-6zM428 399h6v6h-6zM536 399h6v6h-6zM434 411h6v6h-6zM530 411h6v6h-6zM530 417h6v6h-6zM440 423h6v6h-6zM446 429h6v6h-6zM506 429h12v6h-12zM458 435h6v6h-6zM494 435h12v6h-12zM464 441h24v6h-24z"/><path fill="#9dd93b" d="M458 321h18v6h-18zM446 327h6v6h-6zM476 327h6v6h-6zM440 333h6v6h-6zM476 333h6v6h-6zM434 339h6v6h-6zM476 339h6v6h-6zM476 345h6v6h-6zM482 351h6v6h-6zM428 357h6v6h-6zM488 357h6v6h-6zM494 363h12v6h-12zM506 369h6v6h-6zM512 375h6v6h-6zM518 381h6v6h-6zM524 387h6v6h-6zM428 393h6v6h-6zM530 393h6v6h-6zM530 399h6v6h-6zM434 405h6v6h-6zM530 405h6v6h-6zM440 417h6v6h-6zM524 417h6v6h-6zM446 423h6v6h-6zM518 423h6v6h-6zM452 429h6v6h-6zM500 429h6v6h-6zM464 435h30v6h-30z"/><path fill="#aadc32" d="M452 327h24v6h-24zM446 333h6v6h-6zM464 333h12v6h-12zM470 339h6v6h-6zM434 345h6v6h-6zM476 351h6v6h-6zM482 357h6v6h-6zM428 363h6v6h-6zM488 363h6v6h-6zM500 369h6v6h-6zM506 375h6v6h-6zM512 381h6v6h-6zM428 387h6v6h-6zM518 387h6v6h-6zM524 393h6v6h-6zM434 399h6v6h-6zM524 399h6v6h-6zM440 405h6v6h-6zM524 405h6v6h-6zM440 411h6v6h-6zM524 411h6v6h-6zM446 417h6v6h-6zM518 417h6v6h-6zM452 423h6v6h-6zM506 423h12v6h-12zM458 429h42v6h-42z"/><path fill="#b8de29" d="M452 333h12v6h-12zM440 339h6v6h-6zM464 339h6v6h-6zM470 345h6v6h-6zM434 351h6v6h-6zM470 351h6v6h-6zM476 357h6v6h-6zM482 363h6v6h-6zM428 369h6v6h-6zM488 369h12v6h-12zM428 375h6v6h-6zM500 375h6v6h-6zM428 381h6v6h-6zM506 381h6v6h-6zM512 387h6v6h-6zM434 393h6v6h-6zM518 393h6v6h-6zM440 399h6v6h-6zM518 399h6v6h-6zM446 411h6v6h-6zM518 411h6v6h-6zM452 417h6v6h-6zM512 417h6v6h-6zM458 423h12v6h-12zM500 423h6v6h-6z"/><path fill="#c2df23" d="M446 339h18v6h-18zM440 345h6v6h-6zM458 345h12v6h-12zM464 351h6v6h-6zM434 357h6v6h-6zM470 357h6v6h-6zM476 363h6v6h-6zM482 369h6v6h-6zM494 375h6v6h-6zM500 381h6v6h-6zM434 387h6v6h-6zM506 387h6v6h-6zM440 393h6v6h-6zM506 393h12v6h-12zM446 399h6v6h-6zM512 399h6v6h-6zM446 405h6v6h-6zM518 405h6v6h-6zM452 411h6v6h-6zM512 411h6v6h-6zM458 417h6v6h-6zM506 417h6v6h-6zM470 423h30v6h-30z"/><path fill="#d0e11c" d="M446 345h12v6h-12zM440 351h6v6h-6zM458 351h6v6h-6zM440 357h6v6h-6zM464 357h6v6h-6zM434 363h6v6h-6zM470 363h6v6h-6zM434 369h6v6h-6zM476 369h6v6h-6zM434 375h6v6h-6zM482 375h12v6h-12zM434 381h6v6h-6zM494 381h6v6h-6zM440 387h6v6h-6zM500 387h6v6h-6zM446 393h6v6h-6zM500 393h6v6h-6zM452 399h6v6h-6zM506 399h6v6h-6zM452 405h12v6h-12zM506 405h12v6h-12zM458 411h12v6h-12zM506 411h6v6h-6zM464 417h42v6h-42z"/><path fill="#dde318" d="M446 351h12v6h-12zM446 357h18v6h-18zM440 363h6v6h-6zM464 363h6v6h-6zM440 369h6v6h-6zM470 369h6v6h-6zM440 375h6v6h-6zM470 375h12v6h-12zM440 381h6v6h-6zM476 381h18v6h-18zM446 387h12v6h-12zM482 387h18v6h-18zM452 393h18v6h-18zM494 393h6v6h-6zM458 399h12v6h-12zM494 399h12v6h-12zM464 405h6v6h-6zM500 405h6v6h-6zM470 411h36v6h-36z"/><path fill="#e7e419" d="M446 363h18v6h-18zM446 369h6v6h-6zM458 369h12v6h-12zM446 375h24v6h-24zM446 381h30v6h-30zM458 387h24v6h-24zM470 393h24v6h-24zM470 399h24v6h-24zM470 405h30v6h-30z"/><path fill="#f4e61e" d="M452 369h6v6h-6z"/></g><clipPath id="cx"><rect x="140" y="111" width="486" height="486"/></clipPath><path clip-path="url(#cx)" fill="none" stroke="#000" stroke-width="2.1" stroke-dasharray="7.2 3.1" d="M329 185.3l-6 3.4l-2.3 3.3l-0.3 6l2.6 4.4l3 1.6l3 0.7l3.1-0.7l2.9-1.5l2.5-4.5l0.2-6l-2.7-6.5l-6-0.2M323 178l-6 5.8l-4.8 8.2l-0.8 6l1.9 6l3.7 4.4l6 3.4l6 0.7l6-0.6l6-3.3l4.5-4.6l1.7-6l0.3-6l-2.2-6l-4.3-6l-6-3.6l-6 0l-6 1.6M329 167.3l-6 1.7l-6 4l-6 7.6l-3.3 5.4l-2.3 6l-1 6l0.6 6l2.5 6l3.5 3.1l6 4l6 2.1l12 0.9l6-1.8l3.4-2.3l13.2-12l4.2-6l1.1-6l-4.1-6l-5.4-6l-6.4-6.5l-6-4.4l-6-2.1l-6 0.3M383 184.4l-4.2 1.6l-1.8 1.6l-6 2.4l-2.8 2l3.7 6l5.1 3.4l6 0.9l12-3.6l0.9-0.7l3.7-6l-1.7-6l-2.9-1.3l-6-1.1l-6 0.8M335 154.7l-12 3.4l-6 2.7l-6 3.9l-6.8 9.3l-3.2 6l-4.7 12l-3.2 6l-0.6 6l3 6l3.5 4.1l1.9 1.9l16.1 9.4l6 2.2l12 2.5l6-1.5l6-2.2l12-0.3l6-1.8l6 2.4l6 1.5l6-2l3.7-4.2l14.3-13.2l10.2-10.8l3.4-6l0-6l-3.2-6l-4.4-4l-6-1.8l-12-2.5l-6-2l-6-0.8l-6 0.4l-4.9-1.3l-7.1-3.3l-12-7l-6-2.6l-6-0.4M323 245.1l-6 3.9l-1.5 3l1.5 6.4l6 3.5l6-1.6l2-2.3l1.2-6l-3.2-5.7l-6-1.2M245 491.1l-2.6 6.9l2.6 6.1l6 4.4l6-3l0.9-1.5l1.2-6l-2.1-6.7l-6-4.6l-6 4.4M329 137l-6 2.7l-6 1.3l-12 6.2l-11.3 8.8l-3.8 6l-2.9 12.1l-3.9 5.9l-8.1 8.2l-6 3l-12 4.3l-6 2.8l-4.3 5.7l-5.8 12l-1.4 6l4.3 24l2.4 6l-0.5 6l-2.1 6l-1.7 12l1.3 6l1.8 4l1.9 2l8.7 6l13.4 5.2l6 0.8l6-1.3l6 0.2l12-1.9l12-3.6l6 2.7l12-1.3l1.8-0.8l20.9-12l13.3-11.5l10.4-12.5l3.2-6l4.6-6l6.7-6l4.7-6l6.7-12l11.7-11.2l9.2-6.8l2.8-2.6l2.6-3.4l1-6l-1.2-6l-2.7-6l-5.7-9.5l-2.2-2.5l-9.8-6.6l-6-2.2l-6-4.7l-12-4.2l-6-3.3l-6-1.3l-6-5.3l-12-7.5l-6 1.2l-12 1l-6 1.9M288.6 228l4.4-1.7l6 2.2l8.4 5.5l0.5 6l-1.6 6l-2.6 6l-0.7 6l0.8 6l-4.8 5l-6 0.9l-16.6-5.9l-4.9-6l-1.2-6l0.8-6l3.1-6l5.4-6l9-6M245 478.5l-6 3.1l-3.3 4.4l-2.9 6l0.1 12l1.1 6l3.6 6l1.4 1.5l6 3.8l6 0.5l6-0.4l6-4.3l3.2-7.1l2.2-12l-1-6l-4.4-7.8l-6-5.1l-6-1.6l-6 1M359 575.8l-1.4 0.2l1.4 0.3l2.2-0.3l-2.2-0.2M322.7 108l0 6l-5.7 0.8l-6 2.2l-6 4l-6 0.8l-9.6 10.2l-7.2 6l-8.5 12l-6.7 6l-2.1 6l-1.9 3l-11.9 15l-5.9 6l-6.2 2.8l-2.5 3.2l-3.4 6l-1.2 6l-5.7 12l0.4 6l1.4 6l0.3 12l2.6 12l-1.6 12l0.5 6l-1 18l2.3 6l1.9 2.6l6 6.4l6 3.9l18 3.4l6 0.5l12 2.6l12 1l6 1.4l12-1l6-1.2l12-4.7l12-5.4l6-4.6l17.3-10.9l6.3-6l3.4-6l15-19.8l6-6l3.2-4.2l14.6-24l23.4-12l6.9-6l2.2-6l-2.3-9.4l-1-2.6l-7.1-12l-1.5-6l-6.9-12l-5.3-12l-6.5-6l-2.3-6l-5.4-5.2l-6-2l-6-4.8l-4.6-6l0-6M239 471.9l-6 4.2l-3.3 3.9l-3.4 6l-1.7 6l-0.3 12l0.3 6l1.9 6l2.5 6l4 5.8l6 6.1l6 3.9l6 2.2l6 0.8l6 6l2.1-0.8l0.8-6l3.1-4.2l3.4-7.8l2.6-12l0.6-18l-0.7-6l-2.3-6l-3.6-5.6l-6.5-6.4l-5.5-2.8l-6-1.4l-6 0l-6 2.1M269 575.9l-5.2 6.1l5.2 4.3l3.8-4.3l-3.8-6.1M470.4 600l0-6l2.4-6l1.6-6l-1.3-6l-7.5-6l0.5-6l-5.1-7.8l-4-4.2l-8-6.8l-6-2l-8.1 2.8l-3.9 2.3l-6 0.3l-12 4.6l-6 1.5l-12-3l-6 0l-6-0.9l-24-6.3l-12-0.4l-6 0.6l-5.1 1.3l-6.9 2.6l-6 0.6l-6 3.7l-6 2.2l-6 4l-6 0l-6 1l-3.8 9.9l-2.2 1l-6 1.1l-3.8 3.9l-1.6 6l-0.3 6l6.2 6l0 6M279.2 108l0 6l-5.6 6l-4.6 6.3l-6 2.6l-3.4 3.1l-3.8 6l-2.9 6l-5.8 6l-3.7 6l-5.1 6l-2.4 6l-8.9 10l-1.3 2l-10.5 24l-1.8 6l-0.2 6l0.8 18l-0.5 6l3.9 18l-0.7 6l0.3 6l-1.3 12l1.1 6l2.1 6l6.2 12l7.9 8.1l6 5l6 0.4l12 1.9l6 0.4l6-0.6l6 0.5l24 4.6l6 0.5l12-0.8l18-4.5l6-3.9l6-5.7l6-3.1l18-11.8l6-5.2l3.2-3.8l8.2-12l2.5-6l18.5-24l9.6-10.7l6-3.1l6-1.6l12-5.8l6-3.7l6.3-5.1l4-6l1.4-6l-0.1-6l-1.9-12l-6.1-12l-2.2-6l-0.7-6l-2.4-6l-0.7-6l4-12l-2.9-12l-4.7-6l-6.8-6l0-6M582.4 600l0.3-12l-3.4-6l5-6l-4.1-6l0.4-6l-5.6-4.9l-6-1.7l-6-2.8l-6-0.5l-12-6.5l-6 2.8l-6-0.3l-12-3l-12-0.7l-6-0.9l-6-2.3l-12-1.8l-6-2.2l-6-3.9l-3.4-1.3l-14.6-4.8l-6-1l-12 0.3l-6 2.1l-6 2.8l-12 3.2l-24-0.2l-6-1l-6-1.6l-18-2.7l-6 0.7l-24-0.7l-18 1.2l-12-1.6l-6-3.8l-3.7-4.9l-4.4-12l-1.8-12l-3-12l-2.5-6l-2.6-4.5l-6-6.2l-6-3.3l-6-2.5l-6-1.4l-6-0.6l-6 1l-10.2 5.5l-5.7 6l-2.1 3l-1.9 3l-2.6 6l-1.8 6l-2.8 18l0.3 6l1.4 6l-3.8 12l1.4 6l-4.7 6l-4.4 12l-0.9 6l-4.2 4l-1 2l-7.2 6l0.7 12l-0.3 12M245 108l0 6l-5.8 12l-9.3 12l-2.7 6l-7.2 12l-5.4 6l-3.4 6l-7.4 18l-3.5 6l-3.3 18l0.2 6l-1.1 6l2.6 24l3.8 12l1.3 12l1.7 6l1.7 12l2 6l11.8 24.5l4.1 5.5l5.7 6l2.2 1.8l6 2.5l6 0.1l6-1.1l12-0.8l12-1.5l18 3.5l6 0.3l6 1.8l6 0.8l6 0l18-3.5l9.1-3.9l8.9-6.9l6-4l6-3l6-5.2l6-3l12-10.8l2.2-3.1l7.8-18l2-3.3l12-14.3l6-5.5l6-3.9l6-2.1l6-0.8l6-2.4l6-3.7l15.7-12l11.7-12l3.6-12l1-6l-1-6l1.1-6l3.9-5.1l6 2.8l6 1.2l6-4.7l6-1.2l6-0.4l7-4.6l-0.9-6l-0.1-6.4l6-2.5l6 4.5l6 6.2l6 3.7l6-2.4l3.8-3.1l2.2-2.6l5.7 2.6l0.3 0.6l6 1.3l6-1.2l6 3.3l6-1.3l2.1-2.7l0-6l3.9-5l2-1l2.7-6l1.3-0.9l6 0.9l-4.6 6l-1.1 6l5.7 1.9l6 0.4l12-7.2l6 0M629 115.1l-6 0l-0.5-1.1l0-6M629 148.8l-6 0l-6 0.9l-6-5.7l6-7l6 6.5l6 0M571.6 162l3.4-1.7l6-0.4l2.7 2.1l-8.7 4.1l-3.4-4.1M500.7 174l2.3-1l0.8 1l-0.8 4.2l-2.3-4.2M629 521.4l-6 0l-6 1.2l-0.8-0.6l-3.6-6l-1.6-1.1l-6-0.9l-6 2l-6-2.9l-6 0.1l-6 3.4l-6-0.1l-6-2.6l-6 0l-6 3.7l-6 2.6l-6 0.8l-6 2.9l-6-0.3l-12 3.5l-12 1.1l-12-1.1l-6 0.3l-6-0.9l-12-2.6l-12-3.5l-6-0.5l-6-2l-6-1.1l-6-0.5l-12 5.5l-6 1.7l-6 2.6l-12 1.8l-6-0.1l-6-1.3l-12-4.8l-18 0.4l-12-0.3l-18-2.4l-18-4.5l-6-3.1l-6-4.3l-3.8-3.5l-2.2-3.1l-3.9-8.9l-3.6-12l-3.1-6l-4.5-6l-2.9-2.9l-6-4.3l-6-2.7l-12-4l-6-0.9l-6 0.8l-12 4.3l-12 7.7l-2.1 2l-7.4 12l-5.8 18l-10.2 12l-3.1 6l-5.3 6l-3.4 6l-4.7 4.6l-6 2.8l-6 8.3l-4.5 2.3l-3.1 6l-10.4 7.8l-6 0M210.1 108l0 6l-4.9 12l-6.3 12l-1.9 2.2l-4.3 9.8l-4.4 6l-2.3 6l-1.5 6l-5.5 8.6l-1.2 3.4l1.5 6l-4.8 12l-1.9 18l2.6 12l5 12l2.5 12l5.5 12l1 6l15.5 36l3.8 12l2.9 6l2 6l3.9 6l3.7 4.1l6 4.4l6 2.8l6 1.3l6 0l18-4l6-0.1l6-1.3l6 0.3l24 3.4l12 0.9l12-1.4l6-1.6l6-2.6l6-2.9l12-8.6l12-5.7l12-6.9l12-10.5l4.3-7.6l2-6l5.3-12l6.4-8.5l3.5-3.5l8.5-5.3l6-2.9l6-1.9l12-5.2l18-14.7l12-7.3l6-2.3l6-0.3l12-2.2l24 1.4l12 2.2l9.2 2.5l2.8 1.7l6 6.6l6 4.8l3.5 4.9l2.5 5.4l6 2.1l1.1-1.5l4.9-2.5l3.4 2.5l2.6 4.5l6-1l6 0.2l6 1.5l6-2.4l3 3.2l3 1.1l6 1.8l6 0M605 267.3l-0.5 2.7l0.5 0.8l0.7-0.8l-0.7-2.7M629 464.3l-6 0l-3.2-2.3l-8.8-2.3l-6 1.6l-6 2.4l-6 1.3l-6 3.9l-6 8.7l-6 1.8l-6 3.3l-12 13.9l-18 10.8l-6 1.4l-6 3l-6 2.2l-36 1.9l-6-0.1l-12-1.8l-12-2.9l-12-4.1l-6-0.7l-12 2l-18 8.8l-6 0.5l-6-0.6l-12-3.2l-12-1.6l-12 1l-12-1.2l-6.9-2l-17.1-9.3l-18-5.8l-6-4.6l-2.6-4.3l-5.6-12l-9.8-14.3l-12-9.1l-12-4.4l-6-1.8l-6-0.8l-12 1.9l-18 6l-10 4.5l-8.3 6l-6 6l-5.7 7.6l-6.4 4.4l-3.2 6l-8.4 6.7l-6 3.4l-6 2.2l-6 4.4l-6 2l-6 0M137 243.7l6 0l6 1l2.2 1.3l5.6 6l4.2 2.4l2.9 3.6l11.1 18l2.6 6l7.4 8l7 10l5 12.4l1.2 5.6l0.5 6l4.7 18l5.6 8.3l6 4.7l8 5l4 5.9l6 0.3l18-3.9l6 0.6l6-0.6l6-2l6 0.5l6 1.6l12 0.9l12-0.6l11.2-2.7l12.8-1l6-1.8l12-7.1l18-12.2l6-2.9l13.1-5l4.9-2.5l6-4.1l8.2-11.4l3.2-6l4.2-12l3.5-6l4.9-6.8l6-5l6-3.7l6-2.1l12-5.6l24-15.9l6-3.2l6-1.6l6-0.3l12 0.8l12 3.6l6 2.4l12 3.1l6 2.5l6 3.6l4.3 4.2l4.5 6l9.2 15.8l6.9 8.2l5.1 7.5l9.4 10.5l4.1 6l3 6l3.5 12l4.6 6l3 12l2.4 4.6l1.5 1.4l2.5 6l-3.2 6l-1.7 6l-3.2 6l-0.3 12l-1.6 3.6l-1.9 8.4l-0.6 6l-3.5 7.8l-1.1 4.2l-3 6l-1.7 6l-8.3 12l-3 6l-15.1 18l-9.8 10l-18.7 14l-5.3 2.7l-12 3.3l-12 1.1l-12 1.9l-6-0.1l-6 0.7l-6-0.2l-6-1l-12-3.4l-18-7.6l-6-3.5l-6-0.7l-6 1.7l-6 3l-6 3.9l-6 1l-6 2.3l-24-1.1l-6 1.2l-6 0.2l-6-0.9l-24-16l-24-10.2l-2.5-2.3l-3.5-5l-3.6-7l-8.4-10.9l-12-9.1l-11.1-4l-6.9-3.8l-6-2.2l-24-4.6l-22.9 4.6l-7.1 4.4l-12 3l-6.4 4.6l-5.8 6l-5.8 4.9l-6 2l-4.2 5.1l-1.8 1.3l-6.4-1.3l-5.6-3.8l-6 0M215 382.2l-5 7.8l0.1 6l4.9 4.6l12-0.8l2.2-3.8l-0.6-6l-1.6-5.1l-6-3.7l-6 1M479.1 258l5.9-1.8l12 0.3l6 1.1l6 2.6l30 10l12 14l12 21.1l8.1 12.7l4.5 6l1.7 6l2.2 12l0.5 6l2.6 12l0.1 6l1.6 6l0.7 6l-1.2 18l-2.8 15.6l-0.8 8.4l-6.3 18l-5.9 12l-4.4 6l-6.6 7.3l-18 15.6l-6.7 7.1l-11.3 7l-18 4l-18 1l-6 1.3l-6-0.1l-12-2l-6-2.6l-24-13.1l-24-3.7l-15.6 8.2l-8.4 2.6l-18 2l-6-1.3l-6-2l-6-2.9l-6-7.1l-4.9-3.3l-7.1-7.7l-4.9-4.3l-4.6-6l-2.5-1.9l-6-2.8l-8.5-7.3l-8.9-6l-6.6-5.8l-6-2.9l-8.7-3.3l-11.7-6l-3.6-4.5l-0.6-1.5l-0.1-6l-3.4-6l-1.6-6l4-6l7.7-5.8l6 2.3l12 2l12 4.7l6-0.3l6 1.3l6-0.5l7.1-3.7l4.9-6.2l6-1.7l6-0.1l2.2-4l9.8-11.7l4.1-6.3l5.7-6l2.2-1.5l12-7.1l6-2.4l6-1.2l6 0.3l6-2l6-7.3l4.4-8.8l7.2-12l8.5-18l4.3-6l17.6-11.6l24-11.4l6-4.1l6.1-2.9M137 288.2l18 0.3l6 3.8l7.5 7.7l3.1 6l5 6l0.6 6l3.7 12l-1.5 6l-0.5 6l0.3 18l-0.4 6l3 6l2.4 12l-0.5 6l0.8 6l-2.6 6l-8.3 12l-6.6 5.6l-6 1.2l-6 2.2l-6 0.5l-6-3.3l-6 0M490.8 270l12.2 0.9l18 4.2l6 2.1l7.9 4.8l4.1 4l6.2 8l7.3 12l10.5 15.5l3.6 8.5l2.4 12l0.1 6l1.1 6l2.4 12l1.7 6l0.5 6l-0.5 18l-2.5 18l-2.8 9.7l-7.2 20.3l-4.3 6l-18.5 17.6l-6 4.2l-12 10.8l-6 2.7l-12 3.1l-6 1l-12 0.6l-6 1.3l-6-0.2l-6-1.2l-12-4l-18-11.6l-12-5.3l-11.8-7l-6.2-3.9l-8.8-8.1l-4-6l-2.9-6l-2.3-2l-6 0.1l-2.2 1.9l-4.5 6l-1.9 6l-4.5 6l1.1 6l-6 3.6l-4.9-3.6l-1.1-3.5l-6-2l-6-4.2l-6-3.2l-6-4.7l-11-12.4l-3.1-6l-0.3-6l3.3-6l11.1-10.8l6-3.9l18-13.8l1.3-1.5l4.7-10.6l2-1.4l0-6l4-3.9l3.1-2.1l2.9-0.7l2.6 0.7l1.7 6l1.7 2.6l6-0.2l2.8-2.4l1.2-6l2-0.9l6-5.8l6-11.2l2-6.1l8.1-18l10-18l4.5-6l17.4-11.1l18-5.3l12-5l6-1.7l5.8-0.9M137 354.4l6 0l4.7 5.6l-4.7 3.8l-6 0M468.3 288l16.7-1.9l18-0.2l6 0.3l12 2.8l12 8.1l6 6.3l12.2 14.6l3.9 6l2.9 6l6.9 42l0.8 12l-0.2 12l-0.2 6l-4.7 18l-4.1 12l-2.6 6l-3.9 6l-18.1 18l-16.9 13l-13.2 5l-10.8 1.2l-18 0.7l-12-2.9l-6-1.9l-4.9-3.1l-7.1-6.1l-6-4l-6-2.7l-6-3.7l-7.7-7.5l-4.2-6l-2.3-6l-3.8-14.2l-4-9.8l-1.7-6l-2-12l0.6-6l3-12l3.3-12l4.2-12l2.6-5.4l3.5-12.6l8.3-18l6.2-9.3l6-7.7l6-4.5l12-5.8l6-1.8l7.3-0.9M345.3 420l1.7-1.3l3.8 1.3l-1.9 6l-1.9 1.2l-1.2-1.2l-0.5-6M454.9 300l6.1-2l6-0.8l6-0.3l6 0.6l12 2.6l18 2.8l12 4.7l6 1.6l12 10.4l4.1 4.4l4.3 6l2.8 6l3 24l3.8 22.6l1.1 13.4l-0.8 6l-6.1 18l-6.2 12.1l-15.6 17.9l-8.4 6l-6 6.3l-6 3.4l-12 3.9l-12 2l-6 0.4l-6-0.5l-12-3.4l-6-3.8l-10.6-8.3l-10.4-6l-6.1-6l-4.1-6l-2.9-6l-6.9-18l-1.9-12l-2.3-6l-0.7-6l2.6-18l4.9-12l4.4-18l7.9-18l4.1-6l4-4.6l6-5.5l11.9-7.9M451.7 312l9.3-3.9l6-1.2l6-0.9l6 1.9l10.5 4.1l13.5 7l6 1.4l18 6.3l4.2 3.3l7.8 10.2l0.7 1.8l-0.9 6l1.2 18l6.7 18l2.6 12l-0.7 6l-1.5 6l-5.1 12l-4.1 6l-16.9 16.3l-12 6.5l-6 2l-11.2 5.2l-12.8 3.6l-6-0.4l-6-1.8l-12-6l-12-8.7l-5.1-4.7l-4.7-6l-8.2-18.2l-6-15.1l-2.2-8.7l-0.1-6l1.6-12l4.3-12l3-12l4.5-12l6.9-12.4l6-5.8l6-4.5l2.7-1.3M464.5 318l2.5-0.7l6 1.2l8.4 5.5l2.7 6l2.5 12l1.9 6l2.5 3.6l6 6l12 8.1l24 21.8l2.2 2.5l2.7 6l1.1 6l-3.8 12l-2.2 4.1l-1.2 1.9l-4.8 4.4l-12 8l-24 9.7l-6 1.6l-6 0.2l-12-1.2l-6-2.5l-12.1-8.2l-5.9-6.9l-13.4-23.1l-5.1-12l-1-6l0.4-6l1.2-6l3.2-12l3.8-12l5.3-12l5.6-7.2l6-4.8l6-1.9l9.5-4.1M453.4 336l1.6-0.7l6 0.1l6 4.1l5.2 8.5l1.9 6l3.5 6l1.4 1.4l25.9 16.6l4.8 6l3.8 6l7.5 7.3l2.7 4.7l0.3 6l-1.9 6l-6 6l-7.1 4l-12 4.5l-6 0.3l-6 1.1l-18-1.1l-6-1.8l-6-4l-2.7-3l-6.9-12l-8.4-11.2l-3.8-6.8l-1.6-6l-0.3-6l0.3-6l1.4-6l4-12.3l6-10.7l6-5l4.4-2M447.8 360l1.2-1.4l6-2.1l6 2.7l12 14.6l6.4 4.2l5.6 4.7l6 3.8l6 5.9l6 13.5l0.7 2.1l-0.7 1.1l-6 5.3l-6 1.5l-6 0.1l-12-2.6l-6-4.6l-6-10.8l-2.4-2l-3.6-1.7l-6-4.9l-6-5.9l-2-5.5l0.3-6l1-6l0.7-1.4l4.8-4.6"/><path d="M387 390l8 8M387 398l8-8" stroke="#f00" stroke-width="1.3" fill="none"/><rect x="139.5" y="110.5" width="486.5" height="486.0" fill="none" stroke="#000" stroke-width="1"/><text x="139.5" y="616.8" font-size="13.4" text-anchor="middle">0</text><text x="128.6" y="601.5" font-size="13.4" text-anchor="end">0</text><text x="234.5" y="616.8" font-size="13.4" text-anchor="middle">200</text><text x="128.6" y="506.5" font-size="13.4" text-anchor="end">200</text><text x="329.5" y="616.8" font-size="13.4" text-anchor="middle">400</text><text x="128.6" y="411.5" font-size="13.4" text-anchor="end">400</text><text x="424.5" y="616.8" font-size="13.4" text-anchor="middle">600</text><text x="128.6" y="316.5" font-size="13.4" text-anchor="end">600</text><text x="519.5" y="616.8" font-size="13.4" text-anchor="middle">800</text><text x="128.6" y="221.5" font-size="13.4" text-anchor="end">800</text><text x="614.5" y="616.8" font-size="13.4" text-anchor="middle">1000</text><text x="128.6" y="126.5" font-size="13.4" text-anchor="end">1000</text><rect x="630.5" y="110.5" width="24.0" height="486.0" fill="url(#vir)" stroke="#000" stroke-width="1"/><text x="664.3" y="115.5" font-size="13.4" text-anchor="start">0.0</text><text x="664.3" y="183" font-size="13.4" text-anchor="start">−2.5</text><text x="664.3" y="250.5" font-size="13.4" text-anchor="start">−5.0</text><text x="664.3" y="318" font-size="13.4" text-anchor="start">−7.5</text><text x="664.3" y="385.5" font-size="13.4" text-anchor="start">−10.0</text><text x="664.3" y="453" font-size="13.4" text-anchor="start">−12.5</text><text x="664.3" y="520.5" font-size="13.4" text-anchor="start">−15.0</text><text x="664.3" y="588" font-size="13.4" text-anchor="start">−17.5</text><path d="M139.5 596.5v4.5M139.5 596.5h-4.5M234.5 596.5v4.5M139.5 501.5h-4.5M329.5 596.5v4.5M139.5 406.5h-4.5M424.5 596.5v4.5M139.5 311.5h-4.5M519.5 596.5v4.5M139.5 216.5h-4.5M614.5 596.5v4.5M139.5 121.5h-4.5M654.5 110.5h4.5M654.5 178h4.5M654.5 245.5h4.5M654.5 313h4.5M654.5 380.5h4.5M654.5 448h4.5M654.5 515.5h4.5M654.5 583h4.5" stroke="#000" stroke-width="1" fill="none"/><text transform="translate(721.5 353.5) rotate(-90)" font-size="13.4" text-anchor="middle">Optical density [nm]</text><text x="381.5" y="102" font-size="16.5" text-anchor="middle">H1:ITMX 1443890448</text><clipPath id="Qcx"><rect x="786.5" y="104.5" width="499.1" height="498"/></clipPath><g clip-path="url(#Qcx)"><path fill="#000" stroke="#000" stroke-width="0.3" d="M960.8 150.6l-0.3 0l0.4-0.6l-3.6 0.6l3.3 1.4l-0.2-0.7l0.3 0zM978.8 151.1l0.3-2.5l1 0.7l-0.9-5.7l-2.3 5.3l1.1-0.4l-0.3 2.4zM996.1 151l0-0.3l0.6 0.3l-0.8-3.2l-1.1 3.1l0.6-0.3l0 0.4zM1013.6 150.5l-0.7-0.5l1.1-0.5l-5.3-2.1l3.3 4.7l0.3-1.2l0.6 0.5zM1031.3 150.8l-1.2-2.7l1.3 0.1l-3.7-4.5l0.6 5.7l0.8-0.9l1.1 2.7zM1048.7 150.7l-3.6-6l1.2-0.1l-4.3-3.8l1.5 5.5l0.6-1l3.7 6zM1066.2 151.3l1-1.5l0.6 1.1l1.8-5.5l-4.5 3.6l1.2 0.2l-1 1.5zM934.9 166.5l2.7-2.5l0.3 1.2l2.9-5l-5.1 2.6l1.1 0.4l-2.7 2.5zM952.1 165.6l-4-0.9l0.7-1l-5.7 0.4l5 2.8l-0.3-1.1l4.1 0.9zM969.8 165.7l-5.8-4.6l1.1-0.5l-5.4-2.1l3.4 4.7l0.2-1.2l5.9 4.6zM987.5 166.3l4.7-12.7l0.9 0.9l0.3-5.7l-3.4 4.6l1.2-0.2l-4.7 12.7zM1004.7 166.6l3.2-1.3l-0.1 1.2l4.4-3.6l-5.7 0.6l0.9 0.8l-3.1 1.3zM1022.5 166.2l0.9-5.4l1 0.7l-0.8-5.7l-2.5 5.2l1.2-0.3l-0.8 5.4zM1039 166l-4.5 14.2l-0.9-0.9l0 5.8l3.2-4.8l-1.2 0.2l4.4-14.2zM1057.5 166.3l0.1-0.5l0.8 0.8l0-5.1l-2.8 4.2l1.1-0.2l-0.2 0.5zM1075 166.4l7.7-11.9l0.6 1l1.6-5.5l-4.4 3.7l1.3 0.2l-7.8 11.9zM1091.9 166.7l14.5 3.3l-0.8 0.9l5.8-0.3l-5-2.9l0.3 1.2l-14.6-3.3zM1110 166.1l-0.2 0.5l-0.6 0l-0.2-0.5l0.2-0.4l0.6 0zM908.7 181l-7.4-10.5l1.3-0.1l-4.6-3.6l1.9 5.5l0.5-1.1l7.4 10.4zM926 180.8l-5.9-3.1l1-0.7l-5.6-1.1l4.1 4l0-1.2l5.9 3.1zM943.4 180.8l-12-3l0.7-0.9l-5.7 0.3l5 2.9l-0.3-1.2l12 2.9zM961.1 180.9l-7-5.5l1.1-0.5l-5.4-2.1l3.4 4.7l0.2-1.2l7 5.4zM978.5 180.8l-5.9-2.4l0.9-0.8l-5.7-0.6l4.4 3.6l-0.1-1.2l5.9 2.4zM996 181.8l6.4-3.1l-0.1 1.3l4.3-3.9l-5.7 0.9l1 0.7l-6.4 3.1zM1013.2 181.8l1.2 0.3l-0.7 0.9l5.7-0.6l-5.1-2.6l0.3 1.2l-1.3-0.3zM1031.3 181.1l-0.9-2.5l1.2 0.2l-3.3-4.7l0.2 5.7l0.9-0.8l0.8 2.5zM1048.2 180.7l-13 1.8l0.4-1.2l-5.2 2.4l5.7 0.9l-0.7-1l12.9-1.8zM1065.6 181.3l0 0.2l-0.4 0l1.1 1.5l0-1.9l-0.3 0.3l-0.1-0.2zM1083.4 180.8l-3-0.8l0.8-0.9l-5.7 0.3l4.9 2.9l-0.3-1.2l3 0.7zM1101.1 181.7l0.6-0.4l0.2 1.2l3.6-4.5l-5.4 1.8l1 0.6l-0.7 0.4zM1118 180.8l-3.3 1.5l0-1.2l-4.3 3.8l5.7-0.8l-1-0.8l3.4-1.5zM882.5 196.3l-8.3-23.2l1.2 0.1l-3.4-4.6l0.3 5.7l0.9-0.9l8.3 23.2zM899.5 195.9l-5-0.2l0.5-1.1l-5.5 1.5l5.4 1.8l-0.5-1.1l5.1 0.2zM917.1 195.9l-1-0.2l0.7-1l-5.7 0.6l5.1 2.7l-0.3-1.2l1 0.2zM934.4 197l1.1 0.1l-0.7 1l5.7-1.1l-5.3-2.1l0.4 1.1l-1-0.1zM951.8 195.9l-6.5 2.2l0.2-1.3l-4.7 3.3l5.7-0.1l-0.8-0.9l6.5-2.1zM969.4 196l-0.4 0l0.3-1l-4.7 2l5.1 0.9l-0.6-0.9l0.5-0.1zM986.8 197l3.3 1.3l-1 0.8l5.7 0.6l-4.4-3.6l0.1 1.2l-3.3-1.4zM1004.2 196.9l12.8 6.6l-1 0.7l5.6 1l-4.1-3.9l0 1.2l-12.7-6.5zM1021.6 196.8l7.9 9.8l-1.2 0.3l4.8 3.2l-2.2-5.3l-0.5 1.1l-8-9.8zM1039.2 196.4l-0.1 0.2l-0.4-0.4l-0.1 2.9l1.7-2.4l-0.6 0.1l0.1-0.3zM1057.5 196.6l0.3-0.9l0.9 0.8l-0.2-5.7l-3 4.9l1.2-0.2l-0.2 0.8zM1074.1 196.2l-0.3 0.4l-0.5-0.9l-1.4 4.8l3.8-3.3l-1.1-0.1l0.3-0.4zM1091.5 196.7l2.5 4.2l-1.2 0.1l4.2 3.9l-1.4-5.6l-0.7 1l-2.4-4.1zM1109.2 196.9l8.1 4.5l-1 0.7l5.6 1.3l-4-4.1l-0.1 1.2l-8-4.5zM1126.9 195.9l-3.3 0.8l0.3-1.2l-5 2.9l5.7 0.3l-0.8-0.9l3.3-0.8zM1144.9 196.8l4.4-5.9l0.6 1.1l2-5.4l-4.7 3.4l1.2 0.3l-4.3 5.8zM872.9 211.2l-2 1.9l-0.4-1.1l-2.7 5l5.1-2.7l-1.2-0.4l1.9-1.9zM891.2 211.3l-7.1-10.6l1.2-0.2l-4.4-3.6l1.7 5.4l0.6-1l7.1 10.6zM908.7 211.9l9.5-14.5l0.6 1l1.6-5.5l-4.4 3.7l1.3 0.2l-9.5 14.5zM925.6 212.1l1 0.2l-0.8 1l5.8-0.6l-5.1-2.6l0.3 1.1l-0.9-0.1zM943.7 211.2l-3.5-3.9l1.2-0.3l-4.9-3l2.4 5.2l0.5-1.2l3.4 4zM961.2 211.4l-0.3-0.4l1.1 0l-3.4-3.5l0.9 4.7l0.6-0.8l0.2 0.4zM978.3 211.9l0.3-0.1l-0.2 0.7l2.9-1.5l-3.2-0.3l0.4 0.5l-0.3 0.1zM995.2 211.7l1.4 5.1l-1.2-0.2l3.1 4.8l0.1-5.7l-0.9 0.8l-1.4-5zM1013.3 212.1l1.5-0.1l-0.4 1.1l5.2-2.3l-5.6-0.9l0.6 1l-1.4 0.2zM1030.5 211.5l-0.1 0.2l-0.3-0.5l-0.8 2.4l2.1-1.6l-0.6-0.1l0.2-0.2zM1047.7 211.8l1.8 5.3l-1.2-0.1l3.4 4.7l-0.2-5.8l-0.9 0.9l-1.8-5.4zM1065.4 212l5.9 6l-1.1 0.4l5 2.8l-2.7-5.1l-0.4 1.2l-6-6.1zM1082.7 211.5l-1.1 8.2l-1-0.7l0.9 5.7l2.4-5.2l-1.2 0.4l1.1-8.2zM1100.8 212l0.4-0.1l-0.3 0.8l3.5-1.6l-3.8-0.6l0.5 0.7l-0.4 0zM1118.8 211.6l-0.1-2.5l1.2 0.6l-1.8-5.5l-1.5 5.5l1.1-0.5l0 2.4zM1136.1 211.9l0.3-0.3l0.3 0.9l2.2-4.1l-4.1 2.3l0.9 0.3l-0.3 0.3zM1152.9 211.1l-2.6 1.8l-0.1-1.2l-3.7 4.5l5.5-1.8l-1-0.6l2.6-1.7zM846.8 226.2l-3.7 1.3l0.1-1.2l-4.6 3.4l5.7-0.3l-0.9-0.8l3.8-1.3zM864.4 226.2l-2.1 0.2l0.5-1.1l-5.3 2.2l5.6 1.1l-0.6-1.1l2.1-0.2zM881.5 226.7l-0.2 1.9l-1-0.6l1.3 5.6l2-5.4l-1.2 0.5l0.1-1.9zM900 226.6l-3.2-8.3l1.2 0.1l-3.6-4.5l0.5 5.7l0.8-0.9l3.3 8.3zM917.1 226.2l-1.9-0.3l0.7-1l-5.6 0.8l5.1 2.5l-0.3-1.2l1.8 0.3zM934.2 226.4l-0.3 0.3l-0.2-1l-2.6 3.7l4.2-1.6l-0.9-0.4l0.4-0.3zM951.7 227.1l0.3 0.2l-0.8 0.3l3.7 1.7l-2.1-3.4l-0.3 0.8l-0.2-0.2zM969.3 226.3l-6.2 2.6l0.1-1.2l-4.4 3.7l5.7-0.7l-1-0.7l6.2-2.7zM986.7 226.7l0 0.2l-0.5-0.4l0 2.9l1.6-2.4l-0.6 0.1l0.1-0.3zM1004.6 226.9l0.2-0.1l0.1 0.5l1.3-1.9l-2.1 0.8l0.4 0.2l-0.1 0.2zM1021.9 227.3l2 0.3l-0.7 1l5.6-0.8l-5.2-2.5l0.4 1.2l-1.9-0.3zM1039.9 227.1l0.5-0.7l0.6 1.1l1.9-5.4l-4.6 3.5l1.2 0.2l-0.4 0.6zM1057.1 227.3l17.2-3.6l-0.3 1.2l5-2.7l-5.7-0.5l0.7 0.9l-17.1 3.6zM1074 226.8l0.1 0.5l-1-0.3l2.2 4.5l0.6-5l-0.8 0.7l-0.1-0.5zM1091.8 226.9l0.2 0.2l-0.5 0.1l2 1.2l-1-2.1l-0.2 0.5l-0.1-0.2zM1109.3 227.3l5.5 2l-0.9 0.8l5.8 0.3l-4.7-3.4l0.2 1.2l-5.5-2zM1127.5 226.8l0.1-12.8l1.1 0.6l-1.6-5.5l-1.7 5.5l1.1-0.6l0 12.8zM1145 226.8l-0.2 0.4l-0.6 0l-0.2-0.4l0.2-0.5l0.6 0zM1162.1 227.1l0.3-0.1l-0.1 0.7l2.8-1.8l-3.4-0.1l0.5 0.6l-0.3 0zM1179.8 226.7l-0.1-0.4l0.7 0.1l-1.9-2.8l0.1 3.5l0.5-0.6l0.1 0.4zM838.8 241.7l-3.8-9.6l1.2 0.1l-3.6-4.5l0.5 5.8l0.8-1l3.8 9.6zM855.8 241.4l-7.8-0.9l0.6-1.1l-5.6 1l5.3 2.3l-0.5-1.1l7.9 0.9zM872.9 241.5l-3 3.1l-0.4-1.2l-2.7 5.1l5.1-2.8l-1.2-0.3l2.9-3.1zM890.6 241.4l-4.3 1.3l0.2-1.2l-4.8 3.3l5.8-0.1l-0.9-0.9l4.3-1.4zM908.6 242.3l0.4-0.4l0.3 1.1l2.7-4.6l-4.8 2.4l1.1 0.4l-0.4 0.3zM925.9 242.3l0.3-0.2l-0.1 0.9l3.2-2.3l-3.9 0.2l0.6 0.5l-0.4 0.2zM943 242l0 0.3l-0.6-0.2l1.4 2.7l0.3-3.1l-0.5 0.4l-0.1-0.2zM961.3 241.9l-0.1-10.8l1.1 0.6l-1.7-5.5l-1.6 5.5l1.1-0.5l0.1 10.7zM978.7 242l0.1-0.4l0.7 0.6l-0.1-4.4l-2.4 3.8l1-0.2l-0.2 0.4zM995.6 242.4l3.2 1l-0.8 0.9l5.7 0.1l-4.7-3.2l0.2 1.2l-3.3-1zM1012.9 242l0.2 0.3l-0.8-0.1l2.1 2.8l-0.2-3.4l-0.5 0.5l-0.1-0.3zM1030.2 242.1l1.9 4.3l-1.2-0.1l3.7 4.4l-0.7-5.7l-0.8 0.9l-1.8-4.2zM1048.3 241.4l-12.3-1.3l0.7-1l-5.7 1.1l5.3 2.2l-0.4-1.2l12.3 1.3zM1065.4 242.3l1 1l-1.2 0.4l5.1 2.6l-2.8-5l-0.4 1.2l-1-1zM1082.9 241.5l-1.8 1.6l-0.3-1.1l-3 4.9l5.2-2.5l-1.2-0.4l1.8-1.7zM1100.3 241.5l-3.9 4.3l-0.4-1.1l-2.5 5.1l4.9-2.9l-1.2-0.3l4-4.3zM1118.1 242l0.1 0.2l-0.4 0l1.4 1.2l-0.5-1.8l-0.2 0.4l-0.1-0.2zM1135.4 241.6l-0.3 0.4l-0.5-0.9l-1.6 4.7l3.9-3.1l-1-0.1l0.2-0.4zM1152.9 241.5l-0.9 0.6l-0.2-1.2l-3.6 4.4l5.5-1.7l-1.1-0.6l1-0.6zM1170.3 242.3l11.7 13.9l-1.2 0.3l4.8 3.2l-2.3-5.3l-0.5 1.1l-11.6-13.9zM1187.7 242l3.6 29.9l-1.2-0.4l2.3 5.3l1-5.7l-1 0.7l-3.6-30zM829.4 256.5l-3.2 0.6l0.4-1.2l-5.2 2.5l5.7 0.7l-0.7-1l3.2-0.5zM846.7 256.7l-0.3 0.3l-0.3-1l-2.6 4l4.4-1.9l-1-0.4l0.4-0.3zM864 256.9l-1.5 5.8l-0.9-0.8l0.2 5.7l3-4.9l-1.2 0.3l1.4-5.8zM882.4 257.2l0.1-0.4l0.6 0.7l0.3-4l-2.5 3.2l0.9-0.1l-0.2 0.3zM899 256.8l-2.4 4l-0.7-1.1l-1.4 5.6l4.3-3.9l-1.3-0.1l2.5-3.9zM917.4 257.3l0.3-0.4l0.6 0.9l1-5.1l-3.6 3.7l1.1 0l-0.2 0.4zM935 257.2l0.6-1.7l0.9 0.9l0.1-5.8l-3.3 4.8l1.2-0.2l-0.5 1.7zM952 256.5l-0.5 0.1l0.5-1.1l-5.2 1.6l5.2 1.5l-0.5-1l0.5 0zM969 256.9l-1 4.4l-1-0.8l0.4 5.8l2.8-5l-1.2 0.3l1-4.4zM986.5 257.3l2 4.1l-1.2 0l3.9 4.2l-1-5.6l-0.7 0.9l-2-4.1zM1005 256.8l-1.6-2.5l1.3-0.1l-4.4-3.7l1.6 5.5l0.6-1.1l1.5 2.5zM1022.3 257.4l0.3-0.4l0.4 0.9l1.9-4.2l-3.9 2.5l1 0.2l-0.3 0.4zM1039.1 256.9l-0.2 0.4l-0.6-0.7l-0.4 4.6l2.8-3.6l-1 0l0.2-0.4zM1057 257.6l3.3 0.1l-0.6 1.1l5.6-1.4l-5.4-1.9l0.5 1.2l-3.4-0.2zM1074.8 257.5l0.5-0.3l0.2 1.2l3.6-4.4l-5.5 1.7l1.1 0.6l-0.5 0.3zM1091.5 257.3l2.3 6l-1.3-0.1l3.5 4.5l-0.4-5.7l-0.8 0.9l-2.3-6zM1109 257.1l-0.1 3.5l-1.1-0.6l1.6 5.5l1.7-5.4l-1.1 0.5l0-3.5zM1126.8 256.5l-1.6 0.6l0.2-1.3l-4.7 3.3l5.7-0.1l-0.8-0.9l1.6-0.5zM1144.3 256.5l-4.3 1.3l0.2-1.2l-4.8 3.2l5.8 0l-0.9-0.9l4.4-1.3zM1161.5 256.8l-3.2 5.4l-0.7-1.1l-1.4 5.6l4.3-3.9l-1.3-0.1l3.3-5.3zM1179.1 257.1l0.1 0.4l-0.8-0.2l1.8 3.5l0.4-4l-0.7 0.6l0-0.4zM1196.7 256.6l-12.9 8.8l-0.2-1.2l-3.6 4.5l5.5-1.8l-1.1-0.6l12.9-8.8zM1214.8 257.4l0.4-0.3l0.3 1l2.5-4.4l-4.5 2.3l1 0.4l-0.3 0.3zM838.4 271.7l-11.4-2.6l0.8-0.9l-5.7 0.4l5 2.8l-0.3-1.2l11.3 2.6zM855.4 272.2l0 0.4l-0.8-0.4l0.9 3.7l1.4-3.6l-0.8 0.3l0-0.4zM873.4 271.7l-3.9-1.5l0.9-0.8l-5.7-0.4l4.5 3.5l-0.1-1.3l4 1.5zM890.2 272.2l-0.1 1.1l-1.1-0.7l1 5.7l2.3-5.3l-1.1 0.4l0.1-1.1zM908 271.7l-16.8 9.3l0-1.2l-4 4.1l5.6-1.3l-1-0.7l16.7-9.2zM925.9 271.7l-3-0.6l0.8-1l-5.8 0.5l5.1 2.7l-0.3-1.2l2.9 0.7zM943.1 272.7l2.8 1.1l-0.9 0.8l5.7 0.4l-4.5-3.4l0.1 1.2l-2.9-1.1zM960.7 272.8l2.9 0.3l-0.7 1l5.7-1l-5.3-2.3l0.4 1.2l-2.9-0.3zM977.7 272.3l0.1 2.7l-1.1-0.5l2 5.4l1.3-5.5l-1.1 0.6l-0.1-2.8zM995.9 272.2l-0.1-0.2l0.3 0.1l-0.9-1.1l0.2 1.4l0.2-0.2l0 0.1zM1013.8 272.2l-0.3 0.5l-0.5 0l-0.3-0.5l0.3-0.5l0.5 0zM1030.4 271.8l-12.4 8.4l-0.1-1.3l-3.7 4.5l5.5-1.7l-1-0.6l12.4-8.4zM1047.8 272.5l6.9 11.1l-1.2 0.1l4.3 3.8l-1.5-5.6l-0.7 1.1l-6.9-11.1zM1065.2 272.3l1.1 9.9l-1.1-0.4l2.2 5.3l1-5.7l-1 0.7l-1.1-9.9zM1082.8 272.5l1.4 2.1l-1.2 0.2l4.5 3.5l-1.8-5.4l-0.6 1.1l-1.4-2.1zM1100.2 272.4l7.5 25.7l-1.2-0.3l3.2 4.9l0-5.8l-0.9 0.8l-7.5-25.6zM1117.7 272.2l-0.7 9.5l-1-0.6l1.2 5.6l2-5.4l-1.1 0.5l0.7-9.5zM1135.4 271.8l-2.2 2l-0.3-1.2l-3 5l5.2-2.5l-1.2-0.5l2.2-2zM1153.2 272.8l1.2 0l-0.6 1.1l5.5-1.6l-5.5-1.7l0.6 1.1l-1.1 0zM1170.3 272l-0.2 0.5l-0.8-0.8l-0.5 5.5l3.4-4.4l-1.1 0.1l0.1-0.5zM1187.7 272.4l1.6 3.8l-1.2-0.1l3.6 4.5l-0.6-5.7l-0.8 0.9l-1.5-3.8zM1205.9 271.8l-0.4-0.1l0.6-0.6l-4.1-0.2l3.4 2.4l-0.2-0.8l0.4 0.1zM1223.7 271.9l-4.4-4.7l1.2-0.4l-4.9-2.9l2.5 5.1l0.4-1.1l4.3 4.7zM829.7 286.9l-8.6-2.8l0.9-0.9l-5.7-0.1l4.7 3.2l-0.2-1.2l8.5 2.8zM846.6 287l-4.5 3.8l-0.3-1.2l-3.1 4.8l5.2-2.3l-1.1-0.5l4.6-3.8zM864.6 287l-0.3-0.1l0.6-0.7l-4.2-0.2l3.4 2.5l-0.1-0.9l0.4 0.2zM881.8 286.9l-1.4 0.6l0.1-1.3l-4.4 3.8l5.7-0.7l-0.9-0.8l1.3-0.6zM899.1 287l-1.5 1.7l-0.5-1.1l-2.4 5.2l4.9-3l-1.2-0.3l1.5-1.8zM916.6 287l-4.8 4.5l-0.3-1.2l-2.9 5l5.1-2.6l-1.1-0.4l4.8-4.5zM934.2 287l-0.4 0.3l-0.1-1.1l-3.1 3.9l4.7-1.6l-0.9-0.5l0.4-0.2zM951.7 287.8l4.8 3.3l-1.1 0.6l5.5 1.7l-3.7-4.5l-0.1 1.2l-4.8-3.2zM969.7 287.1l-0.3-0.2l0.6-0.4l-3.4-0.7l2.4 2.5l0.1-0.8l0.2 0.2zM986.9 286.9l-0.5 0.1l0.3-1.1l-4.5 2.4l5.1 0.5l-0.7-0.9l0.5 0zM1004.7 287.7l0.3-0.2l0.2 0.8l2.4-3.2l-3.8 1.4l0.8 0.3l-0.3 0.3zM1021.6 287.8l6.5 5.8l-1.1 0.5l5.2 2.4l-3-4.9l-0.4 1.2l-6.4-5.8zM1039.1 287.1l-0.3 0.4l-0.5-1l-1.7 5l4.1-3.3l-1.1-0.1l0.3-0.4zM1056.5 287.6l5.9 12.5l-1.2 0l3.8 4.3l-0.9-5.7l-0.7 1l-5.9-12.6zM1074.1 287.6l0.2 0.3l-0.9 0.1l3.2 3l-1-4.2l-0.5 0.7l-0.2-0.3zM1091.6 287.1l-0.8 1l-0.6-1.1l-1.9 5.4l4.6-3.4l-1.2-0.2l0.7-1.1zM1109.2 287.8l16.4 10.5l-1.1 0.6l5.5 1.6l-3.7-4.4l-0.1 1.3l-16.4-10.5zM1127.2 287.4l0-0.2l0.4 0.3l-0.3-2.1l-0.9 1.9l0.4-0.1l0 0.1zM1145 287.4l-0.2 0.5l-0.6 0l-0.2-0.5l0.2-0.5l0.6 0zM1161.8 286.9l-0.5 0.2l0.1-1.2l-4.3 3.6l5.5-0.7l-0.9-0.7l0.5-0.2zM1179 287.4l0.2 11.5l-1.1-0.6l1.7 5.5l1.6-5.5l-1.1 0.5l-0.3-11.4zM1196.5 287.4l1.5 15.4l-1.2-0.4l2.2 5.3l1.1-5.7l-1 0.7l-1.6-15.4zM1215 287.2l-4-13.4l1.2 0.2l-3.2-4.8l0 5.8l0.9-0.9l4.1 13.4zM1231.7 286.9l-6.8 4.6l-0.1-1.2l-3.7 4.4l5.5-1.7l-1.1-0.6l6.8-4.6zM820.4 303l17.3 11.3l-1.1 0.6l5.5 1.6l-3.7-4.4l-0.1 1.2l-17.2-11.2zM838.2 303l0.5 0.1l-0.7 1l5.4-0.8l-4.9-2.3l0.3 1.1l-0.5-0.1zM855.7 302l-0.7 0l0.5-1.1l-5.4 1.9l5.5 1.4l-0.6-1.1l0.8 0zM872.7 302.4l-0.8 4.1l-0.9-0.8l0.5 5.7l2.7-5l-1.2 0.3l0.8-4.1zM890.3 302.3l-0.9 1.9l-0.8-1l-0.9 5.7l3.9-4.3l-1.2 0l0.8-1.8zM907.7 302.8l1.3 2.8l-1.2-0.1l3.8 4.3l-0.8-5.6l-0.8 0.9l-1.2-2.8zM925.5 302.2l-0.3 0.2l-0.2-0.9l-2.7 3.4l4.2-1.3l-0.9-0.5l0.4-0.2zM942.7 302.6l2 9.3l-1.2-0.3l2.8 5l0.4-5.7l-0.9 0.8l-2-9.3zM960.3 302.3l-3.1 5.5l-0.7-1l-1.2 5.6l4.1-4l-1.2-0.1l3-5.5zM977.7 302.5l-0.1 1.6l-1.1-0.6l1.2 5.6l2.1-5.4l-1.1 0.5l0.1-1.6zM996.2 302.8l6.9-12.2l0.7 1l1.3-5.6l-4.2 4l1.3 0l-6.9 12.3zM1013.6 303l4.5-3.3l0.2 1.2l3.5-4.5l-5.4 1.8l1 0.6l-4.5 3.3zM1030.4 302.9l4.2 4.1l-1.2 0.4l5.1 2.7l-2.8-5l-0.3 1.1l-4.3-4.1zM1048 303l2.5 1.3l-1 0.8l5.6 1.1l-4.1-4.1l0 1.3l-2.5-1.4zM1065.2 302.7l0.9 2.4l-1.2-0.1l3.4 4.6l-0.3-5.7l-0.9 0.9l-0.8-2.5zM1082.7 302.5l-0.4 3.8l-1.1-0.7l1.1 5.7l2.2-5.3l-1.1 0.4l0.4-3.8zM1100.5 303l4.7 2l-0.9 0.8l5.7 0.6l-4.4-3.6l0.1 1.2l-4.7-2zM1118.5 303l1.6-0.8l0 1.2l4.1-4l-5.6 1.1l1 0.7l-1.6 0.8zM1135.2 302.4l-0.5 1.5l-0.9-0.8l-0.2 5.7l3.4-4.7l-1.3 0.2l0.6-1.6zM1152.8 302.8l3.1 5.2l-1.3 0.1l4.3 3.9l-1.4-5.6l-0.7 1.1l-3.1-5.2zM1170.6 302.8l0.2 0.1l-0.5 0.3l2.8 0.7l-1.9-2.1l-0.1 0.6l-0.2-0.1zM1188.2 302.7l0.2 0l-0.2 0.3l1.7-0.4l-1.6-0.6l0.1 0.4l-0.1 0zM1205.9 302l-7.4-2.3l0.9-0.9l-5.8-0.1l4.8 3.2l-0.2-1.2l7.4 2.4zM1223.7 302.2l-5.7-8l1.2-0.2l-4.6-3.6l1.9 5.5l0.6-1.1l5.7 8.1zM829.1 318l4.2 6l-1.2 0.2l4.5 3.6l-1.8-5.5l-0.6 1.1l-4.3-6zM846.8 317.2l-7.3 2.4l0.2-1.2l-4.7 3.3l5.7-0.2l-0.9-0.8l7.4-2.5zM864 317.8l0.6 3l-1.2-0.3l2.8 5l0.4-5.7l-0.9 0.8l-0.7-3zM881.5 317.7l0.1 7.9l-1.2-0.5l1.8 5.5l1.5-5.5l-1 0.5l-0.2-7.9zM899.1 317.9l0.3 0.4l-1.1 0.2l3.8 3.1l-1.4-4.7l-0.6 0.9l-0.2-0.4zM917.3 318.2l3.9-2.2l0 1.2l4-4.2l-5.6 1.3l1 0.7l-3.9 2.2zM934.5 318.2l1.9 0.1l-0.6 1.1l5.5-1.6l-5.5-1.7l0.6 1.1l-1.9-0.1zM952.1 317.2l-1.1-0.3l0.8-1l-5.8 0.3l5 2.9l-0.3-1.2l1.2 0.3zM969.4 317.2l-3.6 0.8l0.2-1.2l-4.9 2.9l5.7 0.3l-0.8-0.9l3.6-0.9zM986.6 318.1l1.2 1.2l-1.2 0.4l5 2.9l-2.6-5.2l-0.4 1.2l-1.2-1.3zM1005 317.4l-0.8-1.3l1.2-0.1l-4.2-3.8l1.4 5.5l0.7-1l0.7 1.3zM1021.5 318l1.2 1.9l-1.2 0.1l4.2 3.9l-1.4-5.6l-0.6 1.1l-1.2-2zM1039.7 318.2l4.4-1.5l-0.2 1.2l4.7-3.3l-5.7 0.2l0.8 0.9l-4.4 1.5zM1056.5 317.5l-0.8 1.5l-0.7-0.9l-0.9 5.6l3.9-4.2l-1.3 0l0.8-1.6zM1074.1 317.3l-0.9 0.9l-0.4-1.2l-2.8 5l5.1-2.6l-1.2-0.4l1-0.9zM1091.8 318.2l2.5 1.2l-1 0.7l5.7 0.9l-4.3-3.9l0 1.3l-2.5-1.2zM1109.1 318l0.3 0.4l-1.1 0.1l4 3.3l-1.6-4.9l-0.5 0.9l-0.3-0.4zM1126.9 317.5l-0.2 0.1l0-0.6l-2.1 1.8l2.7-0.4l-0.4-0.4l0.2-0.1zM1144.5 317.5l-0.2 0l0.2-0.5l-2.3 0.7l2.3 0.7l-0.2-0.5l0.2 0zM1162.4 317.3l-2.6-2.5l1.1-0.4l-5.1-2.6l2.9 5l0.3-1.2l2.6 2.5zM1179.4 317.2l-4.6 1.1l0.2-1.2l-4.9 2.9l5.7 0.3l-0.8-1l4.6-1.1zM1196.5 317.5l-3.8 11.3l-0.9-0.9l-0.2 5.7l3.4-4.6l-1.3 0.1l3.8-11.2zM1214.1 317.4l-9.8 12.9l-0.5-1.1l-2 5.4l4.6-3.4l-1.2-0.2l9.7-13zM1231.7 317.2l-12.8 8.9l-0.2-1.2l-3.6 4.5l5.5-1.8l-1.1-0.5l12.8-9zM820.2 332.9l0.2 1.1l-1.2-0.3l2.6 5.1l0.7-5.7l-1 0.7l-0.2-1.1zM838.5 332.5l-0.3-0.3l0.9-0.4l-4.3-1.9l2.6 4l0.2-1l0.4 0.3zM855.2 332.8l-0.1 4l-1.1-0.6l1.6 5.5l1.7-5.4l-1.1 0.5l0.1-3.9zM873.1 332.3l-2.1 0.6l0.2-1.2l-4.8 3.1l5.8 0.1l-0.9-0.9l2.1-0.6zM890.5 332.4l-0.5 0.2l0-1.2l-4 4l5.5-1.1l-1-0.7l0.5-0.3zM908.1 332.3l-1.4 0.5l0.2-1.2l-4.6 3.4l5.7-0.3l-0.9-0.9l1.3-0.4zM925.4 332.4l-1.4 1.3l-0.3-1.2l-3 4.9l5.2-2.5l-1.1-0.4l1.3-1.2zM943 332.9l0.1 0.2l-0.5 0l1.4 2.1l-0.1-2.6l-0.3 0.4l-0.1-0.2zM960.3 332.5l-0.6 0.6l-0.4-1.1l-2.5 5.2l4.9-3l-1.2-0.3l0.7-0.7zM978.3 333l0.2 0l-0.1 0.4l1.8-1.1l-2.1-0.1l0.3 0.4l-0.2 0zM995.5 333.1l0.2 0.3l-0.8 0.2l3.5 2.2l-1.8-3.7l-0.3 0.8l-0.3-0.3zM1012.8 333.2l9.7 12.1l-1.2 0.3l4.7 3.3l-2.1-5.4l-0.5 1.1l-9.7-12.1zM1030.4 332.6l-0.3 0.4l-0.5-0.9l-1.5 4.6l3.8-3.1l-1-0.1l0.2-0.4zM1048.1 333.4l4.8 1.4l-0.8 0.9l5.7-0.1l-4.8-3.1l0.2 1.2l-4.8-1.4zM1065.3 333.2l2.5 3.1l-1.2 0.2l4.7 3.3l-2.2-5.3l-0.5 1.1l-2.4-3.1zM1083 333.3l2.4 1.2l-1 0.7l5.7 0.9l-4.3-3.9l0 1.3l-2.3-1.2zM1100.9 332.5l-0.3-0.2l0.6-0.5l-3.8-0.5l2.9 2.6l0-0.9l0.3 0.2zM1118 332.6l-0.2 0.2l-0.2-0.7l-1.7 2.9l3-1.4l-0.7-0.3l0.3-0.2zM1135.2 332.9l0.4 2.5l-1.2-0.4l2.4 5.2l0.9-5.7l-1.1 0.7l-0.3-2.4zM1152.9 332.5l-0.3 0.4l-0.5-1l-1.9 4.8l4.2-3l-1.1-0.2l0.3-0.4zM1170.5 332.7l-0.2 0.3l-0.4-0.6l-0.5 3.3l2.2-2.4l-0.7 0l0.1-0.3zM1187.8 332.5l-2.5 3.2l-0.5-1.1l-2.2 5.3l4.8-3.3l-1.2-0.2l2.5-3.2zM1205.9 333.1l0.3-0.2l0.1 0.7l2-2.4l-3.1 0.9l0.6 0.3l-0.2 0.2zM1223 332.3l-2.5 1.2l0-1.2l-4.3 3.9l5.7-0.9l-0.9-0.8l2.5-1.2zM1240.8 332.3l-15.4-1.1l0.6-1.1l-5.6 1.2l5.4 2.1l-0.5-1.1l15.4 1.1zM829 347.7l-4.3 6.7l-0.7-1l-1.6 5.5l4.4-3.7l-1.2-0.2l4.4-6.7zM847.3 347.6l-7.7-5.8l1.1-0.6l-5.4-2l3.4 4.6l0.2-1.2l7.8 5.8zM864.6 347.5l-13-1.4l0.7-1l-5.6 1l5.3 2.3l-0.5-1.2l12.9 1.3zM882.1 347.6l-0.4 0l0.5-0.7l-3.9 0.5l3.5 1.7l-0.2-0.8l0.3 0.1zM899.1 348.4l2.6 2.5l-1.2 0.4l5 2.8l-2.7-5.1l-0.4 1.2l-2.5-2.6zM916.5 348l-0.1 1.4l-1.1-0.5l1.7 5.5l1.6-5.5l-1.1 0.6l0-1.5zM934.3 347.5l-23.3 7l0.2-1.3l-4.8 3.2l5.7 0l-0.8-0.9l23.4-7zM952.3 347.6l-0.6-0.5l1.1-0.6l-5.4-2l3.4 4.7l0.2-1.3l0.7 0.5zM969 348.3l3.1 4.4l-1.2 0.2l4.5 3.5l-1.8-5.4l-0.6 1.1l-3-4.4zM986.7 348.1l0.1 0.4l-0.8-0.1l2.2 2.9l-0.2-3.7l-0.5 0.6l-0.2-0.3zM1004.4 348.2l0.1 0.1l-0.4 0.2l2 0.8l-1.2-1.8l-0.1 0.5l-0.2-0.2zM1021.5 348l0.4 6.2l-1.1-0.4l2 5.3l1.3-5.6l-1.1 0.6l-0.5-6.1zM1039.6 348.5l0.5-0.2l-0.2 1.1l4.3-2.8l-5.1 0l0.7 0.8l-0.4 0.1zM1057.3 348.4l5.9-4.3l0.2 1.2l3.4-4.5l-5.4 1.9l1.1 0.5l-5.8 4.4zM1074.4 348.5l4.3 0.8l-0.7 1l5.7-0.7l-5.2-2.6l0.4 1.2l-4.3-0.7zM1092.3 348.4l1.9-1.3l0.2 1.2l3.5-4.5l-5.4 1.8l1.1 0.6l-1.9 1.4zM1109.6 347.6l-0.4 0l0.5-0.8l-4.1 0.6l3.7 1.8l-0.2-0.9l0.3 0.1zM1126.6 348.1l0 0.4l-0.9-0.3l1.9 4.1l0.7-4.5l-0.8 0.6l-0.1-0.5zM1144.2 347.5l-2.2 1.5l-0.2-1.2l-3.7 4.4l5.5-1.7l-1-0.6l2.2-1.4zM1161.5 348.2l1.7 5.7l-1.2-0.2l3.1 4.8l0-5.7l-0.8 0.8l-1.8-5.8zM1179.4 347.5l-3.5 0.4l0.4-1.1l-5.3 2.4l5.7 0.8l-0.7-1l3.6-0.5zM1197.5 347.7l-1.1-1.7l1.2-0.1l-4.4-3.8l1.6 5.5l0.6-1l1.1 1.7zM1214.7 347.5l-1.9-0.9l0.9-0.8l-5.7-0.7l4.4 3.8l-0.1-1.3l2 0.9zM1232.1 347.5l-11.3-3.1l0.8-0.9l-5.7 0.1l4.9 3.1l-0.3-1.2l11.4 3zM1249.9 348.4l3.6-3.6l0.3 1.2l2.8-5l-5.1 2.7l1.2 0.4l-3.6 3.5zM820.6 363.7l3.4 1.2l-0.9 0.9l5.7 0.3l-4.6-3.4l0.2 1.2l-3.5-1.3zM838.6 362.7l-1.3-1l1.1-0.5l-5.4-2l3.4 4.6l0.2-1.2l1.3 1zM856.3 363.3l1.2-4.4l0.9 0.8l-0.2-5.7l-3 4.8l1.2-0.2l-1.2 4.4zM873.8 363l-1.1-4.5l1.2 0.3l-2.8-5l-0.4 5.8l1-0.8l1 4.5zM890.7 362.6l-8.5 0.7l0.5-1.1l-5.3 2.1l5.6 1.2l-0.7-1.1l8.5-0.7zM907.8 363.3l0.2 0.4l-1-0.1l2.6 3.7l-0.1-4.6l-0.7 0.7l-0.1-0.4zM925.4 363.2l0 0.3l-0.7-0.3l1.1 3.4l1-3.5l-0.7 0.4l0-0.3zM943.6 362.7l-0.4-0.3l1.1-0.5l-5.1-2.4l3 4.9l0.3-1.2l0.4 0.4zM960.4 362.7l-1.1 0.9l-0.3-1.2l-3.2 4.8l5.3-2.2l-1.1-0.5l1.1-0.9zM977.7 363.1l-0.5 5.4l-1-0.7l1.1 5.7l2.2-5.4l-1.2 0.5l0.5-5.4zM995.2 363.1l-0.1 1.4l-1-0.6l1.4 5.5l1.9-5.4l-1.2 0.5l0.1-1.3zM1012.9 362.7l-7.2 5.8l-0.3-1.2l-3.3 4.7l5.4-2.1l-1.2-0.5l7.3-5.8zM1030.4 363.5l1.2 1.3l-1.1 0.4l5 2.7l-2.7-5l-0.4 1.1l-1.3-1.2zM1048.6 363.2l0.1-0.3l0.7 0.5l-0.3-4l-2 3.5l0.9-0.2l-0.1 0.4zM1065.7 363.7l9.2 0.6l-0.6 1.1l5.6-1.3l-5.4-2l0.5 1.1l-9.2-0.6zM1083.6 363.4l0.3-0.4l0.5 0.9l1.4-4.5l-3.7 3l1 0.1l-0.2 0.4zM1100.5 363.3l0.1 0.2l-0.6-0.1l1.7 2.3l-0.2-2.8l-0.4 0.4l-0.1-0.2zM1118.5 362.7l-5.1-2.8l1-0.7l-5.6-1.2l4 4.1l0.1-1.2l5.1 2.7zM1135.5 363.6l2.4 1.5l-1.1 0.7l5.6 1.5l-3.8-4.3l-0.1 1.2l-2.5-1.5zM1152.9 363.4l0.2 0.3l-0.8 0.1l3.1 2.6l-1.2-3.9l-0.4 0.8l-0.2-0.4zM1171.1 363.4l0.2-0.4l0.5 0.8l1-4.2l-3.1 2.9l0.9 0.1l-0.2 0.3zM1188.8 363.2l0.1-1.8l1.1 0.6l-1.3-5.6l-2 5.4l1.1-0.5l-0.1 1.8zM1205.8 362.7l-0.5-0.1l0.5-0.9l-4.9 1.2l4.8 1.7l-0.5-1l0.5 0zM1223.2 362.6l-1.1 0.1l0.4-1.1l-5.3 2.2l5.7 1.1l-0.7-1.1l1.1-0.1zM1241 362.7l-4-1.9l1-0.8l-5.7-0.9l4.3 3.9l0-1.2l3.9 1.9zM812 378.1l-0.2 0l0.2-0.5l-2.5 0.6l2.5 0.9l-0.3-0.5l0.3 0zM830 378.2l-0.2-0.5l1.1 0.2l-2.8-4.3l0 5.1l0.8-0.7l0.1 0.4zM846.8 378.8l4 1.7l-1 0.8l5.8 0.7l-4.5-3.7l0.1 1.2l-4-1.7zM864.8 378.5l0.2-0.3l0.5 0.7l1-3.9l-3 2.7l0.9 0.1l-0.2 0.3zM882.5 378.3l-0.3 0.5l-0.6 0l-0.3-0.5l0.3-0.5l0.6 0zM899 378.1l-0.6 1.5l-0.8-1l-0.6 5.7l3.6-4.4l-1.2 0.1l0.6-1.5zM916.5 378.2l-1.7 9.6l-1-0.7l0.7 5.7l2.6-5.2l-1.2 0.4l1.6-9.6zM934.7 378.8l4.2-1.3l-0.2 1.2l4.7-3.3l-5.8 0.1l0.9 0.9l-4.2 1.4zM952 378.7l0.3 0l-0.4 0.6l3.5-0.7l-3.3-1.3l0.3 0.7l-0.4 0zM969.6 378.4l0.1-0.1l0.2 0.3l0.7-1.5l-1.5 0.9l0.4 0.1l-0.1 0.1zM986.5 378.2l-0.4 2.3l-1-0.8l0.7 5.7l2.5-5.1l-1.1 0.3l0.3-2.2zM1004.8 377.8l-0.6-0.3l1-0.7l-5.6-1.1l4.1 4l0-1.2l0.5 0.3zM1022.5 378.3l-0.3 0.5l-0.6 0l-0.3-0.5l0.3-0.5l0.6 0zM1039.4 378.9l2.6 0.4l-0.7 1l5.6-0.8l-5.1-2.5l0.3 1.2l-2.5-0.4zM1057.4 378.6l0.5-0.5l0.5 1.1l2.1-5.4l-4.7 3.3l1.2 0.3l-0.4 0.6zM1074.9 378.7l1.6-1.5l0.3 1.2l2.9-5l-5.1 2.6l1.1 0.4l-1.6 1.5zM1092.3 378.7l0.3-0.3l0.2 0.9l2.6-3.5l-4.2 1.5l0.9 0.4l-0.4 0.3zM1110 378.4l1.1-5.4l1 0.7l-0.5-5.7l-2.7 5.1l1.2-0.4l-1.1 5.5zM1127.3 377.9l-4.7-3.3l1.1-0.6l-5.5-1.8l3.6 4.5l0.1-1.2l4.8 3.3zM1144.5 378l-0.3 0l0.3-0.7l-3.3 1l3.3 1l-0.3-0.7l0.3 0zM1161.8 377.8l-2.6 1.1l0.1-1.3l-4.4 3.7l5.7-0.6l-0.9-0.8l2.5-1.1zM1179.8 377.9l-7.7-5.6l1.1-0.6l-5.4-1.8l3.5 4.5l0.2-1.2l7.7 5.6zM1197.4 377.9l-7.1-7.2l1.1-0.4l-5-2.8l2.7 5.1l0.4-1.1l7.1 7.2zM1214.8 378l-0.4-0.3l0.9-0.3l-4-1.7l2.4 3.6l0.2-0.9l0.3 0.2zM1231.5 378.5l0.4 1l-1.2-0.1l3.7 4.4l-0.7-5.7l-0.8 1l-0.4-1zM820.5 393.1l-0.4 0.3l-0.1-1l-2.7 3.7l4.2-1.6l-0.8-0.4l0.3-0.3zM838.4 392.9l-0.8-0.2l0.8-0.9l-5.7 0.2l4.9 3l-0.3-1.2l0.8 0.2zM856.2 393.5l0.1-0.5l0.9 0.5l-1.3-4.9l-1.6 4.8l1-0.4l0 0.4zM873 393.4l-0.1 0.3l-0.5-0.3l0.7 3l1-2.9l-0.6 0.3l0-0.3zM891 393l-0.4-0.3l1-0.6l-5.4-1.5l3.7 4.2l0.1-1.2l0.5 0.3zM908.7 393.7l0.7-1.2l0.7 1l1.4-5.5l-4.2 3.9l1.2 0.1l-0.7 1.2zM925.9 394l6.5-1.9l-0.2 1.2l4.8-3.1l-5.7-0.1l0.8 0.9l-6.5 1.9zM942.7 393.5l0 3.4l-1.1-0.6l1.6 5.5l1.7-5.5l-1.1 0.6l0-3.4zM960.6 394l2.5 0.7l-0.8 0.9l5.7-0.2l-4.8-3l0.2 1.2l-2.5-0.7zM977.8 393.2l-1.9 3.4l-0.7-1.1l-1.3 5.6l4.1-3.9l-1.2-0.1l1.9-3.4zM995.8 393.7l0.2-0.1l-0.2 0.5l2.1-0.9l-2.2-0.4l0.2 0.4l-0.2 0.1zM1012.8 393.1l-2.5 2.9l-0.5-1.1l-2.3 5.2l4.8-3l-1.2-0.3l2.6-3zM1030.9 393l-0.4-0.1l0.8-0.7l-4.9-0.5l3.8 3.1l-0.1-1.1l0.5 0.2zM1048.3 394l4.7-0.3l-0.5 1.1l5.4-2l-5.6-1.3l0.6 1.1l-4.7 0.3zM1065.2 393.5l0.6 6.5l-1.1-0.5l2.2 5.3l1.1-5.6l-1.1 0.7l-0.6-6.5zM1083.1 394l6.2 1.2l-0.7 1l5.7-0.5l-5.1-2.7l0.3 1.2l-6.1-1.3zM1100.9 394l6.4-2.3l-0.1 1.2l4.6-3.4l-5.7 0.3l0.9 0.8l-6.4 2.3zM1118.4 393.7l0.2-0.1l0 0.6l2-1.9l-2.7 0.5l0.5 0.3l-0.3 0.1zM1135.6 393.7l0.2 0.2l-0.6 0.2l2.6 1.3l-1.5-2.5l-0.2 0.6l-0.2-0.2zM1152.9 393.9l3.8 3.5l-1.2 0.4l5.2 2.6l-2.9-5l-0.4 1.2l-3.8-3.5zM1170.9 393l-0.4-0.2l0.8-0.7l-5.1-0.3l4 3l-0.1-1.1l0.5 0.2zM1188.7 393.1l-4-4.7l1.2-0.3l-4.8-3.1l2.3 5.3l0.5-1.2l3.9 4.7zM1205.8 392.9l-11-1.6l0.7-1l-5.7 0.9l5.2 2.4l-0.3-1.2l11 1.6zM1223.3 392.9l-2.9-0.3l0.7-1l-5.6 1.1l5.3 2.2l-0.5-1.2l2.9 0.3zM1240.8 393.8l0.3 0l-0.3 0.6l3-1l-3.1-0.8l0.3 0.6l-0.3 0zM829 408.9l2.4 3.3l-1.3 0.2l4.5 3.6l-1.8-5.5l-0.5 1.1l-2.3-3.3zM846.9 408.1l-2.5 0.2l0.4-1.1l-5.3 2.2l5.6 1.1l-0.6-1.1l2.6-0.2zM864.2 408.2l-0.5 0.3l-0.2-1.2l-3.6 4.5l5.4-1.8l-1-0.6l0.5-0.3zM882.5 408.4l-0.6-1.6l1.2 0.1l-3.3-4.6l0.2 5.7l0.9-0.9l0.6 1.7zM899.1 408.9l0.3 0.3l-1 0.1l3.5 2.9l-1.3-4.3l-0.5 0.8l-0.2-0.3zM916.5 408.6l0.1 5l-1.1-0.5l1.8 5.5l1.5-5.6l-1.1 0.6l-0.2-5zM934.1 408.9l0.3 0.3l-1 0.2l3.7 2.8l-1.5-4.4l-0.5 0.9l-0.2-0.3zM951.9 408.9l0.3 0.2l-0.6 0.4l3.4 0.5l-2.6-2.3l0 0.8l-0.3-0.2zM969.4 408.6l0 0.1l-0.3-0.1l0.2 1.2l0.6-1.1l-0.3 0.1l0-0.2zM986.5 408.7l0.3 4.7l-1.1-0.4l2 5.3l1.3-5.6l-1.1 0.6l-0.4-4.7zM1004.9 408.8l0.1-0.4l0.6 0.7l0.4-4.1l-2.6 3.2l0.9-0.1l-0.2 0.4zM1022.5 408.6l-0.3 0.5l-0.6 0l-0.3-0.5l0.3-0.5l0.6 0zM1039 408.3l-7.4 11.4l-0.6-1l-1.7 5.5l4.4-3.7l-1.2-0.2l7.5-11.4zM1056.9 409.2l8 1.7l-0.8 1l5.8-0.5l-5.1-2.8l0.3 1.2l-8-1.7zM1074.8 409.1l3.9-2l0 1.2l4.1-4l-5.6 1.1l1 0.7l-4 2zM1092.5 408.7l1.6-7.8l0.9 0.8l-0.5-5.8l-2.7 5.1l1.2-0.3l-1.5 7.8zM1109.8 408.2l-1.5-1l1.1-0.6l-5.6-1.7l3.7 4.4l0.2-1.2l1.5 1zM1127.1 408.9l0.3-0.1l-0.1 0.7l2.5-2l-3.1 0.3l0.5 0.4l-0.3 0.1zM1144.6 408.1l-6-1.1l0.7-1l-5.7 0.7l5.1 2.6l-0.3-1.2l6 1.1zM1162.3 408.2l-6-4l1.1-0.6l-5.5-1.7l3.7 4.4l0.1-1.2l6 4zM1179.6 408.6l0-0.1l0.2 0.2l-0.2-1.2l-0.4 1.1l0.2-0.1l0 0.1zM1196.6 408.4l-0.2 0.5l-0.7-0.8l-0.5 4.8l3.1-3.7l-1.1 0l0.2-0.4zM1214.9 408.2l-5.3-5l1.2-0.4l-5.1-2.6l2.8 5l0.4-1.2l5.2 5zM1232.1 408.1l-14.5-2.6l0.7-1l-5.7 0.6l5.2 2.6l-0.4-1.1l14.5 2.6zM820.5 423.4l-0.4 0.3l-0.1-1l-2.9 3.6l4.4-1.4l-0.9-0.5l0.4-0.3zM838.7 423.5l-3.2-5l1.3-0.1l-4.4-3.8l1.6 5.6l0.6-1.1l3.2 5zM855.8 424.1l0.4 0l-0.2 0.7l3.2-1.7l-3.7-0.4l0.5 0.7l-0.3 0zM873.5 424.2l7-4.2l0.1 1.2l3.9-4.2l-5.6 1.4l1.1 0.7l-7 4.2zM890.3 423.9l0.2 0.5l-1-0.1l3 3.6l-0.5-4.6l-0.7 0.7l-0.1-0.4zM907.7 423.6l-1.4 5.2l-0.9-0.8l0.2 5.7l3-4.8l-1.2 0.2l1.4-5.2zM925.3 423.5l-2.1 4.2l-0.7-0.9l-0.9 5.6l3.9-4.2l-1.3 0l2-4.2zM943.5 423.9l0.1-0.2l0.3 0.6l0.9-2.8l-2.2 1.8l0.6 0.1l-0.2 0.2zM960.5 423.9l0.1 0.2l-0.7-0.1l1.7 2.6l0-3.1l-0.5 0.5l-0.1-0.3zM978.2 423.3l-0.4 0.1l0.4-0.9l-4.3 1.3l4.4 1.3l-0.5-0.9l0.5 0zM995.7 423.9l0.2 0.1l-0.2 0.2l1.5-0.2l-1.4-0.7l0.1 0.4l-0.1-0.1zM1012.8 423.5l-2.6 3.6l-0.6-1.1l-1.8 5.5l4.5-3.5l-1.2-0.2l2.6-3.7zM1030.5 424.3l15.9 7.9l-0.9 0.7l5.6 1l-4.2-3.9l0 1.2l-15.9-7.9zM1047.7 423.7l-0.8 9l-1.1-0.7l1.1 5.7l2.2-5.3l-1.1 0.4l0.8-9zM1065.9 424.3l4.2-1l-0.3 1.2l5-2.8l-5.7-0.4l0.8 1l-4.3 0.9zM1082.8 424l0.3 0.4l-1.1 0.1l3.7 3.4l-1.2-4.9l-0.6 0.9l-0.2-0.4zM1100.9 424.3l1.8-0.7l-0.1 1.3l4.6-3.5l-5.8 0.4l0.9 0.8l-1.7 0.7zM1118.8 423.9l0.4-1.8l0.9 0.8l-0.4-5.8l-2.8 5.1l1.2-0.3l-0.4 1.8zM1135.9 423.6l-0.2-0.2l0.6-0.2l-2.4-1.2l1.3 2.3l0.2-0.5l0.2 0.2zM1153.2 423.4l-0.4 0.1l0.2-0.8l-3.4 1.8l3.9 0.4l-0.5-0.7l0.3-0.1zM1170.9 423.2l-5.3-1.3l0.8-0.9l-5.7 0.3l4.9 2.9l-0.2-1.2l5.2 1.3zM1188.2 423.2l-10.8 0l0.5-1.1l-5.5 1.7l5.5 1.6l-0.5-1.1l10.9 0zM1206.3 423.6l-0.6-2l1.2 0.3l-3.1-4.9l-0.1 5.8l0.9-0.8l0.6 1.9zM1223.7 423.5l-14.2-20.1l1.3-0.2l-4.6-3.5l1.9 5.4l0.5-1.1l14.2 20.1zM829.1 439l0 0.3l-0.8-0.3l1.4 3.8l1-3.9l-0.8 0.4l0-0.4zM846.8 439.4l1 0.5l-0.9 0.8l5.7 0.7l-4.4-3.8l0.1 1.3l-1.1-0.5zM864.6 438.4l-7.5-1l0.7-1l-5.7 0.9l5.3 2.4l-0.4-1.2l7.4 1zM881.7 439.4l4.4 3.5l-1.1 0.5l5.3 2.2l-3.3-4.8l-0.2 1.2l-4.5-3.5zM899.2 439.1l0.2 0.3l-0.7 0.1l2.6 1.9l-1-3l-0.4 0.6l-0.1-0.2zM917.4 439.3l0.7-1l0.6 1.1l1.9-5.4l-4.6 3.5l1.2 0.2l-0.6 0.9zM935 438.8l-3.2-17.1l1.2 0.4l-2.7-5.1l-0.6 5.7l1-0.8l3.3 17.1zM952.2 439.4l2.7-1l-0.1 1.2l4.5-3.6l-5.8 0.5l1 0.8l-2.7 1.1zM969.1 439.2l0.3 0.5l-1.2 0.1l4.3 3.4l-1.7-5.2l-0.6 1.1l-0.3-0.5zM987.5 438.7l-2.2-4l1.2-0.1l-4.1-4l1.2 5.6l0.7-1l2.2 4zM1004.1 438.6l-0.8 0.9l-0.5-1.1l-2.1 5.4l4.7-3.3l-1.2-0.3l0.7-0.9zM1022.4 439.3l0.6-0.6l0.4 1.2l2.8-5.1l-5.1 2.7l1.2 0.4l-0.7 0.6zM1040 439.1l0.7-1.8l0.8 0.9l0.3-5.7l-3.4 4.6l1.2-0.2l-0.6 1.8zM1056.7 438.5l-3.8 2.2l0-1.3l-4 4.2l5.6-1.3l-1-0.7l3.8-2.2zM1074.7 439.5l5.5-1.8l-0.2 1.2l4.8-3.2l-5.8 0.1l0.9 0.8l-5.6 1.8zM1092.5 439.2l4.2-6.1l0.6 1l1.7-5.4l-4.4 3.6l1.2 0.1l-4.3 6.2zM1110 439.1l5.1-20.3l0.9 0.8l-0.3-5.7l-2.9 4.9l1.2-0.3l-5 20.3zM1127.5 438.9l-0.3 0.5l-0.6 0l-0.3-0.5l0.3-0.4l0.6 0zM1144.3 438.7l-0.2 0.2l-0.1-0.7l-1.8 2.3l2.8-0.9l-0.6-0.3l0.3-0.1zM1162.5 438.8l-4.3-15.7l1.2 0.3l-3.1-4.9l-0.1 5.7l0.9-0.8l4.4 15.7zM1179.6 439.5l7.2-1.4l-0.4 1.2l5.1-2.6l-5.7-0.6l0.7 1l-7.1 1.3zM1197 438.4l-2.8 0.1l0.6-1.2l-5.5 1.9l5.6 1.4l-0.6-1l2.7-0.1zM1215 439.1l1.5-3.9l0.8 0.9l0.5-5.7l-3.6 4.6l1.3-0.2l-1.5 3.9zM838.2 453.5l-0.8 0l0.5-1.1l-5.5 1.7l5.5 1.6l-0.5-1.1l0.9 0zM856.1 454.1l-0.1-0.3l0.7 0.2l-1.2-3l-0.7 3.2l0.6-0.4l0 0.3zM873.5 453.6l-8.2-5l1-0.7l-5.5-1.4l3.8 4.2l0.1-1.2l8.3 5.1zM891.3 453.9l-1.3-4.3l1.2 0.2l-3.2-4.8l0 5.8l0.9-0.9l1.3 4.3zM908.6 454.5l2.2-1.5l0.2 1.2l3.6-4.4l-5.5 1.7l1.1 0.6l-2.3 1.5zM926.1 453.7l-0.4-0.4l1.1-0.4l-4.9-2.4l2.8 4.7l0.3-1.1l0.4 0.4zM943.6 454.5l3.8-2.8l0.2 1.2l3.5-4.6l-5.4 2l1.1 0.5l-3.9 2.8zM961.2 454.4l0.7-0.9l0.5 1.2l2.3-5.3l-4.8 3.1l1.2 0.3l-0.8 0.9zM977.9 453.8l-0.3 0.3l-0.3-1l-2.3 4.2l4.2-2.2l-1-0.4l0.4-0.3zM996 454.6l6.3-3.3l0.1 1.2l4.1-4l-5.7 1.1l1 0.7l-6.3 3.3zM1013 453.9l-0.2 0.3l-0.3-0.6l-0.9 3l2.4-2l-0.7-0.1l0.2-0.2zM1030.3 454.1l0 0.4l-0.8-0.5l1 4.3l1.5-4.1l-0.9 0.3l0.1-0.4zM1048.1 453.8l-0.2 0.1l0-0.6l-2.3 1.9l3-0.3l-0.5-0.4l0.3-0.2zM1065.2 453.9l-1.2 4l-0.9-0.8l0.1 5.7l3.1-4.8l-1.2 0.2l1.2-4zM1083.8 454.2l0.6-3.1l1 0.7l-0.6-5.7l-2.7 5.1l1.2-0.3l-0.6 3.1zM1100.8 453.5l-22-3.5l0.7-1l-5.7 0.8l5.2 2.5l-0.4-1.2l22.1 3.5zM1118.7 453.8l-1.8-2.7l1.2-0.2l-4.5-3.6l1.8 5.5l0.6-1.1l1.8 2.7zM1135.3 454.1l0 0.4l-0.8-0.4l1.2 4l1.3-4l-0.9 0.4l0.1-0.4zM1152.8 454.4l0.8 0.9l-1.2 0.3l4.8 3.1l-2.3-5.2l-0.5 1.1l-0.7-0.9zM1171.2 453.8l-11.3-15.6l1.2-0.2l-4.5-3.5l1.9 5.5l0.5-1.1l11.3 15.5zM1188.8 453.9l-3.5-7.9l1.2 0.1l-3.7-4.4l0.7 5.7l0.8-1l3.4 7.9zM846.8 468.7l-1.5 0.5l0.2-1.2l-4.8 3.1l5.7 0l-0.8-0.9l1.6-0.4zM864.7 468.7l-17.4-4.9l0.9-0.9l-5.8 0l4.9 3.1l-0.3-1.2l17.3 5zM882.2 469.5l0.3-0.2l0.2 0.7l1.8-2.9l-3.2 1.4l0.7 0.3l-0.2 0.2zM900 469.1l-1.7-5.6l1.2 0.2l-3.3-4.8l0.1 5.8l0.9-0.9l1.8 5.6zM917.2 469.8l6.3-2.4l-0.2 1.2l4.6-3.5l-5.7 0.4l0.9 0.9l-6.3 2.3zM935 469.2l-0.2 0.5l-0.6 0l-0.2-0.5l0.2-0.4l0.6 0zM952.3 469.7l0.8-0.6l0.2 1.2l3.4-4.7l-5.4 2.1l1.1 0.5l-0.7 0.6zM969.3 469.4l0.1 0.2l-0.6 0l1.9 1.8l-0.5-2.5l-0.4 0.4l-0.1-0.2zM987.5 469.2l-1.2-9.3l1.1 0.4l-2.3-5.2l-0.9 5.6l1-0.7l1.3 9.3zM1004.5 469.7l0.4 0l-0.5 0.8l4.2-0.9l-4-1.6l0.3 0.9l-0.4-0.1zM1022.5 469.2l-0.1-2.9l1.1 0.5l-1.9-5.4l-1.4 5.6l1.1-0.6l0.2 2.9zM1039.3 469.5l0.3 0.3l-0.8 0.3l3.5 1.4l-2.1-3.1l-0.2 0.8l-0.3-0.2zM1057.1 468.7l-6.7-1.6l0.8-1l-5.7 0.3l4.9 2.9l-0.2-1.2l6.7 1.7zM1075 469l-1.8-3.6l1.2 0l-3.9-4.2l1 5.6l0.7-1l1.8 3.7zM1092.3 469.4l0.2-0.3l0.4 0.7l1.1-3.5l-2.9 2.4l0.8 0.1l-0.2 0.2zM1110 469.4l1.3-5.4l1 0.8l-0.4-5.7l-2.8 4.9l1.2-0.2l-1.3 5.3zM1127.5 469.5l3.3-6.1l0.7 1l1.3-5.6l-4.1 4l1.2 0.1l-3.4 6.1zM1145 469l-21.3-45.6l1.3 0l-3.9-4.2l0.9 5.6l0.7-0.9l21.3 45.6zM1162.5 469.1l-1.1-3l1.2 0.1l-3.4-4.6l0.3 5.8l0.9-0.9l1.1 2.9zM1179.6 468.7l-11-2.5l0.8-0.9l-5.8 0.4l5.1 2.8l-0.3-1.2l11 2.5zM855.4 484.5l0 0.4l-0.8-0.2l2.1 3.7l0.2-4.3l-0.7 0.6l-0.1-0.4zM873.2 483.8l-21.8 1l0.5-1.1l-5.4 1.8l5.5 1.5l-0.6-1.1l21.9-1zM890.8 483.9l-12.1-1.3l0.7-1.1l-5.6 1.1l5.3 2.2l-0.5-1.1l12.1 1.2zM908.8 484.6l1.9-5.1l0.8 0.9l0.5-5.7l-3.6 4.6l1.3-0.2l-2 5.1zM926 484.9l11.1-5.5l0 1.2l4.2-3.9l-5.7 0.9l1 0.8l-11.1 5.5zM943.3 484l-0.3 0l0.5-0.7l-3.8 0.4l3.3 1.8l-0.2-0.8l0.4 0.1zM960.5 484.1l-0.2 0.2l-0.2-0.8l-2.2 2.9l3.5-1.2l-0.7-0.3l0.3-0.2zM978.8 484.2l-0.2-0.5l1.2 0.2l-3.2-4.6l0.1 5.6l0.9-0.8l0.1 0.5zM996.2 484l-0.9-0.9l1.2-0.4l-4.9-3l2.4 5.2l0.5-1.1l0.8 1zM1013.7 484.7l0.3-0.5l0.5 1l1.5-5.1l-4 3.5l1.1 0.1l-0.3 0.4zM1031 484l-0.3-0.3l0.9-0.5l-4.7-1.8l3 4.2l0.2-1.1l0.4 0.3zM1048.7 484.1l-10.9-19.1l1.3-0.1l-4.2-3.9l1.3 5.6l0.7-1l10.9 19.1zM1065.6 484.7l0.3 0.2l-0.6 0.4l3.4 0.7l-2.5-2.5l0 0.8l-0.3-0.2zM1083.8 484.4l0.4-8.8l1.1 0.6l-1.4-5.5l-1.9 5.4l1.1-0.5l-0.4 8.8zM1101.1 484.8l0.4-0.3l0.2 1.1l2.9-4.4l-4.8 2l1 0.5l-0.4 0.3zM1118.8 484.2l-3.1-9.2l1.2 0.2l-3.3-4.7l0.2 5.7l0.8-0.8l3.1 9.2zM1136.1 484l-3.9-3.1l1.1-0.5l-5.3-2.1l3.3 4.7l0.3-1.2l3.8 3zM1153.5 483.9l-9.2-3.7l1-0.8l-5.7-0.6l4.4 3.6l-0.1-1.2l9.1 3.7zM1171.2 484.8l6.2-6.9l0.5 1.1l2.5-5.1l-5 2.9l1.2 0.4l-6.3 6.8zM864.1 499.2l-5.5 7.5l-0.6-1.1l-1.9 5.4l4.6-3.4l-1.2-0.2l5.4-7.5zM882.2 499l-16-4.7l0.8-0.9l-5.7 0l4.8 3.2l-0.2-1.3l15.9 4.8zM900 499.6l0.2-3.2l1.1 0.6l-1.4-5.6l-1.9 5.5l1.1-0.5l-0.1 3.1zM916.8 500.1l5.1 1.6l-0.9 0.9l5.7 0.2l-4.7-3.3l0.2 1.2l-5-1.7zM934.9 500l4.8-4.6l0.3 1.1l2.8-5l-5.1 2.7l1.2 0.4l-4.8 4.6zM952.2 500.1l12.5-4.9l-0.1 1.3l4.5-3.6l-5.7 0.5l0.9 0.8l-12.5 4.8zM969.6 499.2l-0.3-0.1l0.6-0.5l-3.6-0.3l2.8 2.2l0-0.8l0.3 0.2zM987.3 499.1l-2-1.2l1-0.6l-5.5-1.4l3.9 4.2l0.1-1.2l1.9 1.1zM1004.9 499.2l-0.5-0.5l1.2-0.4l-5.1-2.8l2.7 5.1l0.4-1.2l0.5 0.5zM1022.4 499.2l-2.5-2.4l1.1-0.4l-5.1-2.7l2.9 5l0.3-1.1l2.5 2.4zM1040 499.7l2.5-8.5l0.9 0.9l-0.1-5.8l-3.1 4.9l1.2-0.3l-2.4 8.5zM1057.4 499.9l0.9-1.2l0.6 1.1l1.8-5.4l-4.5 3.5l1.2 0.2l-0.8 1.1zM1075 499.5l-0.3-25.5l1.1 0.5l-1.7-5.5l-1.6 5.6l1.1-0.6l0.4 25.6zM1092.3 499.1l-4.2-2.2l1-0.7l-5.7-1.1l4.2 4l0-1.2l4.1 2.1zM1110 499.5l-0.5-8l1.1 0.5l-2-5.4l-1.3 5.6l1.1-0.6l0.6 8zM1127.4 499.9l7.5-9.5l0.5 1.1l2.1-5.3l-4.7 3.3l1.2 0.2l-7.4 9.5zM1144.8 499.1l-14.8-7.7l0.9-0.7l-5.6-1l4.1 3.9l0-1.2l14.8 7.6zM1162.5 499.7l0.4-1.3l0.9 0.8l0.1-5.7l-3.2 4.7l1.2-0.2l-0.4 1.4zM891 514.2l-8.3-3.8l1-0.7l-5.7-0.8l4.3 3.8l0-1.3l8.2 3.8zM908.6 515.2l6.6-4.9l0.2 1.3l3.4-4.6l-5.4 1.9l1.1 0.6l-6.6 4.8zM926.3 514.7l0.1-1.6l1 0.6l-1.4-5.5l-1.9 5.4l1.2-0.5l-0.1 1.6zM943.8 514.8l1.9-11.4l1 0.7l-0.8-5.7l-2.5 5.2l1.2-0.4l-1.9 11.4zM961.2 514.4l-4.9-6.7l1.2-0.2l-4.6-3.5l1.9 5.4l0.6-1.1l4.9 6.7zM977.9 514.3l-1.7 1.7l-0.4-1.1l-2.6 5.1l5-2.9l-1.2-0.3l1.6-1.7zM996.2 515l7.5-9.7l0.6 1.1l2-5.3l-4.6 3.3l1.2 0.3l-7.6 9.7zM1013.5 515.2l1.9-0.8l-0.1 1.3l4.5-3.6l-5.7 0.5l0.9 0.8l-2 0.8zM1031.3 514.6l-1.4-11.2l1.2 0.4l-2.3-5.2l-1 5.6l1-0.7l1.4 11.3zM1048.6 514.3l-1.9-1.5l1.1-0.5l-5.4-2l3.4 4.6l0.2-1.2l1.9 1.4zM1066 514.2l-9.2-5.7l1-0.7l-5.5-1.5l3.8 4.3l0.1-1.2l9.3 5.8zM1083.8 514.5l-1.2-2.5l1.2 0l-3.7-4.3l0.7 5.7l0.8-1l1.1 2.5zM1101.1 514.7l0-0.3l0.7 0.4l-0.8-3.6l-1.3 3.4l0.7-0.3l0 0.4zM1117.8 514.8l0.1 0.4l-0.9-0.3l1.8 3.8l0.7-4.2l-0.8 0.6l0-0.4zM1136.3 514.7l0-1.5l1.1 0.5l-1.6-5.5l-1.7 5.5l1.1-0.5l0 1.5zM934.5 529.4l-0.5 0.1l0.4-0.9l-4.2 1.6l4.4 0.9l-0.5-0.8l0.4 0zM952.5 529.9l0.6-4.7l1 0.7l-0.9-5.6l-2.3 5.2l1.1-0.4l-0.5 4.7zM970 529.9l-0.2 0.4l-0.6 0l-0.2-0.4l0.2-0.5l0.6 0zM987.4 530.3l5.2-4.5l0.3 1.2l3.2-4.8l-5.3 2.3l1.1 0.5l-5.3 4.4zM1004.6 530.4l8.3-0.9l-0.5 1.2l5.3-2.2l-5.6-1.1l0.6 1l-8.3 0.9zM1022.5 529.6l-8.8-18l1.2 0l-3.9-4.2l0.9 5.6l0.8-0.9l8.8 18zM1039.1 529.5l-1.1 1.2l-0.4-1.2l-2.4 5.2l4.9-3l-1.2-0.3l1-1.2zM1057.5 529.9l-0.4-14.8l1.2 0.5l-1.8-5.4l-1.5 5.5l1-0.6l0.5 14.8zM1075 529.7l-1.3-3.6l1.2 0.1l-3.4-4.6l0.3 5.8l0.9-0.9l1.3 3.6zM1092 529.3l-0.5 0l0.6-1.1l-5.6 1.5l5.4 1.8l-0.5-1.1l0.6 0zM1013.8 545l0.1-3.2l1.1 0.6l-1.5-5.6l-1.8 5.5l1.1-0.5l-0.1 3.2zM1031.2 544.8l-3.4-6.8l1.2 0l-3.9-4.1l1 5.6l0.7-1l3.5 6.8zM950.4 149.6l-66.4-63.6l1.1-0.4l-5.1-2.6l2.8 5l0.4-1.2l66.4 63.6zM1179.9 213.1l28.8-26.4l0.4 1.2l2.9-4.9l-5.2 2.5l1.2 0.4l-28.9 26.4zM1141.5 516.9l-15.1-70.6l1.2 0.3l-2.8-5l-0.5 5.7l1-0.7l15.2 70.5zM931.2 302.5l-49.1 21.9l0.1-1.2l-4.4 3.7l5.7-0.7l-1-0.8l49.1-21.9zM876.9 515.1l-32-10.1l0.8-0.9l-5.7-0.1l4.7 3.2l-0.1-1.2l31.9 10.1zM834 316l-22-20.1l1.2-0.4l-5.2-2.5l2.9 4.9l0.4-1.2l21.9 20.1zM1188.3 228.5l15.7-9.5l0.1 1.2l3.9-4.2l-5.6 1.4l1.1 0.7l-15.8 9.4zM1220.2 478.5l-35.4-13.3l0.9-0.8l-5.7-0.4l4.6 3.5l-0.2-1.2l35.4 13.2zM1035.3 529.5l-30.7-17.5l1-0.7l-5.6-1.3l4 4.2l0-1.3l30.7 17.6zM825.3 359.5l-18.7-9.7l1-0.7l-5.6-1.1l4.1 4l0-1.2l18.6 9.7zM868.2 459.5l-25.3-8.5l0.8-0.8l-5.7-0.2l4.7 3.3l-0.2-1.2l25.3 8.4zM890.5 197.9l-6.8-29.2l1.2 0.3l-2.9-5l-0.3 5.7l0.9-0.8l6.9 29.2zM1100.2 531.5l21.6-10.8l0 1.2l4.2-3.9l-5.7 1l1 0.7l-21.5 10.8zM1079.5 532l-0.8-39.1l1.1 0.6l-1.8-5.5l-1.5 5.5l1.1-0.5l0.9 39zM1160.5 439.9l-4.1-25.1l1.1 0.4l-2.5-5.2l-0.7 5.7l1-0.7l4.2 25.1zM1221.8 275.5l-27.5 12l0.1-1.2l-4.4 3.7l5.7-0.7l-0.9-0.8l27.4-12z"/></g><rect x="786.5" y="104.5" width="499.0999999999999" height="498.0" fill="none" stroke="#000" stroke-width="1"/><text x="786.5" y="622.8" font-size="13.4" text-anchor="middle">0</text><text x="776.6" y="607.5" font-size="13.4" text-anchor="end">0</text><text x="884.1" y="622.8" font-size="13.4" text-anchor="middle">200</text><text x="776.6" y="510" font-size="13.4" text-anchor="end">200</text><text x="981.7" y="622.8" font-size="13.4" text-anchor="middle">400</text><text x="776.6" y="412.5" font-size="13.4" text-anchor="end">400</text><text x="1079.3" y="622.8" font-size="13.4" text-anchor="middle">600</text><text x="776.6" y="315" font-size="13.4" text-anchor="end">600</text><text x="1176.9" y="622.8" font-size="13.4" text-anchor="middle">800</text><text x="776.6" y="217.5" font-size="13.4" text-anchor="end">800</text><text x="1274.5" y="622.8" font-size="13.4" text-anchor="middle">1000</text><text x="776.6" y="120" font-size="13.4" text-anchor="end">1000</text><path d="M786.5 602.5v4.5M786.5 602.5h-4.5M884.1 602.5v4.5M786.5 505h-4.5M981.7 602.5v4.5M786.5 407.5h-4.5M1079.3 602.5v4.5M786.5 310h-4.5M1176.9 602.5v4.5M786.5 212.5h-4.5M1274.5 602.5v4.5M786.5 115h-4.5" stroke="#000" stroke-width="1" fill="none"/></svg><div class="combo" style="left:13px;top:646px;width:272px">ITMX<b></b></div><div class="gbox"></div><div class="radio on" style="left:302.5px"></div><div class="lbl2" style="left:322.5px;top:661px">Wavefront + Quiver</div><div class="radio" style="left:822.5px"></div><div class="lbl2" style="left:843px;top:661px">Original + modified image</div><div class="pane"></div><div class="tab sel" style="left:291px;width:46px">Still</div><div class="tab" style="left:336.5px;width:75px">Playback</div><div class="tab" style="left:411px;width:47px">Live</div><div class="lbl2" style="left:302px;top:741px">Reference:</div><div class="inp" style="left:670px;top:736px;width:300px">1443890244</div><div class="btn" style="left:976px;top:736px;width:361px;height:25px">Get reference time from CDS</div><div class="lbl2" style="left:302px;top:772px">Show:</div><div class="inp" style="left:670px;top:767px;width:300px">1443890444</div><div class="btn" style="left:976px;top:767px;width:361px;height:25px">Now</div><div class="btn" style="left:976px;top:798px;width:361px;height:25px">Plot</div><div class="btn" style="left:976px;top:829px;width:361px;height:25px">Save wavefront data</div><div class="lbl2" style="left:302px;top:865px">ndscope:</div><div class="inp" style="left:670px;top:860px;width:300px"></div><div class="btn" style="left:976px;top:860px;width:361px;height:25px">Open ndscope</div><div class="status">x=322.71, y=330.56</div><div class="grip"></div></div></div></body></html>
